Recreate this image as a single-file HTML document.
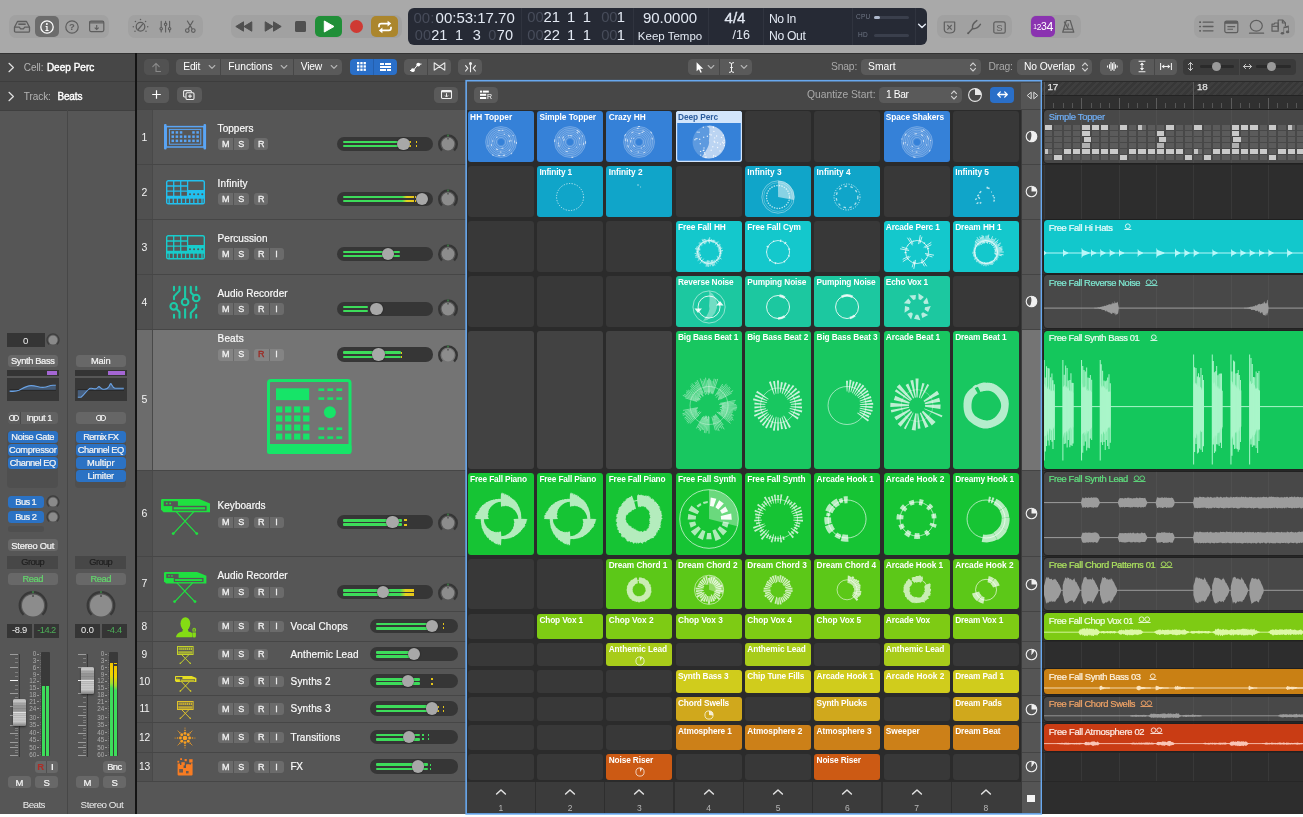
<!DOCTYPE html>
<html lang="en"><head><meta charset="utf-8"><title>Logic Pro - Live Loops</title>
<style>
html,body{margin:0;padding:0;background:#fff}
body{width:1303px;height:817px;overflow:hidden;position:relative;font-family:"Liberation Sans",sans-serif}
#app{position:absolute;left:0;top:0;width:1303px;height:817px;overflow:hidden;background:#fff;will-change:transform}
#app div,#app svg{position:absolute;box-sizing:border-box}
#app svg{overflow:visible}
.t{white-space:nowrap}
.c{overflow:hidden;border-radius:3px}
.c .t{font-size:8.3px;line-height:11px;color:#fff;left:2.3px;top:1.3px;font-weight:bold}
.b{background:#6b6b6b;color:#f2f2f2;font-size:9px;line-height:12px;text-align:center;height:12px}
</style></head>
<body><div id="app">
<!-- toolbar -->
<div style="left:0px;top:0px;width:1303px;height:53.2px;background:#a9a9a9"></div>
<div style="left:0px;top:52.6px;width:1303px;height:1.4px;background:#333"></div>
<div style="left:9px;top:14.7px;width:100px;height:23px;background:#a1a1a1;border-radius:7px"></div>
<div style="left:35px;top:15.9px;width:23.6px;height:20.9px;background:#6c6c6c;border-radius:5px"></div>
<svg style="left:13px;top:19px;" width="18" height="15" viewBox="0 0 18 15"><g fill="none" stroke="#5e5e5e" stroke-width="1.3" stroke-linejoin="round"><path d="M1.5 8.2 L4.5 2.5 H13.5 L16.5 8.2 V12 Q16.5 13.2 15.3 13.2 H2.7 Q1.5 13.2 1.5 12 Z"/><path d="M1.5 8.2 H6.3 L7.6 9.8 H10.4 L11.7 8.2 H16.5"/><path d="M5.3 5.2 H12.7" stroke-width="1.6"/></g></svg>
<svg style="left:39px;top:18.5px;" width="16" height="16" viewBox="0 0 16 16"><circle cx="8" cy="8" r="6.2" fill="none" stroke="#fff" stroke-width="1.3"/><circle cx="7.9" cy="4.9" r="1" fill="#fff"/><path d="M6.6 7 H8.6 V11 H9.6 V11.9 H6.4 V11 H7.4 V7.9 H6.6Z" fill="#fff"/></svg>
<svg style="left:63.5px;top:18.5px;" width="16" height="16" viewBox="0 0 16 16"><circle cx="8" cy="8" r="6.2" fill="none" stroke="#5e5e5e" stroke-width="1.2"/><text x="8" y="11.3" font-size="9.5" font-family='"Liberation Sans", sans-serif' text-anchor="middle" fill="#5e5e5e" font-weight="bold">?</text></svg>
<svg style="left:88px;top:19px;" width="18" height="15" viewBox="0 0 18 15"><rect x="1.6" y="2" width="14.2" height="10.6" rx="1.5" fill="none" stroke="#5e5e5e" stroke-width="1.2"/><rect x="1.6" y="2" width="14.2" height="2.6" fill="#5e5e5e" opacity=".75"/><path d="M8.7 6 V10.4 M6.7 8.6 L8.7 10.5 L10.7 8.6" fill="none" stroke="#5e5e5e" stroke-width="1.1"/></svg>
<div style="left:128px;top:14.7px;width:75px;height:23px;background:#a1a1a1;border-radius:7px"></div>
<svg style="left:129.5px;top:16px;" width="21" height="21" viewBox="0 0 21 21"><g fill="none" stroke="#5e5e5e" stroke-width="1.25" stroke-linecap="round"><circle cx="10.5" cy="10.7" r="4.3"/><path d="M8.2 13.5 L12.7 8.2"/></g><circle cx="10.50" cy="3.50" r=".75" fill="#5e5e5e"/><circle cx="15.59" cy="5.61" r=".75" fill="#5e5e5e"/><circle cx="17.70" cy="10.70" r=".75" fill="#5e5e5e"/><circle cx="16.02" cy="15.33" r=".75" fill="#5e5e5e"/><circle cx="4.98" cy="15.33" r=".75" fill="#5e5e5e"/><circle cx="3.30" cy="10.70" r=".75" fill="#5e5e5e"/><circle cx="5.41" cy="5.61" r=".75" fill="#5e5e5e"/></svg>
<svg style="left:156px;top:17px;" width="18" height="19" viewBox="0 0 18 19"><g fill="none" stroke="#5e5e5e" stroke-width="1.15" stroke-linecap="round"><path d="M5.2 4.4 V10.4 M5.2 13 V15 M9.6 4.4 V6 M9.6 8.6 V15 M13.6 4.4 V10.4 M13.6 13 V15"/><circle cx="5.2" cy="11.7" r="1.25"/><circle cx="9.6" cy="7.3" r="1.25"/><circle cx="13.6" cy="11.7" r="1.25"/></g></svg>
<svg style="left:182px;top:17px;" width="16" height="19" viewBox="0 0 16 19"><g fill="none" stroke="#5e5e5e" stroke-width="1.15" stroke-linecap="round"><path d="M5.4 4 L10 11.6 M11 4 L6.4 11.6"/><circle cx="5.3" cy="13.5" r="1.8"/><circle cx="11.3" cy="13.5" r="1.8"/></g></svg>
<div style="left:231px;top:14.7px;width:171px;height:23px;background:#a1a1a1;border-radius:7px"></div>
<svg style="left:234px;top:19px;" width="20" height="15" viewBox="0 0 20 15"><path d="M9.5 2.8 V12.2 L1.8 7.5 Z M17.8 2.8 V12.2 L10 7.5 Z" fill="#505050" stroke="#505050" stroke-width="1" stroke-linejoin="round"/></svg>
<svg style="left:263px;top:19px;" width="20" height="15" viewBox="0 0 20 15"><path d="M2.2 2.8 V12.2 L10 7.5 Z M10.5 2.8 V12.2 L18.2 7.5 Z" fill="#505050" stroke="#505050" stroke-width="1" stroke-linejoin="round"/></svg>
<div style="left:295px;top:21px;width:11px;height:11px;background:#505050;border-radius:1.5px"></div>
<div style="left:315.4px;top:16px;width:26.7px;height:20.6px;background:#208f38;border-radius:5px"></div>
<svg style="left:320px;top:19px;" width="17" height="15" viewBox="0 0 17 15"><path d="M4.3 2 V13 L14 7.5 Z" fill="#fff" stroke="#fff" stroke-width="1" stroke-linejoin="round"/></svg>
<div style="left:349.5px;top:20px;width:13px;height:13px;background:#cf3a33;border-radius:50%"></div>
<div style="left:371.2px;top:16px;width:26.8px;height:20.6px;background:#ab862d;border-radius:5px"></div>
<svg style="left:375.5px;top:18.5px;" width="18" height="16" viewBox="0 0 18 16"><g fill="none" stroke="#fff" stroke-width="1.7" stroke-linejoin="round"><path d="M3 8.2 V6.8 Q3 4.6 5.2 4.6 H12.4"/><path d="M15 7.8 V9.2 Q15 11.4 12.8 11.4 H5.6"/></g><path d="M11.6 1.8 L15.2 4.6 L11.6 7.4Z M6.4 8.6 L2.8 11.4 L6.4 14.2Z" fill="#fff"/></svg>
<div style="left:937px;top:14.7px;width:75px;height:23px;background:#a1a1a1;border-radius:7px"></div>
<svg style="left:942px;top:19.5px;" width="15" height="15" viewBox="0 0 15 15"><path d="M2.3 2 H12.7 V9.5 Q12.7 13 7.5 13 Q2.3 13 2.3 9.5 Z" fill="none" stroke="#5e5e5e" stroke-width="1.2" stroke-linejoin="round"/><path d="M5.3 5 L9.7 9.6 M9.7 5 L5.3 9.6" stroke="#5e5e5e" stroke-width="1.1"/></svg>
<svg style="left:965px;top:18px;" width="18" height="18" viewBox="0 0 18 18"><g fill="none" stroke="#5e5e5e" stroke-width="1.5" stroke-linecap="round"><path d="M3.2 15.2 L7.6 10.6"/><path d="M11.8 2.6 Q6.4 6.2 7.6 10.6 Q12 11.4 15.4 6.4"/></g><circle cx="3.2" cy="15.3" r="1" fill="#5e5e5e"/></svg>
<svg style="left:992px;top:19.5px;" width="15" height="15" viewBox="0 0 15 15"><rect x="1.8" y="1.8" width="11.4" height="11.4" rx="1.8" fill="none" stroke="#5e5e5e" stroke-width="1.2"/><text x="7.5" y="10.9" font-size="9.5" font-family='"Liberation Sans", sans-serif' text-anchor="middle" fill="#5e5e5e">S</text></svg>
<div style="left:1029.5px;top:14.7px;width:51.5px;height:23px;background:#a1a1a1;border-radius:7px"></div>
<div style="left:1030.6px;top:16px;width:24.6px;height:20.8px;background:#8a33b0;border-radius:5px"></div>
<div class="t" style="left:1033.3px;top:19.4px;color:#fff;line-height:14px;height:14px;white-space:nowrap;letter-spacing:-.35px"><span style="font-size:6.6px;vertical-align:middle">1</span><span style="font-size:8.4px;vertical-align:middle">2</span><span style="font-size:10.4px;vertical-align:middle">3</span><span style="font-size:12.4px;vertical-align:middle">4</span></div>
<svg style="left:1060px;top:18px;" width="17" height="17" viewBox="0 0 17 17"><g fill="none" stroke="#5e5e5e" stroke-width="1.2" stroke-linejoin="round"><path d="M6.3 2.5 H10.2 L13.8 14.2 H2.7 Z"/><path d="M3.6 11.2 H12.9"/><path d="M8.3 11 L4.2 3.6" /><path d="M8.2 5.6 V8.4" stroke-width="1.1"/></g></svg>
<div style="left:1194px;top:14.7px;width:101px;height:23px;background:#a1a1a1;border-radius:7px"></div>
<svg style="left:1198px;top:19px;" width="17" height="15" viewBox="0 0 17 15"><g stroke="#5e5e5e" stroke-width="1.3" stroke-linecap="round"><path d="M5.2 3.2 H15 M5.2 7.5 H15 M5.2 11.8 H15"/><path d="M1.9 3.2 h.4 M1.9 7.5 h.4 M1.9 11.8 h.4" stroke-width="1.7"/></g></svg>
<svg style="left:1223px;top:18.5px;" width="17" height="16" viewBox="0 0 17 16"><rect x="1.8" y="2.2" width="13" height="11.4" rx="1.6" fill="none" stroke="#5e5e5e" stroke-width="1.2"/><rect x="1.8" y="2.2" width="13" height="2.6" fill="#5e5e5e"/><path d="M4.4 7.6 H12.2 M4.4 10.3 H10" stroke="#5e5e5e" stroke-width="1.1"/></svg>
<svg style="left:1247px;top:18px;" width="19" height="18" viewBox="0 0 19 18"><g fill="none" stroke="#5e5e5e" stroke-width="1.2" stroke-linecap="round"><ellipse cx="9.3" cy="7.8" rx="6" ry="5.4"/><path d="M2.5 15.2 H16.6"/></g></svg>
<svg style="left:1270px;top:17px;" width="24" height="20" viewBox="0 0 24 20"><g fill="none" stroke="#5e5e5e" stroke-width="1.2" stroke-linejoin="round"><path d="M2 14.2 V7.2 H4 L5 6 H8.2 V14.2 Z"/><path d="M2 9.3 H8"/><path d="M8.2 12.6 V3 H12.6 L15.4 5.8 V9"/><path d="M12.4 3.2 V6 H15.2"/></g><g fill="#5e5e5e"><ellipse cx="12.4" cy="16.2" rx="1.7" ry="1.3"/><ellipse cx="17.6" cy="14.9" rx="1.7" ry="1.3"/><path d="M13.5 16.2 V9.8 L18.8 8.6 V14.9 H18 V10.4 L14.1 11.3 V16.2Z"/></g></svg>
<!-- lcd -->
<div style="left:408px;top:8px;width:519px;height:36.5px;background:#262a35;border-radius:6px"></div>
<div class="t" style="left:354.4px;width:80px;text-align:right;top:9.3px;font-size:15px;line-height:17px;color:#474c5a;">00:</div>
<div class="t" style="left:434.79999999999995px;width:80px;text-align:right;top:9.3px;font-size:15px;line-height:17px;color:#e3e9f3;">00:53:17.70</div>
<div class="t" style="left:351px;width:80px;text-align:right;top:27.2px;font-size:14.5px;line-height:16.5px;color:#474c5a;">00</div>
<div class="t" style="left:367.3px;width:80px;text-align:right;top:27.2px;font-size:14.5px;line-height:16.5px;color:#e3e9f3;">21</div>
<div class="t" style="left:383.2px;width:80px;text-align:right;top:27.2px;font-size:14.5px;line-height:16.5px;color:#e3e9f3;">1</div>
<div class="t" style="left:400.8px;width:80px;text-align:right;top:27.2px;font-size:14.5px;line-height:16.5px;color:#e3e9f3;">3</div>
<div class="t" style="left:416.3px;width:80px;text-align:right;top:27.2px;font-size:14.5px;line-height:16.5px;color:#474c5a;">0</div>
<div class="t" style="left:433px;width:80px;text-align:right;top:27.2px;font-size:14.5px;line-height:16.5px;color:#e3e9f3;">70</div>
<div class="t" style="left:463.79999999999995px;width:80px;text-align:right;top:9.3px;font-size:14.8px;line-height:16.8px;color:#474c5a;">00</div>
<div class="t" style="left:480px;width:80px;text-align:right;top:9.3px;font-size:14.8px;line-height:16.8px;color:#e3e9f3;">21</div>
<div class="t" style="left:495.29999999999995px;width:80px;text-align:right;top:9.3px;font-size:14.8px;line-height:16.8px;color:#e3e9f3;">1</div>
<div class="t" style="left:511px;width:80px;text-align:right;top:9.3px;font-size:14.8px;line-height:16.8px;color:#e3e9f3;">1</div>
<div class="t" style="left:537.6px;width:80px;text-align:right;top:9.3px;font-size:14.8px;line-height:16.8px;color:#474c5a;">00</div>
<div class="t" style="left:545px;width:80px;text-align:right;top:9.3px;font-size:14.8px;line-height:16.8px;color:#e3e9f3;">1</div>
<div class="t" style="left:463.79999999999995px;width:80px;text-align:right;top:27.2px;font-size:14.8px;line-height:16.8px;color:#474c5a;">00</div>
<div class="t" style="left:480px;width:80px;text-align:right;top:27.2px;font-size:14.8px;line-height:16.8px;color:#e3e9f3;">22</div>
<div class="t" style="left:495.29999999999995px;width:80px;text-align:right;top:27.2px;font-size:14.8px;line-height:16.8px;color:#e3e9f3;">1</div>
<div class="t" style="left:511px;width:80px;text-align:right;top:27.2px;font-size:14.8px;line-height:16.8px;color:#e3e9f3;">1</div>
<div class="t" style="left:537.6px;width:80px;text-align:right;top:27.2px;font-size:14.8px;line-height:16.8px;color:#474c5a;">00</div>
<div class="t" style="left:545px;width:80px;text-align:right;top:27.2px;font-size:14.8px;line-height:16.8px;color:#e3e9f3;">1</div>
<div style="left:520.5px;top:8px;width:1px;height:36.5px;background:#30343f"></div>
<div style="left:633px;top:8px;width:1px;height:36.5px;background:#30343f"></div>
<div style="left:707.5px;top:8px;width:1px;height:36.5px;background:#30343f"></div>
<div style="left:762.5px;top:8px;width:1px;height:36.5px;background:#30343f"></div>
<div style="left:851.5px;top:8px;width:1px;height:36.5px;background:#30343f"></div>
<div style="left:915px;top:8px;width:1px;height:36.5px;background:#30343f"></div>
<div class="t" style="left:633px;width:74px;text-align:center;top:9.3px;font-size:15px;line-height:17px;color:#e3e9f3">90.0000</div>
<div class="t" style="left:633px;width:74px;text-align:center;top:29px;font-size:11.5px;line-height:14px;color:#e3e9f3">Keep Tempo</div>
<div class="t" style="left:708px;width:54px;text-align:center;top:9.3px;font-size:15px;line-height:17px;color:#e3e9f3;-webkit-text-stroke:.3px #e3e9f3">4/4</div>
<div class="t" style="left:670px;width:80px;text-align:right;top:28px;font-size:12.5px;line-height:14.5px;color:#e3e9f3;">/16</div>
<div class="t" style="left:769px;top:11.5px;font-size:12.2px;line-height:14.2px;color:#e3e9f3;letter-spacing:-0.45px;">No In</div>
<div class="t" style="left:769px;top:29px;font-size:12.2px;line-height:14.2px;color:#e3e9f3;letter-spacing:-0.36px;">No Out</div>
<div class="t" style="left:856px;top:13px;font-size:6.5px;line-height:8.5px;color:#6f7685;letter-spacing:.2px">CPU</div>
<div class="t" style="left:858px;top:31px;font-size:6.5px;line-height:8.5px;color:#6f7685;letter-spacing:.2px">HD</div>
<div style="left:874px;top:15.5px;width:35px;height:3px;background:#3a3f4c;border-radius:1.5px"></div>
<div style="left:874px;top:15.5px;width:6px;height:3px;background:#aeb9cc;border-radius:1.5px"></div>
<div style="left:874px;top:33.5px;width:35px;height:3px;background:#3a3f4c;border-radius:1.5px"></div>
<svg style="left:916px;top:21px;" width="12" height="10" viewBox="0 0 12 10"><path d="M2.6 3.2 L6 6.6 L9.4 3.2" fill="none" stroke="#e3e9f3" stroke-width="1.4" stroke-linecap="round" stroke-linejoin="round"/></svg>
<!-- bars -->
<div style="left:0px;top:53.5px;width:1303px;height:56.5px;background:#474747"></div>
<div style="left:0px;top:80.5px;width:466px;height:1px;background:#3d3d3d"></div>
<svg style="left:6px;top:61.0px;" width="10" height="13" viewBox="0 0 10 13"><path d="M3 2.3 L7.4 6.5 L3 10.7" fill="none" stroke="#e0e0e0" stroke-width="1.2" stroke-linecap="round" stroke-linejoin="round"/></svg>
<div class="t" style="left:23.8px;top:62.3px;font-size:10px;line-height:12px;color:#b4b4b4;letter-spacing:-0.06px;">Cell:</div>
<div class="t" style="left:46.9px;top:62.3px;font-size:10px;line-height:12px;color:#fff;-webkit-text-stroke:.4px #fff;letter-spacing:0.01px;">Deep Perc</div>
<svg style="left:6px;top:89.8px;" width="10" height="13" viewBox="0 0 10 13"><path d="M3 2.3 L7.4 6.5 L3 10.7" fill="none" stroke="#e0e0e0" stroke-width="1.2" stroke-linecap="round" stroke-linejoin="round"/></svg>
<div class="t" style="left:23.8px;top:91.1px;font-size:10px;line-height:12px;color:#b4b4b4;letter-spacing:-0.07px;">Track:</div>
<div class="t" style="left:57.4px;top:91.1px;font-size:10px;line-height:12px;color:#fff;-webkit-text-stroke:.4px #fff;letter-spacing:-0.13px;">Beats</div>
<div style="left:135px;top:53px;width:1.6px;height:761px;background:#141414"></div>
<div style="left:144.2px;top:59px;width:24.8px;height:16px;background:#525252;border-radius:4.5px"></div>
<svg style="left:150px;top:60.5px;" width="13" height="12" viewBox="0 0 13 12"><path d="M6 10.5 V2.5 M2.8 5.6 L6 2.4 L9.2 5.6 M6 10.5 H10.5" fill="none" stroke="#8a8a8a" stroke-width="1.1" stroke-linecap="round" stroke-linejoin="round"/></svg>
<div style="left:176px;top:59px;width:166px;height:16px;background:#5a5a5a;border-radius:4.5px"></div>
<div style="left:220.2px;top:59px;width:1px;height:16px;background:#474747"></div>
<div style="left:293.4px;top:59px;width:1px;height:16px;background:#474747"></div>
<div class="t" style="left:183.3px;top:61px;font-size:10.3px;line-height:12.3px;color:#fff;letter-spacing:-0.26px;">Edit</div>
<svg style="left:207.5px;top:64px;" width="8" height="6" viewBox="0 0 8 6"><path d="M1.2 1.5 L4 4.3 L6.8 1.5" fill="none" stroke="#b5b5b5" stroke-width="1.1" stroke-linecap="round" stroke-linejoin="round"/></svg>
<div class="t" style="left:228.3px;top:61px;font-size:10.3px;line-height:12.3px;color:#fff;letter-spacing:-0.04px;">Functions</div>
<svg style="left:279.5px;top:64px;" width="8" height="6" viewBox="0 0 8 6"><path d="M1.2 1.5 L4 4.3 L6.8 1.5" fill="none" stroke="#b5b5b5" stroke-width="1.1" stroke-linecap="round" stroke-linejoin="round"/></svg>
<div class="t" style="left:300.8px;top:61px;font-size:10.3px;line-height:12.3px;color:#fff;letter-spacing:-0.21px;">View</div>
<svg style="left:329.5px;top:64px;" width="8" height="6" viewBox="0 0 8 6"><path d="M1.2 1.5 L4 4.3 L6.8 1.5" fill="none" stroke="#b5b5b5" stroke-width="1.1" stroke-linecap="round" stroke-linejoin="round"/></svg>
<div style="left:349.5px;top:59px;width:47.5px;height:16px;background:#2a6fc8;border-radius:4px"></div>
<div style="left:373px;top:59px;width:1px;height:16px;background:#245fae"></div>
<svg style="left:355.5px;top:61.3px;" width="11" height="11" viewBox="0 0 11 11"><rect x="1.0" y="1.0" width="2.3" height="2.3" fill="#fff"/><rect x="1.0" y="4.3" width="2.3" height="2.3" fill="#fff"/><rect x="1.0" y="7.6" width="2.3" height="2.3" fill="#fff"/><rect x="4.3" y="1.0" width="2.3" height="2.3" fill="#fff"/><rect x="4.3" y="4.3" width="2.3" height="2.3" fill="#fff"/><rect x="4.3" y="7.6" width="2.3" height="2.3" fill="#fff"/><rect x="7.6" y="1.0" width="2.3" height="2.3" fill="#fff"/><rect x="7.6" y="4.3" width="2.3" height="2.3" fill="#fff"/><rect x="7.6" y="7.6" width="2.3" height="2.3" fill="#fff"/></svg>
<svg style="left:378.5px;top:61.8px;" width="13" height="10" viewBox="0 0 13 10"><g fill="#fff"><rect x="1" y="1" width="4" height="2"/><rect x="6" y="1" width="6" height="2"/><rect x="1" y="4" width="11" height="2"/><rect x="1" y="7" width="6" height="2"/><rect x="8" y="7" width="4" height="2"/></g></svg>
<div style="left:403.5px;top:59px;width:47.5px;height:16px;background:#5a5a5a;border-radius:4.5px"></div>
<div style="left:427px;top:59px;width:1px;height:16px;background:#474747"></div>
<svg style="left:408px;top:60.5px;" width="15" height="12" viewBox="0 0 15 12"><path d="M2 9.6 L5.5 9.2 L10 3.4 L13.5 3" stroke="#fff" stroke-width="1" fill="none"/><circle cx="4.8" cy="9.2" r="1.9" fill="#fff"/><circle cx="10.3" cy="3.6" r="1.9" fill="#fff"/></svg>
<svg style="left:431.5px;top:61px;" width="15" height="11" viewBox="0 0 15 11"><path d="M2.2 1.6 V9.4 M12.8 1.6 V9.4 M2.2 1.8 L12.8 9.2 M12.8 1.8 L2.2 9.2" stroke="#e8e8e8" stroke-width="1.1" fill="none"/></svg>
<div style="left:458px;top:59px;width:23.5px;height:16px;background:#5a5a5a;border-radius:4.5px"></div>
<svg style="left:462.5px;top:60.5px;" width="15" height="12" viewBox="0 0 15 12"><g stroke="#f0f0f0" stroke-width="1.1" fill="none" stroke-linecap="round"><path d="M7.5 3.8 V10.8"/><path d="M2.6 4.6 L4.8 7.3 L2.6 10 M12.4 4.6 L10.2 7.3 L12.4 10"/></g><circle cx="7.5" cy="2.6" r="1.5" fill="#f0f0f0"/></svg>
<div style="left:688px;top:59px;width:64px;height:16px;background:#5a5a5a;border-radius:4.5px"></div>
<div style="left:719.3px;top:59px;width:1px;height:16px;background:#474747"></div>
<svg style="left:693.5px;top:60.5px;" width="10" height="13" viewBox="0 0 10 13"><path d="M2.6 1.2 V10.2 L4.9 8.2 L6.5 11.8 L7.8 11.2 L6.2 7.7 H9.2 Z" fill="#fff"/></svg>
<svg style="left:706.5px;top:64px;" width="8" height="6" viewBox="0 0 8 6"><path d="M1.2 1.5 L4 4.3 L6.8 1.5" fill="none" stroke="#b5b5b5" stroke-width="1.1" stroke-linecap="round" stroke-linejoin="round"/></svg>
<svg style="left:727px;top:60.5px;" width="9" height="13" viewBox="0 0 9 13"><path d="M2 1.6 Q4.5 1.6 4.5 3 Q4.5 1.6 7 1.6 M4.5 2.8 V10.2 M2 11.4 Q4.5 11.4 4.5 10 Q4.5 11.4 7 11.4 M3.2 6.5 H5.8" fill="none" stroke="#f0f0f0" stroke-width="1"/></svg>
<svg style="left:739.5px;top:64px;" width="8" height="6" viewBox="0 0 8 6"><path d="M1.2 1.5 L4 4.3 L6.8 1.5" fill="none" stroke="#b5b5b5" stroke-width="1.1" stroke-linecap="round" stroke-linejoin="round"/></svg>
<div class="t" style="left:831px;top:61px;font-size:10.3px;line-height:12.3px;color:#a9a9a9;letter-spacing:-0.16px;">Snap:</div>
<div style="left:860.5px;top:59px;width:120.5px;height:16px;background:#5a5a5a;border-radius:4.5px"></div>
<div class="t" style="left:868px;top:61px;font-size:10.3px;line-height:12.3px;color:#fff;letter-spacing:0.03px;">Smart</div>
<svg style="left:969px;top:60.5px;" width="8" height="12" viewBox="0 0 8 12"><path d="M1.5 4.6 L4 2 L6.5 4.6 M1.5 7.4 L4 10 L6.5 7.4" fill="none" stroke="#d0d0d0" stroke-width="1.1" stroke-linecap="round" stroke-linejoin="round"/></svg>
<div class="t" style="left:988.6px;top:61px;font-size:10.3px;line-height:12.3px;color:#a9a9a9;letter-spacing:-0.24px;">Drag:</div>
<div style="left:1016.8px;top:59px;width:75.5px;height:16px;background:#5a5a5a;border-radius:4.5px"></div>
<div class="t" style="left:1024px;top:61px;font-size:10.3px;line-height:12.3px;color:#fff;letter-spacing:-0.11px;">No Overlap</div>
<svg style="left:1081px;top:60.5px;" width="8" height="12" viewBox="0 0 8 12"><path d="M1.5 4.6 L4 2 L6.5 4.6 M1.5 7.4 L4 10 L6.5 7.4" fill="none" stroke="#d0d0d0" stroke-width="1.1" stroke-linecap="round" stroke-linejoin="round"/></svg>
<div style="left:1099.7px;top:59px;width:23px;height:16px;background:#5a5a5a;border-radius:4.5px"></div>
<svg style="left:1104.5px;top:61px;" width="14" height="11" viewBox="0 0 14 11"><path d="M2.5 4.6 V6.4 M4.5 3.2 V7.8 M6 1 V10 M7.5 2.2 V8.8 M9 1 V10 M10.5 3.2 V7.8 M12.2 4.6 V6.4" stroke="#f0f0f0" stroke-width="1.05" fill="none"/></svg>
<div style="left:1130px;top:59px;width:47px;height:16px;background:#5a5a5a;border-radius:4.5px"></div>
<div style="left:1153.5px;top:59px;width:1px;height:16px;background:#474747"></div>
<svg style="left:1135.5px;top:60px;" width="12" height="13" viewBox="0 0 12 13"><g stroke="#f0f0f0" stroke-width="1.05" fill="none"><path d="M2.6 1.3 H9.4 M2.6 11.7 H9.4 M6 3 V10"/></g><path d="M6 2.4 L8.1 5 H3.9Z M6 10.6 L8.1 8 H3.9Z" fill="#f0f0f0"/></svg>
<svg style="left:1158.5px;top:61px;" width="14" height="11" viewBox="0 0 14 11"><g stroke="#f0f0f0" stroke-width="1.05" fill="none"><path d="M1.6 2 V9 M12.4 2 V9 M3.4 5.5 H10.6"/></g><path d="M2.6 5.5 L5.2 3.5 V7.5Z M11.4 5.5 L8.8 3.5 V7.5Z" fill="#f0f0f0"/></svg>
<div style="left:1183px;top:59px;width:113px;height:16px;background:#3a3a3a;border-radius:4px"></div>
<div style="left:1239px;top:59px;width:1px;height:16px;background:#474747"></div>
<svg style="left:1186px;top:61px;" width="9" height="11" viewBox="0 0 9 11"><path d="M4.5 1.6 V9.4 M2.4 3.6 L4.5 1.5 L6.6 3.6 M2.4 7.4 L4.5 9.5 L6.6 7.4" fill="none" stroke="#c8c8c8" stroke-width="1" stroke-linecap="round" stroke-linejoin="round"/></svg>
<div style="left:1200px;top:65.3px;width:34px;height:2.4px;background:#2a2a2a;border-radius:1.2px"></div>
<div style="left:1212.2px;top:62px;width:9px;height:9px;background:#9a9a9a;border-radius:50%"></div>
<svg style="left:1242px;top:62px;" width="11" height="9" viewBox="0 0 11 9"><path d="M1.6 4.5 H9.4 M3.6 2.4 L1.5 4.5 L3.6 6.6 M7.4 2.4 L9.5 4.5 L7.4 6.6" fill="none" stroke="#c8c8c8" stroke-width="1" stroke-linecap="round" stroke-linejoin="round"/></svg>
<div style="left:1256px;top:65.3px;width:35px;height:2.4px;background:#2a2a2a;border-radius:1.2px"></div>
<div style="left:1266.8px;top:62px;width:9px;height:9px;background:#9a9a9a;border-radius:50%"></div>
<div style="left:144.2px;top:87.2px;width:24.8px;height:15.8px;background:#5a5a5a;border-radius:4.5px"></div>
<svg style="left:151px;top:89.2px;" width="11" height="11" viewBox="0 0 11 11"><path d="M5.5 1.2 V9.8 M1.2 5.5 H9.8" stroke="#fff" stroke-width="1.2" fill="none"/></svg>
<div style="left:176.5px;top:87.2px;width:25px;height:15.8px;background:#5a5a5a;border-radius:4.5px"></div>
<svg style="left:182px;top:88.7px;" width="14" height="12" viewBox="0 0 14 12"><g fill="none" stroke="#f0f0f0" stroke-width="1.05"><path d="M3.6 8 H2.7 Q1.6 8 1.6 6.9 V2.7 Q1.6 1.6 2.7 1.6 H8.3 Q9.4 1.6 9.4 2.7 V3.4"/><rect x="4" y="3.8" width="8" height="6.6" rx="1.1"/><path d="M8 5.3 V8.9 M6.2 7.1 H9.8"/></g></svg>
<div style="left:434.3px;top:87.2px;width:24px;height:15.8px;background:#5a5a5a;border-radius:4.5px"></div>
<svg style="left:440px;top:89.2px;" width="13" height="11" viewBox="0 0 13 11"><rect x="1.5" y="1.5" width="10" height="8" rx="1" fill="none" stroke="#f0f0f0" stroke-width="1.05"/><rect x="1.5" y="1.5" width="10" height="1.8" fill="#f0f0f0"/><path d="M6.5 4.2 V7.8 M5 6.5 L6.5 8 L8 6.5" stroke="#f0f0f0" stroke-width="1" fill="none"/></svg>
<div style="left:473.5px;top:87.2px;width:24.5px;height:15.8px;background:#5a5a5a;border-radius:4.5px"></div>
<svg style="left:478.5px;top:89.7px;" width="15" height="10" viewBox="0 0 15 10"><g fill="#fff"><rect x="1" y=".6" width="2" height="2"/><rect x="3.8" y=".6" width="6" height="2"/><rect x="1" y="3.8" width="6.2" height="2"/><rect x="1" y="7" width="6.2" height="2"/></g><text x="8" y="9.4" font-size="7" font-family='"Liberation Sans",sans-serif' fill="#fff">R</text></svg>
<div class="t" style="left:807px;top:89.0px;font-size:10.3px;line-height:12.3px;color:#a9a9a9;letter-spacing:-0.01px;">Quantize Start:</div>
<div style="left:878.5px;top:87.2px;width:83.5px;height:15.8px;background:#5a5a5a;border-radius:4.5px"></div>
<div class="t" style="left:886px;top:89.0px;font-size:10.3px;line-height:12.3px;color:#fff;letter-spacing:-0.40px;">1 Bar</div>
<svg style="left:950px;top:88.7px;" width="8" height="12" viewBox="0 0 8 12"><path d="M1.5 4.6 L4 2 L6.5 4.6 M1.5 7.4 L4 10 L6.5 7.4" fill="none" stroke="#d0d0d0" stroke-width="1.1" stroke-linecap="round" stroke-linejoin="round"/></svg>
<svg style="left:966.5px;top:86.9px;" width="16" height="16" viewBox="0 0 16 16"><circle cx="8" cy="8" r="6.4" fill="none" stroke="#e6e6e6" stroke-width="1.1"/><path d="M8 8 V1.6 A6.4 6.4 0 0 1 14.4 8 Z" fill="#e6e6e6"/></svg>
<div style="left:990px;top:87.2px;width:24.3px;height:15.8px;background:#2a6fc8;border-radius:4px"></div>
<svg style="left:995.6px;top:90.2px;" width="13" height="9" viewBox="0 0 13 9"><path d="M1.8 4.5 H11.2 M4.3 1.9 L1.7 4.5 L4.3 7.1 M8.7 1.9 L11.3 4.5 L8.7 7.1" fill="none" stroke="#fff" stroke-width="1.3" stroke-linecap="round" stroke-linejoin="round"/></svg>
<div style="left:1021.3px;top:82.5px;width:19.5px;height:27.5px;background:#555"></div>
<svg style="left:1025.5px;top:90.7px;" width="13" height="9" viewBox="0 0 13 9"><path d="M5.2 1.2 V7.8 L1.2 4.5 Z M7.8 1.2 V7.8 L11.8 4.5 Z" fill="none" stroke="#dcdcdc" stroke-width="1" stroke-linejoin="round"/></svg>
<!-- inspector -->
<div style="left:0px;top:110px;width:135px;height:704px;background:#565656"></div>
<div style="left:0px;top:109.5px;width:135px;height:1px;background:#3f3f3f"></div>
<div style="left:67.3px;top:110px;width:0.9px;height:704px;background:#474747"></div>
<div class="t" style="left:7.5px;top:354.7px;width:50.5px;height:12.3px;background:#686868;border-radius:3.5px;color:#f4f4f4;font-size:9.3px;line-height:13.9px;text-align:center;letter-spacing:-0.36px;-webkit-text-stroke:.22px #f4f4f4;">Synth Bass</div>
<div style="left:7.0px;top:370px;width:51.5px;height:6.3px;background:#343434"></div>
<div style="left:47.1px;top:371px;width:10.2px;height:4.3px;background:#a566d4"></div>
<div style="left:7.0px;top:378.2px;width:51.5px;height:23px;background:#373737"></div>
<svg style="left:7.0px;top:378.2px;" width="51.5" height="23" viewBox="0 0 51.5 23"><path d="M2.6 12 H49" stroke="#1c1c1c" stroke-width="1"/><path d="M2.6 13.2 C6 13.6 9 13.6 12 12.3 C16 10.2 19 7.8 24 7.6 C29 7.4 32 9.8 37 9.3 C41 8.9 42 7.4 46 7.3 L48.8 7.3 V12 H2.6Z" fill="#5b8fd0" opacity=".4"/><path d="M2.6 13.2 C6 13.6 9 13.6 12 12.3 C16 10.2 19 7.8 24 7.6 C29 7.4 32 9.8 37 9.3 C41 8.9 42 7.4 46 7.3 L48.8 7.3" fill="none" stroke="#6aa2e4" stroke-width="1.1"/></svg>
<div class="t" style="left:7.5px;top:412.2px;width:50.5px;height:12.2px;background:#626262;border-radius:3.5px;color:#f4f4f4;font-size:9.3px;line-height:13.799999999999999px;text-align:center;letter-spacing:0;-webkit-text-stroke:.22px #f4f4f4;"></div>
<div style="left:7.5px;top:412.2px;width:13px;height:12.2px;background:#5d5d5d;border-radius:3.5px 0 0 3.5px"></div>
<div style="left:20.1px;top:412.2px;width:0.8px;height:12.2px;background:#4a4a4a"></div>
<svg style="left:8.1px;top:414.3px;" width="12" height="8" viewBox="0 0 12 8"><circle cx="4.1" cy="4" r="2.7" fill="none" stroke="#f0f0f0" stroke-width="1"/><circle cx="7.9" cy="4" r="2.7" fill="none" stroke="#f0f0f0" stroke-width="1"/></svg>
<div class="t" style="left:20.5px;top:413.4px;font-size:9.3px;line-height:11.3px;color:#f4f4f4;width:37.5px;text-align:center;-webkit-text-stroke:.22px #f4f4f4;letter-spacing:-0.39px;">Input 1</div>
<div style="left:7.2px;top:431px;width:51.1px;height:56.5px;background:#4f4f4f;border-radius:4px"></div>
<div class="t" style="left:7.5px;top:431.1px;width:50.5px;height:11.9px;background:#2b72c4;border-radius:3.5px;color:#f4f4f4;font-size:9.3px;line-height:13.5px;text-align:center;letter-spacing:-0.37px;-webkit-text-stroke:.22px #f4f4f4;">Noise Gate</div>
<div class="t" style="left:7.5px;top:444.05px;width:50.5px;height:11.9px;background:#2b72c4;border-radius:3.5px;color:#f4f4f4;font-size:9.3px;line-height:13.5px;text-align:center;letter-spacing:-0.33px;-webkit-text-stroke:.22px #f4f4f4;">Compressor</div>
<div class="t" style="left:7.5px;top:457.0px;width:50.5px;height:11.9px;background:#2b72c4;border-radius:3.5px;color:#f4f4f4;font-size:9.3px;line-height:13.5px;text-align:center;letter-spacing:-0.48px;-webkit-text-stroke:.22px #f4f4f4;">Channel EQ</div>
<div class="t" style="left:7.5px;top:495.7px;width:36.5px;height:12.2px;background:#2b72c4;border-radius:3.5px;color:#f4f4f4;font-size:9.3px;line-height:13.799999999999999px;text-align:center;letter-spacing:-0.60px;-webkit-text-stroke:.22px #f4f4f4;">Bus 1</div>
<svg style="left:45.6px;top:494.8px;" width="14" height="14" viewBox="0 0 14 14"><path d="M3.2 11.6 A6 6 0 1 1 10.8 11.6" fill="none" stroke="#3d3d3d" stroke-width="1.3"/><circle cx="7" cy="7" r="4.5" fill="#8a8a8a"/></svg>
<div class="t" style="left:7.5px;top:511.09999999999997px;width:36.5px;height:12.2px;background:#2b72c4;border-radius:3.5px;color:#f4f4f4;font-size:9.3px;line-height:13.799999999999999px;text-align:center;letter-spacing:-0.52px;-webkit-text-stroke:.22px #f4f4f4;">Bus 2</div>
<svg style="left:45.6px;top:510.1px;" width="14" height="14" viewBox="0 0 14 14"><path d="M3.2 11.6 A6 6 0 1 1 10.8 11.6" fill="none" stroke="#3d3d3d" stroke-width="1.3"/><circle cx="7" cy="7" r="4.5" fill="#8a8a8a"/></svg>
<div style="left:7.5px;top:525.8px;width:36.5px;height:6px;background:#4f4f4f;border-radius:3px"></div>
<div class="t" style="left:7.5px;top:539px;width:50.5px;height:12.4px;background:#686868;border-radius:3.5px;color:#f4f4f4;font-size:9.3px;line-height:14.0px;text-align:center;letter-spacing:-0.22px;-webkit-text-stroke:.22px #f4f4f4;">Stereo Out</div>
<div style="left:7px;top:333.3px;width:37.5px;height:13.5px;background:#353535"></div>
<div class="t" style="left:7px;top:334.6px;font-size:9.6px;line-height:11.6px;color:#f0f0f0;width:37.5px;text-align:center;">0</div>
<svg style="left:45.6px;top:333.2px;" width="14" height="14" viewBox="0 0 14 14"><path d="M3.2 11.6 A6 6 0 1 1 10.8 11.6" fill="none" stroke="#3d3d3d" stroke-width="1.3"/><circle cx="7" cy="7" r="4.5" fill="#8a8a8a"/></svg>
<div class="t" style="left:7.2px;top:555.5px;width:51.1px;height:13.2px;background:#474747;color:#1f1f1f;-webkit-text-stroke:.2px #1f1f1f;font-size:9.3px;line-height:13.2px;text-align:center;letter-spacing:-0.59px;">Group</div>
<div class="t" style="left:7.5px;top:573px;width:50.5px;height:12.2px;background:#686868;border-radius:3.5px;color:#63d56c;font-size:9.3px;line-height:13.799999999999999px;text-align:center;letter-spacing:-0.48px;-webkit-text-stroke:.22px #63d56c;">Read</div>
<svg style="left:16.700000000000003px;top:589px;" width="32" height="32" viewBox="0 0 32 32"><path d="M6.60 25.80 A13.3 13.3 0 1 1 25.40 25.80" fill="none" stroke="#383838" stroke-width="2.2"/><circle cx="16" cy="16.4" r="11" fill="#8c8c8c"/><path d="M16 1.9999999999999978 v2.2" stroke="#3fae4d" stroke-width="1"/><path d="M16 5.999999999999998 v2.0" stroke="#3c3c3c" stroke-width="1.2"/></svg>
<div style="left:7px;top:624.1px;width:25px;height:13.6px;background:#353535"></div>
<div class="t" style="left:7px;top:625.3px;font-size:9.3px;line-height:11.3px;color:#f0f0f0;width:25px;text-align:center;letter-spacing:-0.26px;">-8.9</div>
<div style="left:34px;top:624.1px;width:25px;height:13.6px;background:#353535"></div>
<div class="t" style="left:34px;top:625.3px;font-size:9.3px;line-height:11.3px;color:#4dae58;width:25px;text-align:center;letter-spacing:-0.54px;">-14.2</div>
<div style="left:19px;top:653.8px;width:1.3px;height:103px;background:#3a3a3a"></div>
<div style="left:9.8px;top:654.1px;width:8.6px;height:1px;background:#9c9c9c"></div>
<div style="left:15px;top:658.0px;width:3.4px;height:1px;background:#808080"></div>
<div style="left:15px;top:662.3px;width:3.4px;height:1px;background:#808080"></div>
<div style="left:9.8px;top:667.0px;width:8.6px;height:1px;background:#9c9c9c"></div>
<div style="left:15px;top:671.5px;width:3.4px;height:1px;background:#808080"></div>
<div style="left:15px;top:675.5px;width:3.4px;height:1px;background:#808080"></div>
<div style="left:9.8px;top:680.0px;width:8.6px;height:1px;background:#f4f4f4"></div>
<div style="left:15px;top:684.5px;width:3.4px;height:1px;background:#808080"></div>
<div style="left:15px;top:689.0px;width:3.4px;height:1px;background:#808080"></div>
<div style="left:9.8px;top:692.7px;width:8.6px;height:1px;background:#9c9c9c"></div>
<div style="left:15px;top:697.1px;width:3.4px;height:1px;background:#808080"></div>
<div style="left:15px;top:701.5px;width:3.4px;height:1px;background:#808080"></div>
<div style="left:9.8px;top:706.0px;width:8.6px;height:1px;background:#9c9c9c"></div>
<div style="left:15px;top:709.0px;width:3.4px;height:1px;background:#808080"></div>
<div style="left:15px;top:711.7px;width:3.4px;height:1px;background:#808080"></div>
<div style="left:9.8px;top:714.5px;width:8.6px;height:1px;background:#9c9c9c"></div>
<div style="left:15px;top:717.1px;width:3.4px;height:1px;background:#808080"></div>
<div style="left:15px;top:719.7px;width:3.4px;height:1px;background:#808080"></div>
<div style="left:15px;top:722.3px;width:3.4px;height:1px;background:#808080"></div>
<div style="left:9.8px;top:725.0px;width:8.6px;height:1px;background:#9c9c9c"></div>
<div style="left:15px;top:727.5px;width:3.4px;height:1px;background:#808080"></div>
<div style="left:15px;top:730.0px;width:3.4px;height:1px;background:#808080"></div>
<div style="left:9.8px;top:732.5px;width:8.6px;height:1px;background:#9c9c9c"></div>
<div style="left:15px;top:735.0px;width:3.4px;height:1px;background:#808080"></div>
<div style="left:15px;top:737.5px;width:3.4px;height:1px;background:#808080"></div>
<div style="left:9.8px;top:742.0px;width:8.6px;height:1px;background:#9c9c9c"></div>
<div style="left:15px;top:744.5px;width:3.4px;height:1px;background:#808080"></div>
<div style="left:9.8px;top:747.0px;width:8.6px;height:1px;background:#9c9c9c"></div>
<div style="left:15px;top:749.5px;width:3.4px;height:1px;background:#808080"></div>
<div style="left:15px;top:752.0px;width:3.4px;height:1px;background:#808080"></div>
<div style="left:9.8px;top:755.3px;width:8.6px;height:1px;background:#9c9c9c"></div>
<div style="left:13px;top:699px;width:13.3px;height:27px;border-radius:1.5px;background:linear-gradient(#b2b2b2 0,#c6c6c6 7%,#c2c2c2 11%,#9e9e9e 15%,#a6a6a6 20%,#8c8c8c 25%,#9c9c9c 30%,#888 35%,#999 40%,#8c8c8c 46%,#f2f2f2 47.5%,#f2f2f2 49.5%,#aaa 51.5%,#c8c8c8 57%,#b4b4b4 61%,#cbcbcb 65%,#b8b8b8 69%,#cdcdcd 73%,#bbb 78%,#c9c9c9 83%,#aaa 90%,#7e7e7e 100%);box-shadow:0 1px 2px rgba(0,0,0,.5)"></div>
<div style="left:41.3px;top:652.2px;width:8.3px;height:104.3px;background:#393939;border-radius:1px"></div>
<div style="left:42.199999999999996px;top:685.8px;width:2.6px;height:70.2px;background:#3ddc5a"></div>
<div style="left:46.0px;top:685.8px;width:2.6px;height:70.2px;background:#3ddc5a"></div>
<div class="t" style="left:17.9px;width:18.2px;text-align:right;top:650px;font-size:6.3px;line-height:8px;color:#adadad;letter-spacing:-.15px">0</div>
<div style="left:37.4px;top:653.6px;width:1.7px;height:0.8px;background:#9a9a9a"></div>
<div class="t" style="left:17.9px;width:18.2px;text-align:right;top:656.7px;font-size:6.3px;line-height:8px;color:#adadad;letter-spacing:-.15px">3</div>
<div style="left:37.4px;top:660.3000000000001px;width:1.7px;height:0.8px;background:#9a9a9a"></div>
<div class="t" style="left:17.9px;width:18.2px;text-align:right;top:663.6px;font-size:6.3px;line-height:8px;color:#adadad;letter-spacing:-.15px">6</div>
<div style="left:37.4px;top:667.2px;width:1.7px;height:0.8px;background:#9a9a9a"></div>
<div class="t" style="left:17.9px;width:18.2px;text-align:right;top:670.5px;font-size:6.3px;line-height:8px;color:#adadad;letter-spacing:-.15px">9</div>
<div style="left:37.4px;top:674.1px;width:1.7px;height:0.8px;background:#9a9a9a"></div>
<div class="t" style="left:17.9px;width:18.2px;text-align:right;top:677.2px;font-size:6.3px;line-height:8px;color:#adadad;letter-spacing:-.15px">12</div>
<div style="left:37.4px;top:680.8000000000001px;width:1.7px;height:0.8px;background:#9a9a9a"></div>
<div class="t" style="left:17.9px;width:18.2px;text-align:right;top:684px;font-size:6.3px;line-height:8px;color:#adadad;letter-spacing:-.15px">15</div>
<div style="left:37.4px;top:687.6px;width:1.7px;height:0.8px;background:#9a9a9a"></div>
<div class="t" style="left:17.9px;width:18.2px;text-align:right;top:691px;font-size:6.3px;line-height:8px;color:#adadad;letter-spacing:-.15px">18</div>
<div style="left:37.4px;top:694.6px;width:1.7px;height:0.8px;background:#9a9a9a"></div>
<div class="t" style="left:17.9px;width:18.2px;text-align:right;top:697.8px;font-size:6.3px;line-height:8px;color:#adadad;letter-spacing:-.15px">21</div>
<div style="left:37.4px;top:701.4px;width:1.7px;height:0.8px;background:#9a9a9a"></div>
<div class="t" style="left:17.9px;width:18.2px;text-align:right;top:704.5px;font-size:6.3px;line-height:8px;color:#adadad;letter-spacing:-.15px">24</div>
<div style="left:37.4px;top:708.1px;width:1.7px;height:0.8px;background:#9a9a9a"></div>
<div class="t" style="left:17.9px;width:18.2px;text-align:right;top:713.6px;font-size:6.3px;line-height:8px;color:#adadad;letter-spacing:-.15px">30</div>
<div style="left:37.4px;top:717.2px;width:1.7px;height:0.8px;background:#9a9a9a"></div>
<div class="t" style="left:17.9px;width:18.2px;text-align:right;top:721.2px;font-size:6.3px;line-height:8px;color:#adadad;letter-spacing:-.15px">35</div>
<div style="left:37.4px;top:724.8000000000001px;width:1.7px;height:0.8px;background:#9a9a9a"></div>
<div class="t" style="left:17.9px;width:18.2px;text-align:right;top:728.6px;font-size:6.3px;line-height:8px;color:#adadad;letter-spacing:-.15px">40</div>
<div style="left:37.4px;top:732.2px;width:1.7px;height:0.8px;background:#9a9a9a"></div>
<div class="t" style="left:17.9px;width:18.2px;text-align:right;top:736.2px;font-size:6.3px;line-height:8px;color:#adadad;letter-spacing:-.15px">45</div>
<div style="left:37.4px;top:739.8000000000001px;width:1.7px;height:0.8px;background:#9a9a9a"></div>
<div class="t" style="left:17.9px;width:18.2px;text-align:right;top:743.6px;font-size:6.3px;line-height:8px;color:#adadad;letter-spacing:-.15px">50</div>
<div style="left:37.4px;top:747.2px;width:1.7px;height:0.8px;background:#9a9a9a"></div>
<div class="t" style="left:17.9px;width:18.2px;text-align:right;top:751.2px;font-size:6.3px;line-height:8px;color:#adadad;letter-spacing:-.15px">60</div>
<div style="left:37.4px;top:754.8000000000001px;width:1.7px;height:0.8px;background:#9a9a9a"></div>
<div style="left:40.3px;top:653px;width:1px;height:103px;background:repeating-linear-gradient(#777 0,#777 .8px,transparent .8px,transparent 2.3px);opacity:.7"></div>
<div class="t" style="left:35px;top:761px;width:22.8px;height:11.5px;background:#686868;border-radius:3.5px;color:#f4f4f4;font-size:9.3px;line-height:13.1px;text-align:center;letter-spacing:0;-webkit-text-stroke:.22px #f4f4f4;"></div>
<div style="left:46.3px;top:761px;width:0.8px;height:11.5px;background:#505050"></div>
<div class="t" style="left:35px;top:761px;font-size:9.5px;line-height:11.5px;color:#b12b25;width:11.4px;text-align:center;font-weight:bold">R</div>
<div class="t" style="left:46.8px;top:761px;font-size:9.5px;line-height:11.5px;color:#f0f0f0;width:11px;text-align:center;font-weight:bold">I</div>
<div class="t" style="left:7.5px;top:776px;width:23.2px;height:11.6px;background:#686868;border-radius:3.5px;color:#f4f4f4;font-size:9.5px;line-height:13.2px;text-align:center;letter-spacing:-0.59px;-webkit-text-stroke:.22px #f4f4f4;">M</div>
<div class="t" style="left:35px;top:776px;width:22.9px;height:11.6px;background:#686868;border-radius:3.5px;color:#f4f4f4;font-size:9.5px;line-height:13.2px;text-align:center;letter-spacing:-0.48px;-webkit-text-stroke:.22px #f4f4f4;">S</div>
<div class="t" style="left:-6.200000000000003px;top:798.5px;font-size:9.8px;line-height:11.8px;color:#ececec;width:80px;text-align:center;letter-spacing:-0.55px;">Beats</div>
<div class="t" style="left:75.5px;top:354.7px;width:50.5px;height:12.3px;background:#686868;border-radius:3.5px;color:#f4f4f4;font-size:9.3px;line-height:13.9px;text-align:center;letter-spacing:-0.14px;-webkit-text-stroke:.22px #f4f4f4;">Main</div>
<div style="left:75.0px;top:370px;width:51.5px;height:6.3px;background:#343434"></div>
<div style="left:108.1px;top:371px;width:17.2px;height:4.3px;background:#a566d4"></div>
<div style="left:75.0px;top:378.2px;width:51.5px;height:23px;background:#373737"></div>
<svg style="left:75.0px;top:378.2px;" width="51.5" height="23" viewBox="0 0 51.5 23"><path d="M2.6 12 H49" stroke="#1c1c1c" stroke-width="1"/><path d="M2.8 19.3 L6 19.3 C9 17 11 13 14.5 10.6 C17 9.4 18 11.4 21 10.8 C22.5 10.4 23 8.6 24 8.6 C25 8.6 26 11 28 11.2 C31 11.6 33 10.6 34 8.6 C35 6.4 35.2 5.6 35.8 5.6 C36.6 5.6 37 9.4 40 10.2 L48.8 10.2 V12 H2.8Z" fill="#5b8fd0" opacity=".45"/><path d="M2.8 19.3 L6 19.3 C9 17 11 13 14.5 10.6 C17 9.4 18 11.4 21 10.8 C22.5 10.4 23 8.6 24 8.6 C25 8.6 26 11 28 11.2 C31 11.6 33 10.6 34 8.6 C35 6.4 35.2 5.6 35.8 5.6 C36.6 5.6 37 9.4 40 10.2 L48.8 10.2" fill="none" stroke="#6aa2e4" stroke-width="1.1"/></svg>
<div class="t" style="left:75.5px;top:412.2px;width:50.5px;height:12.2px;background:#666;border-radius:3.5px;color:#f4f4f4;font-size:9.3px;line-height:13.799999999999999px;text-align:center;letter-spacing:0;-webkit-text-stroke:.22px #f4f4f4;"></div>
<svg style="left:94.75px;top:414.3px;" width="12" height="8" viewBox="0 0 12 8"><circle cx="4.1" cy="4" r="2.7" fill="none" stroke="#f0f0f0" stroke-width="1"/><circle cx="7.9" cy="4" r="2.7" fill="none" stroke="#f0f0f0" stroke-width="1"/></svg>
<div style="left:75.2px;top:431px;width:51.1px;height:56.5px;background:#4f4f4f;border-radius:4px"></div>
<div class="t" style="left:75.5px;top:431.1px;width:50.5px;height:11.9px;background:#2b72c4;border-radius:3.5px;color:#f4f4f4;font-size:9.3px;line-height:13.5px;text-align:center;letter-spacing:-0.70px;-webkit-text-stroke:.22px #f4f4f4;">Remix FX</div>
<div class="t" style="left:75.5px;top:444.05px;width:50.5px;height:11.9px;background:#2b72c4;border-radius:3.5px;color:#f4f4f4;font-size:9.3px;line-height:13.5px;text-align:center;letter-spacing:-0.48px;-webkit-text-stroke:.22px #f4f4f4;">Channel EQ</div>
<div class="t" style="left:75.5px;top:457.0px;width:50.5px;height:11.9px;background:#2b72c4;border-radius:3.5px;color:#f4f4f4;font-size:9.3px;line-height:13.5px;text-align:center;letter-spacing:-0.06px;-webkit-text-stroke:.22px #f4f4f4;">Multipr</div>
<div class="t" style="left:75.5px;top:469.95000000000005px;width:50.5px;height:11.9px;background:#2b72c4;border-radius:3.5px;color:#f4f4f4;font-size:9.3px;line-height:13.5px;text-align:center;letter-spacing:-0.19px;-webkit-text-stroke:.22px #f4f4f4;">Limiter</div>
<div class="t" style="left:75.2px;top:555.5px;width:51.1px;height:13.2px;background:#474747;color:#1f1f1f;-webkit-text-stroke:.2px #1f1f1f;font-size:9.3px;line-height:13.2px;text-align:center;letter-spacing:-0.59px;">Group</div>
<div class="t" style="left:75.5px;top:573px;width:50.5px;height:12.2px;background:#686868;border-radius:3.5px;color:#63d56c;font-size:9.3px;line-height:13.799999999999999px;text-align:center;letter-spacing:-0.48px;-webkit-text-stroke:.22px #63d56c;">Read</div>
<svg style="left:84.5px;top:589px;" width="32" height="32" viewBox="0 0 32 32"><path d="M6.60 25.80 A13.3 13.3 0 1 1 25.40 25.80" fill="none" stroke="#383838" stroke-width="2.2"/><circle cx="16" cy="16.4" r="11" fill="#8c8c8c"/><path d="M16 1.9999999999999978 v2.2" stroke="#3fae4d" stroke-width="1"/><path d="M16 5.999999999999998 v2.0" stroke="#3c3c3c" stroke-width="1.2"/></svg>
<div style="left:75px;top:624.1px;width:25px;height:13.6px;background:#353535"></div>
<div class="t" style="left:75px;top:625.3px;font-size:9.3px;line-height:11.3px;color:#f0f0f0;width:25px;text-align:center;letter-spacing:0.02px;">0.0</div>
<div style="left:102px;top:624.1px;width:25px;height:13.6px;background:#353535"></div>
<div class="t" style="left:102px;top:625.3px;font-size:9.3px;line-height:11.3px;color:#4dae58;width:25px;text-align:center;letter-spacing:-0.26px;">-4.4</div>
<div style="left:87px;top:653.8px;width:1.3px;height:103px;background:#3a3a3a"></div>
<div style="left:77.8px;top:654.1px;width:8.600000000000003px;height:1px;background:#9c9c9c"></div>
<div style="left:83px;top:658.0px;width:3.4px;height:1px;background:#808080"></div>
<div style="left:83px;top:662.3px;width:3.4px;height:1px;background:#808080"></div>
<div style="left:77.8px;top:667.0px;width:8.600000000000003px;height:1px;background:#9c9c9c"></div>
<div style="left:83px;top:671.5px;width:3.4px;height:1px;background:#808080"></div>
<div style="left:83px;top:675.5px;width:3.4px;height:1px;background:#808080"></div>
<div style="left:77.8px;top:680.0px;width:8.600000000000003px;height:1px;background:#f4f4f4"></div>
<div style="left:83px;top:684.5px;width:3.4px;height:1px;background:#808080"></div>
<div style="left:83px;top:689.0px;width:3.4px;height:1px;background:#808080"></div>
<div style="left:77.8px;top:692.7px;width:8.600000000000003px;height:1px;background:#9c9c9c"></div>
<div style="left:83px;top:697.1px;width:3.4px;height:1px;background:#808080"></div>
<div style="left:83px;top:701.5px;width:3.4px;height:1px;background:#808080"></div>
<div style="left:77.8px;top:706.0px;width:8.600000000000003px;height:1px;background:#9c9c9c"></div>
<div style="left:83px;top:709.0px;width:3.4px;height:1px;background:#808080"></div>
<div style="left:83px;top:711.7px;width:3.4px;height:1px;background:#808080"></div>
<div style="left:77.8px;top:714.5px;width:8.600000000000003px;height:1px;background:#9c9c9c"></div>
<div style="left:83px;top:717.1px;width:3.4px;height:1px;background:#808080"></div>
<div style="left:83px;top:719.7px;width:3.4px;height:1px;background:#808080"></div>
<div style="left:83px;top:722.3px;width:3.4px;height:1px;background:#808080"></div>
<div style="left:77.8px;top:725.0px;width:8.600000000000003px;height:1px;background:#9c9c9c"></div>
<div style="left:83px;top:727.5px;width:3.4px;height:1px;background:#808080"></div>
<div style="left:83px;top:730.0px;width:3.4px;height:1px;background:#808080"></div>
<div style="left:77.8px;top:732.5px;width:8.600000000000003px;height:1px;background:#9c9c9c"></div>
<div style="left:83px;top:735.0px;width:3.4px;height:1px;background:#808080"></div>
<div style="left:83px;top:737.5px;width:3.4px;height:1px;background:#808080"></div>
<div style="left:77.8px;top:742.0px;width:8.600000000000003px;height:1px;background:#9c9c9c"></div>
<div style="left:83px;top:744.5px;width:3.4px;height:1px;background:#808080"></div>
<div style="left:77.8px;top:747.0px;width:8.600000000000003px;height:1px;background:#9c9c9c"></div>
<div style="left:83px;top:749.5px;width:3.4px;height:1px;background:#808080"></div>
<div style="left:83px;top:752.0px;width:3.4px;height:1px;background:#808080"></div>
<div style="left:77.8px;top:755.3px;width:8.600000000000003px;height:1px;background:#9c9c9c"></div>
<div style="left:81px;top:666.8px;width:13.3px;height:27px;border-radius:1.5px;background:linear-gradient(#b2b2b2 0,#c6c6c6 7%,#c2c2c2 11%,#9e9e9e 15%,#a6a6a6 20%,#8c8c8c 25%,#9c9c9c 30%,#888 35%,#999 40%,#8c8c8c 46%,#f2f2f2 47.5%,#f2f2f2 49.5%,#aaa 51.5%,#c8c8c8 57%,#b4b4b4 61%,#cbcbcb 65%,#b8b8b8 69%,#cdcdcd 73%,#bbb 78%,#c9c9c9 83%,#aaa 90%,#7e7e7e 100%);box-shadow:0 1px 2px rgba(0,0,0,.5)"></div>
<div style="left:109.3px;top:652.2px;width:8.3px;height:104.3px;background:#393939;border-radius:1px"></div>
<div style="left:110.2px;top:663.2px;width:2.6px;height:92.79999999999995px;background:linear-gradient(#f2c500 0,#f0d400 12%,#9fdc30 22%,#3ddc5a 27%)"></div>
<div style="left:114.0px;top:665.5px;width:2.6px;height:90.5px;background:linear-gradient(#f2c500 0,#f0d400 12%,#9fdc30 22%,#3ddc5a 27%)"></div>
<div style="left:114.0px;top:662.6px;width:2.6px;height:1.2px;background:#f2c500"></div>
<div class="t" style="left:85.9px;width:18.2px;text-align:right;top:650px;font-size:6.3px;line-height:8px;color:#adadad;letter-spacing:-.15px">0</div>
<div style="left:105.39999999999999px;top:653.6px;width:1.7px;height:0.8px;background:#9a9a9a"></div>
<div class="t" style="left:85.9px;width:18.2px;text-align:right;top:656.7px;font-size:6.3px;line-height:8px;color:#adadad;letter-spacing:-.15px">3</div>
<div style="left:105.39999999999999px;top:660.3000000000001px;width:1.7px;height:0.8px;background:#9a9a9a"></div>
<div class="t" style="left:85.9px;width:18.2px;text-align:right;top:663.6px;font-size:6.3px;line-height:8px;color:#adadad;letter-spacing:-.15px">6</div>
<div style="left:105.39999999999999px;top:667.2px;width:1.7px;height:0.8px;background:#9a9a9a"></div>
<div class="t" style="left:85.9px;width:18.2px;text-align:right;top:670.5px;font-size:6.3px;line-height:8px;color:#adadad;letter-spacing:-.15px">9</div>
<div style="left:105.39999999999999px;top:674.1px;width:1.7px;height:0.8px;background:#9a9a9a"></div>
<div class="t" style="left:85.9px;width:18.2px;text-align:right;top:677.2px;font-size:6.3px;line-height:8px;color:#adadad;letter-spacing:-.15px">12</div>
<div style="left:105.39999999999999px;top:680.8000000000001px;width:1.7px;height:0.8px;background:#9a9a9a"></div>
<div class="t" style="left:85.9px;width:18.2px;text-align:right;top:684px;font-size:6.3px;line-height:8px;color:#adadad;letter-spacing:-.15px">15</div>
<div style="left:105.39999999999999px;top:687.6px;width:1.7px;height:0.8px;background:#9a9a9a"></div>
<div class="t" style="left:85.9px;width:18.2px;text-align:right;top:691px;font-size:6.3px;line-height:8px;color:#adadad;letter-spacing:-.15px">18</div>
<div style="left:105.39999999999999px;top:694.6px;width:1.7px;height:0.8px;background:#9a9a9a"></div>
<div class="t" style="left:85.9px;width:18.2px;text-align:right;top:697.8px;font-size:6.3px;line-height:8px;color:#adadad;letter-spacing:-.15px">21</div>
<div style="left:105.39999999999999px;top:701.4px;width:1.7px;height:0.8px;background:#9a9a9a"></div>
<div class="t" style="left:85.9px;width:18.2px;text-align:right;top:704.5px;font-size:6.3px;line-height:8px;color:#adadad;letter-spacing:-.15px">24</div>
<div style="left:105.39999999999999px;top:708.1px;width:1.7px;height:0.8px;background:#9a9a9a"></div>
<div class="t" style="left:85.9px;width:18.2px;text-align:right;top:713.6px;font-size:6.3px;line-height:8px;color:#adadad;letter-spacing:-.15px">30</div>
<div style="left:105.39999999999999px;top:717.2px;width:1.7px;height:0.8px;background:#9a9a9a"></div>
<div class="t" style="left:85.9px;width:18.2px;text-align:right;top:721.2px;font-size:6.3px;line-height:8px;color:#adadad;letter-spacing:-.15px">35</div>
<div style="left:105.39999999999999px;top:724.8000000000001px;width:1.7px;height:0.8px;background:#9a9a9a"></div>
<div class="t" style="left:85.9px;width:18.2px;text-align:right;top:728.6px;font-size:6.3px;line-height:8px;color:#adadad;letter-spacing:-.15px">40</div>
<div style="left:105.39999999999999px;top:732.2px;width:1.7px;height:0.8px;background:#9a9a9a"></div>
<div class="t" style="left:85.9px;width:18.2px;text-align:right;top:736.2px;font-size:6.3px;line-height:8px;color:#adadad;letter-spacing:-.15px">45</div>
<div style="left:105.39999999999999px;top:739.8000000000001px;width:1.7px;height:0.8px;background:#9a9a9a"></div>
<div class="t" style="left:85.9px;width:18.2px;text-align:right;top:743.6px;font-size:6.3px;line-height:8px;color:#adadad;letter-spacing:-.15px">50</div>
<div style="left:105.39999999999999px;top:747.2px;width:1.7px;height:0.8px;background:#9a9a9a"></div>
<div class="t" style="left:85.9px;width:18.2px;text-align:right;top:751.2px;font-size:6.3px;line-height:8px;color:#adadad;letter-spacing:-.15px">60</div>
<div style="left:105.39999999999999px;top:754.8000000000001px;width:1.7px;height:0.8px;background:#9a9a9a"></div>
<div style="left:108.3px;top:653px;width:1px;height:103px;background:repeating-linear-gradient(#777 0,#777 .8px,transparent .8px,transparent 2.3px);opacity:.7"></div>
<div class="t" style="left:103px;top:761px;width:22.9px;height:11.5px;background:#686868;border-radius:3.5px;color:#f4f4f4;font-size:9.3px;line-height:13.1px;text-align:center;letter-spacing:-0.47px;-webkit-text-stroke:.22px #f4f4f4;">Bnc</div>
<div class="t" style="left:75.7px;top:776px;width:23.2px;height:11.6px;background:#686868;border-radius:3.5px;color:#f4f4f4;font-size:9.5px;line-height:13.2px;text-align:center;letter-spacing:-0.59px;-webkit-text-stroke:.22px #f4f4f4;">M</div>
<div class="t" style="left:103px;top:776px;width:22.9px;height:11.6px;background:#686868;border-radius:3.5px;color:#f4f4f4;font-size:9.5px;line-height:13.2px;text-align:center;letter-spacing:-0.48px;-webkit-text-stroke:.22px #f4f4f4;">S</div>
<div class="t" style="left:61.900000000000006px;top:798.5px;font-size:9.8px;line-height:11.8px;color:#ececec;width:80px;text-align:center;letter-spacing:-0.48px;">Stereo Out</div>
<!-- tracks -->
<div style="left:136.6px;top:110px;width:329px;height:704px;background:#565656"></div>
<div style="left:136.6px;top:110px;width:15.6px;height:671.5px;background:#505050"></div>
<div style="left:136.6px;top:329.5px;width:329px;height:140.5px;background:#747474"></div>
<div style="left:136.6px;top:329.5px;width:15.6px;height:140.5px;background:#6c6c6c"></div>
<div style="left:152.2px;top:110px;width:0.9px;height:671.5px;background:#494949"></div>
<div style="left:136.6px;top:109.0px;width:329px;height:1px;background:#464646"></div>
<div style="left:136.6px;top:164.0px;width:329px;height:1px;background:#464646"></div>
<div style="left:136.6px;top:219.0px;width:329px;height:1px;background:#464646"></div>
<div style="left:136.6px;top:274.0px;width:329px;height:1px;background:#464646"></div>
<div style="left:136.6px;top:329.0px;width:329px;height:1px;background:#464646"></div>
<div style="left:136.6px;top:469.5px;width:329px;height:1px;background:#464646"></div>
<div style="left:136.6px;top:555.5px;width:329px;height:1px;background:#464646"></div>
<div style="left:136.6px;top:611.0px;width:329px;height:1px;background:#464646"></div>
<div style="left:136.6px;top:640.5px;width:329px;height:1px;background:#464646"></div>
<div style="left:136.6px;top:667.5px;width:329px;height:1px;background:#464646"></div>
<div style="left:136.6px;top:694.5px;width:329px;height:1px;background:#464646"></div>
<div style="left:136.6px;top:722.0px;width:329px;height:1px;background:#464646"></div>
<div style="left:136.6px;top:751.5px;width:329px;height:1px;background:#464646"></div>
<div style="left:136.6px;top:781.0px;width:329px;height:1px;background:#464646"></div>
<svg style="left:164.1px;top:124.3px;" width="42.1" height="25.4" viewBox="0 0 42.1 25.4"><rect x="0" y="0" width="2.6" height="25.4" rx="1" fill="#5aa5f5"/><rect x="39.5" y="0" width="2.6" height="25.4" rx="1" fill="#5aa5f5"/><rect x="2.2" y="2.6" width="37.8" height="20.4" fill="none" stroke="#5aa5f5" stroke-width="1.5"/><rect x="5.4" y="5.4" width="31.4" height="14.8" fill="none" stroke="#5aa5f5" stroke-width="1"/><rect x="7.50" y="7.20" width="2.5" height="2.5" fill="#5aa5f5"/><rect x="11.65" y="7.20" width="2.5" height="2.5" fill="#5aa5f5"/><rect x="15.80" y="7.20" width="2.5" height="2.5" fill="#5aa5f5"/><rect x="28.25" y="7.20" width="2.5" height="2.5" fill="#5aa5f5"/><rect x="32.40" y="7.20" width="2.5" height="2.5" fill="#5aa5f5"/><rect x="7.50" y="11.40" width="2.5" height="2.5" fill="#5aa5f5"/><rect x="11.65" y="11.40" width="2.5" height="2.5" fill="#5aa5f5"/><rect x="15.80" y="11.40" width="2.5" height="2.5" fill="#5aa5f5"/><rect x="19.95" y="11.40" width="2.5" height="2.5" fill="#5aa5f5"/><rect x="24.10" y="11.40" width="2.5" height="2.5" fill="#5aa5f5"/><rect x="28.25" y="11.40" width="2.5" height="2.5" fill="#5aa5f5"/><rect x="32.40" y="11.40" width="2.5" height="2.5" fill="#5aa5f5"/><rect x="7.50" y="15.60" width="2.5" height="2.5" fill="#5aa5f5"/><rect x="11.65" y="15.60" width="2.5" height="2.5" fill="#5aa5f5"/><rect x="15.80" y="15.60" width="2.5" height="2.5" fill="#5aa5f5"/><rect x="19.95" y="15.60" width="2.5" height="2.5" fill="#5aa5f5"/><rect x="24.10" y="15.60" width="2.5" height="2.5" fill="#5aa5f5"/><rect x="28.25" y="15.60" width="2.5" height="2.5" fill="#5aa5f5"/><rect x="32.40" y="15.60" width="2.5" height="2.5" fill="#5aa5f5"/></svg><svg style="left:166px;top:180.2px;" width="39" height="24.5" viewBox="0 0 39 24.5"><rect x=".7" y=".7" width="37.6" height="23.1" rx="1.6" fill="none" stroke="#22c0ee" stroke-width="1.4"/><path d="M7.7 .7 V16.4 M14.7 .7 V16.4 M21.6 .7 V16.4 M.7 6 H21.6 M.7 11.2 H21.6 M.7 16.4 H38.3" stroke="#22c0ee" stroke-width="1.3" fill="none"/><rect x="21.6" y="10" width="16.7" height="7" fill="#22c0ee"/><circle cx="24.0" cy="14.2" r="1.05" fill="#565656"/><circle cx="28.1" cy="14.2" r="1.05" fill="#565656"/><circle cx="32.2" cy="14.2" r="1.05" fill="#565656"/><circle cx="36.3" cy="14.2" r="1.05" fill="#565656"/><rect x=".7" y="16.4" width="37.6" height="2.3" fill="#22c0ee"/><path d="M3.2 18 V23.5" stroke="#22c0ee" stroke-width="1.3"/><path d="M7.3 18 V23.5" stroke="#22c0ee" stroke-width="1.3"/><path d="M11.4 18 V23.5" stroke="#22c0ee" stroke-width="1.3"/><path d="M15.5 18 V23.5" stroke="#22c0ee" stroke-width="1.3"/><path d="M19.6 18 V23.5" stroke="#22c0ee" stroke-width="1.3"/><path d="M23.7 18 V23.5" stroke="#22c0ee" stroke-width="1.3"/><path d="M27.8 18 V23.5" stroke="#22c0ee" stroke-width="1.3"/><path d="M31.9 18 V23.5" stroke="#22c0ee" stroke-width="1.3"/><path d="M36.0 18 V23.5" stroke="#22c0ee" stroke-width="1.3"/></svg><svg style="left:166px;top:235.2px;" width="39" height="24.5" viewBox="0 0 39 24.5"><rect x=".7" y=".7" width="37.6" height="23.1" rx="1.6" fill="none" stroke="#18cccc" stroke-width="1.4"/><path d="M7.7 .7 V16.4 M14.7 .7 V16.4 M21.6 .7 V16.4 M.7 6 H21.6 M.7 11.2 H21.6 M.7 16.4 H38.3" stroke="#18cccc" stroke-width="1.3" fill="none"/><rect x="21.6" y="10" width="16.7" height="7" fill="#18cccc"/><circle cx="24.0" cy="14.2" r="1.05" fill="#565656"/><circle cx="28.1" cy="14.2" r="1.05" fill="#565656"/><circle cx="32.2" cy="14.2" r="1.05" fill="#565656"/><circle cx="36.3" cy="14.2" r="1.05" fill="#565656"/><rect x=".7" y="16.4" width="37.6" height="2.3" fill="#18cccc"/><path d="M3.2 18 V23.5" stroke="#18cccc" stroke-width="1.3"/><path d="M7.3 18 V23.5" stroke="#18cccc" stroke-width="1.3"/><path d="M11.4 18 V23.5" stroke="#18cccc" stroke-width="1.3"/><path d="M15.5 18 V23.5" stroke="#18cccc" stroke-width="1.3"/><path d="M19.6 18 V23.5" stroke="#18cccc" stroke-width="1.3"/><path d="M23.7 18 V23.5" stroke="#18cccc" stroke-width="1.3"/><path d="M27.8 18 V23.5" stroke="#18cccc" stroke-width="1.3"/><path d="M31.9 18 V23.5" stroke="#18cccc" stroke-width="1.3"/><path d="M36.0 18 V23.5" stroke="#18cccc" stroke-width="1.3"/></svg><svg style="left:163px;top:280px;" width="45" height="45" viewBox="0 0 45 45"><g fill="none" stroke="#1ccaa8" stroke-width="2.1" stroke-linecap="round" stroke-linejoin="round"><path d="M11 6.8 V10.2 M33.2 6.8 V10.2 M11 34.8 V37.8 M33.2 34.8 V37.8"/><path d="M16.5 6.8 V10.6 L11 16.4 V19.2"/><path d="M22.1 6.8 V18.6 M22.1 29.2 V37.8"/><path d="M27.8 6.8 V12.6 L30.8 15.6"/><path d="M13.1 28.6 L16.5 32 V37.8"/><path d="M27.8 37.8 V33 L33.2 27.6 V24.8"/><circle cx="22.1" cy="22" r="3.3"/><circle cx="33.2" cy="18" r="3.3"/><circle cx="10.7" cy="26.3" r="3.3"/></g></svg><svg style="left:267px;top:379px;" width="84.5" height="75" viewBox="0 0 84.5 75"><rect x="1.5" y="1.5" width="81.5" height="72" rx="2.5" fill="none" stroke="#16e468" stroke-width="3"/><rect x="0" y="65" width="84.5" height="10" rx="2.5" fill="#16e468"/><rect x="9" y="9.3" width="33.2" height="11.8" fill="#16e468"/><rect x="9.00" y="27.40" width="6.3" height="6.1" fill="#16e468"/><rect x="18.05" y="27.40" width="6.3" height="6.1" fill="#16e468"/><rect x="27.10" y="27.40" width="6.3" height="6.1" fill="#16e468"/><rect x="36.15" y="27.40" width="6.3" height="6.1" fill="#16e468"/><rect x="9.00" y="36.45" width="6.3" height="6.1" fill="#16e468"/><rect x="18.05" y="36.45" width="6.3" height="6.1" fill="#16e468"/><rect x="27.10" y="36.45" width="6.3" height="6.1" fill="#16e468"/><rect x="36.15" y="36.45" width="6.3" height="6.1" fill="#16e468"/><rect x="9.00" y="45.50" width="6.3" height="6.1" fill="#16e468"/><rect x="18.05" y="45.50" width="6.3" height="6.1" fill="#16e468"/><rect x="27.10" y="45.50" width="6.3" height="6.1" fill="#16e468"/><rect x="36.15" y="45.50" width="6.3" height="6.1" fill="#16e468"/><rect x="9.00" y="54.55" width="6.3" height="6.1" fill="#16e468"/><rect x="18.05" y="54.55" width="6.3" height="6.1" fill="#16e468"/><rect x="27.10" y="54.55" width="6.3" height="6.1" fill="#16e468"/><rect x="36.15" y="54.55" width="6.3" height="6.1" fill="#16e468"/><rect x="51.4" y="9.4" width="5.8" height="2.6" fill="#16e468"/><rect x="60.4" y="9.4" width="5.8" height="2.6" fill="#16e468"/><rect x="69.4" y="9.4" width="5.8" height="2.6" fill="#16e468"/><rect x="51.4" y="18.3" width="5.8" height="2.6" fill="#16e468"/><rect x="60.4" y="18.3" width="5.8" height="2.6" fill="#16e468"/><rect x="69.4" y="18.3" width="5.8" height="2.6" fill="#16e468"/><rect x="51.4" y="48.4" width="5.8" height="2.6" fill="#16e468"/><rect x="60.4" y="48.4" width="5.8" height="2.6" fill="#16e468"/><rect x="69.4" y="48.4" width="5.8" height="2.6" fill="#16e468"/><rect x="51.4" y="57.3" width="5.8" height="2.6" fill="#16e468"/><rect x="60.4" y="57.3" width="5.8" height="2.6" fill="#16e468"/><rect x="69.4" y="57.3" width="5.8" height="2.6" fill="#16e468"/><circle cx="62.9" cy="33.2" r="6" fill="#16e468"/></svg><svg style="left:161px;top:499px;" width="49" height="36" viewBox="0 0 49 36"><path d="M0 1.4 Q0 0 1.5 0 H38.2 L49 4.4 V13.2 H2.5 L0 10.6 Z" fill="#1fe040"/><rect x="2.7" y="2.2" width="14.2" height="4.9" fill="#565656"/><rect x="4.9" y="3.7" width="1.72" height="1.63" fill="#1fe040"/><rect x="8.3" y="3.7" width="1.72" height="1.63" fill="#1fe040"/><rect x="11.3" y="6.8" width="34.3" height="4.9" fill="#565656"/><rect x="12.7" y="8.2" width="31.4" height="2.2" fill="#1fe040"/><path d="M14.7 12.2 L35.8 34.8 M33.3 12.2 L12.2 34.8" stroke="#1fe040" stroke-width="1.2" fill="none"/><circle cx="12.2" cy="34.6" r="1.4" fill="#1fe040"/><circle cx="35.8" cy="34.6" r="1.4" fill="#1fe040"/></svg><svg style="left:163.8px;top:571.8px;" width="42.4" height="31" viewBox="0 0 42.4 31"><path d="M0 1.2 Q0 0 1.3 0 H33.1 L42.4 3.8 V11.4 H2.1 L0 9.2 Z" fill="#1fe040"/><rect x="2.3" y="1.9" width="12.3" height="4.2" fill="#565656"/><rect x="4.2" y="3.2" width="1.48" height="1.42" fill="#1fe040"/><rect x="7.2" y="3.2" width="1.48" height="1.42" fill="#1fe040"/><rect x="9.8" y="5.9" width="29.7" height="4.2" fill="#565656"/><rect x="11.0" y="7.1" width="27.1" height="1.9" fill="#1fe040"/><path d="M12.7 10.6 L31.0 29.8 M28.8 10.6 L10.6 29.8" stroke="#1fe040" stroke-width="1.2" fill="none"/><circle cx="10.6" cy="29.6" r="1.4" fill="#1fe040"/><circle cx="31.0" cy="29.6" r="1.4" fill="#1fe040"/></svg><svg style="left:175.7px;top:616.6px;" width="21" height="21" viewBox="0 0 21 21"><ellipse cx="9.4" cy="6.6" rx="4.9" ry="6.4" fill="#84dc14"/><path d="M0 20.2 Q.4 15.6 6.4 14.4 L7 11.5 H11.8 L12.4 14.4 Q15.2 15 16.4 16 V20.2 Z" fill="#84dc14"/><rect x="16.5" y="10.8" width="3.4" height="9.8" rx="1.5" fill="#84dc14"/><rect x="17.4" y="11.6" width="1.6" height="2.6" rx=".8" fill="#565656" opacity=".6"/><path d="M15.6 15 H20.8" stroke="#565656" stroke-width=".9"/></svg><svg style="left:177px;top:645.8px;" width="16.6" height="18.2" viewBox="0 0 16.6 18.2"><rect x=".5" y=".5" width="15.6" height="8" fill="none" stroke="#c4d22a" stroke-width="1"/><rect x="1.6" y="1.5" width="13.4" height="2.6" fill="#c4d22a" opacity=".85"/><rect x="2.6" y="1.7" width=".8" height="2.2" fill="#565656" opacity=".7"/><rect x="4.7" y="1.7" width=".8" height="2.2" fill="#565656" opacity=".7"/><rect x="6.8" y="1.7" width=".8" height="2.2" fill="#565656" opacity=".7"/><rect x="8.9" y="1.7" width=".8" height="2.2" fill="#565656" opacity=".7"/><rect x="11.0" y="1.7" width=".8" height="2.2" fill="#565656" opacity=".7"/><rect x="13.1" y="1.7" width=".8" height="2.2" fill="#565656" opacity=".7"/><rect x="1.3" y="5.2" width="14" height="2.6" fill="#c4d22a" opacity=".75"/><path d="M4.6 8.6 L13.2 17.4 M12 8.6 L3.4 17.4" stroke="#c4d22a" stroke-width="1" fill="none"/><circle cx="3.3" cy="17.3" r=".8" fill="#c4d22a"/><circle cx="13.3" cy="17.3" r=".8" fill="#c4d22a"/></svg><svg style="left:174.9px;top:675.6px;" width="21.4" height="16.4" viewBox="0 0 21.4 16.4"><path d="M0 0.6 Q0 0 0.6 0 H16.7 L21.4 2.0 V6.0 H1.1 L0 4.8 Z" fill="#e6de22"/><rect x="1.2" y="1.0" width="6.2" height="2.2" fill="#565656"/><rect x="2.1" y="1.7" width="0.75" height="0.74" fill="#e6de22"/><rect x="3.6" y="1.7" width="0.75" height="0.74" fill="#e6de22"/><rect x="4.9" y="3.1" width="15.0" height="2.2" fill="#565656"/><rect x="5.6" y="3.7" width="13.7" height="1.0" fill="#e6de22"/><path d="M6.4 5.6 L15.6 15.2 M14.6 5.6 L5.3 15.2" stroke="#e6de22" stroke-width="0.9" fill="none"/><circle cx="5.3" cy="15.0" r="0.8" fill="#e6de22"/><circle cx="15.6" cy="15.0" r="0.8" fill="#e6de22"/></svg><svg style="left:177px;top:700.6px;" width="16.6" height="18.2" viewBox="0 0 16.6 18.2"><rect x=".5" y=".5" width="15.6" height="8" fill="none" stroke="#e0c22a" stroke-width="1"/><rect x="1.6" y="1.5" width="13.4" height="2.6" fill="#e0c22a" opacity=".85"/><rect x="2.6" y="1.7" width=".8" height="2.2" fill="#565656" opacity=".7"/><rect x="4.7" y="1.7" width=".8" height="2.2" fill="#565656" opacity=".7"/><rect x="6.8" y="1.7" width=".8" height="2.2" fill="#565656" opacity=".7"/><rect x="8.9" y="1.7" width=".8" height="2.2" fill="#565656" opacity=".7"/><rect x="11.0" y="1.7" width=".8" height="2.2" fill="#565656" opacity=".7"/><rect x="13.1" y="1.7" width=".8" height="2.2" fill="#565656" opacity=".7"/><rect x="1.3" y="5.2" width="14" height="2.6" fill="#e0c22a" opacity=".75"/><path d="M4.6 8.6 L13.2 17.4 M12 8.6 L3.4 17.4" stroke="#e0c22a" stroke-width="1" fill="none"/><circle cx="3.3" cy="17.3" r=".8" fill="#e0c22a"/><circle cx="13.3" cy="17.3" r=".8" fill="#e0c22a"/></svg><svg style="left:174.3px;top:726.7px;" width="22" height="22" viewBox="0 0 22 22"><circle cx="11" cy="11" r="2.3" fill="#f8a022"/><circle cx="15.60" cy="11.00" r="1.45" fill="#f8a022" opacity="1"/><circle cx="18.40" cy="11.00" r="0.8" fill="#f8a022" opacity="0.95"/><circle cx="20.20" cy="11.00" r="0.55" fill="#f8a022" opacity="0.85"/><circle cx="21.50" cy="11.00" r="0.4" fill="#f8a022" opacity="0.7"/><circle cx="14.25" cy="14.25" r="1.45" fill="#f8a022" opacity="1"/><circle cx="16.23" cy="16.23" r="0.8" fill="#f8a022" opacity="0.95"/><circle cx="17.51" cy="17.51" r="0.55" fill="#f8a022" opacity="0.85"/><circle cx="18.42" cy="18.42" r="0.4" fill="#f8a022" opacity="0.7"/><circle cx="11.00" cy="15.60" r="1.45" fill="#f8a022" opacity="1"/><circle cx="11.00" cy="18.40" r="0.8" fill="#f8a022" opacity="0.95"/><circle cx="11.00" cy="20.20" r="0.55" fill="#f8a022" opacity="0.85"/><circle cx="11.00" cy="21.50" r="0.4" fill="#f8a022" opacity="0.7"/><circle cx="7.75" cy="14.25" r="1.45" fill="#f8a022" opacity="1"/><circle cx="5.77" cy="16.23" r="0.8" fill="#f8a022" opacity="0.95"/><circle cx="4.49" cy="17.51" r="0.55" fill="#f8a022" opacity="0.85"/><circle cx="3.58" cy="18.42" r="0.4" fill="#f8a022" opacity="0.7"/><circle cx="6.40" cy="11.00" r="1.45" fill="#f8a022" opacity="1"/><circle cx="3.60" cy="11.00" r="0.8" fill="#f8a022" opacity="0.95"/><circle cx="1.80" cy="11.00" r="0.55" fill="#f8a022" opacity="0.85"/><circle cx="0.50" cy="11.00" r="0.4" fill="#f8a022" opacity="0.7"/><circle cx="7.75" cy="7.75" r="1.45" fill="#f8a022" opacity="1"/><circle cx="5.77" cy="5.77" r="0.8" fill="#f8a022" opacity="0.95"/><circle cx="4.49" cy="4.49" r="0.55" fill="#f8a022" opacity="0.85"/><circle cx="3.58" cy="3.58" r="0.4" fill="#f8a022" opacity="0.7"/><circle cx="11.00" cy="6.40" r="1.45" fill="#f8a022" opacity="1"/><circle cx="11.00" cy="3.60" r="0.8" fill="#f8a022" opacity="0.95"/><circle cx="11.00" cy="1.80" r="0.55" fill="#f8a022" opacity="0.85"/><circle cx="11.00" cy="0.50" r="0.4" fill="#f8a022" opacity="0.7"/><circle cx="14.25" cy="7.75" r="1.45" fill="#f8a022" opacity="1"/><circle cx="16.23" cy="5.77" r="0.8" fill="#f8a022" opacity="0.95"/><circle cx="17.51" cy="4.49" r="0.55" fill="#f8a022" opacity="0.85"/><circle cx="18.42" cy="3.58" r="0.4" fill="#f8a022" opacity="0.7"/></svg><svg style="left:177px;top:758.2px;" width="16.2" height="18" viewBox="0 0 16.2 18"><path d="M.6 5.6 H3 V7 H6.6 V10 H10 V6.4 H14 V5.2 H15.6 V16.6 Q15.6 17.6 14.6 17.6 H1.6 Q.6 17.6 .6 16.6 Z" fill="#f87c22"/><rect x="4.4" y="4.2" width="3.4" height="3.2" fill="#f87c22"/><rect x="9" y="6.4" width="3.6" height="3.6" fill="#f87c22"/><rect x="12.2" y="1.2" width="3.4" height="3.4" fill="#f87c22"/><rect x="7.6" y="1" width="2.2" height="2.2" fill="#f87c22"/><rect x="3.2" y=".2" width="1.8" height="1.8" fill="#f87c22"/><rect x=".4" y="2.8" width="1.8" height="1.8" fill="#f87c22"/><rect x="2.2" y="11" width="3.8" height="3.6" fill="#565656" opacity=".85"/><rect x="9" y="13" width="2.6" height="2.4" fill="#565656" opacity=".85"/></svg>
<div class="t" style="left:136.6px;top:130.5px;font-size:10.5px;line-height:12.5px;color:#f4f4f4;width:15.6px;text-align:center;">1</div>
<div class="t" style="left:217.6px;top:122.6px;font-size:10px;line-height:12px;color:#fafafa;-webkit-text-stroke:.2px #fafafa;letter-spacing:0.05px;">Toppers</div>
<div style="left:218px;top:138.3px;width:31px;height:11.8px;background:#6b6b6b;border-radius:3px"></div><div style="left:233.4px;top:138.3px;width:0.8px;height:11.8px;background:#555"></div><div class="t" style="left:218px;top:138.70000000000002px;font-size:9px;line-height:11px;color:#f2f2f2;width:15.5px;text-align:center;-webkit-text-stroke:.3px currentColor;">M</div><div class="t" style="left:233.6px;top:138.70000000000002px;font-size:9px;line-height:11px;color:#f2f2f2;width:15.4px;text-align:center;-webkit-text-stroke:.3px currentColor;">S</div><div style="left:253.7px;top:138.3px;width:14.8px;height:11.8px;background:#6b6b6b;border-radius:3px"></div><div class="t" style="left:253.7px;top:138.70000000000002px;font-size:9px;line-height:11px;color:#f2f2f2;width:15px;text-align:center;-webkit-text-stroke:.3px currentColor;">R</div>
<div style="left:337px;top:136.70000000000002px;width:96.4px;height:14.3px;background:#363636;border-radius:7.2px"></div><div style="left:343px;top:140.70000000000002px;width:60px;height:2.5px;background:#3ddc5a;border-radius:1px"></div><div style="left:409.4px;top:140.9px;width:1.3px;height:2.1px;background:#e6c619"></div><div style="left:415.9px;top:140.9px;width:1.3px;height:2.1px;background:#e6c619"></div><div style="left:343px;top:144.9px;width:60px;height:2.5px;background:#3ddc5a;border-radius:1px"></div><div style="left:409.4px;top:145.1px;width:1.3px;height:2.1px;background:#e6c619"></div><div style="left:415.9px;top:145.1px;width:1.3px;height:2.1px;background:#e6c619"></div><div style="left:397.3px;top:137.65px;width:12.4px;height:12.4px;background:#a8a8a8;border-radius:50%;box-shadow:0 0 1.5px rgba(0,0,0,.6)"></div>
<svg style="left:438.4px;top:134.3px;" width="20" height="20" viewBox="0 0 20 20"><path d="M3.9 16.5 A8.8 8.8 0 1 1 16.1 16.5" fill="none" stroke="#353535" stroke-width="2.4"/><circle cx="10" cy="10" r="6.4" fill="#8c8c8c"/><path d="M10 .6 v1.8" stroke="#3fae4d" stroke-width="1"/><path d="M10 3.9 v1.6" stroke="#3a3a3a" stroke-width="1.1"/></svg>
<div class="t" style="left:136.6px;top:185.5px;font-size:10.5px;line-height:12.5px;color:#f4f4f4;width:15.6px;text-align:center;">2</div>
<div class="t" style="left:217.6px;top:177.6px;font-size:10px;line-height:12px;color:#fafafa;-webkit-text-stroke:.2px #fafafa;letter-spacing:0.16px;">Infinity</div>
<div style="left:218px;top:193.3px;width:31px;height:11.8px;background:#6b6b6b;border-radius:3px"></div><div style="left:233.4px;top:193.3px;width:0.8px;height:11.8px;background:#555"></div><div class="t" style="left:218px;top:193.70000000000002px;font-size:9px;line-height:11px;color:#f2f2f2;width:15.5px;text-align:center;-webkit-text-stroke:.3px currentColor;">M</div><div class="t" style="left:233.6px;top:193.70000000000002px;font-size:9px;line-height:11px;color:#f2f2f2;width:15.4px;text-align:center;-webkit-text-stroke:.3px currentColor;">S</div><div style="left:253.7px;top:193.3px;width:14.8px;height:11.8px;background:#6b6b6b;border-radius:3px"></div><div class="t" style="left:253.7px;top:193.70000000000002px;font-size:9px;line-height:11px;color:#f2f2f2;width:15px;text-align:center;-webkit-text-stroke:.3px currentColor;">R</div>
<div style="left:337px;top:191.70000000000002px;width:96.4px;height:14.3px;background:#363636;border-radius:7.2px"></div><div style="left:343px;top:195.70000000000002px;width:62px;height:2.5px;background:#3ddc5a;border-radius:1px"></div><div style="left:402px;top:195.70000000000002px;width:11.5px;height:2.5px;background:linear-gradient(90deg,#3ddc5a,#e6d21e 40%,#e6c619)"></div><div style="left:415.0px;top:195.9px;width:1.3px;height:2.1px;background:#e6c619"></div><div style="left:343px;top:199.9px;width:62px;height:2.5px;background:#3ddc5a;border-radius:1px"></div><div style="left:402px;top:199.9px;width:11.5px;height:2.5px;background:linear-gradient(90deg,#3ddc5a,#e6d21e 40%,#e6c619)"></div><div style="left:415.0px;top:200.1px;width:1.3px;height:2.1px;background:#e6c619"></div><div style="left:415.8px;top:192.65px;width:12.4px;height:12.4px;background:#a8a8a8;border-radius:50%;box-shadow:0 0 1.5px rgba(0,0,0,.6)"></div>
<svg style="left:438.4px;top:189.3px;" width="20" height="20" viewBox="0 0 20 20"><path d="M3.9 16.5 A8.8 8.8 0 1 1 16.1 16.5" fill="none" stroke="#353535" stroke-width="2.4"/><circle cx="10" cy="10" r="6.4" fill="#8c8c8c"/><path d="M10 .6 v1.8" stroke="#3fae4d" stroke-width="1"/><path d="M10 3.9 v1.6" stroke="#3a3a3a" stroke-width="1.1"/></svg>
<div class="t" style="left:136.6px;top:240.5px;font-size:10.5px;line-height:12.5px;color:#f4f4f4;width:15.6px;text-align:center;">3</div>
<div class="t" style="left:217.6px;top:232.6px;font-size:10px;line-height:12px;color:#fafafa;-webkit-text-stroke:.2px #fafafa;letter-spacing:0.05px;">Percussion</div>
<div style="left:218px;top:248.3px;width:31px;height:11.8px;background:#6b6b6b;border-radius:3px"></div><div style="left:233.4px;top:248.3px;width:0.8px;height:11.8px;background:#555"></div><div class="t" style="left:218px;top:248.70000000000002px;font-size:9px;line-height:11px;color:#f2f2f2;width:15.5px;text-align:center;-webkit-text-stroke:.3px currentColor;">M</div><div class="t" style="left:233.6px;top:248.70000000000002px;font-size:9px;line-height:11px;color:#f2f2f2;width:15.4px;text-align:center;-webkit-text-stroke:.3px currentColor;">S</div><div style="left:253.7px;top:248.3px;width:30.4px;height:11.8px;background:#6b6b6b;border-radius:3px"></div><div class="t" style="left:253.7px;top:248.70000000000002px;font-size:9px;line-height:11px;color:#f2f2f2;width:15px;text-align:center;-webkit-text-stroke:.3px currentColor;">R</div><div style="left:268.8px;top:248.3px;width:0.8px;height:11.8px;background:#555"></div><div class="t" style="left:269.2px;top:248.70000000000002px;font-size:9px;line-height:11px;color:#f2f2f2;width:14.8px;text-align:center;-webkit-text-stroke:.3px currentColor;">I</div>
<div style="left:337px;top:246.70000000000002px;width:96.4px;height:14.3px;background:#363636;border-radius:7.2px"></div><div style="left:343px;top:250.70000000000002px;width:57.39999999999998px;height:2.5px;background:#3ddc5a;border-radius:1px"></div><div style="left:343px;top:254.9px;width:57.39999999999998px;height:2.5px;background:#3ddc5a;border-radius:1px"></div><div style="left:382.1px;top:247.65px;width:12.4px;height:12.4px;background:#a8a8a8;border-radius:50%;box-shadow:0 0 1.5px rgba(0,0,0,.6)"></div>
<svg style="left:438.4px;top:244.3px;" width="20" height="20" viewBox="0 0 20 20"><path d="M3.9 16.5 A8.8 8.8 0 1 1 16.1 16.5" fill="none" stroke="#353535" stroke-width="2.4"/><circle cx="10" cy="10" r="6.4" fill="#8c8c8c"/><path d="M10 .6 v1.8" stroke="#3fae4d" stroke-width="1"/><path d="M10 3.9 v1.6" stroke="#3a3a3a" stroke-width="1.1"/></svg>
<div class="t" style="left:136.6px;top:295.5px;font-size:10.5px;line-height:12.5px;color:#f4f4f4;width:15.6px;text-align:center;">4</div>
<div class="t" style="left:217.6px;top:287.6px;font-size:10px;line-height:12px;color:#fafafa;-webkit-text-stroke:.2px #fafafa;letter-spacing:0.04px;">Audio Recorder</div>
<div style="left:218px;top:303.3px;width:31px;height:11.8px;background:#6b6b6b;border-radius:3px"></div><div style="left:233.4px;top:303.3px;width:0.8px;height:11.8px;background:#555"></div><div class="t" style="left:218px;top:303.7px;font-size:9px;line-height:11px;color:#f2f2f2;width:15.5px;text-align:center;-webkit-text-stroke:.3px currentColor;">M</div><div class="t" style="left:233.6px;top:303.7px;font-size:9px;line-height:11px;color:#f2f2f2;width:15.4px;text-align:center;-webkit-text-stroke:.3px currentColor;">S</div><div style="left:253.7px;top:303.3px;width:30.4px;height:11.8px;background:#6b6b6b;border-radius:3px"></div><div class="t" style="left:253.7px;top:303.7px;font-size:9px;line-height:11px;color:#f2f2f2;width:15px;text-align:center;-webkit-text-stroke:.3px currentColor;">R</div><div style="left:268.8px;top:303.3px;width:0.8px;height:11.8px;background:#555"></div><div class="t" style="left:269.2px;top:303.7px;font-size:9px;line-height:11px;color:#f2f2f2;width:14.8px;text-align:center;-webkit-text-stroke:.3px currentColor;">I</div>
<div style="left:337px;top:301.7px;width:96.4px;height:14.3px;background:#363636;border-radius:7.2px"></div><div style="left:343px;top:305.7px;width:25px;height:2.5px;background:#3ddc5a;border-radius:1px"></div><div style="left:343px;top:309.9px;width:25px;height:2.5px;background:#3ddc5a;border-radius:1px"></div><div style="left:370.3px;top:302.65px;width:12.4px;height:12.4px;background:#a8a8a8;border-radius:50%;box-shadow:0 0 1.5px rgba(0,0,0,.6)"></div>
<svg style="left:438.4px;top:299.3px;" width="20" height="20" viewBox="0 0 20 20"><path d="M3.9 16.5 A8.8 8.8 0 1 1 16.1 16.5" fill="none" stroke="#353535" stroke-width="2.4"/><circle cx="10" cy="10" r="6.4" fill="#8c8c8c"/><path d="M10 .6 v1.8" stroke="#3fae4d" stroke-width="1"/><path d="M10 3.9 v1.6" stroke="#3a3a3a" stroke-width="1.1"/></svg>
<div class="t" style="left:136.6px;top:393.25px;font-size:10.5px;line-height:12.5px;color:#f4f4f4;width:15.6px;text-align:center;">5</div>
<div class="t" style="left:217.6px;top:333.1px;font-size:10px;line-height:12px;color:#fafafa;-webkit-text-stroke:.2px #fafafa;letter-spacing:0.13px;">Beats</div>
<div style="left:218px;top:349.0px;width:31px;height:11.8px;background:#848484;border-radius:3px"></div><div style="left:233.4px;top:349.0px;width:0.8px;height:11.8px;background:#6c6c6c"></div><div class="t" style="left:218px;top:349.4px;font-size:9px;line-height:11px;color:#f2f2f2;width:15.5px;text-align:center;-webkit-text-stroke:.3px currentColor;">M</div><div class="t" style="left:233.6px;top:349.4px;font-size:9px;line-height:11px;color:#f2f2f2;width:15.4px;text-align:center;-webkit-text-stroke:.3px currentColor;">S</div><div style="left:253.7px;top:349.0px;width:30.4px;height:11.8px;background:#848484;border-radius:3px"></div><div class="t" style="left:253.7px;top:349.4px;font-size:9px;line-height:11px;color:#9e2720;width:15px;text-align:center;-webkit-text-stroke:.3px currentColor;">R</div><div style="left:268.8px;top:349.0px;width:0.8px;height:11.8px;background:#6c6c6c"></div><div class="t" style="left:269.2px;top:349.4px;font-size:9px;line-height:11px;color:#f2f2f2;width:14.8px;text-align:center;-webkit-text-stroke:.3px currentColor;">I</div>
<div style="left:337px;top:347.4px;width:96.4px;height:14.3px;background:#363636;border-radius:7.2px"></div><div style="left:343px;top:351.4px;width:57.5px;height:2.5px;background:#3ddc5a;border-radius:1px"></div><div style="left:401.2px;top:351.59999999999997px;width:1.3px;height:2.1px;background:#e6c619"></div><div style="left:343px;top:355.59999999999997px;width:57.5px;height:2.5px;background:#3ddc5a;border-radius:1px"></div><div style="left:401.2px;top:355.79999999999995px;width:1.3px;height:2.1px;background:#e6c619"></div><div style="left:372.3px;top:348.34999999999997px;width:12.4px;height:12.4px;background:#a8a8a8;border-radius:50%;box-shadow:0 0 1.5px rgba(0,0,0,.6)"></div>
<svg style="left:438.4px;top:345.0px;" width="20" height="20" viewBox="0 0 20 20"><path d="M3.9 16.5 A8.8 8.8 0 1 1 16.1 16.5" fill="none" stroke="#353535" stroke-width="2.4"/><circle cx="10" cy="10" r="6.4" fill="#8c8c8c"/><path d="M10 .6 v1.8" stroke="#3fae4d" stroke-width="1"/><path d="M10 3.9 v1.6" stroke="#3a3a3a" stroke-width="1.1"/></svg>
<div class="t" style="left:136.6px;top:506.5px;font-size:10.5px;line-height:12.5px;color:#f4f4f4;width:15.6px;text-align:center;">6</div>
<div class="t" style="left:217.6px;top:499.90000000000003px;font-size:10px;line-height:12px;color:#fafafa;-webkit-text-stroke:.2px #fafafa;letter-spacing:0.02px;">Keyboards</div>
<div style="left:218px;top:516.7px;width:31px;height:11.8px;background:#6b6b6b;border-radius:3px"></div><div style="left:233.4px;top:516.7px;width:0.8px;height:11.8px;background:#555"></div><div class="t" style="left:218px;top:517.1px;font-size:9px;line-height:11px;color:#f2f2f2;width:15.5px;text-align:center;-webkit-text-stroke:.3px currentColor;">M</div><div class="t" style="left:233.6px;top:517.1px;font-size:9px;line-height:11px;color:#f2f2f2;width:15.4px;text-align:center;-webkit-text-stroke:.3px currentColor;">S</div><div style="left:253.7px;top:516.7px;width:30.4px;height:11.8px;background:#6b6b6b;border-radius:3px"></div><div class="t" style="left:253.7px;top:517.1px;font-size:9px;line-height:11px;color:#f2f2f2;width:15px;text-align:center;-webkit-text-stroke:.3px currentColor;">R</div><div style="left:268.8px;top:516.7px;width:0.8px;height:11.8px;background:#555"></div><div class="t" style="left:269.2px;top:517.1px;font-size:9px;line-height:11px;color:#f2f2f2;width:14.8px;text-align:center;-webkit-text-stroke:.3px currentColor;">I</div>
<div style="left:337px;top:515.1px;width:96.4px;height:14.3px;background:#363636;border-radius:7.2px"></div><div style="left:343px;top:519.1px;width:59px;height:2.5px;background:#3ddc5a;border-radius:1px"></div><div style="left:404.0px;top:519.3000000000001px;width:1.3px;height:2.1px;background:#e6c619"></div><div style="left:405.4px;top:519.3000000000001px;width:1.3px;height:2.1px;background:#e6c619"></div><div style="left:343px;top:523.3000000000001px;width:59px;height:2.5px;background:#3ddc5a;border-radius:1px"></div><div style="left:404.0px;top:523.5000000000001px;width:1.3px;height:2.1px;background:#e6c619"></div><div style="left:405.4px;top:523.5000000000001px;width:1.3px;height:2.1px;background:#e6c619"></div><div style="left:386.2px;top:516.0500000000001px;width:12.4px;height:12.4px;background:#a8a8a8;border-radius:50%;box-shadow:0 0 1.5px rgba(0,0,0,.6)"></div>
<svg style="left:438.4px;top:512.7px;" width="20" height="20" viewBox="0 0 20 20"><path d="M3.9 16.5 A8.8 8.8 0 1 1 16.1 16.5" fill="none" stroke="#353535" stroke-width="2.4"/><circle cx="10" cy="10" r="6.4" fill="#8c8c8c"/><path d="M10 .6 v1.8" stroke="#3fae4d" stroke-width="1"/><path d="M10 3.9 v1.6" stroke="#3a3a3a" stroke-width="1.1"/></svg>
<div class="t" style="left:136.6px;top:577.25px;font-size:10.5px;line-height:12.5px;color:#f4f4f4;width:15.6px;text-align:center;">7</div>
<div class="t" style="left:217.6px;top:570.2px;font-size:10px;line-height:12px;color:#fafafa;-webkit-text-stroke:.2px #fafafa;letter-spacing:0.04px;">Audio Recorder</div>
<div style="left:218px;top:586.7px;width:31px;height:11.8px;background:#6b6b6b;border-radius:3px"></div><div style="left:233.4px;top:586.7px;width:0.8px;height:11.8px;background:#555"></div><div class="t" style="left:218px;top:587.1px;font-size:9px;line-height:11px;color:#f2f2f2;width:15.5px;text-align:center;-webkit-text-stroke:.3px currentColor;">M</div><div class="t" style="left:233.6px;top:587.1px;font-size:9px;line-height:11px;color:#f2f2f2;width:15.4px;text-align:center;-webkit-text-stroke:.3px currentColor;">S</div><div style="left:253.7px;top:586.7px;width:30.4px;height:11.8px;background:#6b6b6b;border-radius:3px"></div><div class="t" style="left:253.7px;top:587.1px;font-size:9px;line-height:11px;color:#f2f2f2;width:15px;text-align:center;-webkit-text-stroke:.3px currentColor;">R</div><div style="left:268.8px;top:586.7px;width:0.8px;height:11.8px;background:#555"></div><div class="t" style="left:269.2px;top:587.1px;font-size:9px;line-height:11px;color:#f2f2f2;width:14.8px;text-align:center;-webkit-text-stroke:.3px currentColor;">I</div>
<div style="left:337px;top:585.1px;width:96.4px;height:14.3px;background:#363636;border-radius:7.2px"></div><div style="left:343px;top:589.1px;width:60px;height:2.5px;background:#3ddc5a;border-radius:1px"></div><div style="left:400px;top:589.1px;width:13.5px;height:2.5px;background:linear-gradient(90deg,#3ddc5a,#e6d21e 40%,#e6c619)"></div><div style="left:343px;top:593.3000000000001px;width:60px;height:2.5px;background:#3ddc5a;border-radius:1px"></div><div style="left:400px;top:593.3000000000001px;width:13.5px;height:2.5px;background:linear-gradient(90deg,#3ddc5a,#e6d21e 40%,#e6c619)"></div><div style="left:376.6px;top:586.0500000000001px;width:12.4px;height:12.4px;background:#a8a8a8;border-radius:50%;box-shadow:0 0 1.5px rgba(0,0,0,.6)"></div>
<svg style="left:438.4px;top:582.7px;" width="20" height="20" viewBox="0 0 20 20"><path d="M3.9 16.5 A8.8 8.8 0 1 1 16.1 16.5" fill="none" stroke="#353535" stroke-width="2.4"/><circle cx="10" cy="10" r="6.4" fill="#8c8c8c"/><path d="M10 .6 v1.8" stroke="#3fae4d" stroke-width="1"/><path d="M10 3.9 v1.6" stroke="#3a3a3a" stroke-width="1.1"/></svg>
<div class="t" style="left:136.6px;top:620.65px;font-size:10.2px;line-height:12.2px;color:#f4f4f4;width:15.6px;text-align:center;">8</div>
<div style="left:218px;top:620.65px;width:31px;height:11.4px;background:#6b6b6b;border-radius:3px"></div><div style="left:233.4px;top:620.65px;width:0.8px;height:11.4px;background:#555"></div><div class="t" style="left:218px;top:621.05px;font-size:9px;line-height:11px;color:#f2f2f2;width:15.5px;text-align:center;-webkit-text-stroke:.3px currentColor;">M</div><div class="t" style="left:233.6px;top:621.05px;font-size:9px;line-height:11px;color:#f2f2f2;width:15.4px;text-align:center;-webkit-text-stroke:.3px currentColor;">S</div><div style="left:253.7px;top:620.65px;width:30.4px;height:11.4px;background:#6b6b6b;border-radius:3px"></div><div class="t" style="left:253.7px;top:621.05px;font-size:9px;line-height:11px;color:#f2f2f2;width:15px;text-align:center;-webkit-text-stroke:.3px currentColor;">R</div><div style="left:268.8px;top:620.65px;width:0.8px;height:11.4px;background:#555"></div><div class="t" style="left:269.2px;top:621.05px;font-size:9px;line-height:11px;color:#f2f2f2;width:14.8px;text-align:center;-webkit-text-stroke:.3px currentColor;">I</div>
<div class="t" style="left:290.6px;top:620.55px;font-size:10px;line-height:12px;color:#fafafa;-webkit-text-stroke:.2px #fafafa;letter-spacing:0.11px;">Vocal Chops</div>
<div style="left:370.4px;top:618.85px;width:87.8px;height:14.3px;background:#363636;border-radius:7.2px"></div><div style="left:376.4px;top:622.85px;width:55.60000000000002px;height:2.5px;background:#3ddc5a;border-radius:1px"></div><div style="left:442.7px;top:623.0500000000001px;width:1.3px;height:2.1px;background:#e6c619"></div><div style="left:376.4px;top:627.0500000000001px;width:55.60000000000002px;height:2.5px;background:#3ddc5a;border-radius:1px"></div><div style="left:442.7px;top:627.2500000000001px;width:1.3px;height:2.1px;background:#e6c619"></div><div style="left:426.0px;top:619.8000000000001px;width:12.4px;height:12.4px;background:#a8a8a8;border-radius:50%;box-shadow:0 0 1.5px rgba(0,0,0,.6)"></div>
<div class="t" style="left:136.6px;top:648.9px;font-size:10.2px;line-height:12.2px;color:#f4f4f4;width:15.6px;text-align:center;">9</div>
<div style="left:218px;top:648.9px;width:31px;height:11.4px;background:#6b6b6b;border-radius:3px"></div><div style="left:233.4px;top:648.9px;width:0.8px;height:11.4px;background:#555"></div><div class="t" style="left:218px;top:649.3px;font-size:9px;line-height:11px;color:#f2f2f2;width:15.5px;text-align:center;-webkit-text-stroke:.3px currentColor;">M</div><div class="t" style="left:233.6px;top:649.3px;font-size:9px;line-height:11px;color:#f2f2f2;width:15.4px;text-align:center;-webkit-text-stroke:.3px currentColor;">S</div><div style="left:253.7px;top:648.9px;width:14.8px;height:11.4px;background:#6b6b6b;border-radius:3px"></div><div class="t" style="left:253.7px;top:649.3px;font-size:9px;line-height:11px;color:#f2f2f2;width:15px;text-align:center;-webkit-text-stroke:.3px currentColor;">R</div>
<div class="t" style="left:290.6px;top:648.8px;font-size:10px;line-height:12px;color:#fafafa;-webkit-text-stroke:.2px #fafafa;letter-spacing:0.10px;">Anthemic Lead</div>
<div style="left:370.4px;top:647.1px;width:87.8px;height:14.3px;background:#363636;border-radius:7.2px"></div><div style="left:376.4px;top:651.1px;width:37.60000000000002px;height:2.5px;background:#3ddc5a;border-radius:1px"></div><div style="left:376.4px;top:655.3000000000001px;width:37.60000000000002px;height:2.5px;background:#3ddc5a;border-radius:1px"></div><div style="left:407.8px;top:648.0500000000001px;width:12.4px;height:12.4px;background:#a8a8a8;border-radius:50%;box-shadow:0 0 1.5px rgba(0,0,0,.6)"></div>
<div class="t" style="left:136.6px;top:675.9px;font-size:10.2px;line-height:12.2px;color:#f4f4f4;width:15.6px;text-align:center;letter-spacing:-.4px">10</div>
<div style="left:218px;top:675.9px;width:31px;height:11.4px;background:#6b6b6b;border-radius:3px"></div><div style="left:233.4px;top:675.9px;width:0.8px;height:11.4px;background:#555"></div><div class="t" style="left:218px;top:676.3px;font-size:9px;line-height:11px;color:#f2f2f2;width:15.5px;text-align:center;-webkit-text-stroke:.3px currentColor;">M</div><div class="t" style="left:233.6px;top:676.3px;font-size:9px;line-height:11px;color:#f2f2f2;width:15.4px;text-align:center;-webkit-text-stroke:.3px currentColor;">S</div><div style="left:253.7px;top:675.9px;width:30.4px;height:11.4px;background:#6b6b6b;border-radius:3px"></div><div class="t" style="left:253.7px;top:676.3px;font-size:9px;line-height:11px;color:#f2f2f2;width:15px;text-align:center;-webkit-text-stroke:.3px currentColor;">R</div><div style="left:268.8px;top:675.9px;width:0.8px;height:11.4px;background:#555"></div><div class="t" style="left:269.2px;top:676.3px;font-size:9px;line-height:11px;color:#f2f2f2;width:14.8px;text-align:center;-webkit-text-stroke:.3px currentColor;">I</div>
<div class="t" style="left:290.6px;top:675.8px;font-size:10px;line-height:12px;color:#fafafa;-webkit-text-stroke:.2px #fafafa;letter-spacing:0.14px;">Synths 2</div>
<div style="left:370.4px;top:674.1px;width:87.8px;height:14.3px;background:#363636;border-radius:7.2px"></div><div style="left:376.4px;top:678.1px;width:44.10000000000002px;height:2.5px;background:#3ddc5a;border-radius:1px"></div><div style="left:431.4px;top:678.3000000000001px;width:1.3px;height:2.1px;background:#e6c619"></div><div style="left:376.4px;top:682.3000000000001px;width:44.10000000000002px;height:2.5px;background:#3ddc5a;border-radius:1px"></div><div style="left:431.4px;top:682.5000000000001px;width:1.3px;height:2.1px;background:#e6c619"></div><div style="left:401.8px;top:675.0500000000001px;width:12.4px;height:12.4px;background:#a8a8a8;border-radius:50%;box-shadow:0 0 1.5px rgba(0,0,0,.6)"></div>
<div class="t" style="left:136.6px;top:703.15px;font-size:10.2px;line-height:12.2px;color:#f4f4f4;width:15.6px;text-align:center;letter-spacing:-.4px">11</div>
<div style="left:218px;top:703.15px;width:31px;height:11.4px;background:#6b6b6b;border-radius:3px"></div><div style="left:233.4px;top:703.15px;width:0.8px;height:11.4px;background:#555"></div><div class="t" style="left:218px;top:703.55px;font-size:9px;line-height:11px;color:#f2f2f2;width:15.5px;text-align:center;-webkit-text-stroke:.3px currentColor;">M</div><div class="t" style="left:233.6px;top:703.55px;font-size:9px;line-height:11px;color:#f2f2f2;width:15.4px;text-align:center;-webkit-text-stroke:.3px currentColor;">S</div><div style="left:253.7px;top:703.15px;width:30.4px;height:11.4px;background:#6b6b6b;border-radius:3px"></div><div class="t" style="left:253.7px;top:703.55px;font-size:9px;line-height:11px;color:#f2f2f2;width:15px;text-align:center;-webkit-text-stroke:.3px currentColor;">R</div><div style="left:268.8px;top:703.15px;width:0.8px;height:11.4px;background:#555"></div><div class="t" style="left:269.2px;top:703.55px;font-size:9px;line-height:11px;color:#f2f2f2;width:14.8px;text-align:center;-webkit-text-stroke:.3px currentColor;">I</div>
<div class="t" style="left:290.6px;top:703.05px;font-size:10px;line-height:12px;color:#fafafa;-webkit-text-stroke:.2px #fafafa;letter-spacing:0.14px;">Synths 3</div>
<div style="left:370.4px;top:701.35px;width:87.8px;height:14.3px;background:#363636;border-radius:7.2px"></div><div style="left:376.4px;top:705.35px;width:55.60000000000002px;height:2.5px;background:#3ddc5a;border-radius:1px"></div><div style="left:437.4px;top:705.5500000000001px;width:1.3px;height:2.1px;background:#e6c619"></div><div style="left:442.7px;top:705.5500000000001px;width:1.3px;height:2.1px;background:#e6c619"></div><div style="left:376.4px;top:709.5500000000001px;width:55.60000000000002px;height:2.5px;background:#3ddc5a;border-radius:1px"></div><div style="left:437.4px;top:709.7500000000001px;width:1.3px;height:2.1px;background:#e6c619"></div><div style="left:442.7px;top:709.7500000000001px;width:1.3px;height:2.1px;background:#e6c619"></div><div style="left:426.0px;top:702.3000000000001px;width:12.4px;height:12.4px;background:#a8a8a8;border-radius:50%;box-shadow:0 0 1.5px rgba(0,0,0,.6)"></div>
<div class="t" style="left:136.6px;top:731.65px;font-size:10.2px;line-height:12.2px;color:#f4f4f4;width:15.6px;text-align:center;letter-spacing:-.4px">12</div>
<div style="left:218px;top:731.65px;width:31px;height:11.4px;background:#6b6b6b;border-radius:3px"></div><div style="left:233.4px;top:731.65px;width:0.8px;height:11.4px;background:#555"></div><div class="t" style="left:218px;top:732.05px;font-size:9px;line-height:11px;color:#f2f2f2;width:15.5px;text-align:center;-webkit-text-stroke:.3px currentColor;">M</div><div class="t" style="left:233.6px;top:732.05px;font-size:9px;line-height:11px;color:#f2f2f2;width:15.4px;text-align:center;-webkit-text-stroke:.3px currentColor;">S</div><div style="left:253.7px;top:731.65px;width:30.4px;height:11.4px;background:#6b6b6b;border-radius:3px"></div><div class="t" style="left:253.7px;top:732.05px;font-size:9px;line-height:11px;color:#f2f2f2;width:15px;text-align:center;-webkit-text-stroke:.3px currentColor;">R</div><div style="left:268.8px;top:731.65px;width:0.8px;height:11.4px;background:#555"></div><div class="t" style="left:269.2px;top:732.05px;font-size:9px;line-height:11px;color:#f2f2f2;width:14.8px;text-align:center;-webkit-text-stroke:.3px currentColor;">I</div>
<div class="t" style="left:290.6px;top:731.55px;font-size:10px;line-height:12px;color:#fafafa;-webkit-text-stroke:.2px #fafafa;letter-spacing:0.10px;">Transitions</div>
<div style="left:370.4px;top:729.85px;width:87.8px;height:14.3px;background:#363636;border-radius:7.2px"></div><div style="left:376.4px;top:733.85px;width:44.10000000000002px;height:2.5px;background:#3ddc5a;border-radius:1px"></div><div style="left:422.4px;top:734.0500000000001px;width:1.3px;height:2.1px;background:#3ddc5a"></div><div style="left:427.7px;top:734.0500000000001px;width:1.3px;height:2.1px;background:#3ddc5a"></div><div style="left:376.4px;top:738.0500000000001px;width:44.10000000000002px;height:2.5px;background:#3ddc5a;border-radius:1px"></div><div style="left:422.4px;top:738.2500000000001px;width:1.3px;height:2.1px;background:#3ddc5a"></div><div style="left:427.7px;top:738.2500000000001px;width:1.3px;height:2.1px;background:#3ddc5a"></div><div style="left:403.1px;top:730.8000000000001px;width:12.4px;height:12.4px;background:#a8a8a8;border-radius:50%;box-shadow:0 0 1.5px rgba(0,0,0,.6)"></div>
<div class="t" style="left:136.6px;top:761.15px;font-size:10.2px;line-height:12.2px;color:#f4f4f4;width:15.6px;text-align:center;letter-spacing:-.4px">13</div>
<div style="left:218px;top:761.15px;width:31px;height:11.4px;background:#6b6b6b;border-radius:3px"></div><div style="left:233.4px;top:761.15px;width:0.8px;height:11.4px;background:#555"></div><div class="t" style="left:218px;top:761.55px;font-size:9px;line-height:11px;color:#f2f2f2;width:15.5px;text-align:center;-webkit-text-stroke:.3px currentColor;">M</div><div class="t" style="left:233.6px;top:761.55px;font-size:9px;line-height:11px;color:#f2f2f2;width:15.4px;text-align:center;-webkit-text-stroke:.3px currentColor;">S</div><div style="left:253.7px;top:761.15px;width:30.4px;height:11.4px;background:#6b6b6b;border-radius:3px"></div><div class="t" style="left:253.7px;top:761.55px;font-size:9px;line-height:11px;color:#f2f2f2;width:15px;text-align:center;-webkit-text-stroke:.3px currentColor;">R</div><div style="left:268.8px;top:761.15px;width:0.8px;height:11.4px;background:#555"></div><div class="t" style="left:269.2px;top:761.55px;font-size:9px;line-height:11px;color:#f2f2f2;width:14.8px;text-align:center;-webkit-text-stroke:.3px currentColor;">I</div>
<div class="t" style="left:290.6px;top:761.05px;font-size:10px;line-height:12px;color:#fafafa;-webkit-text-stroke:.2px #fafafa;letter-spacing:-0.39px;">FX</div>
<div style="left:370.4px;top:759.35px;width:87.8px;height:14.3px;background:#363636;border-radius:7.2px"></div><div style="left:376.4px;top:763.35px;width:51.400000000000034px;height:2.5px;background:#3ddc5a;border-radius:1px"></div><div style="left:429.79999999999995px;top:763.5500000000001px;width:1.3px;height:2.1px;background:#3ddc5a"></div><div style="left:376.4px;top:767.5500000000001px;width:51.400000000000034px;height:2.5px;background:#3ddc5a;border-radius:1px"></div><div style="left:429.79999999999995px;top:767.7500000000001px;width:1.3px;height:2.1px;background:#3ddc5a"></div><div style="left:411.8px;top:760.3000000000001px;width:12.4px;height:12.4px;background:#a8a8a8;border-radius:50%;box-shadow:0 0 1.5px rgba(0,0,0,.6)"></div>
<!-- grid -->
<div style="left:466px;top:110px;width:575px;height:704px;background:#2b2b2b"></div>
<div class="c" style="left:467.80px;top:111.1px;width:66.1px;height:51.10px;background:#3581d8;"><div class="t" style="letter-spacing:0.04px">HH Topper</div><svg style="left:0;top:0" width="66.1" height="51.1"><circle cx="33.05" cy="31" r="15.5" fill="#fff" fill-opacity=".13"/><circle cx="33.05" cy="31" r="4.6" fill="none" stroke="#fff" stroke-width=".55" opacity=".42"/><circle cx="33.05" cy="31" r="6.5" fill="none" stroke="#fff" stroke-width=".55" opacity=".42"/><circle cx="33.05" cy="31" r="8.4" fill="none" stroke="#fff" stroke-width=".55" opacity=".42"/><circle cx="33.05" cy="31" r="10.1" fill="none" stroke="#fff" stroke-width=".55" opacity=".42"/><circle cx="33.05" cy="31" r="11.8" fill="none" stroke="#fff" stroke-width=".55" opacity=".42"/><circle cx="33.05" cy="31" r="13.6" fill="none" stroke="#fff" stroke-width=".55" opacity=".42"/><circle cx="33.05" cy="31" r="15.5" fill="none" stroke="#fff" stroke-width=".55" opacity=".42"/><circle cx="33.05" cy="31" r="3.1" fill="#3581d8"/><path d="M33.6 19.2A11.8 11.8 0 0 1 35.3 19.4M42.9 28.8A10.1 10.1 0 0 1 43.1 30.6M42.9 29.0A10.1 10.1 0 0 1 43.1 30.5M24.7 30.8A8.4 8.4 0 0 1 24.8 29.3M28.3 26.6A6.5 6.5 0 0 1 29.3 25.7M46.6 29.5A13.6 13.6 0 0 1 46.7 31.8M30.0 38.8A8.4 8.4 0 0 1 28.1 37.7M25.6 44.6A15.5 15.5 0 0 1 24.0 43.6M23.8 35.1A10.1 10.1 0 0 1 23.2 33.2M41.2 29.3A8.4 8.4 0 0 1 41.4 31.0M32.2 44.6A13.6 13.6 0 0 1 29.9 44.3M44.8 24.1A13.6 13.6 0 0 1 45.4 25.1M30.1 19.6A11.8 11.8 0 0 1 32.4 19.2M48.5 31.1A15.5 15.5 0 0 1 48.4 32.9M33.4 41.1A10.1 10.1 0 0 1 31.9 41.0M35.4 37.1A6.5 6.5 0 0 1 33.5 37.5M35.8 23.1A8.4 8.4 0 0 1 36.9 23.6M20.1 35.4A13.6 13.6 0 0 1 19.8 34.3M40.2 23.9A10.1 10.1 0 0 1 41.8 26.0M42.2 38.5A11.8 11.8 0 0 1 40.9 39.8M44.0 41.9A15.5 15.5 0 0 1 42.9 43.0M37.0 44.1A13.6 13.6 0 0 1 34.8 44.5" fill="none" stroke="#fff" stroke-width="1.1" opacity=".6"/></svg></div>
<div class="c" style="left:537.09px;top:111.1px;width:66.1px;height:51.10px;background:#3581d8;"><div class="t" style="letter-spacing:-0.03px">Simple Topper</div><svg style="left:0;top:0" width="66.1" height="51.1"><circle cx="33.05" cy="31" r="15.5" fill="#fff" fill-opacity=".13"/><circle cx="33.05" cy="31" r="4.6" fill="none" stroke="#fff" stroke-width=".55" opacity=".42"/><circle cx="33.05" cy="31" r="6.5" fill="none" stroke="#fff" stroke-width=".55" opacity=".42"/><circle cx="33.05" cy="31" r="8.4" fill="none" stroke="#fff" stroke-width=".55" opacity=".42"/><circle cx="33.05" cy="31" r="10.1" fill="none" stroke="#fff" stroke-width=".55" opacity=".42"/><circle cx="33.05" cy="31" r="11.8" fill="none" stroke="#fff" stroke-width=".55" opacity=".42"/><circle cx="33.05" cy="31" r="13.6" fill="none" stroke="#fff" stroke-width=".55" opacity=".42"/><circle cx="33.05" cy="31" r="15.5" fill="none" stroke="#fff" stroke-width=".55" opacity=".42"/><circle cx="33.05" cy="31" r="3.1" fill="#3581d8"/><path d="M25.5 27.5A8.4 8.4 0 0 1 26.7 25.5M32.8 37.5A6.5 6.5 0 0 1 31.1 37.2M21.4 33.0A11.8 11.8 0 0 1 21.3 31.5M40.0 35.7A8.4 8.4 0 0 1 39.4 36.5M22.3 35.8A11.8 11.8 0 0 1 21.6 33.7M30.9 24.9A6.5 6.5 0 0 1 32.2 24.5M26.0 26.5A8.4 8.4 0 0 1 26.7 25.6M42.9 32.9A10.1 10.1 0 0 1 42.7 33.9M46.7 31.8A13.6 13.6 0 0 1 46.3 34.2M36.3 46.2A15.5 15.5 0 0 1 34.6 46.4M26.6 29.9A6.5 6.5 0 0 1 27.4 27.8M21.9 27.2A11.8 11.8 0 0 1 22.5 25.7M36.1 46.2A15.5 15.5 0 0 1 34.4 46.4M42.1 26.5A10.1 10.1 0 0 1 42.7 28.0M45.1 24.6A13.6 13.6 0 0 1 45.6 25.6M48.5 30.3A15.5 15.5 0 0 1 48.5 32.7M32.8 24.5A6.5 6.5 0 0 1 35.2 24.9M17.6 30.9A15.5 15.5 0 0 1 17.8 28.4M39.6 19.0A13.6 13.6 0 0 1 41.4 20.2M30.9 40.8A10.1 10.1 0 0 1 28.5 40.0M39.7 21.3A11.8 11.8 0 0 1 41.1 22.4M41.3 20.1A13.6 13.6 0 0 1 42.6 21.3" fill="none" stroke="#fff" stroke-width="1.1" opacity=".6"/></svg></div>
<div class="c" style="left:606.38px;top:111.1px;width:66.1px;height:51.10px;background:#3581d8;"><div class="t" style="letter-spacing:0.04px">Crazy HH</div><svg style="left:0;top:0" width="66.1" height="51.1"><circle cx="33.05" cy="31" r="15.5" fill="#fff" fill-opacity=".13"/><circle cx="33.05" cy="31" r="4.6" fill="none" stroke="#fff" stroke-width=".55" opacity=".42"/><circle cx="33.05" cy="31" r="6.5" fill="none" stroke="#fff" stroke-width=".55" opacity=".42"/><circle cx="33.05" cy="31" r="8.4" fill="none" stroke="#fff" stroke-width=".55" opacity=".42"/><circle cx="33.05" cy="31" r="10.1" fill="none" stroke="#fff" stroke-width=".55" opacity=".42"/><circle cx="33.05" cy="31" r="11.8" fill="none" stroke="#fff" stroke-width=".55" opacity=".42"/><circle cx="33.05" cy="31" r="13.6" fill="none" stroke="#fff" stroke-width=".55" opacity=".42"/><circle cx="33.05" cy="31" r="15.5" fill="none" stroke="#fff" stroke-width=".55" opacity=".42"/><circle cx="33.05" cy="31" r="3.1" fill="#3581d8"/><path d="M38.5 34.5A6.5 6.5 0 0 1 37.5 35.7M32.3 22.7A8.4 8.4 0 0 1 34.4 22.7M33.0 41.1A10.1 10.1 0 0 1 31.6 41.0M27.4 27.8A6.5 6.5 0 0 1 28.1 26.8M25.5 22.0A11.8 11.8 0 0 1 27.4 20.7M46.0 26.7A13.6 13.6 0 0 1 46.5 28.5M21.3 30.8A11.8 11.8 0 0 1 21.6 28.4M28.8 35.9A6.5 6.5 0 0 1 27.2 33.9M22.6 36.4A11.8 11.8 0 0 1 21.7 34.2M25.3 27.9A8.4 8.4 0 0 1 25.9 26.7M35.9 36.8A6.5 6.5 0 0 1 34.8 37.3M19.4 30.1A13.6 13.6 0 0 1 19.9 27.5M18.6 25.3A15.5 15.5 0 0 1 19.8 23.0M36.5 19.7A11.8 11.8 0 0 1 38.5 20.6M35.5 21.2A10.1 10.1 0 0 1 37.0 21.7M39.3 41.0A11.8 11.8 0 0 1 37.3 42.0M31.9 15.5A15.5 15.5 0 0 1 34.0 15.5M24.7 31.5A8.4 8.4 0 0 1 24.9 29.0M19.5 29.7A13.6 13.6 0 0 1 19.9 27.4M44.5 20.6A15.5 15.5 0 0 1 46.0 22.5M26.1 40.5A11.8 11.8 0 0 1 24.5 39.1M30.8 17.5A13.6 13.6 0 0 1 32.6 17.4" fill="none" stroke="#fff" stroke-width="1.1" opacity=".6"/></svg></div>
<div class="c" style="left:675.67px;top:111.1px;width:66.1px;height:51.10px;background:#3581d8;box-shadow:inset 0 0 0 1.2px #d2e5fb;"><div style="left:0;top:0;width:100%;height:12.4px;background:#d2e5fb"></div><div class="t" style="letter-spacing:-0.05px;color:#2d5e9e">Deep Perc</div><svg style="left:0;top:0" width="66.1" height="51.1"><circle cx="33.05" cy="31" r="16.5" fill="#fff" fill-opacity=".2"/><path d="M33.05 14.5 A16.5 16.5 0 1 1 25.8 45.9 Q34.55 34 32.849999999999994 30 Q33.849999999999994 23 33.05 14.5Z" fill="#fff" fill-opacity=".58"/><circle cx="23.0" cy="21.2" r=".7" fill="#fff" opacity=".8"/><circle cx="37.4" cy="16.0" r=".7" fill="#fff" opacity=".8"/><circle cx="32.1" cy="15.5" r=".7" fill="#fff" opacity=".8"/><circle cx="44.4" cy="33.1" r=".7" fill="#fff" opacity=".8"/><circle cx="45.5" cy="26.4" r=".7" fill="#fff" opacity=".8"/><circle cx="38.7" cy="26.9" r=".7" fill="#fff" opacity=".8"/><circle cx="24.3" cy="32.7" r=".7" fill="#fff" opacity=".8"/><circle cx="21.0" cy="27.6" r=".7" fill="#fff" opacity=".8"/><circle cx="41.6" cy="31.7" r=".7" fill="#fff" opacity=".8"/><circle cx="30.2" cy="46.2" r=".7" fill="#fff" opacity=".8"/><circle cx="33.8" cy="23.3" r=".7" fill="#fff" opacity=".8"/><circle cx="35.2" cy="23.9" r=".7" fill="#fff" opacity=".8"/><circle cx="27.7" cy="26.2" r=".7" fill="#fff" opacity=".8"/><circle cx="48.2" cy="31.2" r=".7" fill="#fff" opacity=".8"/><circle cx="35.2" cy="39.3" r=".7" fill="#fff" opacity=".8"/><circle cx="48.1" cy="29.3" r=".7" fill="#fff" opacity=".8"/><circle cx="29.2" cy="46.3" r=".7" fill="#fff" opacity=".8"/><circle cx="20.0" cy="27.7" r=".7" fill="#fff" opacity=".8"/><circle cx="37.4" cy="46.0" r=".7" fill="#fff" opacity=".8"/><circle cx="27.3" cy="16.3" r=".7" fill="#fff" opacity=".8"/><circle cx="40.6" cy="25.0" r=".7" fill="#fff" opacity=".8"/><circle cx="28.0" cy="37.0" r=".7" fill="#fff" opacity=".8"/><circle cx="36.8" cy="35.8" r=".7" fill="#fff" opacity=".8"/><circle cx="29.0" cy="43.2" r=".7" fill="#fff" opacity=".8"/><circle cx="46.6" cy="31.3" r=".7" fill="#fff" opacity=".8"/><circle cx="27.9" cy="39.3" r=".7" fill="#fff" opacity=".8"/><circle cx="37.9" cy="20.4" r=".7" fill="#fff" opacity=".8"/><circle cx="28.4" cy="41.7" r=".7" fill="#fff" opacity=".8"/><circle cx="31.4" cy="25.3" r=".7" fill="#fff" opacity=".8"/><circle cx="38.2" cy="30.2" r=".7" fill="#fff" opacity=".8"/><circle cx="33.0" cy="16.1" r=".7" fill="#fff" opacity=".8"/><circle cx="47.4" cy="32.6" r=".7" fill="#fff" opacity=".8"/><circle cx="24.6" cy="40.4" r=".7" fill="#fff" opacity=".8"/><circle cx="38.8" cy="31.3" r=".7" fill="#fff" opacity=".8"/><circle cx="39.7" cy="45.3" r=".7" fill="#fff" opacity=".8"/><circle cx="37.7" cy="44.4" r=".7" fill="#fff" opacity=".8"/><circle cx="47.2" cy="24.3" r=".7" fill="#fff" opacity=".8"/><circle cx="27.3" cy="39.5" r=".7" fill="#fff" opacity=".8"/><circle cx="18.9" cy="28.8" r=".7" fill="#fff" opacity=".8"/><circle cx="44.0" cy="39.9" r=".7" fill="#fff" opacity=".8"/><circle cx="37.4" cy="16.6" r=".7" fill="#fff" opacity=".8"/><circle cx="48.3" cy="34.6" r=".7" fill="#fff" opacity=".8"/><circle cx="41.6" cy="36.5" r=".7" fill="#fff" opacity=".8"/><circle cx="21.2" cy="21.1" r=".7" fill="#fff" opacity=".8"/><circle cx="24.7" cy="44.1" r=".7" fill="#fff" opacity=".8"/><circle cx="23.7" cy="28.3" r=".7" fill="#fff" opacity=".8"/></svg></div>
<div style="left:744.96px;top:111.1px;width:66.1px;height:51.1px;background:#383838;border-radius:3px"></div>
<div style="left:814.25px;top:111.1px;width:66.1px;height:51.1px;background:#383838;border-radius:3px"></div>
<div class="c" style="left:883.54px;top:111.1px;width:66.1px;height:51.10px;background:#3581d8;"><div class="t" style="letter-spacing:-0.06px">Space Shakers</div><svg style="left:0;top:0" width="66.1" height="51.1"><circle cx="33.05" cy="31" r="15.5" fill="#fff" fill-opacity=".13"/><circle cx="33.05" cy="31" r="4.6" fill="none" stroke="#fff" stroke-width=".55" opacity=".42"/><circle cx="33.05" cy="31" r="6.5" fill="none" stroke="#fff" stroke-width=".55" opacity=".42"/><circle cx="33.05" cy="31" r="8.4" fill="none" stroke="#fff" stroke-width=".55" opacity=".42"/><circle cx="33.05" cy="31" r="10.1" fill="none" stroke="#fff" stroke-width=".55" opacity=".42"/><circle cx="33.05" cy="31" r="11.8" fill="none" stroke="#fff" stroke-width=".55" opacity=".42"/><circle cx="33.05" cy="31" r="13.6" fill="none" stroke="#fff" stroke-width=".55" opacity=".42"/><circle cx="33.05" cy="31" r="15.5" fill="none" stroke="#fff" stroke-width=".55" opacity=".42"/><circle cx="33.05" cy="31" r="3.1" fill="#3581d8"/><path d="M39.0 18.7A13.6 13.6 0 0 1 40.5 19.6M42.9 33.3A10.1 10.1 0 0 1 42.5 34.5M19.6 33.5A13.6 13.6 0 0 1 19.4 31.3M28.8 40.1A10.1 10.1 0 0 1 27.9 39.7M36.8 19.8A11.8 11.8 0 0 1 38.8 20.7M43.0 24.7A11.8 11.8 0 0 1 43.9 26.4M35.3 37.1A6.5 6.5 0 0 1 33.5 37.5M31.5 46.4A15.5 15.5 0 0 1 29.3 46.0M46.2 39.1A15.5 15.5 0 0 1 45.3 40.5M28.8 36.0A6.5 6.5 0 0 1 27.7 34.7M23.6 34.4A10.1 10.1 0 0 1 23.2 33.3M30.5 23.0A8.4 8.4 0 0 1 32.8 22.6M39.3 29.0A6.5 6.5 0 0 1 39.6 31.0M37.0 23.6A8.4 8.4 0 0 1 39.0 25.1M43.8 26.2A11.8 11.8 0 0 1 44.6 28.5M20.9 24.7A13.6 13.6 0 0 1 22.3 22.6M46.5 29.0A13.6 13.6 0 0 1 46.7 30.0M33.4 41.1A10.1 10.1 0 0 1 31.7 41.0M24.5 25.6A10.1 10.1 0 0 1 25.2 24.7M17.7 28.6A15.5 15.5 0 0 1 18.0 27.4M31.3 46.4A15.5 15.5 0 0 1 29.2 46.0M21.3 32.2A11.8 11.8 0 0 1 21.3 31.0" fill="none" stroke="#fff" stroke-width="1.1" opacity=".6"/></svg></div>
<div style="left:952.83px;top:111.1px;width:66.1px;height:51.1px;background:#383838;border-radius:3px"></div>
<div style="left:467.8px;top:166.1px;width:66.1px;height:51.1px;background:#383838;border-radius:3px"></div>
<div class="c" style="left:537.09px;top:166.1px;width:66.1px;height:51.10px;background:#10a5c9;"><div class="t" style="letter-spacing:-0.15px">Infinity 1</div><svg style="left:0;top:0" width="66.1" height="51.1"><circle cx="33.05" cy="31" r="13.5" fill="none" stroke="#fff" stroke-width="1" stroke-dasharray="1.2 1.5" opacity=".7"/></svg></div>
<div class="c" style="left:606.38px;top:166.1px;width:66.1px;height:51.10px;background:#10a5c9;"><div class="t" style="letter-spacing:-0.03px">Infinity 2</div><svg style="left:0;top:0" width="66.1" height="51.1"><path d="M31.049999999999997 19 h2 M34.05 21 h1" stroke="#fff" stroke-width=".8" opacity=".7"/></svg></div>
<div style="left:675.67px;top:166.1px;width:66.1px;height:51.1px;background:#383838;border-radius:3px"></div>
<div class="c" style="left:744.96px;top:166.1px;width:66.1px;height:51.10px;background:#10a5c9;"><div class="t" style="letter-spacing:0.03px">Infinity 3</div><svg style="left:0;top:0" width="66.1" height="51.1"><circle cx="33.05" cy="31" r="16.2" fill="none" stroke="#fff" stroke-width=".6" opacity=".7"/><circle cx="33.05" cy="31" r="14.4" fill="none" stroke="#fff" stroke-width=".5" opacity=".5"/><circle cx="33.05" cy="31" r="11.5" fill="none" stroke="#fff" stroke-width="1.3" stroke-dasharray="1.4 1.2" opacity=".7"/><path d="M33.05 31L33.0 14.8A16.2 16.2 0 0 1 49.0 34.0Z" fill="#fff" fill-opacity="0.5"/></svg></div>
<div class="c" style="left:814.25px;top:166.1px;width:66.1px;height:51.10px;background:#10a5c9;"><div class="t" style="letter-spacing:-0.01px">Infinity 4</div><svg style="left:0;top:0" width="66.1" height="51.1"><circle cx="33.05" cy="31" r="13" fill="none" stroke="#fff" stroke-width="1" stroke-dasharray="1.2 1.4" opacity=".7"/><circle cx="33.05" cy="31" r="10.8" fill="none" stroke="#fff" stroke-width="1.3" stroke-dasharray="2.5 3.5" opacity=".65"/></svg></div>
<div style="left:883.54px;top:166.1px;width:66.1px;height:51.1px;background:#383838;border-radius:3px"></div>
<div class="c" style="left:952.83px;top:166.1px;width:66.1px;height:51.10px;background:#10a5c9;"><div class="t" style="letter-spacing:-0.03px">Infinity 5</div><svg style="left:0;top:0" width="66.1" height="51.1"><path d="M24.2 29.8l1.8 -0.8M33.9 22.4l0.6 -1.6M40.7 32.3l1.0 -1.0M25.4 30.9l1.4 1.8M25.4 36.5l-1.8 1.3M38.1 25.9l0.8 0.2M40.1 29.0l0.2 1.5M28.2 25.2l-1.7 1.8M23.7 32.5l-1.4 1.2M36.6 22.5l-1.9 -0.5M41.4 33.8l-0.6 1.8M26.8 37.3l1.5 -1.0" stroke="#fff" stroke-width="1.4" opacity=".7" fill="none"/></svg></div>
<div style="left:467.8px;top:221.1px;width:66.1px;height:51.1px;background:#383838;border-radius:3px"></div>
<div style="left:537.09px;top:221.1px;width:66.1px;height:51.1px;background:#383838;border-radius:3px"></div>
<div style="left:606.38px;top:221.1px;width:66.1px;height:51.1px;background:#383838;border-radius:3px"></div>
<div class="c" style="left:675.67px;top:221.1px;width:66.1px;height:51.10px;background:#14c8cc;"><div class="t" style="letter-spacing:-0.05px">Free Fall HH</div><svg style="left:0;top:0" width="66.1" height="51.1"><circle cx="33.05" cy="31" r="11.5" fill="none" stroke="#fff" stroke-width=".9" opacity=".8"/><path d="M33.4 22.5L33.7 16.2M34.4 20.3L34.6 18.8M35.1 21.2L35.7 18.1M36.1 20.7L36.6 19.2M36.6 21.7L37.8 18.7M37.4 22.1L38.9 19.1M38.6 21.7L39.4 20.5M39.2 23.1L41.1 20.6M39.2 24.2L42.6 20.6M41.0 23.6L42.0 22.7M40.7 25.3L44.0 22.9M41.1 26.0L44.7 23.8M42.2 26.6L44.7 25.4M42.5 27.3L45.2 26.3M42.0 28.3L46.3 27.1M43.6 28.7L45.0 28.4M42.2 30.0L47.0 29.4M43.0 30.8L46.3 30.8M43.6 31.8L45.5 31.9M43.2 32.5L45.8 32.8M43.3 33.7L45.2 34.2M43.3 34.4L44.7 34.9M42.6 35.1L44.8 36.0M40.8 35.4L45.5 38.1M41.4 36.7L43.8 38.3M41.0 37.5L43.0 39.1M39.8 37.9L42.5 40.7M40.0 39.2L41.0 40.4M38.2 38.7L40.9 42.6M38.1 40.2L39.1 42.1M36.6 38.9L39.1 44.4M35.8 39.1L37.9 45.0M35.2 39.2L36.9 45.4M34.8 40.9L35.4 43.9M33.8 39.9L34.3 45.3M32.8 39.5L32.6 45.9M32.0 39.5L31.2 45.7M31.3 39.3L30.0 45.6M30.0 40.7L29.2 43.3M29.1 40.3L27.9 43.0M28.3 40.7L27.6 42.0M27.4 40.0L26.4 41.6M27.7 37.7L23.9 42.6M25.9 39.0L24.9 40.2M25.2 38.2L23.8 39.4M25.9 36.4L21.6 39.7M24.6 36.4L22.0 38.1M24.1 35.4L21.2 36.8M25.0 34.3L19.5 36.5M24.7 33.4L19.0 35.0M23.2 32.9L20.2 33.5M24.2 31.9L18.7 32.5M22.6 31.2L20.4 31.2M23.0 30.4L20.0 30.2M23.5 29.4L19.7 28.7M24.4 28.8L19.1 27.5M24.1 28.0L20.0 26.7M24.2 27.1L20.7 25.5M24.0 25.7L22.1 24.6M24.3 24.7L23.1 23.8M25.6 24.8L22.7 22.3M26.1 24.3L23.4 21.5M26.7 23.4L24.6 20.9M26.9 21.9L26.3 21.0M28.6 23.2L26.0 18.6M29.3 23.1L26.8 17.9M29.9 22.2L28.3 17.9M30.5 21.4L29.6 18.2M31.3 20.3L31.1 18.9M32.5 21.2L32.3 17.7" stroke="#fff" stroke-width="0.8" opacity=".75" fill="none"/></svg></div>
<div class="c" style="left:744.96px;top:221.1px;width:66.1px;height:51.10px;background:#14c8cc;"><div class="t" style="letter-spacing:-0.07px">Free Fall Cym</div><svg style="left:0;top:0" width="66.1" height="51.1"><circle cx="33.05" cy="31" r="11.5" fill="none" stroke="#fff" stroke-width=".9" opacity=".8"/><path d="M35.4 20.8L35.9 18.6M39.5 23.1L41.2 21.0M43.4 28.3L45.1 27.9M43.0 34.5L44.9 35.2M38.9 39.9L39.9 41.4M30.7 41.3L30.2 43.2M25.8 38.5L24.2 40.1M21.9 31.0L21.2 31.0M23.9 26.3L21.7 25.1M28.9 21.0L28.3 19.8" stroke="#fff" stroke-width="1.2" opacity=".75" fill="none"/></svg></div>
<div style="left:814.25px;top:221.1px;width:66.1px;height:51.1px;background:#383838;border-radius:3px"></div>
<div class="c" style="left:883.54px;top:221.1px;width:66.1px;height:51.10px;background:#14c8cc;"><div class="t" style="letter-spacing:-0.11px">Arcade Perc 1</div><svg style="left:0;top:0" width="66.1" height="51.1"><circle cx="33.05" cy="31" r="11.5" fill="none" stroke="#fff" stroke-width=".9" opacity=".8"/><path d="M35.6 20.2L35.8 19.4M39.9 22.8L40.9 21.5M43.1 27.9L45.1 27.3M42.6 36.9L43.1 37.2M37.4 40.9L38.0 42.2M31.0 41.1L30.5 43.6M24.2 37.5L23.3 38.2M22.6 31.5L20.5 31.6M23.9 24.5L23.5 24.2M29.4 20.5L29.1 19.7" stroke="#fff" stroke-width="1.2" opacity=".75" fill="none"/><path d="M34.6 23.1L36.3 14.1M39.7 26.5L47.3 21.3M41.0 32.5L50.0 34.2M37.6 37.7L42.7 45.3M31.5 38.9L29.8 47.9M26.4 35.5L18.8 40.7M25.1 29.5L16.1 27.8M28.5 24.3L23.4 16.7M35.9 22.3L38.0 15.7M41.2 26.8L47.4 23.7M41.8 33.8L48.4 36.0M37.2 39.2L40.4 45.3M30.2 39.7L28.1 46.3M24.9 35.2L18.7 38.3M24.3 28.2L17.7 26.0M28.9 22.8L25.7 16.7" stroke="#fff" stroke-width="1" opacity=".75" fill="none"/></svg></div>
<div class="c" style="left:952.83px;top:221.1px;width:66.1px;height:51.10px;background:#14c8cc;"><div class="t" style="letter-spacing:-0.06px">Dream HH 1</div><svg style="left:0;top:0" width="66.1" height="51.1"><circle cx="33.05" cy="31" r="11.5" fill="none" stroke="#fff" stroke-width=".9" opacity=".8"/><path d="M33.0 21.9L33.0 14.7M33.8 22.0L34.3 14.5M34.4 22.7L35.8 13.6M35.4 21.2L36.4 17.1M36.3 21.1L37.3 18.0M36.4 22.9L39.6 15.3M37.5 22.3L39.8 17.7M38.1 22.7L40.9 18.2M38.2 23.9L43.0 17.2M39.6 23.3L42.3 20.2M39.1 25.0L45.4 18.7M40.2 24.9L44.9 20.9M41.5 24.9L44.1 22.9M40.3 26.5L47.9 21.9M41.3 26.8L47.2 23.8M42.6 27.0L45.7 25.7M41.3 28.3L49.3 25.7M41.6 28.9L49.4 27.1M41.9 29.6L49.5 28.4M42.1 30.3L49.3 29.7M41.4 31.0L50.8 31.0M43.5 31.8L46.5 32.1M41.3 32.3L50.5 33.8M41.9 33.1L48.8 34.8M43.3 34.3L45.3 35.0M42.7 35.0L45.6 36.2M42.6 35.9L44.7 36.9M41.9 36.4L44.7 38.1M41.4 37.1L44.2 39.1M41.1 37.9L43.2 39.7M40.8 38.8L41.9 39.9M40.0 39.1L41.6 41.0M39.4 39.7L40.7 41.5M38.4 39.8L40.3 42.8M37.7 40.0L39.5 43.7M37.0 40.5L38.4 43.8M36.3 41.0L37.2 43.8M35.6 41.6L36.0 43.3M34.7 41.2L35.2 44.6M33.9 41.8L34.1 43.8M33.0 41.1L33.0 45.3M32.2 41.9L32.1 43.7M31.5 41.0L30.8 45.1M30.5 41.8L30.2 43.0M29.9 40.8L28.8 44.2M28.9 40.9L28.1 43.1M28.3 40.4L26.9 43.0M27.5 40.1L26.2 42.2M26.7 39.7L25.4 41.5M26.1 39.1L24.5 41.1M25.8 38.3L23.2 40.9M24.9 38.0L23.1 39.5M24.4 37.3L22.5 38.7M24.3 36.4L21.2 38.3M23.3 35.9L21.7 36.8M23.1 35.1L21.0 36.0M23.0 34.3L20.3 35.1M22.8 33.5L20.0 34.1M22.3 32.7L20.5 33.0M22.8 31.8L19.2 32.1M22.5 31.0L19.7 31.0M22.1 30.1L20.6 30.0M22.4 29.3L20.2 29.0M22.3 28.4L20.9 28.1M22.8 27.7L20.6 27.0M22.9 26.8L21.4 26.2M23.4 26.1L21.6 25.2M24.1 25.5L21.6 24.0M24.6 24.9L21.9 22.9M25.5 24.6L21.9 21.4M26.3 24.3L22.1 20.1M26.9 23.8L22.9 19.1M27.6 23.5L23.7 18.1M28.6 23.7L24.0 16.2M28.5 22.0L26.5 18.2M29.7 22.8L26.6 15.5M30.2 22.1L28.2 15.9M31.0 22.7L29.0 14.1M31.6 22.1L30.5 14.8M32.2 20.5L32.0 17.6" stroke="#fff" stroke-width=".9" opacity=".75" fill="none"/></svg></div>
<div style="left:467.8px;top:276.1px;width:66.1px;height:51.1px;background:#383838;border-radius:3px"></div>
<div style="left:537.09px;top:276.1px;width:66.1px;height:51.1px;background:#383838;border-radius:3px"></div>
<div style="left:606.38px;top:276.1px;width:66.1px;height:51.1px;background:#383838;border-radius:3px"></div>
<div class="c" style="left:675.67px;top:276.1px;width:66.1px;height:51.10px;background:#1cc8a0;"><div class="t" style="letter-spacing:-0.12px">Reverse Noise</div><svg style="left:0;top:0" width="66.1" height="51.1"><circle cx="33.05" cy="31" r="16.1" fill="none" stroke="#fff" stroke-width=".7" opacity=".75"/><path d="M33.05 14.9 A16.1 16.1 0 0 1 27.0 44.9 Q35.05 35 33.05 30 Q34.05 23 33.05 14.9Z" fill="#fff" fill-opacity=".38"/><circle cx="33.05" cy="31" r="11.0" fill="none" stroke="#fff" stroke-width="1" opacity=".85"/><path d="M40.0 29.5 L47.5 29.5 L44.0 25Z M26.0 32.5 L18.5 32.5 L22.0 37Z" fill="#fff" opacity=".9"/></svg></div>
<div class="c" style="left:744.96px;top:276.1px;width:66.1px;height:51.10px;background:#1cc8a0;"><div class="t" style="letter-spacing:-0.10px">Pumping Noise</div><svg style="left:0;top:0" width="66.1" height="51.1"><circle cx="33.05" cy="31" r="11.5" fill="none" stroke="#fff" stroke-width="1" opacity=".85"/><path d="M34.5 19.6A11.5 11.5 0 0 1 39.8 21.7" fill="none" stroke="#fff" stroke-width="2.6" opacity=".75"/><path d="M39.8 40.3A11.5 11.5 0 0 1 33.1 42.5" fill="none" stroke="#fff" stroke-width="2.6" opacity=".75"/></svg></div>
<div class="c" style="left:814.25px;top:276.1px;width:66.1px;height:51.10px;background:#1cc8a0;"><div class="t" style="letter-spacing:-0.10px">Pumping Noise</div><svg style="left:0;top:0" width="66.1" height="51.1"><circle cx="33.05" cy="31" r="11.5" fill="none" stroke="#fff" stroke-width="1" opacity=".85"/><path d="M27.5 20.9A11.5 11.5 0 0 1 38.6 20.9" fill="none" stroke="#fff" stroke-width="2.6" opacity=".75"/><path d="M40.9 39.4A11.5 11.5 0 0 1 35.9 42.1" fill="none" stroke="#fff" stroke-width="2.6" opacity=".75"/></svg></div>
<div class="c" style="left:883.54px;top:276.1px;width:66.1px;height:51.10px;background:#1cc8a0;"><div class="t" style="letter-spacing:-0.21px">Echo Vox 1</div><svg style="left:0;top:0" width="66.1" height="51.1"><path d="M34.6 23.2L34.4 17.3L39.9 21.0L36.8 24.0ZM39.2 26.1L42.9 21.4L44.7 27.7L40.4 28.1ZM41.0 31.2L46.8 30.0L44.1 36.0L40.6 33.5ZM39.0 36.2L44.2 39.0L38.3 41.9L37.2 37.8ZM34.2 38.8L36.4 44.3L30.0 42.7L31.9 38.8ZM28.9 37.8L27.1 43.4L23.2 38.0L27.1 36.2ZM25.5 33.5L20.5 36.7L21.0 30.1L25.1 31.2ZM25.7 28.1L19.8 27.3L24.4 22.5L26.9 26.1ZM29.3 24.0L25.3 19.6L31.9 19.0L31.5 23.2Z" fill="#fff" fill-opacity=".68"/></svg></div>
<div style="left:952.83px;top:276.1px;width:66.1px;height:51.1px;background:#383838;border-radius:3px"></div>
<div style="left:467.8px;top:331.1px;width:66.1px;height:137.5px;background:#424242;border-radius:3px"></div>
<div style="left:537.09px;top:331.1px;width:66.1px;height:137.5px;background:#424242;border-radius:3px"></div>
<div style="left:606.38px;top:331.1px;width:66.1px;height:137.5px;background:#424242;border-radius:3px"></div>
<div class="c" style="left:675.67px;top:331.1px;width:66.1px;height:137.50px;background:#18c760;"><div class="t" style="letter-spacing:-0.16px">Big Bass Beat 1</div><svg style="left:0;top:0" width="66.1" height="137.5"><circle cx="33.05" cy="74.5" r="19" fill="none" stroke="#fff" stroke-width="0.6" opacity="0.6"/><path d="M21.2 70.6L9.2 66.8M20.6 69.7L6.8 64.4M22.4 69.7L8.3 63.4M22.6 69.1L10.2 62.7M23.5 68.9L10.1 61.0M24.0 68.5L10.6 59.6M24.5 68.1L12.2 59.0M22.8 65.9L14.1 58.7M24.9 66.9L14.9 57.6M25.2 66.3L14.5 55.2M24.1 64.1L15.1 53.7M24.6 63.5L16.0 52.4M27.0 65.7L18.9 53.9M27.3 65.0L18.8 51.2M26.6 62.6L20.2 50.7M27.3 62.3L21.1 49.1M29.6 63.8L24.3 47.5M29.6 61.1L26.7 49.9M30.9 63.2L28.0 48.2M31.4 61.3L29.5 46.7M32.4 63.9L31.5 49.2M33.0 61.1L33.0 47.5M33.0 62.1L33.0 47.5M33.8 62.5L34.7 48.8M34.8 60.7L36.1 50.1M35.3 62.5L38.2 47.7M36.1 62.6L39.9 48.0M36.7 63.2L41.7 47.9M39.1 64.9L46.7 53.0M40.9 63.6L47.2 54.7M41.7 63.7L50.5 52.8M40.1 66.7L51.4 54.2M42.7 64.9L52.2 55.5M43.1 65.5L54.0 55.9M42.0 67.4L54.5 57.5M42.5 67.8L54.2 59.6M42.0 68.9L57.1 59.5M44.5 68.2L55.8 62.0M43.9 72.4L59.6 69.4M45.3 72.8L58.8 71.0M43.1 73.6L58.2 72.4M46.2 74.1L60.1 73.6M45.9 74.7L61.1 75.0M45.7 75.4L61.1 76.5M45.4 76.0L60.8 77.9M43.9 76.4L59.9 79.2M45.9 77.4L57.2 80.0M46.4 78.3L56.9 81.3M43.8 78.2L56.0 82.3M45.2 79.3L57.7 84.4M45.2 80.1L56.2 85.2M44.6 80.6L57.0 87.1M44.7 81.4L57.5 89.0M42.7 80.9L55.7 89.6M42.5 81.5L54.1 90.2M40.8 80.9L54.6 92.4M39.3 83.2L47.2 94.0M39.3 84.3L48.2 98.3M38.6 84.5L45.7 97.6M37.9 84.8L43.6 96.9M37.1 84.8L43.2 100.1M37.3 87.5L41.2 99.5M35.9 85.8L39.4 99.3M33.0 85.8L33.0 102.6M32.5 84.9L31.6 99.8M31.6 87.8L29.9 102.2M31.1 85.9L28.4 101.8M30.7 84.8L27.5 99.1M29.8 85.7L26.1 98.9M29.5 84.7L24.1 100.1M28.1 86.6L23.0 98.8M28.0 85.0L22.2 97.1M26.7 86.1L20.5 97.4M23.1 83.9L13.9 92.5M25.2 81.1L11.8 92.3M22.0 82.7L10.8 91.1M23.8 80.6L10.4 89.5M21.0 81.5L9.4 88.3M21.3 80.5L8.4 87.0M21.4 79.6L9.6 84.8M20.6 79.2L6.9 84.3M20.5 78.4L6.4 82.8M21.5 77.4L9.1 80.5M21.9 76.6L7.1 79.4" stroke="#fff" stroke-width="0.7" opacity="0.62" fill="none"/></svg></div>
<div class="c" style="left:744.96px;top:331.1px;width:66.1px;height:137.50px;background:#18c760;"><div class="t" style="letter-spacing:-0.12px">Big Bass Beat 2</div><svg style="left:0;top:0" width="66.1" height="137.5"><circle cx="33.05" cy="74.5" r="17.5" fill="none" stroke="#fff" stroke-width="0.7" opacity="0.7"/><path d="M33.4 62.8L34.0 49.4L32.0 49.4L32.7 62.8ZM35.5 61.8L37.9 51.5L35.9 51.1L34.8 61.7ZM37.4 62.9L41.8 52.0L39.9 51.3L36.7 62.6ZM39.3 63.7L45.4 53.9L43.6 52.9L38.7 63.3ZM40.4 65.6L49.4 55.1L47.8 53.9L39.8 65.2ZM41.8 66.9L52.2 58.2L50.9 56.7L41.4 66.4ZM42.6 68.7L55.1 61.3L54.0 59.6L42.2 68.1ZM44.9 69.7L55.1 65.9L54.3 64.1L44.6 69.0ZM44.9 71.9L57.1 69.4L56.6 67.5L44.7 71.2ZM45.9 73.8L56.6 73.6L56.4 71.6L45.9 73.1ZM45.5 75.9L56.9 77.5L57.1 75.5L45.6 75.2ZM44.6 77.8L56.8 81.5L57.3 79.6L44.7 77.1ZM44.7 80.0L54.2 84.9L55.0 83.0L45.0 79.4ZM43.4 81.7L52.6 88.4L53.7 86.8L43.8 81.1ZM38.3 84.9L44.1 97.1L45.9 96.1L38.9 84.6ZM36.6 85.9L40.2 98.3L42.1 97.7L37.2 85.6ZM34.8 86.9L36.0 98.3L38.0 98.0L35.5 86.8ZM32.7 86.3L32.0 99.5L34.0 99.5L33.4 86.3ZM30.8 85.7L27.9 99.5L29.8 99.8L31.5 85.8ZM28.5 86.6L24.5 96.4L26.4 97.0L29.2 86.8ZM27.3 84.3L20.0 96.5L21.8 97.4L27.9 84.7ZM25.7 83.4L16.8 93.8L18.3 95.0L26.2 83.9ZM23.8 82.6L14.5 90.2L15.8 91.7L24.2 83.1ZM22.3 81.1L12.5 86.7L13.6 88.4L22.7 81.7ZM22.8 78.6L8.9 84.0L9.7 85.8L23.0 79.3ZM21.0 77.2L9.2 79.5L9.7 81.4L21.2 77.9ZM20.3 75.2L9.4 75.5L9.5 77.5L20.4 75.9ZM20.4 73.1L9.5 71.5L9.4 73.5L20.3 73.8ZM22.2 71.4L8.5 67.2L8.0 69.2L22.0 72.1ZM22.4 69.5L10.6 63.5L9.8 65.4L22.1 70.1ZM23.7 68.0L12.2 59.7L11.1 61.4L23.3 68.6ZM29.6 63.5L25.8 50.2L23.9 50.9L29.0 63.7ZM31.4 62.7L30.0 49.9L28.0 50.2L30.7 62.8Z" fill="#fff" fill-opacity="0.78"/></svg></div>
<div class="c" style="left:814.25px;top:331.1px;width:66.1px;height:137.50px;background:#18c760;"><div class="t" style="letter-spacing:-0.12px">Big Bass Beat 3</div><svg style="left:0;top:0" width="66.1" height="137.5"><circle cx="33.05" cy="74.5" r="19" fill="none" stroke="#fff" stroke-width="0.7" opacity="0.8"/><path d="M33.4 60.4L34.0 49.8L32.0 49.8L32.7 60.4ZM35.2 61.7L37.6 48.9L35.6 48.7L34.5 61.6ZM37.1 61.2L40.7 50.8L38.8 50.3L36.5 61.0ZM38.7 62.4L44.1 51.5L42.3 50.7L38.1 62.1ZM40.1 63.6L47.4 52.9L45.7 51.9L39.5 63.2ZM41.4 64.8L50.3 54.9L48.8 53.6L40.9 64.3ZM43.1 65.6L52.4 57.9L51.0 56.4L42.6 65.1ZM44.1 67.1L54.5 60.6L53.4 59.0L43.7 66.5ZM45.7 68.3L55.4 64.1L54.5 62.3L45.4 67.7ZM45.8 70.4L57.4 67.0L56.7 65.1L45.6 69.7ZM46.4 72.1L58.1 70.4L57.6 68.4L46.2 71.4ZM45.8 74.0L59.3 73.8L59.1 71.8L45.7 73.3ZM46.2 75.8L58.6 77.3L58.7 75.3L46.3 75.1ZM45.6 77.5L58.3 80.8L58.7 78.9L45.7 76.8ZM45.6 79.4L56.7 84.0L57.3 82.1L45.8 78.7ZM45.2 81.2L54.7 86.9L55.6 85.1L45.5 80.6ZM43.2 82.2L53.9 90.5L55.0 88.9L43.6 81.6Z" fill="#fff" fill-opacity="0.78"/></svg></div>
<div class="c" style="left:883.54px;top:331.1px;width:66.1px;height:137.50px;background:#18c760;"><div class="t" style="letter-spacing:-0.08px">Arcade Beat 1</div><svg style="left:0;top:0" width="66.1" height="137.5"><circle cx="33.05" cy="74.5" r="16" fill="none" stroke="#fff" stroke-width="0.6" opacity="0.5"/><path d="M33.6 66.5L34.6 47.6L31.5 47.6L32.5 66.5ZM35.7 66.9L40.6 52.6L38.3 51.9L34.9 66.7ZM37.2 67.6L45.2 54.1L43.3 53.1L36.5 67.3ZM40.2 70.9L55.2 63.2L53.1 59.7L39.5 69.7ZM41.0 73.2L56.2 70.8L55.2 66.8L40.6 71.8ZM41.0 75.7L56.4 78.1L56.6 73.4L41.1 74.1ZM40.2 78.0L57.7 86.3L58.5 84.5L40.5 77.4ZM37.8 81.0L47.8 94.5L51.6 91.1L39.1 79.8ZM35.8 82.0L41.3 96.9L44.5 95.5L36.9 81.5ZM33.3 82.5L33.8 97.7L36.5 97.5L34.2 82.4ZM31.3 82.3L27.7 99.0L31.7 99.5L32.7 82.5ZM29.0 81.4L19.9 97.3L21.6 98.2L29.6 81.7ZM27.2 80.0L13.7 93.1L16.7 95.7L28.2 80.9ZM25.8 78.0L10.3 86.0L12.3 89.3L26.6 79.2ZM25.1 75.8L6.8 79.1L7.4 81.6L25.3 76.7ZM25.1 73.6L6.4 71.8L6.3 76.0L25.0 75.0ZM25.7 71.2L11.3 64.7L9.8 69.1L25.2 72.7ZM26.8 69.5L12.3 58.2L10.8 60.3L26.3 70.2ZM28.0 68.2L15.5 53.2L12.7 56.0L27.0 69.2ZM30.1 67.0L24.3 52.6L21.6 53.9L29.1 67.5ZM31.9 66.6L29.2 49.0L26.3 49.6L30.9 66.8Z" fill="#fff" fill-opacity="0.72"/></svg></div>
<div class="c" style="left:952.83px;top:331.1px;width:66.1px;height:137.50px;background:#18c760;"><div class="t" style="letter-spacing:-0.13px">Dream Beat 1</div><svg style="left:0;top:0" width="66.1" height="137.5"><path d="M33.0 51.7L33.6 51.7L34.2 51.7L34.7 51.6L35.3 51.7L35.8 51.7L36.4 51.7L36.9 51.8L37.5 51.9L38.0 52.0L38.6 52.1L39.1 52.3L39.6 52.4L40.2 52.6L40.7 52.8L41.2 53.0L41.7 53.2L42.2 53.5L42.7 53.7L43.2 54.0L43.7 54.3L44.1 54.6L44.6 54.9L45.0 55.2L45.5 55.5L45.9 55.9L46.3 56.2L46.8 56.6L47.2 56.9L47.6 57.3L48.0 57.6L48.4 58.0L48.8 58.4L49.2 58.7L49.6 59.1L50.0 59.5L50.3 59.9L50.7 60.3L51.1 60.7L51.4 61.1L51.8 61.6L52.1 62.0L52.5 62.4L52.8 62.9L53.1 63.4L53.4 63.8L53.6 64.3L53.9 64.8L54.2 65.3L54.4 65.8L54.6 66.3L54.8 66.8L55.0 67.4L55.1 67.9L55.3 68.5L55.4 69.0L55.5 69.5L55.6 70.1L55.6 70.6L55.7 71.2L55.7 71.7L55.8 72.3L55.8 72.9L55.8 73.4L55.7 74.0L55.7 74.5L55.7 75.0L55.6 75.6L55.6 76.1L55.5 76.7L55.4 77.2L55.4 77.8L55.3 78.3L55.2 78.8L55.1 79.4L55.0 79.9L54.9 80.4L54.7 81.0L54.6 81.5L54.5 82.0L54.3 82.6L54.1 83.1L54.0 83.6L53.8 84.1L53.6 84.6L53.3 85.2L53.1 85.7L52.9 86.2L52.6 86.6L52.3 87.1L52.0 87.6L51.7 88.0L51.4 88.5L51.0 88.9L50.7 89.4L50.3 89.8L49.9 90.2L49.5 90.5L49.1 90.9L48.7 91.3L48.2 91.6L47.8 92.0L47.3 92.3L46.9 92.6L46.4 92.9L45.9 93.2L45.5 93.5L45.0 93.7L44.5 94.0L44.0 94.2L43.5 94.5L43.0 94.7L42.6 95.0L42.1 95.2L41.6 95.4L41.1 95.6L40.5 95.8L40.0 96.0L39.5 96.2L39.0 96.4L38.5 96.5L38.0 96.7L37.4 96.9L36.9 97.0L36.4 97.1L35.8 97.2L35.3 97.3L34.7 97.4L34.2 97.5L33.6 97.5L33.0 97.5L32.5 97.5L31.9 97.5L31.4 97.5L30.8 97.4L30.3 97.4L29.7 97.3L29.2 97.2L28.6 97.0L28.1 96.9L27.6 96.7L27.0 96.6L26.5 96.4L26.0 96.2L25.5 96.0L25.0 95.7L24.5 95.5L24.0 95.3L23.5 95.0L23.0 94.8L22.6 94.5L22.1 94.2L21.6 93.9L21.2 93.7L20.7 93.4L20.2 93.1L19.8 92.8L19.3 92.5L18.9 92.1L18.4 91.8L18.0 91.5L17.6 91.1L17.2 90.8L16.7 90.4L16.3 90.0L15.9 89.7L15.5 89.3L15.2 88.9L14.8 88.4L14.5 88.0L14.1 87.6L13.8 87.1L13.5 86.7L13.2 86.2L12.9 85.7L12.6 85.2L12.4 84.7L12.2 84.2L12.0 83.7L11.8 83.2L11.6 82.6L11.4 82.1L11.3 81.6L11.2 81.0L11.1 80.5L11.0 79.9L10.9 79.4L10.8 78.9L10.7 78.3L10.7 77.8L10.6 77.2L10.6 76.7L10.5 76.1L10.5 75.6L10.5 75.0L10.5 74.5L10.5 74.0L10.5 73.4L10.5 72.9L10.5 72.3L10.6 71.8L10.6 71.2L10.7 70.7L10.7 70.1L10.8 69.6L10.9 69.0L11.0 68.5L11.1 68.0L11.2 67.4L11.4 66.9L11.5 66.3L11.7 65.8L11.9 65.3L12.2 64.8L12.4 64.3L12.6 63.8L12.9 63.3L13.2 62.8L13.5 62.4L13.8 61.9L14.2 61.5L14.5 61.0L14.9 60.6L15.2 60.2L15.6 59.8L16.0 59.4L16.4 59.0L16.8 58.6L17.2 58.3L17.6 57.9L18.1 57.6L18.5 57.2L18.9 56.9L19.4 56.6L19.8 56.3L20.0 55.5L20.4 55.2L20.9 54.9L21.3 54.6L21.8 54.3L22.3 54.0L22.8 53.7L23.5 53.9L24.0 53.7L24.5 53.4L25.0 53.2L25.5 53.0L26.0 52.7L26.5 52.5L27.0 52.4L27.6 52.2L28.1 52.0L28.6 51.9L29.2 51.8L29.7 51.7L30.3 51.6L30.8 51.6L31.4 51.5L31.9 51.5L32.5 51.5ZM33.0 59.7L33.4 59.7L33.8 59.7L34.1 59.7L34.5 59.7L34.9 59.7L35.2 59.7L35.6 59.7L35.9 59.8L36.3 59.8L36.6 59.9L37.0 60.0L37.4 60.1L37.7 60.2L38.0 60.3L38.4 60.4L38.7 60.6L39.1 60.7L39.4 60.9L39.7 61.1L40.0 61.2L40.3 61.4L40.6 61.6L40.9 61.8L41.2 62.1L41.5 62.3L41.8 62.5L42.0 62.8L42.3 63.0L42.5 63.2L42.8 63.5L43.0 63.8L43.3 64.0L43.5 64.3L43.7 64.6L44.0 64.8L44.2 65.1L44.4 65.4L44.6 65.7L44.8 65.9L45.0 66.2L45.2 66.5L45.4 66.8L45.6 67.1L45.8 67.4L46.0 67.7L46.2 68.0L46.3 68.3L46.5 68.6L46.7 69.0L46.8 69.3L47.0 69.6L47.1 69.9L47.2 70.3L47.4 70.6L47.5 70.9L47.6 71.3L47.7 71.6L47.8 72.0L47.9 72.3L47.9 72.7L48.0 73.1L48.0 73.4L48.1 73.8L48.1 74.1L48.1 74.5L48.1 74.9L48.1 75.2L48.1 75.6L48.0 76.0L48.0 76.3L47.9 76.7L47.8 77.0L47.7 77.4L47.6 77.7L47.5 78.1L47.4 78.4L47.3 78.7L47.2 79.1L47.0 79.4L46.9 79.7L46.7 80.1L46.5 80.4L46.4 80.7L46.2 81.0L46.0 81.3L45.8 81.6L45.6 81.9L45.4 82.2L45.2 82.5L45.0 82.8L44.8 83.1L44.6 83.3L44.4 83.6L44.2 83.9L44.0 84.2L43.7 84.4L43.5 84.7L43.3 85.0L43.0 85.2L42.8 85.5L42.5 85.7L42.3 86.0L42.0 86.2L41.7 86.4L41.5 86.7L41.2 86.9L40.9 87.1L40.6 87.3L40.3 87.5L40.0 87.7L39.7 87.9L39.4 88.1L39.0 88.2L38.7 88.4L38.4 88.6L38.0 88.7L37.7 88.8L37.4 88.9L37.0 89.0L36.7 89.1L36.3 89.2L35.9 89.2L35.6 89.3L35.2 89.3L34.9 89.4L34.5 89.4L34.1 89.4L33.8 89.4L33.4 89.4L33.0 89.4L32.7 89.3L32.3 89.3L32.0 89.2L31.6 89.2L31.3 89.1L30.9 89.0L30.6 88.9L30.2 88.9L29.9 88.8L29.6 88.7L29.2 88.6L28.9 88.5L28.6 88.3L28.2 88.2L27.9 88.1L27.6 88.0L27.2 87.8L26.9 87.7L26.6 87.6L26.3 87.4L25.9 87.3L25.6 87.1L25.3 87.0L25.0 86.8L24.7 86.6L24.4 86.4L24.1 86.2L23.8 86.0L23.5 85.8L23.2 85.6L22.9 85.4L22.6 85.2L22.4 84.9L22.1 84.7L21.8 84.4L21.6 84.2L21.3 83.9L21.1 83.6L20.9 83.3L20.7 83.0L20.5 82.7L20.3 82.4L20.1 82.1L19.9 81.8L19.7 81.5L19.6 81.2L19.5 80.8L19.3 80.5L19.2 80.1L19.1 79.8L19.0 79.4L18.9 79.1L18.8 78.7L18.8 78.4L18.7 78.0L18.6 77.7L18.6 77.3L18.6 77.0L18.5 76.6L18.5 76.3L18.5 75.9L18.5 75.6L18.5 75.2L18.5 74.9L18.5 74.5L18.5 74.1L18.5 73.8L18.5 73.4L18.6 73.1L18.6 72.7L18.6 72.4L18.7 72.0L18.7 71.7L18.8 71.3L18.8 71.0L18.9 70.6L19.0 70.3L19.1 70.0L19.1 69.6L19.2 69.3L19.3 68.9L19.4 68.6L19.6 68.2L19.7 67.9L19.8 67.6L20.0 67.2L20.1 66.9L20.3 66.6L20.5 66.3L20.7 66.0L20.9 65.7L21.1 65.4L21.3 65.1L21.5 64.8L21.8 64.5L22.0 64.3L22.3 64.0L22.6 63.8L22.8 63.5L23.1 63.3L23.4 63.1L23.7 62.8L24.0 62.6L24.3 62.5L24.6 62.3L21.8 57.4L22.2 57.1L22.7 56.8L23.1 56.6L23.5 56.3L24.0 56.1L24.4 55.9L24.9 55.7L27.5 61.0L27.9 60.9L28.2 60.7L28.5 60.6L28.9 60.5L29.2 60.5L29.6 60.4L29.9 60.3L30.3 60.2L30.6 60.1L30.9 60.1L31.3 60.0L31.6 60.0L32.0 59.9L32.3 59.9L32.7 59.8Z" fill="#fff" fill-opacity="0.68" fill-rule="evenodd"/></svg></div>
<div class="c" style="left:467.80px;top:473px;width:66.1px;height:82.00px;background:#16c434;"><div class="t" style="letter-spacing:-0.15px">Free Fall Piano</div><svg style="left:0;top:0" width="66.1" height="82.0"><path d="M33.0 20.4L33.5 20.5L33.9 19.4L34.3 19.6L34.6 20.6L35.1 20.3L35.5 20.5L35.9 20.3L36.3 20.3L36.5 21.4L36.9 21.7L37.5 20.6L37.7 21.4L38.2 21.1L38.3 22.3L38.8 21.8L39.3 21.7L39.5 22.5L40.1 21.7L40.4 22.0L40.4 23.3L40.8 23.5L41.3 23.1L41.8 22.8L41.9 23.7L42.1 24.1L42.6 24.0L42.7 24.7L43.1 24.7L43.5 24.7L43.8 24.9L44.0 25.4L44.3 25.6L44.5 25.9L44.9 25.9L45.1 26.3L45.3 26.8L46.0 26.3L46.1 26.8L46.4 27.0L46.4 27.7L47.1 27.3L47.3 27.7L47.1 28.5L47.4 28.6L47.9 28.6L48.1 28.9L48.4 29.1L48.4 29.7L48.8 29.7L48.9 30.1L48.9 30.6L49.3 30.8L49.6 30.9L49.8 31.2L49.8 31.7L50.0 32.0L49.9 32.5L50.1 32.7L50.6 32.8L50.6 33.3L50.6 33.7L50.9 33.9L51.2 34.1L51.3 34.4L51.2 34.9L51.4 35.1L51.6 35.4L51.8 35.7L51.8 36.1L51.8 36.4L52.0 36.7L51.9 37.1L52.0 37.5L52.4 37.6L52.6 37.9L52.5 38.3L52.5 38.7L52.5 39.0L52.7 39.3L53.0 39.5L52.9 39.9L52.9 40.2L53.1 40.5L52.8 40.9L53.0 41.2L53.2 41.5L53.1 41.8L53.1 42.2L53.0 42.5L53.2 42.8L53.3 43.1L53.0 43.5L53.3 43.8L53.3 44.1L53.4 44.4L53.3 44.7L53.3 45.0L53.2 45.4L53.2 45.7L59.2 46.0L58.4 46.4L59.7 46.8L59.1 47.2L58.4 47.6L58.8 48.0L58.6 48.4L58.3 48.8L58.1 49.2L58.3 49.6L58.3 50.0L58.1 50.4L57.7 50.7L57.0 50.9L57.1 51.4L56.8 51.7L57.2 52.2L57.4 52.7L57.1 53.0L56.9 53.3L56.7 53.7L55.9 53.8L56.4 54.4L55.9 54.7L55.1 54.7L54.8 55.0L54.6 55.3L55.1 56.0L54.4 56.0L54.0 56.3L54.3 56.8L53.8 57.0L53.3 57.1L53.1 57.5L53.2 57.9L52.7 58.0L52.5 58.3L52.6 58.9L52.1 59.0L51.8 59.2L51.6 59.5L51.0 59.5L51.0 59.9L50.8 60.2L50.3 60.3L50.0 60.5L50.2 61.2L49.7 61.1L49.2 61.2L49.2 61.6L49.0 62.0L48.3 61.7L48.0 61.9L47.7 62.1L47.7 62.7L47.2 62.5L47.1 63.0L46.8 63.2L46.4 63.3L46.0 63.2L46.0 63.8L45.6 63.9L45.2 63.9L44.8 63.8L44.6 64.2L44.2 64.2L43.9 64.4L43.6 64.4L43.3 64.7L42.9 64.5L42.6 64.7L42.5 65.2L42.1 65.2L41.7 65.1L41.5 65.4L41.0 65.2L40.8 65.6L40.5 65.6L40.1 65.5L39.7 65.5L39.4 65.5L39.2 65.9L38.7 65.6L38.5 66.0L38.2 66.1L37.8 66.0L37.5 65.8L37.2 66.2L36.9 66.2L36.6 66.2L36.2 66.1L35.9 66.1L35.6 66.1L35.3 66.0L35.0 66.2L34.6 66.1L34.3 66.1L34.0 66.0L33.7 66.2L33.4 66.1L33.0 72.2L32.6 71.8L32.2 72.6L31.8 72.6L31.5 71.0L31.1 71.2L30.7 71.3L30.2 72.2L29.8 71.7L29.5 70.9L29.2 70.6L28.7 71.1L28.2 71.2L27.8 71.2L27.6 70.2L27.1 70.7L26.8 70.3L26.5 69.9L26.0 70.3L25.9 69.2L25.4 69.6L25.3 68.6L24.9 68.5L24.3 69.2L24.3 68.2L23.7 68.6L23.5 68.2L23.0 68.2L23.0 67.5L22.7 67.2L22.4 66.9L21.8 67.3L21.6 66.7L21.2 66.8L20.9 66.5L21.1 65.6L20.6 65.7L20.5 65.0L20.3 64.7L20.0 64.5L19.3 64.9L19.1 64.5L18.9 64.3L18.9 63.7L18.5 63.6L18.2 63.4L18.2 62.8L17.9 62.7L17.9 62.2L17.7 61.8L17.4 61.6L16.9 61.7L16.8 61.2L16.4 61.1L16.5 60.6L16.5 60.2L16.0 60.1L15.8 59.8L16.1 59.2L15.6 59.1L15.7 58.6L15.6 58.3L15.0 58.3L15.3 57.7L15.1 57.4L14.5 57.3L14.7 56.8L14.7 56.4L14.6 56.1L14.4 55.9L14.1 55.7L14.3 55.2L13.8 55.1L14.0 54.6L13.6 54.4L13.5 54.1L13.7 53.6L13.7 53.3L13.5 53.0L13.6 52.7L13.3 52.4L13.5 52.0L13.5 51.7L13.0 51.5L13.2 51.1L13.1 50.8L13.1 50.5L13.1 50.1L13.2 49.8L12.8 49.5L12.8 49.2L12.7 48.9L13.1 48.5L13.0 48.2L12.9 47.9L12.7 47.6L12.9 47.3L12.8 47.0L12.8 46.6L13.0 46.3L6.8 46.0L7.2 45.6L7.4 45.2L7.8 44.8L7.6 44.4L6.6 43.9L7.6 43.6L7.4 43.2L7.5 42.8L7.2 42.3L8.2 42.1L8.5 41.7L8.6 41.3L8.7 41.0L8.2 40.4L8.3 40.1L9.3 39.9L9.4 39.5L9.3 39.1L9.5 38.7L9.6 38.4L10.3 38.2L10.7 38.0L10.7 37.5L11.1 37.3L10.7 36.8L11.5 36.7L11.7 36.4L11.3 35.8L11.9 35.6L11.6 35.1L12.2 34.9L12.1 34.5L13.0 34.5L12.9 34.1L12.9 33.6L13.8 33.8L13.3 33.0L14.2 33.2L14.0 32.6L14.1 32.2L14.5 32.1L15.1 32.1L15.6 32.0L15.5 31.5L15.6 31.1L16.3 31.2L16.2 30.6L16.9 30.9L16.7 30.2L17.6 30.5L17.7 30.1L17.6 29.6L18.0 29.5L18.3 29.2L18.6 29.1L19.0 29.0L19.3 28.8L19.8 29.0L20.0 28.6L20.4 28.6L20.5 28.2L20.9 28.1L21.3 28.1L21.7 28.1L21.7 27.5L22.1 27.4L22.5 27.5L22.8 27.4L23.0 27.1L23.5 27.2L23.8 27.1L24.1 27.0L24.5 27.0L24.8 27.0L25.0 26.6L25.4 26.6L25.7 26.5L26.1 26.7L26.4 26.4L26.7 26.5L27.0 26.4L27.3 26.3L27.6 26.0L28.0 26.1L28.3 26.1L28.6 26.0L28.9 26.1L29.3 26.2L29.5 25.9L29.9 25.9L30.2 25.8L30.5 25.9L30.8 25.8L31.1 25.8L31.5 25.9L31.8 25.8L32.1 25.8L32.4 25.9L32.7 25.9ZM33.0 33.8L33.2 33.7L33.4 33.7L33.7 33.1L33.8 34.0L34.0 33.8L34.3 32.8L34.5 33.1L34.6 33.5L34.8 33.4L35.0 33.6L35.3 33.0L35.4 33.4L35.7 33.2L36.0 32.8L36.1 33.1L36.3 33.4L36.5 33.3L36.8 33.0L37.0 33.1L37.4 32.5L37.6 32.7L37.6 33.3L38.0 32.9L38.3 32.7L38.4 33.1L38.6 33.3L38.8 33.3L39.1 33.0L39.4 33.1L39.6 33.2L39.7 33.5L40.0 33.4L40.3 33.3L40.5 33.5L40.9 33.2L41.1 33.3L41.1 33.8L41.2 34.1L41.6 33.9L41.9 33.9L42.2 33.8L42.3 34.1L42.3 34.5L42.6 34.5L42.9 34.5L43.0 34.8L43.5 34.5L43.6 34.8L43.6 35.2L43.9 35.1L44.2 35.2L44.5 35.2L44.6 35.5L44.6 35.8L45.2 35.6L45.1 36.1L45.2 36.2L45.4 36.4L45.7 36.5L45.8 36.7L46.1 36.8L46.3 37.0L46.5 37.1L46.9 37.2L46.7 37.6L47.0 37.8L47.3 37.9L47.3 38.2L47.5 38.4L47.7 38.5L47.9 38.7L47.9 39.0L48.0 39.2L48.2 39.5L48.4 39.7L48.7 39.8L48.7 40.1L48.9 40.3L48.8 40.6L48.8 40.9L49.0 41.1L49.1 41.3L49.2 41.6L49.5 41.8L49.4 42.1L49.5 42.3L49.8 42.5L49.9 42.8L50.0 43.1L49.8 43.4L50.0 43.6L50.1 43.8L50.0 44.1L50.1 44.4L50.2 44.6L50.3 44.9L50.2 45.2L50.3 45.5L50.3 45.7L45.1 46.0L45.5 46.2L45.7 46.4L45.6 46.6L46.2 46.8L45.8 47.0L45.8 47.2L46.2 47.4L46.3 47.7L45.4 47.8L45.9 48.0L46.3 48.3L45.9 48.4L45.7 48.6L46.6 49.0L46.6 49.2L46.4 49.4L45.8 49.5L46.4 49.9L45.9 49.9L45.9 50.2L46.0 50.4L46.3 50.8L45.6 50.7L45.8 51.0L46.0 51.4L46.2 51.7L45.8 51.8L46.0 52.1L45.8 52.2L46.0 52.6L45.7 52.7L46.1 53.1L45.8 53.3L45.2 53.2L45.3 53.5L45.6 54.0L45.1 53.9L45.4 54.4L44.9 54.3L45.0 54.7L45.1 55.0L45.1 55.3L45.1 55.7L44.5 55.5L44.9 56.1L44.3 55.9L44.1 56.1L44.2 56.5L44.3 56.9L43.8 56.8L43.6 56.9L43.6 57.2L43.6 57.5L43.5 57.8L43.3 58.0L43.2 58.3L42.9 58.3L42.8 58.6L42.7 58.9L42.6 59.1L42.2 59.0L42.1 59.4L41.9 59.4L41.7 59.7L41.4 59.6L41.2 59.8L41.2 60.3L41.0 60.4L40.7 60.5L40.4 60.4L40.2 60.6L40.1 61.0L39.9 61.1L39.6 61.1L39.3 61.2L39.1 61.3L39.0 61.6L38.6 61.5L38.4 61.7L38.2 61.9L37.9 61.9L37.8 62.2L37.5 62.2L37.3 62.5L37.0 62.5L36.7 62.4L36.5 62.7L36.2 62.6L36.0 62.7L35.7 62.7L35.5 62.9L35.2 63.0L34.9 63.0L34.6 62.9L34.4 63.0L34.1 63.0L33.9 63.0L33.6 63.3L33.3 63.2L33.0 58.8L32.8 59.0L32.6 59.0L32.5 58.0L32.3 58.2L32.1 58.2L31.8 58.9L31.7 58.6L31.5 58.4L31.2 59.0L31.0 58.8L30.7 59.2L30.5 59.4L30.3 59.2L30.2 58.5L29.9 58.9L29.8 58.6L29.5 59.1L29.2 59.3L29.1 58.7L28.9 58.7L28.4 59.5L28.4 58.8L28.0 59.4L27.8 59.3L27.8 58.6L27.3 59.3L27.1 59.1L27.2 58.4L26.7 58.9L26.4 59.1L26.2 59.0L26.0 58.9L26.0 58.4L25.5 58.8L25.6 58.2L25.1 58.5L25.2 58.0L24.9 58.0L24.4 58.3L24.2 58.2L24.0 58.0L23.7 58.1L23.7 57.7L23.2 57.9L23.0 57.8L23.2 57.2L22.7 57.4L22.6 57.1L22.3 57.1L22.0 57.0L21.7 57.0L21.9 56.5L21.7 56.3L21.5 56.2L20.9 56.4L20.8 56.2L20.8 55.8L20.7 55.5L20.4 55.5L20.2 55.3L20.0 55.1L19.7 55.1L19.6 54.8L19.4 54.7L19.2 54.5L18.9 54.4L18.8 54.1L19.0 53.7L18.6 53.7L18.5 53.4L18.4 53.2L18.3 52.9L18.0 52.8L17.8 52.6L17.7 52.4L17.5 52.1L17.6 51.8L17.5 51.6L17.2 51.4L17.1 51.2L17.0 50.9L16.9 50.7L16.8 50.4L16.6 50.2L16.5 50.0L16.5 49.7L16.3 49.5L16.4 49.2L16.2 48.9L16.1 48.7L16.2 48.4L16.1 48.1L16.2 47.9L16.0 47.6L16.1 47.3L15.8 47.1L15.9 46.8L16.0 46.5L15.8 46.3L21.3 46.0L20.2 45.8L21.0 45.6L21.2 45.4L20.9 45.2L20.2 45.0L19.9 44.8L20.3 44.6L20.8 44.4L20.0 44.1L20.6 44.0L19.7 43.7L20.6 43.6L19.6 43.2L19.9 43.1L20.5 43.0L20.4 42.7L20.5 42.6L20.4 42.3L20.3 42.1L20.2 41.8L19.7 41.4L20.0 41.3L19.7 41.0L20.3 40.9L20.2 40.7L19.9 40.3L19.8 40.0L20.6 40.1L20.5 39.8L20.3 39.5L20.4 39.3L20.7 39.2L20.4 38.8L20.4 38.5L20.5 38.3L20.5 38.0L20.4 37.7L20.9 37.7L20.8 37.4L21.0 37.3L20.8 36.8L21.1 36.7L21.1 36.4L21.2 36.2L21.4 36.0L21.8 36.1L21.7 35.7L21.8 35.4L22.0 35.3L22.0 34.9L22.0 34.6L22.4 34.7L22.5 34.5L22.8 34.3L22.8 34.0L23.1 33.9L23.3 33.8L23.2 33.4L23.5 33.3L23.7 33.1L23.8 32.8L24.0 32.7L24.2 32.6L24.3 32.2L24.7 32.4L24.9 32.2L24.9 31.8L25.2 31.7L25.4 31.5L25.6 31.5L25.9 31.4L26.0 30.9L26.2 30.8L26.5 31.0L26.7 30.7L27.0 30.7L27.1 30.2L27.4 30.3L27.7 30.3L27.8 30.0L28.2 30.1L28.4 30.0L28.6 29.6L28.8 29.5L29.1 29.6L29.4 29.6L29.6 29.4L29.9 29.2L30.1 29.2L30.4 29.0L30.6 29.0L30.9 29.1L31.2 29.0L31.4 28.9L31.7 28.9L32.0 28.8L32.2 28.9L32.5 28.8L32.8 28.7Z" fill="#fff" fill-opacity="0.68" fill-rule="evenodd"/></svg></div>
<div class="c" style="left:537.09px;top:473px;width:66.1px;height:82.00px;background:#16c434;"><div class="t" style="letter-spacing:-0.15px">Free Fall Piano</div><svg style="left:0;top:0" width="66.1" height="82.0"><path d="M33.0 20.4L33.5 20.5L33.9 19.4L34.3 19.6L34.6 20.6L35.1 20.3L35.5 20.5L35.9 20.3L36.3 20.3L36.5 21.4L36.9 21.7L37.5 20.6L37.7 21.4L38.2 21.1L38.3 22.3L38.8 21.8L39.3 21.7L39.5 22.5L40.1 21.7L40.4 22.0L40.4 23.3L40.8 23.5L41.3 23.1L41.8 22.8L41.9 23.7L42.1 24.1L42.6 24.0L42.7 24.7L43.1 24.7L43.5 24.7L43.8 24.9L44.0 25.4L44.3 25.6L44.5 25.9L44.9 25.9L45.1 26.3L45.3 26.8L46.0 26.3L46.1 26.8L46.4 27.0L46.4 27.7L47.1 27.3L47.3 27.7L47.1 28.5L47.4 28.6L47.9 28.6L48.1 28.9L48.4 29.1L48.4 29.7L48.8 29.7L48.9 30.1L48.9 30.6L49.3 30.8L49.6 30.9L49.8 31.2L49.8 31.7L50.0 32.0L49.9 32.5L50.1 32.7L50.6 32.8L50.6 33.3L50.6 33.7L50.9 33.9L51.2 34.1L51.3 34.4L51.2 34.9L51.4 35.1L51.6 35.4L51.8 35.7L51.8 36.1L51.8 36.4L52.0 36.7L51.9 37.1L52.0 37.5L52.4 37.6L52.6 37.9L52.5 38.3L52.5 38.7L52.5 39.0L52.7 39.3L53.0 39.5L52.9 39.9L52.9 40.2L53.1 40.5L52.8 40.9L53.0 41.2L53.2 41.5L53.1 41.8L53.1 42.2L53.0 42.5L53.2 42.8L53.3 43.1L53.0 43.5L53.3 43.8L53.3 44.1L53.4 44.4L53.3 44.7L53.3 45.0L53.2 45.4L53.2 45.7L59.2 46.0L58.4 46.4L59.7 46.8L59.1 47.2L58.4 47.6L58.8 48.0L58.6 48.4L58.3 48.8L58.1 49.2L58.3 49.6L58.3 50.0L58.1 50.4L57.7 50.7L57.0 50.9L57.1 51.4L56.8 51.7L57.2 52.2L57.4 52.7L57.1 53.0L56.9 53.3L56.7 53.7L55.9 53.8L56.4 54.4L55.9 54.7L55.1 54.7L54.8 55.0L54.6 55.3L55.1 56.0L54.4 56.0L54.0 56.3L54.3 56.8L53.8 57.0L53.3 57.1L53.1 57.5L53.2 57.9L52.7 58.0L52.5 58.3L52.6 58.9L52.1 59.0L51.8 59.2L51.6 59.5L51.0 59.5L51.0 59.9L50.8 60.2L50.3 60.3L50.0 60.5L50.2 61.2L49.7 61.1L49.2 61.2L49.2 61.6L49.0 62.0L48.3 61.7L48.0 61.9L47.7 62.1L47.7 62.7L47.2 62.5L47.1 63.0L46.8 63.2L46.4 63.3L46.0 63.2L46.0 63.8L45.6 63.9L45.2 63.9L44.8 63.8L44.6 64.2L44.2 64.2L43.9 64.4L43.6 64.4L43.3 64.7L42.9 64.5L42.6 64.7L42.5 65.2L42.1 65.2L41.7 65.1L41.5 65.4L41.0 65.2L40.8 65.6L40.5 65.6L40.1 65.5L39.7 65.5L39.4 65.5L39.2 65.9L38.7 65.6L38.5 66.0L38.2 66.1L37.8 66.0L37.5 65.8L37.2 66.2L36.9 66.2L36.6 66.2L36.2 66.1L35.9 66.1L35.6 66.1L35.3 66.0L35.0 66.2L34.6 66.1L34.3 66.1L34.0 66.0L33.7 66.2L33.4 66.1L33.0 72.2L32.6 71.8L32.2 72.6L31.8 72.6L31.5 71.0L31.1 71.2L30.7 71.3L30.2 72.2L29.8 71.7L29.5 70.9L29.2 70.6L28.7 71.1L28.2 71.2L27.8 71.2L27.6 70.2L27.1 70.7L26.8 70.3L26.5 69.9L26.0 70.3L25.9 69.2L25.4 69.6L25.3 68.6L24.9 68.5L24.3 69.2L24.3 68.2L23.7 68.6L23.5 68.2L23.0 68.2L23.0 67.5L22.7 67.2L22.4 66.9L21.8 67.3L21.6 66.7L21.2 66.8L20.9 66.5L21.1 65.6L20.6 65.7L20.5 65.0L20.3 64.7L20.0 64.5L19.3 64.9L19.1 64.5L18.9 64.3L18.9 63.7L18.5 63.6L18.2 63.4L18.2 62.8L17.9 62.7L17.9 62.2L17.7 61.8L17.4 61.6L16.9 61.7L16.8 61.2L16.4 61.1L16.5 60.6L16.5 60.2L16.0 60.1L15.8 59.8L16.1 59.2L15.6 59.1L15.7 58.6L15.6 58.3L15.0 58.3L15.3 57.7L15.1 57.4L14.5 57.3L14.7 56.8L14.7 56.4L14.6 56.1L14.4 55.9L14.1 55.7L14.3 55.2L13.8 55.1L14.0 54.6L13.6 54.4L13.5 54.1L13.7 53.6L13.7 53.3L13.5 53.0L13.6 52.7L13.3 52.4L13.5 52.0L13.5 51.7L13.0 51.5L13.2 51.1L13.1 50.8L13.1 50.5L13.1 50.1L13.2 49.8L12.8 49.5L12.8 49.2L12.7 48.9L13.1 48.5L13.0 48.2L12.9 47.9L12.7 47.6L12.9 47.3L12.8 47.0L12.8 46.6L13.0 46.3L6.8 46.0L7.2 45.6L7.4 45.2L7.8 44.8L7.6 44.4L6.6 43.9L7.6 43.6L7.4 43.2L7.5 42.8L7.2 42.3L8.2 42.1L8.5 41.7L8.6 41.3L8.7 41.0L8.2 40.4L8.3 40.1L9.3 39.9L9.4 39.5L9.3 39.1L9.5 38.7L9.6 38.4L10.3 38.2L10.7 38.0L10.7 37.5L11.1 37.3L10.7 36.8L11.5 36.7L11.7 36.4L11.3 35.8L11.9 35.6L11.6 35.1L12.2 34.9L12.1 34.5L13.0 34.5L12.9 34.1L12.9 33.6L13.8 33.8L13.3 33.0L14.2 33.2L14.0 32.6L14.1 32.2L14.5 32.1L15.1 32.1L15.6 32.0L15.5 31.5L15.6 31.1L16.3 31.2L16.2 30.6L16.9 30.9L16.7 30.2L17.6 30.5L17.7 30.1L17.6 29.6L18.0 29.5L18.3 29.2L18.6 29.1L19.0 29.0L19.3 28.8L19.8 29.0L20.0 28.6L20.4 28.6L20.5 28.2L20.9 28.1L21.3 28.1L21.7 28.1L21.7 27.5L22.1 27.4L22.5 27.5L22.8 27.4L23.0 27.1L23.5 27.2L23.8 27.1L24.1 27.0L24.5 27.0L24.8 27.0L25.0 26.6L25.4 26.6L25.7 26.5L26.1 26.7L26.4 26.4L26.7 26.5L27.0 26.4L27.3 26.3L27.6 26.0L28.0 26.1L28.3 26.1L28.6 26.0L28.9 26.1L29.3 26.2L29.5 25.9L29.9 25.9L30.2 25.8L30.5 25.9L30.8 25.8L31.1 25.8L31.5 25.9L31.8 25.8L32.1 25.8L32.4 25.9L32.7 25.9ZM33.0 33.8L33.2 33.7L33.4 33.7L33.7 33.1L33.8 34.0L34.0 33.8L34.3 32.8L34.5 33.1L34.6 33.5L34.8 33.4L35.0 33.6L35.3 33.0L35.4 33.4L35.7 33.2L36.0 32.8L36.1 33.1L36.3 33.4L36.5 33.3L36.8 33.0L37.0 33.1L37.4 32.5L37.6 32.7L37.6 33.3L38.0 32.9L38.3 32.7L38.4 33.1L38.6 33.3L38.8 33.3L39.1 33.0L39.4 33.1L39.6 33.2L39.7 33.5L40.0 33.4L40.3 33.3L40.5 33.5L40.9 33.2L41.1 33.3L41.1 33.8L41.2 34.1L41.6 33.9L41.9 33.9L42.2 33.8L42.3 34.1L42.3 34.5L42.6 34.5L42.9 34.5L43.0 34.8L43.5 34.5L43.6 34.8L43.6 35.2L43.9 35.1L44.2 35.2L44.5 35.2L44.6 35.5L44.6 35.8L45.2 35.6L45.1 36.1L45.2 36.2L45.4 36.4L45.7 36.5L45.8 36.7L46.1 36.8L46.3 37.0L46.5 37.1L46.9 37.2L46.7 37.6L47.0 37.8L47.3 37.9L47.3 38.2L47.5 38.4L47.7 38.5L47.9 38.7L47.9 39.0L48.0 39.2L48.2 39.5L48.4 39.7L48.7 39.8L48.7 40.1L48.9 40.3L48.8 40.6L48.8 40.9L49.0 41.1L49.1 41.3L49.2 41.6L49.5 41.8L49.4 42.1L49.5 42.3L49.8 42.5L49.9 42.8L50.0 43.1L49.8 43.4L50.0 43.6L50.1 43.8L50.0 44.1L50.1 44.4L50.2 44.6L50.3 44.9L50.2 45.2L50.3 45.5L50.3 45.7L45.1 46.0L45.5 46.2L45.7 46.4L45.6 46.6L46.2 46.8L45.8 47.0L45.8 47.2L46.2 47.4L46.3 47.7L45.4 47.8L45.9 48.0L46.3 48.3L45.9 48.4L45.7 48.6L46.6 49.0L46.6 49.2L46.4 49.4L45.8 49.5L46.4 49.9L45.9 49.9L45.9 50.2L46.0 50.4L46.3 50.8L45.6 50.7L45.8 51.0L46.0 51.4L46.2 51.7L45.8 51.8L46.0 52.1L45.8 52.2L46.0 52.6L45.7 52.7L46.1 53.1L45.8 53.3L45.2 53.2L45.3 53.5L45.6 54.0L45.1 53.9L45.4 54.4L44.9 54.3L45.0 54.7L45.1 55.0L45.1 55.3L45.1 55.7L44.5 55.5L44.9 56.1L44.3 55.9L44.1 56.1L44.2 56.5L44.3 56.9L43.8 56.8L43.6 56.9L43.6 57.2L43.6 57.5L43.5 57.8L43.3 58.0L43.2 58.3L42.9 58.3L42.8 58.6L42.7 58.9L42.6 59.1L42.2 59.0L42.1 59.4L41.9 59.4L41.7 59.7L41.4 59.6L41.2 59.8L41.2 60.3L41.0 60.4L40.7 60.5L40.4 60.4L40.2 60.6L40.1 61.0L39.9 61.1L39.6 61.1L39.3 61.2L39.1 61.3L39.0 61.6L38.6 61.5L38.4 61.7L38.2 61.9L37.9 61.9L37.8 62.2L37.5 62.2L37.3 62.5L37.0 62.5L36.7 62.4L36.5 62.7L36.2 62.6L36.0 62.7L35.7 62.7L35.5 62.9L35.2 63.0L34.9 63.0L34.6 62.9L34.4 63.0L34.1 63.0L33.9 63.0L33.6 63.3L33.3 63.2L33.0 58.8L32.8 59.0L32.6 59.0L32.5 58.0L32.3 58.2L32.1 58.2L31.8 58.9L31.7 58.6L31.5 58.4L31.2 59.0L31.0 58.8L30.7 59.2L30.5 59.4L30.3 59.2L30.2 58.5L29.9 58.9L29.8 58.6L29.5 59.1L29.2 59.3L29.1 58.7L28.9 58.7L28.4 59.5L28.4 58.8L28.0 59.4L27.8 59.3L27.8 58.6L27.3 59.3L27.1 59.1L27.2 58.4L26.7 58.9L26.4 59.1L26.2 59.0L26.0 58.9L26.0 58.4L25.5 58.8L25.6 58.2L25.1 58.5L25.2 58.0L24.9 58.0L24.4 58.3L24.2 58.2L24.0 58.0L23.7 58.1L23.7 57.7L23.2 57.9L23.0 57.8L23.2 57.2L22.7 57.4L22.6 57.1L22.3 57.1L22.0 57.0L21.7 57.0L21.9 56.5L21.7 56.3L21.5 56.2L20.9 56.4L20.8 56.2L20.8 55.8L20.7 55.5L20.4 55.5L20.2 55.3L20.0 55.1L19.7 55.1L19.6 54.8L19.4 54.7L19.2 54.5L18.9 54.4L18.8 54.1L19.0 53.7L18.6 53.7L18.5 53.4L18.4 53.2L18.3 52.9L18.0 52.8L17.8 52.6L17.7 52.4L17.5 52.1L17.6 51.8L17.5 51.6L17.2 51.4L17.1 51.2L17.0 50.9L16.9 50.7L16.8 50.4L16.6 50.2L16.5 50.0L16.5 49.7L16.3 49.5L16.4 49.2L16.2 48.9L16.1 48.7L16.2 48.4L16.1 48.1L16.2 47.9L16.0 47.6L16.1 47.3L15.8 47.1L15.9 46.8L16.0 46.5L15.8 46.3L21.3 46.0L20.2 45.8L21.0 45.6L21.2 45.4L20.9 45.2L20.2 45.0L19.9 44.8L20.3 44.6L20.8 44.4L20.0 44.1L20.6 44.0L19.7 43.7L20.6 43.6L19.6 43.2L19.9 43.1L20.5 43.0L20.4 42.7L20.5 42.6L20.4 42.3L20.3 42.1L20.2 41.8L19.7 41.4L20.0 41.3L19.7 41.0L20.3 40.9L20.2 40.7L19.9 40.3L19.8 40.0L20.6 40.1L20.5 39.8L20.3 39.5L20.4 39.3L20.7 39.2L20.4 38.8L20.4 38.5L20.5 38.3L20.5 38.0L20.4 37.7L20.9 37.7L20.8 37.4L21.0 37.3L20.8 36.8L21.1 36.7L21.1 36.4L21.2 36.2L21.4 36.0L21.8 36.1L21.7 35.7L21.8 35.4L22.0 35.3L22.0 34.9L22.0 34.6L22.4 34.7L22.5 34.5L22.8 34.3L22.8 34.0L23.1 33.9L23.3 33.8L23.2 33.4L23.5 33.3L23.7 33.1L23.8 32.8L24.0 32.7L24.2 32.6L24.3 32.2L24.7 32.4L24.9 32.2L24.9 31.8L25.2 31.7L25.4 31.5L25.6 31.5L25.9 31.4L26.0 30.9L26.2 30.8L26.5 31.0L26.7 30.7L27.0 30.7L27.1 30.2L27.4 30.3L27.7 30.3L27.8 30.0L28.2 30.1L28.4 30.0L28.6 29.6L28.8 29.5L29.1 29.6L29.4 29.6L29.6 29.4L29.9 29.2L30.1 29.2L30.4 29.0L30.6 29.0L30.9 29.1L31.2 29.0L31.4 28.9L31.7 28.9L32.0 28.8L32.2 28.9L32.5 28.8L32.8 28.7Z" fill="#fff" fill-opacity="0.68" fill-rule="evenodd"/></svg></div>
<div class="c" style="left:606.38px;top:473px;width:66.1px;height:82.00px;background:#16c434;"><div class="t" style="letter-spacing:-0.15px">Free Fall Piano</div><svg style="left:0;top:0" width="66.1" height="82.0"><path d="M33.0 22.0L33.6 22.0L34.0 22.3L34.6 21.4L35.0 22.4L35.6 21.6L36.1 22.0L36.5 22.6L37.1 21.9L37.5 22.8L38.1 22.2L38.5 22.9L39.0 23.0L39.6 22.5L40.3 22.0L40.4 23.3L40.9 23.3L41.7 22.8L42.4 22.5L42.6 23.3L42.9 23.8L43.8 23.1L43.6 24.8L44.7 23.8L44.6 24.9L44.9 25.4L45.3 25.7L45.9 25.7L46.8 25.3L46.6 26.5L47.4 26.2L47.9 26.5L48.0 27.2L48.5 27.3L48.3 28.3L48.7 28.7L49.2 28.8L50.1 28.6L50.1 29.3L50.3 29.8L51.0 29.9L51.1 30.4L51.2 31.0L52.1 30.9L52.3 31.4L51.9 32.3L52.6 32.4L52.8 32.9L53.6 33.0L53.6 33.6L53.1 34.4L54.4 34.3L53.2 35.4L53.9 35.7L54.6 35.8L53.8 36.8L54.5 37.0L53.9 37.7L55.1 37.8L55.4 38.2L55.2 38.8L55.8 39.1L54.9 39.9L55.7 40.2L55.6 40.7L55.6 41.2L55.5 41.7L56.2 42.1L56.4 42.5L55.6 43.1L56.0 43.6L54.9 44.2L56.1 44.5L56.0 45.0L56.6 45.5L56.3 46.0L55.3 46.5L55.4 46.9L55.9 47.4L54.7 47.8L55.4 48.4L54.8 48.8L54.7 49.2L54.5 49.6L55.6 50.3L54.4 50.5L54.5 51.0L54.7 51.5L55.4 52.2L53.9 52.3L54.4 52.9L54.4 53.4L54.8 54.1L54.5 54.5L54.4 55.0L53.3 55.0L53.3 55.5L53.0 55.9L53.7 56.8L53.6 57.3L52.1 57.0L51.9 57.4L51.8 57.9L51.5 58.3L51.7 58.9L51.6 59.5L50.8 59.5L50.2 59.6L50.5 60.4L50.2 60.8L50.1 61.4L50.3 62.2L49.7 62.3L49.1 62.4L48.9 62.9L48.7 63.4L47.6 62.9L48.2 64.4L47.8 64.5L47.5 65.0L47.0 65.2L46.2 65.0L45.9 65.3L45.2 65.1L45.3 66.2L44.4 65.6L44.0 65.9L43.7 66.4L43.3 66.6L43.0 67.1L42.3 66.9L41.9 67.0L41.6 67.5L41.1 67.6L40.8 68.3L40.2 67.9L40.2 69.5L39.5 69.3L38.9 68.6L38.4 68.9L38.0 69.3L37.5 69.4L37.0 69.1L36.7 70.5L36.2 70.9L35.6 70.0L35.1 70.1L34.5 69.5L34.0 69.6L33.6 70.0L33.0 69.9L32.5 70.9L32.1 69.8L31.6 69.5L30.9 71.1L30.5 70.4L30.1 69.6L29.5 70.3L29.1 69.3L28.5 70.1L27.8 70.8L27.3 70.5L26.9 70.1L26.6 69.2L26.0 69.2L25.7 68.7L24.8 69.6L24.5 69.0L23.9 69.2L23.7 68.3L23.3 67.9L22.4 68.6L21.8 68.7L21.4 68.2L21.0 67.9L20.6 67.6L20.2 67.2L20.3 66.1L19.6 66.3L19.3 65.7L19.3 65.0L18.9 64.6L18.3 64.7L17.9 64.3L17.0 64.5L16.4 64.5L16.6 63.5L15.7 63.8L15.3 63.4L15.0 63.0L15.4 61.9L15.3 61.3L15.0 60.9L14.8 60.5L14.5 60.1L13.7 60.1L13.0 59.9L12.8 59.4L13.1 58.6L12.6 58.4L12.2 58.0L13.1 57.0L12.0 57.0L11.4 56.7L11.4 56.2L11.3 55.7L11.6 55.0L12.0 54.3L10.8 54.3L11.4 53.5L10.5 53.3L10.1 52.9L11.0 52.2L10.9 51.7L9.9 51.4L10.2 50.9L11.1 50.2L11.1 49.7L11.1 49.2L9.7 49.0L9.8 48.4L11.0 47.9L9.8 47.5L9.5 47.0L10.1 46.5L10.7 46.0L10.3 45.5L11.1 45.1L11.4 44.6L9.7 44.0L10.3 43.6L10.6 43.2L10.0 42.6L11.0 42.3L10.3 41.7L10.5 41.2L11.6 41.0L11.7 40.5L11.7 40.0L12.0 39.6L11.5 39.0L12.2 38.7L12.1 38.2L12.7 38.0L11.6 37.0L12.7 36.9L12.7 36.4L12.7 35.9L12.4 35.2L13.4 35.2L12.8 34.3L13.7 34.3L13.9 33.8L14.1 33.4L15.1 33.5L14.8 32.7L15.4 32.6L15.9 32.4L15.1 31.1L16.2 31.5L16.1 30.7L16.1 30.0L16.6 29.9L17.2 29.8L17.3 29.2L17.6 28.8L17.6 28.1L18.8 28.7L18.6 27.8L19.3 27.9L19.6 27.5L19.5 26.5L20.1 26.6L20.5 26.2L20.7 25.6L21.0 25.0L21.8 25.5L22.1 25.0L22.6 24.9L23.0 24.6L23.3 24.1L23.9 24.2L24.3 23.9L24.8 23.7L25.0 22.8L25.6 23.0L25.9 22.5L27.9 27.7L28.3 27.6L28.7 27.5L29.1 27.4L29.5 27.3L29.9 27.3L30.3 27.2L30.7 27.1L31.1 27.1L31.1 22.3L31.6 22.5L32.0 21.4L32.5 21.2ZM33.0 33.3L33.3 33.3L33.5 34.4L33.8 33.9L34.1 33.4L34.3 34.2L34.6 33.7L34.8 34.3L35.2 33.4L35.5 33.2L35.7 33.5L36.1 33.1L36.2 33.8L36.6 33.3L36.8 33.5L37.1 33.6L37.3 33.8L37.8 33.3L38.1 33.3L38.1 33.9L38.5 33.8L38.4 34.6L39.0 33.9L39.3 34.1L39.7 33.8L39.9 34.2L39.7 35.0L40.0 35.0L40.5 34.8L40.2 35.7L40.7 35.4L40.7 35.9L40.8 36.2L41.0 36.4L41.8 35.9L41.4 36.7L41.7 36.8L42.0 36.9L42.6 36.7L41.9 37.7L42.4 37.5L42.7 37.7L43.2 37.6L43.2 37.9L43.4 38.2L42.8 38.9L43.1 39.0L43.1 39.3L43.8 39.2L43.9 39.4L43.0 40.2L43.1 40.5L43.2 40.7L43.3 40.9L43.6 41.0L43.8 41.2L43.4 41.6L43.1 42.0L43.7 42.1L43.6 42.3L43.9 42.5L44.4 42.6L44.1 42.9L43.9 43.2L44.0 43.4L44.1 43.7L43.2 44.1L44.4 44.1L44.2 44.3L44.4 44.6L44.3 44.8L43.7 45.1L43.7 45.3L43.3 45.6L44.0 45.8L43.2 46.0L43.2 46.2L43.4 46.4L43.4 46.6L43.6 46.9L43.2 47.1L43.1 47.3L43.4 47.5L43.3 47.7L43.6 48.0L43.2 48.2L44.3 48.6L44.0 48.8L43.3 48.9L43.5 49.1L43.6 49.4L43.6 49.7L43.2 49.8L44.2 50.4L44.3 50.7L43.6 50.7L43.6 51.0L43.1 51.0L43.0 51.2L43.3 51.6L43.1 51.8L43.8 52.5L42.9 52.2L42.7 52.4L43.7 53.4L43.1 53.3L42.6 53.2L42.9 53.8L42.2 53.6L42.6 54.3L43.0 54.9L42.7 55.1L42.4 55.2L41.8 54.9L41.8 55.3L41.4 55.3L41.8 56.1L41.4 56.1L41.4 56.6L40.8 56.3L40.5 56.3L40.8 57.2L40.7 57.5L40.4 57.6L40.1 57.7L39.9 57.8L39.6 57.9L39.0 57.4L38.9 57.8L38.6 57.7L38.1 57.4L37.9 57.5L37.8 57.9L37.5 57.9L37.4 58.6L37.3 59.0L36.8 58.3L36.7 59.0L36.4 59.1L36.1 59.1L35.7 58.3L35.4 58.1L35.1 58.0L34.8 58.0L34.6 58.0L34.4 58.5L34.1 58.8L33.8 58.7L33.6 58.1L33.3 58.3L33.0 58.4L32.8 57.4L32.5 58.1L32.3 58.4L32.0 58.1L31.8 57.9L31.6 57.5L31.4 56.9L31.1 57.7L31.0 57.0L30.6 57.5L30.3 57.6L30.3 56.7L30.1 56.6L29.7 57.2L29.5 56.8L29.6 56.0L29.4 55.8L29.2 55.7L28.6 56.6L28.5 56.3L28.6 55.4L28.0 56.1L27.7 56.2L27.7 55.7L27.8 55.2L27.4 55.3L27.5 54.7L27.4 54.4L26.5 55.4L26.6 54.9L26.5 54.7L25.9 55.0L26.1 54.4L25.5 54.7L25.4 54.5L25.8 53.8L25.5 53.7L25.3 53.6L25.1 53.4L24.6 53.6L24.7 53.2L24.4 53.2L24.5 52.8L23.4 53.3L23.8 52.7L23.5 52.6L23.2 52.6L22.6 52.6L23.0 52.1L22.2 52.3L22.5 51.8L22.3 51.6L22.1 51.4L22.6 50.9L21.9 51.0L22.0 50.6L22.1 50.3L20.9 50.5L21.6 50.0L21.0 49.9L20.6 49.8L20.7 49.5L20.8 49.1L20.5 49.0L20.3 48.7L19.9 48.5L20.7 48.1L20.0 47.9L20.4 47.6L20.3 47.3L19.6 47.1L19.9 46.8L19.8 46.6L19.5 46.3L19.3 46.0L19.9 45.7L19.7 45.4L19.9 45.2L19.9 44.9L19.7 44.6L20.1 44.4L20.0 44.1L20.2 43.8L19.6 43.4L20.1 43.2L19.9 42.9L19.9 42.6L21.0 42.6L20.7 42.3L20.3 41.9L20.6 41.7L21.7 41.8L21.9 41.6L21.6 41.2L22.3 41.2L22.2 40.9L22.6 40.8L22.0 40.2L22.1 40.0L22.1 39.7L23.0 39.9L23.4 39.9L23.0 39.3L23.9 39.6L23.6 39.1L24.0 39.1L24.5 39.2L24.2 38.7L24.9 39.0L24.7 38.5L25.3 38.7L25.4 38.6L25.3 38.1L25.1 37.6L26.0 38.2L26.1 38.0L25.9 37.4L25.9 36.9L26.4 37.2L26.7 37.3L26.5 36.5L27.4 37.5L27.0 36.4L27.6 37.0L27.9 37.1L28.1 37.0L28.2 36.7L28.0 35.9L28.6 36.6L28.6 36.0L28.8 35.8L29.1 36.0L29.2 35.7L29.6 36.2L29.8 36.1L30.0 35.8L28.2 28.7L28.6 28.6L28.9 28.5L29.3 28.4L29.7 28.3L30.0 28.3L30.4 28.2L30.8 28.1L31.2 28.1L32.1 34.3L32.3 34.3L32.5 33.7L32.8 33.8Z" fill="#fff" fill-opacity="0.68" fill-rule="evenodd"/></svg></div>
<div class="c" style="left:675.67px;top:473px;width:66.1px;height:82.00px;background:#16c434;"><div class="t" style="letter-spacing:-0.09px">Free Fall Synth</div><svg style="left:0;top:0" width="66.1" height="82.0"><circle cx="33.05" cy="46" r="29.3" fill="none" stroke="#fff" stroke-width="0.8" opacity="0.8"/><path d="M33.05 46L33.0 16.7A29.3 29.3 0 0 1 61.4 53.3Z" fill="#fff" fill-opacity="0.36"/><path d="M47.1 48.6L52.9 49.6L51.3 54.8L45.9 52.2ZM43.8 53.3L51.0 58.2L47.1 62.6L41.5 55.9ZM39.3 56.2L45.1 65.5L39.5 68.0L36.4 57.5ZM34.9 59.9L35.8 66.3L30.3 66.3L31.2 59.9ZM29.4 58.3L26.9 67.0L21.6 64.6L26.3 56.9ZM24.8 55.7L18.8 62.8L14.8 58.4L22.6 53.2ZM20.3 52.1L14.7 54.8L13.1 49.6L19.1 48.5ZM19.7 46.4L11.7 46.6L12.3 41.0L20.1 42.9ZM21.5 41.3L12.4 37.5L15.4 32.4L23.2 38.4ZM22.0 34.4L20.5 32.8L24.4 30.0L25.5 31.9ZM27.7 30.9L26.9 28.9L31.7 27.9L31.8 30.0Z" fill="#fff" fill-opacity=".66"/><path d="M34.0 32.9L34.7 24.5L40.3 25.7L37.5 33.7ZM39.4 34.3L43.2 27.2L47.8 30.6L42.3 36.4ZM44.1 37.5L49.4 33.4L52.1 38.2L45.9 40.7ZM44.8 43.1L55.2 40.6L55.8 46.7L45.1 46.4Z" fill="#fff" fill-opacity=".95"/></svg></div>
<div class="c" style="left:744.96px;top:473px;width:66.1px;height:82.00px;background:#16c434;"><div class="t" style="letter-spacing:-0.09px">Free Fall Synth</div><svg style="left:0;top:0" width="66.1" height="82.0"><circle cx="33.05" cy="46" r="19.5" fill="none" stroke="#fff" stroke-width="0.7" opacity="0.75"/><path d="M33.4 30.1L34.0 21.9L32.1 21.9L32.7 30.1ZM35.5 31.0L37.4 21.4L35.5 21.2L34.8 30.9ZM39.4 32.2L43.9 23.5L42.1 22.7L38.8 31.9ZM42.2 31.6L45.6 27.2L44.0 26.2L41.6 31.2ZM44.4 32.6L47.7 29.5L46.2 28.3L43.8 32.2ZM45.2 35.2L51.0 30.5L49.7 29.2L44.7 34.7ZM46.8 36.7L52.5 33.4L51.5 31.8L46.4 36.1ZM46.2 39.6L56.2 35.0L55.4 33.4L45.9 38.9ZM47.4 41.3L57.0 38.5L56.4 36.7L47.2 40.6ZM48.2 43.2L57.4 41.9L57.0 40.0L48.1 42.5ZM48.6 45.3L57.5 45.3L57.4 43.4L48.6 44.6ZM48.2 47.4L57.9 48.7L58.0 46.8L48.2 46.7ZM49.7 49.8L55.0 51.5L55.4 49.7L49.8 49.1ZM48.8 52.0L54.3 54.5L54.9 52.8L49.1 51.3ZM48.5 54.4L52.0 56.9L52.9 55.2L48.9 53.8ZM45.6 55.3L52.5 60.9L53.6 59.3L46.0 54.7ZM45.9 58.5L48.1 61.4L49.4 60.0L46.4 58.0ZM42.8 58.5L47.5 65.3L49.0 64.1L43.3 58.1ZM37.5 63.3L38.0 67.0L39.8 66.5L38.2 63.1ZM34.9 62.1L35.3 69.6L37.2 69.3L35.6 62.0ZM32.7 63.2L32.1 68.5L34.0 68.5L33.4 63.2ZM30.4 62.8L29.0 68.4L30.9 68.6L31.1 62.9ZM28.5 61.1L25.6 69.1L27.4 69.6L29.1 61.3ZM25.8 61.9L23.4 65.8L25.1 66.6L26.4 62.2ZM23.7 60.6L20.7 64.5L22.3 65.5L24.3 61.0ZM23.8 56.9L15.8 65.7L17.3 66.9L24.3 57.3ZM21.3 56.5L14.7 61.9L16.0 63.3L21.8 57.0ZM18.8 55.7L14.2 58.1L15.3 59.7L19.2 56.2ZM20.4 52.2L9.1 57.3L10.0 59.0L20.7 52.8ZM19.6 50.4L8.0 53.9L8.6 55.7L19.8 51.1ZM16.2 49.2L10.9 49.6L11.3 51.5L16.3 49.8ZM17.0 46.7L9.2 46.7L9.3 48.6L17.0 47.4ZM16.0 44.5L10.6 43.5L10.5 45.4L16.0 45.2ZM17.0 42.3L10.4 40.3L10.0 42.2L16.9 43.0ZM18.7 40.5L10.0 36.8L9.4 38.6L18.5 41.2ZM18.1 37.9L13.3 34.7L12.5 36.4L17.8 38.5ZM20.9 37.0L13.1 30.7L12.0 32.3L20.5 37.6ZM20.6 33.9L17.5 30.2L16.2 31.6L20.1 34.4ZM22.6 32.6L19.4 27.8L18.0 29.0L22.1 33.1ZM25.7 33.3L20.5 23.6L18.9 24.6L25.1 33.7ZM26.9 31.1L24.5 23.8L22.7 24.6L26.3 31.3ZM29.0 30.4L27.5 22.8L25.7 23.3L28.4 30.6ZM31.3 30.7L30.6 21.4L28.8 21.7L30.6 30.7Z" fill="#fff" fill-opacity="0.75"/></svg></div>
<div class="c" style="left:814.25px;top:473px;width:66.1px;height:82.00px;background:#16c434;"><div class="t" style="letter-spacing:-0.07px">Arcade Hook 1</div><svg style="left:0;top:0" width="66.1" height="82.0"><circle cx="33.05" cy="46" r="19" fill="none" stroke="#fff" stroke-width="0.8" opacity="0.8"/><path d="M15.2 60.8L13.5 58.4L12.1 55.9L11.0 53.2L18.2 50.8L18.9 52.6L19.9 54.4L21.0 55.9ZM11.0 51.7L10.5 49.1L10.3 46.5L10.4 43.9L17.1 44.5L17.1 46.3L17.2 48.2L17.6 50.0ZM12.1 42.7L12.4 41.1L12.9 39.4L16.7 40.7L16.3 42.0L16.1 43.3ZM11.3 37.4L12.4 34.9L13.8 32.6L15.5 30.5L21.3 35.7L20.2 37.1L19.3 38.6L18.5 40.3ZM16.8 29.7L18.6 28.1L20.5 26.7L22.6 25.5L25.9 31.9L24.4 32.7L23.1 33.7L21.9 34.8ZM24.5 26.2L26.4 25.5L28.3 24.9L29.3 29.4L27.8 29.8L26.3 30.4ZM29.5 23.5L31.6 23.2L33.8 23.2L33.5 30.2L32.1 30.2L30.6 30.4ZM34.5 68.8L31.9 68.8L29.2 68.5L26.7 67.9L28.6 61.2L30.4 61.6L32.2 61.8L34.0 61.8ZM25.7 66.3L22.9 65.1L20.4 63.5L23.2 59.6L25.2 60.8L27.4 61.8Z" fill="#fff" fill-opacity="0.7"/></svg></div>
<div class="c" style="left:883.54px;top:473px;width:66.1px;height:82.00px;background:#16c434;"><div class="t" style="letter-spacing:0.04px">Arcade Hook 2</div><svg style="left:0;top:0" width="66.1" height="82.0"><circle cx="33.05" cy="46" r="17" fill="none" stroke="#fff" stroke-width="0.8" opacity="0.8"/><path d="M35.6 26.0L37.7 26.4L39.8 27.0L37.8 32.7L36.3 32.2L34.8 32.0ZM46.0 30.5L47.8 32.1L49.3 33.9L44.3 37.6L43.3 36.3L42.1 35.2ZM51.7 40.2L52.3 42.7L52.5 45.3L47.8 45.5L47.6 43.5L47.1 41.6ZM52.8 51.4L52.2 53.3L51.5 55.1L45.4 52.1L45.9 50.9L46.4 49.7ZM46.2 60.7L44.5 62.1L42.7 63.2L40.1 58.7L41.5 57.8L42.7 56.8ZM36.2 65.8L33.1 66.0L30.0 65.8L30.9 60.1L33.1 60.2L35.3 60.1ZM25.0 64.4L22.4 63.0L20.1 61.3L23.8 56.8L25.5 58.1L27.4 59.0ZM16.7 56.9L15.4 54.6L14.4 52.2L19.2 50.6L19.9 52.4L20.9 54.1ZM12.5 46.4L12.6 43.6L13.1 40.9L19.7 42.6L19.4 44.4L19.3 46.2ZM15.7 35.3L17.2 33.2L19.0 31.2L23.4 35.9L22.2 37.2L21.2 38.7ZM24.6 28.4L27.1 27.4L29.7 26.8L30.5 31.5L28.6 32.0L26.7 32.7Z" fill="#fff" fill-opacity="0.7"/></svg></div>
<div class="c" style="left:952.83px;top:473px;width:66.1px;height:82.00px;background:#16c434;"><div class="t" style="letter-spacing:-0.11px">Dreamy Hook 1</div><svg style="left:0;top:0" width="66.1" height="82.0"><circle cx="33.05" cy="46" r="19" fill="none" stroke="#fff" stroke-width="0.8" opacity="0.8"/><path d="M35.9 23.6L36.9 23.7L38.0 23.9L36.7 29.8L35.9 29.6L35.1 29.5ZM39.4 24.3L40.4 24.6L41.4 25.0L39.2 30.6L38.4 30.3L37.7 30.1ZM43.4 25.7L45.5 26.9L47.5 28.3L49.3 30.0L50.9 31.8L52.3 33.8L46.7 37.3L45.7 35.9L44.6 34.6L43.3 33.5L41.9 32.4L40.4 31.6ZM52.8 33.8L54.1 36.3L55.2 39.0L55.9 41.7L56.2 44.5L48.8 45.0L48.6 43.1L48.1 41.2L47.4 39.4L46.5 37.7ZM56.6 44.8L56.6 47.4L56.3 50.0L55.7 52.6L54.9 55.0L53.7 57.4L46.7 53.5L47.5 52.0L48.0 50.3L48.4 48.7L48.6 46.9L48.6 45.2ZM53.9 57.8L52.5 60.1L50.8 62.1L48.9 64.0L46.9 65.6L44.6 67.0L40.5 59.5L41.9 58.6L43.2 57.5L44.5 56.3L45.5 55.0L46.5 53.6ZM44.1 66.6L41.7 67.8L39.2 68.6L36.6 69.1L33.9 69.4L31.3 69.3L28.7 69.0L30.1 61.5L31.9 61.8L33.6 61.8L35.4 61.6L37.2 61.3L38.9 60.7L40.5 59.9Z" fill="#fff" fill-opacity="0.7"/></svg></div>
<div style="left:467.8px;top:558.5px;width:66.1px;height:50.8px;background:#383838;border-radius:3px"></div>
<div style="left:537.09px;top:558.5px;width:66.1px;height:50.8px;background:#383838;border-radius:3px"></div>
<div class="c" style="left:606.38px;top:558.5px;width:66.1px;height:50.80px;background:#5cc818;"><div class="t" style="letter-spacing:-0.07px">Dream Chord 1</div><svg style="left:0;top:0" width="66.1" height="50.8"><path d="M33.0 18.4L33.4 18.4L33.8 18.4L34.2 18.1L34.6 18.7L35.0 18.7L35.4 18.4L35.8 18.7L36.1 18.9L36.5 19.0L36.8 19.2L37.1 19.4L37.7 19.1L38.1 19.1L38.4 19.4L38.7 19.6L38.9 20.1L39.3 20.2L39.5 20.6L40.1 20.4L40.2 20.9L40.5 21.2L41.3 20.9L41.1 21.6L41.9 21.4L41.9 21.9L42.3 22.1L42.4 22.5L42.4 23.1L43.0 23.1L42.9 23.7L43.2 23.9L43.2 24.4L43.3 24.7L43.8 24.9L43.7 25.4L44.2 25.6L44.8 25.7L45.0 26.1L44.6 26.6L44.5 27.1L44.8 27.4L44.6 27.8L44.9 28.2L45.3 28.5L45.4 28.8L44.9 29.3L45.4 29.6L45.3 30.0L45.3 30.4L45.1 30.8L45.3 31.2L45.0 31.6L45.6 32.0L45.5 32.4L45.4 32.8L45.1 33.1L45.6 33.6L44.9 33.9L44.7 34.2L44.7 34.6L45.1 35.1L44.3 35.2L44.7 35.8L44.7 36.3L44.4 36.6L43.9 36.8L43.7 37.1L43.8 37.6L43.5 37.9L43.3 38.3L42.6 38.2L42.7 38.8L42.5 39.2L41.9 39.1L41.6 39.4L41.8 40.1L41.3 40.2L40.9 40.3L40.6 40.6L40.2 40.6L39.9 40.8L39.5 40.9L39.3 41.4L38.9 41.4L38.9 42.2L38.5 42.4L38.0 42.3L37.5 41.9L37.3 42.6L36.8 42.3L36.5 42.6L36.0 42.5L35.8 42.9L35.3 42.6L35.0 42.8L34.6 42.8L34.2 43.1L33.9 43.6L33.4 43.3L33.0 43.5L32.7 43.4L32.3 43.2L31.9 42.7L31.6 42.7L31.2 42.7L30.7 43.0L30.4 42.7L29.9 43.2L29.7 42.4L29.3 42.2L28.8 42.6L28.4 42.4L28.3 41.8L27.8 41.9L27.4 41.8L26.9 41.9L26.6 41.7L26.2 41.6L26.1 41.1L25.5 41.2L25.5 40.6L25.3 40.2L25.1 39.8L24.3 40.1L24.2 39.7L23.9 39.4L23.4 39.3L23.4 38.8L23.4 38.3L22.9 38.2L22.4 38.0L22.9 37.3L22.0 37.3L22.3 36.7L22.3 36.3L21.8 36.1L21.4 35.8L21.5 35.4L21.6 34.9L21.0 34.7L21.5 34.1L20.9 33.9L21.1 33.5L20.8 33.1L20.8 32.7L21.0 32.3L21.0 31.9L20.4 31.6L20.7 31.2L20.9 30.8L20.6 30.4L20.4 30.0L21.1 29.7L20.8 29.3L21.1 28.9L20.6 28.4L21.4 28.2L20.7 27.6L21.1 27.3L21.2 27.0L21.3 26.6L21.7 26.3L21.7 25.9L22.1 25.7L22.1 25.2L22.1 24.8L22.3 24.4L22.7 24.2L22.7 23.8L22.8 23.3L23.0 23.0L23.9 23.2L23.7 22.6L24.3 22.5L24.1 21.8L24.5 21.7L24.9 21.5L25.1 21.2L25.4 21.0L25.9 21.0L25.8 20.2L26.6 20.7L27.0 20.5L27.2 20.1L27.6 20.1L27.8 19.7L28.1 19.3L28.5 19.4L28.7 18.7L29.3 19.2L29.5 18.5L29.8 18.3L30.3 18.7L30.7 18.3L31.5 21.3L31.8 21.3L32.1 21.2L32.4 21.2L32.7 21.2ZM33.0 24.5L33.2 24.5L33.4 24.6L33.7 24.2L33.9 24.1L34.1 24.3L34.3 24.3L34.4 24.6L34.6 24.6L34.8 24.9L35.1 24.5L35.2 24.9L35.4 24.9L35.8 24.5L35.8 25.1L36.2 24.7L36.2 25.0L36.5 25.0L36.6 25.2L36.5 25.7L37.0 25.4L36.9 25.8L37.1 25.9L37.1 26.2L37.2 26.3L37.6 26.3L37.5 26.6L37.8 26.6L38.3 26.5L38.5 26.6L38.2 27.0L38.2 27.3L38.4 27.4L38.3 27.7L38.5 27.8L38.9 27.8L39.0 28.0L38.7 28.4L39.1 28.4L39.1 28.6L39.1 28.8L39.0 29.1L39.2 29.2L39.1 29.5L39.6 29.6L39.6 29.8L39.6 30.0L39.4 30.2L39.9 30.4L39.4 30.6L39.3 30.8L39.4 31.0L39.8 31.2L39.2 31.4L39.7 31.6L39.8 31.9L39.7 32.1L39.3 32.2L39.3 32.4L39.6 32.7L39.4 32.9L39.4 33.1L38.8 33.1L39.1 33.4L39.1 33.6L38.6 33.6L38.5 33.8L38.9 34.2L38.6 34.3L38.3 34.4L38.3 34.6L38.0 34.7L37.9 34.8L37.7 34.9L37.7 35.2L37.4 35.2L37.7 35.8L37.6 35.9L37.2 35.8L36.8 35.7L36.9 36.1L36.5 35.9L36.5 36.2L36.2 36.1L36.2 36.5L35.8 36.3L35.7 36.5L35.5 36.6L35.4 36.8L35.4 37.2L35.1 37.0L34.9 37.2L34.7 37.3L34.5 37.1L34.2 36.8L34.0 36.9L33.8 36.9L33.7 37.3L33.4 37.1L33.3 37.6L33.0 37.0L32.9 37.0L32.6 37.4L32.4 37.3L32.3 36.9L32.1 37.1L31.8 37.1L31.6 37.4L31.4 37.3L31.2 37.3L31.0 37.0L30.7 37.2L30.7 36.8L30.5 36.6L30.4 36.4L30.0 36.8L29.9 36.6L29.7 36.5L29.4 36.6L29.3 36.2L29.3 35.9L29.0 36.0L28.7 36.1L28.9 35.5L28.4 35.8L28.5 35.3L28.6 35.0L28.2 35.1L27.9 35.1L27.9 34.8L28.0 34.5L27.5 34.6L27.8 34.1L27.4 34.2L27.5 33.9L27.2 33.8L27.2 33.6L27.3 33.3L27.2 33.1L26.7 33.1L26.9 32.8L27.0 32.6L26.7 32.4L26.5 32.3L27.0 32.0L26.7 31.8L26.9 31.6L26.4 31.4L26.9 31.2L26.3 31.0L26.5 30.8L26.6 30.6L26.6 30.4L26.8 30.2L26.7 30.0L26.9 29.8L26.8 29.6L26.7 29.4L26.7 29.2L27.0 29.0L26.8 28.8L26.7 28.5L26.8 28.3L27.5 28.4L27.2 28.0L27.5 28.0L27.1 27.6L27.4 27.5L27.6 27.4L27.6 27.1L27.8 27.0L28.1 27.0L27.8 26.5L28.5 26.7L28.6 26.6L28.6 26.3L28.8 26.3L28.8 26.0L28.9 25.7L29.1 25.7L29.0 25.3L29.5 25.6L29.4 25.0L29.6 24.9L29.9 25.1L30.0 24.8L30.4 25.2L30.3 24.5L30.7 24.8L30.9 24.8L30.9 24.3L31.3 24.7L31.4 24.5L31.6 24.4L31.8 24.2L31.7 22.0L31.9 22.0L32.2 21.9L32.5 21.9L32.8 21.9Z" fill="#fff" fill-opacity="0.68" fill-rule="evenodd"/></svg></div>
<div class="c" style="left:675.67px;top:558.5px;width:66.1px;height:50.80px;background:#5cc818;"><div class="t" style="letter-spacing:0.01px">Dream Chord 2</div><svg style="left:0;top:0" width="66.1" height="50.8"><circle cx="33.05" cy="30.8" r="14.6" fill="none" stroke="#fff" stroke-width="0.7" opacity="0.8"/><path d="M33.05 30.8L33.0 16.2A14.6 14.6 0 0 1 46.9 35.3Z" fill="#fff" fill-opacity="0.34"/><path d="M33.5 23.8L34.0 19.0L32.0 19.0L32.6 23.8ZM34.8 24.5L36.7 18.3L34.8 17.9L34.0 24.3ZM36.1 25.0L39.5 18.7L37.7 17.9L35.3 24.7ZM37.2 25.8L41.1 21.4L39.5 20.2L36.5 25.3ZM38.2 26.8L42.8 23.3L41.5 21.8L37.6 26.1ZM38.9 27.9L44.4 25.4L43.4 23.6L38.5 27.2ZM39.4 29.2L46.6 27.5L46.0 25.6L39.1 28.4ZM39.6 30.6L45.5 30.5L45.2 28.5L39.5 29.7ZM39.5 31.9L46.7 33.2L46.9 31.3L39.6 31.0ZM38.3 33.0L44.0 35.4L44.6 33.5L38.6 32.1ZM38.0 34.2L43.5 38.0L44.5 36.2L38.4 33.4ZM37.3 35.3L42.8 40.9L44.1 39.4L37.9 34.6ZM36.7 36.6L39.0 40.7L40.6 39.6L37.4 36.0ZM34.7 35.7L37.2 42.6L39.1 41.8L35.5 35.3ZM34.0 37.4L34.6 43.1L36.6 42.6L34.9 37.2ZM32.6 37.1L32.0 44.7L34.0 44.7L33.5 37.1ZM31.2 37.1L29.6 42.4L31.5 42.8L32.1 37.3ZM30.3 35.9L26.9 42.1L28.7 43.0L31.1 36.3ZM29.7 34.7L24.2 41.2L25.9 42.4L30.4 35.2ZM28.1 34.7L23.5 38.1L24.8 39.6L28.7 35.3ZM28.2 33.1L20.4 36.9L21.4 38.7L28.7 33.9ZM26.3 32.5L20.1 34.0L20.7 35.9L26.6 33.4ZM27.8 30.9L19.9 31.2L20.1 33.2L27.9 31.8ZM26.6 29.7L19.7 28.4L19.5 30.4L26.5 30.6ZM27.9 28.7L22.0 26.1L21.3 28.0L27.6 29.5ZM28.3 27.6L23.1 23.9L22.1 25.6L27.9 28.3ZM28.2 25.8L24.5 21.8L23.2 23.3L27.6 26.5ZM29.7 25.4L26.5 20.1L24.9 21.3L29.0 25.9ZM31.1 25.4L28.4 18.0L26.6 18.8L30.3 25.8ZM32.4 25.7L31.1 17.0L29.2 17.4L31.6 25.9Z" fill="#fff" fill-opacity="0.74"/></svg></div>
<div class="c" style="left:744.96px;top:558.5px;width:66.1px;height:50.80px;background:#5cc818;"><div class="t" style="letter-spacing:0.01px">Dream Chord 3</div><svg style="left:0;top:0" width="66.1" height="50.8"><path d="M33.5 22.8L34.0 17.2L32.1 17.2L32.6 22.8ZM34.9 23.3L36.7 16.5L34.8 16.1L34.0 23.1ZM36.2 24.0L39.2 17.7L37.4 17.0L35.3 23.6ZM37.6 24.3L41.3 19.3L39.7 18.3L36.9 23.8ZM38.2 25.9L43.3 21.0L41.9 19.7L37.5 25.3ZM38.9 27.0L45.4 22.7L44.2 21.2L38.3 26.2ZM40.1 27.8L45.4 25.7L44.5 24.0L39.7 27.0ZM40.1 29.3L46.3 28.0L45.8 26.2L39.8 28.4ZM41.1 30.5L47.5 30.4L47.4 28.5L41.1 29.6ZM40.1 31.9L47.5 33.1L47.7 31.2L40.1 31.0ZM39.6 33.1L45.9 35.4L46.4 33.6L39.9 32.3ZM40.0 34.8L44.7 37.7L45.6 36.0L40.4 34.0ZM38.3 35.3L43.2 39.7L44.4 38.2L38.8 34.6ZM38.0 36.9L41.3 41.3L42.7 40.0L38.7 36.3ZM36.9 37.9L39.3 42.7L40.9 41.7L37.7 37.4ZM35.4 38.1L37.1 43.8L38.8 43.1L36.2 37.8ZM34.0 38.5L34.8 45.5L36.7 45.2L34.9 38.3ZM32.6 38.7L32.1 45.4L34.0 45.4L33.5 38.7ZM31.3 37.8L29.5 44.6L31.4 44.9L32.2 38.0ZM28.8 36.9L24.6 42.7L26.2 43.7L29.5 37.3ZM27.7 36.0L23.1 40.3L24.5 41.5L28.4 36.6ZM26.6 35.1L21.6 38.3L22.7 39.8L27.2 35.8ZM26.0 33.8L19.3 36.6L20.2 38.3L26.4 34.6ZM25.6 32.4L19.9 33.6L20.4 35.4L25.9 33.3ZM25.5 31.0L18.4 31.2L18.6 33.1L25.6 31.9ZM25.6 29.7L18.8 28.5L18.6 30.4L25.5 30.6ZM25.5 28.2L20.4 26.2L19.9 28.0L25.2 29.0ZM26.7 27.1L21.5 24.0L20.7 25.7L26.3 27.9ZM27.1 25.8L22.5 21.7L21.4 23.2L26.6 26.5ZM28.1 24.7L24.8 20.3L23.3 21.6L27.4 25.3ZM29.2 23.7L26.1 17.7L24.4 18.7L28.4 24.2ZM30.8 23.9L28.6 16.6L26.8 17.3L30.0 24.2ZM32.1 23.3L31.3 16.1L29.4 16.4L31.2 23.5Z" fill="#fff" fill-opacity="0.72"/></svg></div>
<div class="c" style="left:814.25px;top:558.5px;width:66.1px;height:50.80px;background:#5cc818;"><div class="t" style="letter-spacing:0.01px">Dream Chord 4</div><svg style="left:0;top:0" width="66.1" height="50.8"><circle cx="33.05" cy="30.8" r="10" fill="none" stroke="#fff" stroke-width="0.7" opacity="0.8"/><path d="M34.4 24.0L35.9 16.9L33.8 16.6L33.5 23.9ZM35.4 24.5L37.9 18.1L35.8 17.5L34.5 24.3ZM36.4 24.8L40.3 18.1L38.4 17.2L35.6 24.4ZM37.2 25.6L41.5 20.4L39.8 19.2L36.4 25.1ZM38.1 26.2L43.6 21.3L42.0 19.9L37.5 25.5ZM38.9 26.9L45.4 22.7L44.2 21.1L38.4 26.2ZM39.4 27.9L45.7 25.2L44.7 23.4L39.0 27.1ZM39.4 29.1L46.8 27.2L46.1 25.2L39.1 28.2ZM40.2 30.0L46.6 29.5L46.2 27.4L40.1 29.1ZM40.1 31.2L46.2 31.7L46.1 29.6L40.0 30.3ZM39.8 32.3L47.1 33.9L47.4 31.9L39.9 31.4ZM39.7 33.4L46.6 36.2L47.2 34.2L39.9 32.5ZM38.7 34.1L45.1 38.0L46.0 36.1L39.1 33.3ZM38.3 35.1L43.2 39.4L44.4 37.7L38.8 34.4ZM38.0 36.4L42.8 42.0L44.3 40.5L38.6 35.7Z" fill="#fff" fill-opacity="0.74"/></svg></div>
<div class="c" style="left:883.54px;top:558.5px;width:66.1px;height:50.80px;background:#5cc818;"><div class="t" style="letter-spacing:-0.07px">Arcade Hook 1</div><svg style="left:0;top:0" width="66.1" height="50.8"><path d="M33.0 16.9L33.8 17.0L34.5 16.9L35.3 16.4L36.1 16.4L36.8 16.7L37.2 18.0L38.3 17.0L38.6 18.3L39.1 18.9L38.5 21.4L39.0 21.7L39.5 22.0L39.9 22.3L40.3 22.7L40.8 23.1L41.2 23.5L41.5 23.9L41.9 24.4L42.2 24.9L42.5 25.4L46.0 24.2L46.3 24.9L46.8 25.5L46.4 26.5L46.7 27.2L46.1 28.0L46.3 28.7L46.1 29.4L46.9 30.1L47.1 30.8L47.0 31.5L46.5 32.2L46.5 32.9L46.0 33.6L47.0 34.6L46.3 35.1L46.4 35.9L46.3 36.7L44.9 36.8L44.3 37.3L44.2 38.1L44.9 39.4L44.3 39.9L43.2 39.9L43.2 41.0L42.1 40.8L42.2 42.1L40.6 41.2L40.9 42.8L40.5 43.7L39.2 42.9L38.6 43.3L37.7 42.9L37.2 43.5L36.5 43.6L35.8 43.9L35.1 43.5L34.4 44.1L33.7 43.7L33.0 44.2L32.4 44.0L31.7 43.7L30.9 44.6L30.3 43.6L29.6 43.7L28.8 44.0L28.1 43.6L27.4 43.6L26.9 42.8L26.1 42.8L26.1 41.5L25.0 41.9L24.8 41.0L24.3 40.6L23.4 40.5L22.9 40.0L22.8 39.1L22.4 38.5L22.1 37.9L21.0 37.8L21.0 36.9L21.1 36.1L20.5 35.6L20.9 34.7L20.4 34.2L20.0 33.6L19.2 33.0L19.3 32.2L19.6 31.5L19.3 30.8L20.0 30.1L19.5 29.4L19.2 28.6L20.4 28.1L19.6 27.2L19.7 26.5L20.7 26.1L20.5 25.2L20.6 24.4L21.9 24.4L21.9 23.5L22.1 22.9L22.4 22.1L23.4 22.1L23.4 21.1L23.9 20.7L24.3 20.1L25.0 19.7L27.1 21.7L27.6 21.4L28.1 21.1L27.6 18.6L28.3 18.4L28.9 18.1L29.6 17.9L30.3 17.9L31.0 18.1L31.7 17.6L32.3 16.9ZM33.0 22.9L33.5 22.9L33.8 23.9L34.3 23.1L34.7 23.0L35.2 22.7L35.4 23.5L36.0 23.1L36.3 23.4L36.5 24.1L38.1 22.1L38.6 22.3L39.0 22.6L39.4 23.0L39.8 23.3L40.2 23.7L40.6 24.0L40.9 24.4L41.2 24.9L41.5 25.3L41.8 25.8L40.2 27.2L40.4 27.5L40.7 27.9L40.3 28.4L40.3 28.9L40.5 29.2L40.8 29.6L40.8 30.0L41.1 30.4L40.2 30.8L40.6 31.2L40.3 31.6L40.2 31.9L40.9 32.5L41.1 33.0L40.7 33.3L39.6 33.3L39.7 33.7L40.0 34.4L39.3 34.4L39.7 35.1L38.8 35.0L39.5 36.1L38.5 35.7L38.0 35.7L38.3 36.6L37.9 36.8L37.9 37.5L37.4 37.6L37.1 37.8L36.7 38.0L36.5 38.5L35.9 38.3L35.6 38.7L35.0 38.2L34.7 38.5L34.3 38.8L33.8 37.8L33.5 38.8L33.0 38.4L32.7 37.9L32.3 38.0L32.0 37.7L31.5 38.2L31.2 37.7L30.5 38.8L30.4 37.6L29.8 38.1L29.4 37.9L29.4 37.1L29.1 36.9L28.4 37.2L28.1 37.0L27.7 36.8L28.1 35.8L27.5 35.8L26.8 35.9L26.9 35.3L26.0 35.4L26.1 34.8L26.2 34.3L26.7 33.6L26.4 33.4L25.8 33.2L26.0 32.7L25.1 32.5L25.8 32.0L26.2 31.5L24.8 31.2L26.0 30.8L26.1 30.4L25.2 30.0L25.9 29.7L26.3 29.4L25.1 28.7L25.7 28.4L26.0 28.1L26.4 27.9L25.9 27.1L26.7 27.2L26.9 26.8L27.3 26.6L27.4 26.2L27.8 26.0L27.7 25.5L27.9 25.1L28.2 24.8L28.4 24.4L27.5 22.3L28.0 22.1L28.5 21.8L29.7 23.2L30.2 23.5L30.9 24.2L31.0 23.1L31.5 23.3L31.9 23.3L32.3 23.7L32.7 23.7Z" fill="#fff" fill-opacity="0.68" fill-rule="evenodd"/></svg></div>
<div class="c" style="left:952.83px;top:558.5px;width:66.1px;height:50.80px;background:#5cc818;"><div class="t" style="letter-spacing:0.04px">Arcade Hook 2</div><svg style="left:0;top:0" width="66.1" height="50.8"><circle cx="33.05" cy="30.8" r="10.5" fill="none" stroke="#fff" stroke-width="0.8" opacity="0.8"/><path d="M35.7 17.1L37.1 17.5L38.6 18.0L39.9 18.7L41.2 19.6L37.6 24.6L36.9 24.1L36.1 23.7L35.3 23.4L34.5 23.2ZM41.8 19.5L43.1 20.6L44.2 21.9L45.2 23.3L46.0 24.8L46.7 26.4L40.0 28.5L39.7 27.7L39.3 27.0L38.8 26.3L38.2 25.6L37.5 25.0ZM30.4 44.7L28.9 44.3L27.5 43.7L26.1 43.0L24.8 42.2L28.6 36.9L29.3 37.3L30.1 37.7L30.8 38.0L31.6 38.2ZM24.2 42.3L23.0 41.2L21.9 40.0L20.9 38.8L20.1 37.4L19.5 35.9L19.0 34.4L26.2 32.6L26.4 33.3L26.7 34.0L27.1 34.7L27.6 35.3L28.1 35.9L28.7 36.4Z" fill="#fff" fill-opacity="0.7"/></svg></div>
<div style="left:467.8px;top:613.5px;width:66.1px;height:25.6px;background:#383838;border-radius:3px"></div>
<div class="c" style="left:537.09px;top:613.5px;width:66.1px;height:25.60px;background:#7ecb14;"><div class="t" style="letter-spacing:-0.14px">Chop Vox 1</div></div>
<div class="c" style="left:606.38px;top:613.5px;width:66.1px;height:25.60px;background:#7ecb14;"><div class="t" style="letter-spacing:-0.01px">Chop Vox 2</div></div>
<div class="c" style="left:675.67px;top:613.5px;width:66.1px;height:25.60px;background:#7ecb14;"><div class="t" style="letter-spacing:-0.01px">Chop Vox 3</div></div>
<div class="c" style="left:744.96px;top:613.5px;width:66.1px;height:25.60px;background:#7ecb14;"><div class="t" style="letter-spacing:-0.04px">Chop Vox 4</div></div>
<div class="c" style="left:814.25px;top:613.5px;width:66.1px;height:25.60px;background:#7ecb14;"><div class="t" style="letter-spacing:-0.04px">Chop Vox 5</div></div>
<div class="c" style="left:883.54px;top:613.5px;width:66.1px;height:25.60px;background:#7ecb14;"><div class="t" style="letter-spacing:-0.07px">Arcade Vox</div></div>
<div class="c" style="left:952.83px;top:613.5px;width:66.1px;height:25.60px;background:#7ecb14;"><div class="t" style="letter-spacing:-0.15px">Dream Vox 1</div></div>
<div style="left:467.8px;top:643px;width:66.1px;height:23.1px;background:#383838;border-radius:3px"></div>
<div style="left:537.09px;top:643px;width:66.1px;height:23.1px;background:#383838;border-radius:3px"></div>
<div class="c" style="left:606.38px;top:643px;width:66.1px;height:23.10px;background:#a8cc1a;"><div class="t" style="letter-spacing:-0.08px">Anthemic Lead</div><svg style="left:28.6px;top:12.6px" width="10" height="10"><circle cx="5" cy="5" r="4.1" fill="none" stroke="#fff" stroke-width=".9" opacity=".8"/><path d="M5 5L5.0 0.9A4.1 4.1 0 0 1 7.4 1.7Z" fill="#fff" fill-opacity="0.8"/></svg></div>
<div style="left:675.67px;top:643px;width:66.1px;height:23.1px;background:#383838;border-radius:3px"></div>
<div class="c" style="left:744.96px;top:643px;width:66.1px;height:23.10px;background:#a8cc1a;"><div class="t" style="letter-spacing:-0.08px">Anthemic Lead</div></div>
<div style="left:814.25px;top:643px;width:66.1px;height:23.1px;background:#383838;border-radius:3px"></div>
<div class="c" style="left:883.54px;top:643px;width:66.1px;height:23.10px;background:#a8cc1a;"><div class="t" style="letter-spacing:-0.08px">Anthemic Lead</div></div>
<div style="left:952.83px;top:643px;width:66.1px;height:23.1px;background:#383838;border-radius:3px"></div>
<div style="left:467.8px;top:670px;width:66.1px;height:23.1px;background:#383838;border-radius:3px"></div>
<div style="left:537.09px;top:670px;width:66.1px;height:23.1px;background:#383838;border-radius:3px"></div>
<div style="left:606.38px;top:670px;width:66.1px;height:23.1px;background:#383838;border-radius:3px"></div>
<div class="c" style="left:675.67px;top:670px;width:66.1px;height:23.10px;background:#d0cc1c;"><div class="t" style="letter-spacing:-0.13px">Synth Bass 3</div></div>
<div class="c" style="left:744.96px;top:670px;width:66.1px;height:23.10px;background:#d0cc1c;"><div class="t" style="letter-spacing:-0.12px">Chip Tune Fills</div></div>
<div class="c" style="left:814.25px;top:670px;width:66.1px;height:23.10px;background:#d0cc1c;"><div class="t" style="letter-spacing:-0.07px">Arcade Hook 1</div></div>
<div class="c" style="left:883.54px;top:670px;width:66.1px;height:23.10px;background:#d0cc1c;"><div class="t" style="letter-spacing:0.04px">Arcade Hook 2</div></div>
<div class="c" style="left:952.83px;top:670px;width:66.1px;height:23.10px;background:#d0cc1c;"><div class="t" style="letter-spacing:-0.14px">Dream Pad 1</div></div>
<div style="left:467.8px;top:697px;width:66.1px;height:23.6px;background:#383838;border-radius:3px"></div>
<div style="left:537.09px;top:697px;width:66.1px;height:23.6px;background:#383838;border-radius:3px"></div>
<div style="left:606.38px;top:697px;width:66.1px;height:23.6px;background:#383838;border-radius:3px"></div>
<div class="c" style="left:675.67px;top:697px;width:66.1px;height:23.60px;background:#d0a81c;"><div class="t" style="letter-spacing:-0.12px">Chord Swells</div><svg style="left:28.6px;top:12.6px" width="10" height="10"><circle cx="5" cy="5" r="4.1" fill="none" stroke="#fff" stroke-width=".9" opacity=".8"/><path d="M5 5L5.0 0.9A4.1 4.1 0 0 1 9.1 5.5Z" fill="#fff" fill-opacity="0.8"/></svg></div>
<div style="left:744.96px;top:697px;width:66.1px;height:23.6px;background:#383838;border-radius:3px"></div>
<div class="c" style="left:814.25px;top:697px;width:66.1px;height:23.60px;background:#d0a81c;"><div class="t" style="letter-spacing:-0.13px">Synth Plucks</div></div>
<div style="left:883.54px;top:697px;width:66.1px;height:23.6px;background:#383838;border-radius:3px"></div>
<div class="c" style="left:952.83px;top:697px;width:66.1px;height:23.60px;background:#d0a81c;"><div class="t" style="letter-spacing:-0.13px">Dream Pads</div></div>
<div style="left:467.8px;top:724.5px;width:66.1px;height:25.6px;background:#383838;border-radius:3px"></div>
<div style="left:537.09px;top:724.5px;width:66.1px;height:25.6px;background:#383838;border-radius:3px"></div>
<div style="left:606.38px;top:724.5px;width:66.1px;height:25.6px;background:#383838;border-radius:3px"></div>
<div class="c" style="left:675.67px;top:724.5px;width:66.1px;height:25.60px;background:#cc8018;"><div class="t" style="letter-spacing:-0.14px">Atmosphere 1</div></div>
<div class="c" style="left:744.96px;top:724.5px;width:66.1px;height:25.60px;background:#cc8018;"><div class="t" style="letter-spacing:-0.03px">Atmosphere 2</div></div>
<div class="c" style="left:814.25px;top:724.5px;width:66.1px;height:25.60px;background:#cc8018;"><div class="t" style="letter-spacing:-0.03px">Atmosphere 3</div></div>
<div class="c" style="left:883.54px;top:724.5px;width:66.1px;height:25.60px;background:#cc8018;"><div class="t" style="letter-spacing:-0.02px">Sweeper</div></div>
<div class="c" style="left:952.83px;top:724.5px;width:66.1px;height:25.60px;background:#cc8018;"><div class="t" style="letter-spacing:-0.07px">Dream Beat</div></div>
<div style="left:467.8px;top:754px;width:66.1px;height:25.6px;background:#383838;border-radius:3px"></div>
<div style="left:537.09px;top:754px;width:66.1px;height:25.6px;background:#383838;border-radius:3px"></div>
<div class="c" style="left:606.38px;top:754px;width:66.1px;height:25.60px;background:#cc5a14;"><div class="t" style="letter-spacing:-0.12px">Noise Riser</div><svg style="left:28.6px;top:12.6px" width="10" height="10"><circle cx="5" cy="5" r="4.1" fill="none" stroke="#fff" stroke-width=".9" opacity=".8"/><path d="M5 5L5.0 0.9A4.1 4.1 0 0 1 7.4 1.7Z" fill="#fff" fill-opacity="0.8"/></svg></div>
<div style="left:675.67px;top:754px;width:66.1px;height:25.6px;background:#383838;border-radius:3px"></div>
<div style="left:744.96px;top:754px;width:66.1px;height:25.6px;background:#383838;border-radius:3px"></div>
<div class="c" style="left:814.25px;top:754px;width:66.1px;height:25.60px;background:#cc5a14;"><div class="t" style="letter-spacing:-0.12px">Noise Riser</div></div>
<div style="left:883.54px;top:754px;width:66.1px;height:25.6px;background:#383838;border-radius:3px"></div>
<div style="left:952.83px;top:754px;width:66.1px;height:25.6px;background:#383838;border-radius:3px"></div>
<div style="left:466px;top:782px;width:575px;height:32px;background:#3b3b3b"></div>
<svg style="left:494.85px;top:787.5px;" width="12" height="8" viewBox="0 0 12 8"><path d="M1.6 6 L6 2 L10.4 6" fill="none" stroke="#e2e2e2" stroke-width="1.5" stroke-linecap="round" stroke-linejoin="round"/></svg>
<div class="t" style="left:467.8px;top:803.2px;font-size:8.5px;line-height:10.5px;color:#b8b8b8;width:66.1px;text-align:center;">1</div>
<div style="left:534.89px;top:782px;width:1.2px;height:32px;background:#2e2e2e"></div>
<svg style="left:564.14px;top:787.5px;" width="12" height="8" viewBox="0 0 12 8"><path d="M1.6 6 L6 2 L10.4 6" fill="none" stroke="#e2e2e2" stroke-width="1.5" stroke-linecap="round" stroke-linejoin="round"/></svg>
<div class="t" style="left:537.09px;top:803.2px;font-size:8.5px;line-height:10.5px;color:#b8b8b8;width:66.1px;text-align:center;">2</div>
<div style="left:604.18px;top:782px;width:1.2px;height:32px;background:#2e2e2e"></div>
<svg style="left:633.43px;top:787.5px;" width="12" height="8" viewBox="0 0 12 8"><path d="M1.6 6 L6 2 L10.4 6" fill="none" stroke="#e2e2e2" stroke-width="1.5" stroke-linecap="round" stroke-linejoin="round"/></svg>
<div class="t" style="left:606.38px;top:803.2px;font-size:8.5px;line-height:10.5px;color:#b8b8b8;width:66.1px;text-align:center;">3</div>
<div style="left:673.47px;top:782px;width:1.2px;height:32px;background:#2e2e2e"></div>
<svg style="left:702.72px;top:787.5px;" width="12" height="8" viewBox="0 0 12 8"><path d="M1.6 6 L6 2 L10.4 6" fill="none" stroke="#e2e2e2" stroke-width="1.5" stroke-linecap="round" stroke-linejoin="round"/></svg>
<div class="t" style="left:675.6700000000001px;top:803.2px;font-size:8.5px;line-height:10.5px;color:#b8b8b8;width:66.1px;text-align:center;">4</div>
<div style="left:742.76px;top:782px;width:1.2px;height:32px;background:#2e2e2e"></div>
<svg style="left:772.01px;top:787.5px;" width="12" height="8" viewBox="0 0 12 8"><path d="M1.6 6 L6 2 L10.4 6" fill="none" stroke="#e2e2e2" stroke-width="1.5" stroke-linecap="round" stroke-linejoin="round"/></svg>
<div class="t" style="left:744.96px;top:803.2px;font-size:8.5px;line-height:10.5px;color:#b8b8b8;width:66.1px;text-align:center;">5</div>
<div style="left:812.05px;top:782px;width:1.2px;height:32px;background:#2e2e2e"></div>
<svg style="left:841.3px;top:787.5px;" width="12" height="8" viewBox="0 0 12 8"><path d="M1.6 6 L6 2 L10.4 6" fill="none" stroke="#e2e2e2" stroke-width="1.5" stroke-linecap="round" stroke-linejoin="round"/></svg>
<div class="t" style="left:814.25px;top:803.2px;font-size:8.5px;line-height:10.5px;color:#b8b8b8;width:66.1px;text-align:center;">6</div>
<div style="left:881.3399999999999px;top:782px;width:1.2px;height:32px;background:#2e2e2e"></div>
<svg style="left:910.5899999999999px;top:787.5px;" width="12" height="8" viewBox="0 0 12 8"><path d="M1.6 6 L6 2 L10.4 6" fill="none" stroke="#e2e2e2" stroke-width="1.5" stroke-linecap="round" stroke-linejoin="round"/></svg>
<div class="t" style="left:883.54px;top:803.2px;font-size:8.5px;line-height:10.5px;color:#b8b8b8;width:66.1px;text-align:center;">7</div>
<div style="left:950.63px;top:782px;width:1.2px;height:32px;background:#2e2e2e"></div>
<svg style="left:979.88px;top:787.5px;" width="12" height="8" viewBox="0 0 12 8"><path d="M1.6 6 L6 2 L10.4 6" fill="none" stroke="#e2e2e2" stroke-width="1.5" stroke-linecap="round" stroke-linejoin="round"/></svg>
<div class="t" style="left:952.83px;top:803.2px;font-size:8.5px;line-height:10.5px;color:#b8b8b8;width:66.1px;text-align:center;">8</div>
<div style="left:1021.3px;top:110px;width:19.5px;height:704px;background:#555"></div>
<div style="left:1021.3px;top:329.5px;width:19.5px;height:140.5px;background:#747474"></div>
<div style="left:1021.3px;top:109.0px;width:19.5px;height:1px;background:#444"></div>
<div style="left:1021.3px;top:164.0px;width:19.5px;height:1px;background:#444"></div>
<div style="left:1021.3px;top:219.0px;width:19.5px;height:1px;background:#444"></div>
<div style="left:1021.3px;top:274.0px;width:19.5px;height:1px;background:#444"></div>
<div style="left:1021.3px;top:329.0px;width:19.5px;height:1px;background:#444"></div>
<div style="left:1021.3px;top:469.5px;width:19.5px;height:1px;background:#444"></div>
<div style="left:1021.3px;top:555.5px;width:19.5px;height:1px;background:#444"></div>
<div style="left:1021.3px;top:611.0px;width:19.5px;height:1px;background:#444"></div>
<div style="left:1021.3px;top:640.5px;width:19.5px;height:1px;background:#444"></div>
<div style="left:1021.3px;top:667.5px;width:19.5px;height:1px;background:#444"></div>
<div style="left:1021.3px;top:694.5px;width:19.5px;height:1px;background:#444"></div>
<div style="left:1021.3px;top:722.0px;width:19.5px;height:1px;background:#444"></div>
<div style="left:1021.3px;top:751.5px;width:19.5px;height:1px;background:#444"></div>
<div style="left:1021.3px;top:781.0px;width:19.5px;height:1px;background:#444"></div>
<div style="left:1020.6999999999999px;top:110px;width:0.8px;height:704px;background:#3a3a3a"></div>
<svg style="left:1024.5px;top:130.0px;" width="13" height="13" viewBox="0 0 13 13"><circle cx="6.5" cy="6.5" r="5.3" fill="none" stroke="#f0f0f0" stroke-width="1.1"/><path d="M5.6 1.3 A5.3 5.3 0 1 1 4.6 11.4 A11 11 0 0 0 5.6 1.3Z" fill="#f0f0f0"/></svg>
<svg style="left:1024.5px;top:185.0px;" width="13" height="13" viewBox="0 0 13 13"><circle cx="6.5" cy="6.5" r="5.3" fill="none" stroke="#f0f0f0" stroke-width="1.1"/><path d="M6.5 6.5 V1.2 A5.3 5.3 0 0 1 11.8 6.5Z" fill="#f0f0f0"/></svg>
<svg style="left:1024.5px;top:295.0px;" width="13" height="13" viewBox="0 0 13 13"><circle cx="6.5" cy="6.5" r="5.3" fill="none" stroke="#f0f0f0" stroke-width="1.1"/><path d="M5.6 1.3 A5.3 5.3 0 1 1 4.6 11.4 A11 11 0 0 0 5.6 1.3Z" fill="#f0f0f0"/></svg>
<svg style="left:1024.5px;top:507.0px;" width="13" height="13" viewBox="0 0 13 13"><circle cx="6.5" cy="6.5" r="5.3" fill="none" stroke="#f0f0f0" stroke-width="1.1"/><path d="M6.5 6.5 V1.2 A5.3 5.3 0 0 1 11.8 6.5Z" fill="#f0f0f0"/></svg>
<svg style="left:1024.5px;top:577.5px;" width="13" height="13" viewBox="0 0 13 13"><circle cx="6.5" cy="6.5" r="5.3" fill="none" stroke="#f0f0f0" stroke-width="1.1"/><path d="M6.5 6.5 V1.2 A5.3 5.3 0 0 1 11.8 6.5Z" fill="#f0f0f0"/></svg>
<svg style="left:1024.5px;top:648.1px;" width="13" height="13" viewBox="0 0 13 13"><circle cx="6.5" cy="6.5" r="5.3" fill="none" stroke="#f0f0f0" stroke-width="1.1"/><path d="M6.5 6.5 V1.2 A5.3 5.3 0 0 1 9.6 2.2Z" fill="#f0f0f0"/><path d="M6.5 6.5 L9.4 2.4" stroke="#f0f0f0" stroke-width="1"/></svg>
<svg style="left:1024.5px;top:702.5px;" width="13" height="13" viewBox="0 0 13 13"><circle cx="6.5" cy="6.5" r="5.3" fill="none" stroke="#f0f0f0" stroke-width="1.1"/><path d="M6.5 6.5 V1.2 A5.3 5.3 0 0 1 11.8 6.5Z" fill="#f0f0f0"/></svg>
<svg style="left:1024.5px;top:760.3px;" width="13" height="13" viewBox="0 0 13 13"><circle cx="6.5" cy="6.5" r="5.3" fill="none" stroke="#f0f0f0" stroke-width="1.1"/><path d="M6.5 6.5 V1.2 A5.3 5.3 0 0 1 9.6 2.2Z" fill="#f0f0f0"/><path d="M6.5 6.5 L9.4 2.4" stroke="#f0f0f0" stroke-width="1"/></svg>
<div style="left:1027.3px;top:794.6px;width:7.4px;height:7.4px;background:#f4f4f4"></div>
<svg style="left:0;top:0;pointer-events:none" width="1303" height="817"><rect x="466.15" y="80.7" width="575.25" height="733.2" fill="none" stroke="#68a8ef" stroke-width="1.6"/></svg>
<!-- timeline -->
<div style="left:1042.2px;top:110px;width:260.79999999999995px;height:704px;background:#2d2d2d"></div>
<div style="left:1042.2px;top:82px;width:260.79999999999995px;height:13.2px;background:repeating-linear-gradient(135deg,#3e3e3e 0,#3e3e3e 2.4px,#373737 2.4px,#373737 4.8px)"></div>
<div style="left:1042.2px;top:80.5px;width:260.79999999999995px;height:1.6px;background:#2a2a2a"></div>
<div style="left:1042.2px;top:95.2px;width:260.79999999999995px;height:14.6px;background:#303030"></div>
<div style="left:1042.2px;top:94.8px;width:260.79999999999995px;height:0.9px;background:#232323"></div>
<div style="left:1043.9px;top:82px;width:1px;height:28px;background:#5a5a5a"></div>
<div class="t" style="left:1047.5px;top:80.5px;font-size:9.8px;line-height:11.8px;color:#e2e2e2;letter-spacing:-.1px;-webkit-text-stroke:.25px #e2e2e2">17</div>
<div style="left:1053.2375000000002px;top:103.4px;width:1px;height:5px;background:#565656"></div>
<div style="left:1062.575px;top:103.4px;width:1px;height:5px;background:#565656"></div>
<div style="left:1071.9125000000001px;top:103.4px;width:1px;height:5px;background:#565656"></div>
<div style="left:1081.25px;top:98.2px;width:1px;height:11.6px;background:#5c5c5c"></div>
<div style="left:1090.5875px;top:103.4px;width:1px;height:5px;background:#565656"></div>
<div style="left:1099.925px;top:103.4px;width:1px;height:5px;background:#565656"></div>
<div style="left:1109.2625px;top:103.4px;width:1px;height:5px;background:#565656"></div>
<div style="left:1118.6000000000001px;top:98.2px;width:1px;height:11.6px;background:#5c5c5c"></div>
<div style="left:1127.9375000000002px;top:103.4px;width:1px;height:5px;background:#565656"></div>
<div style="left:1137.275px;top:103.4px;width:1px;height:5px;background:#565656"></div>
<div style="left:1146.6125000000002px;top:103.4px;width:1px;height:5px;background:#565656"></div>
<div style="left:1155.95px;top:98.2px;width:1px;height:11.6px;background:#5c5c5c"></div>
<div style="left:1165.2875000000001px;top:103.4px;width:1px;height:5px;background:#565656"></div>
<div style="left:1174.625px;top:103.4px;width:1px;height:5px;background:#565656"></div>
<div style="left:1183.9625px;top:103.4px;width:1px;height:5px;background:#565656"></div>
<div style="left:1193.3000000000002px;top:82px;width:1px;height:28px;background:#5a5a5a"></div>
<div class="t" style="left:1196.9px;top:80.5px;font-size:9.8px;line-height:11.8px;color:#e2e2e2;letter-spacing:-.1px;-webkit-text-stroke:.25px #e2e2e2">18</div>
<div style="left:1202.6375000000003px;top:103.4px;width:1px;height:5px;background:#565656"></div>
<div style="left:1211.9750000000001px;top:103.4px;width:1px;height:5px;background:#565656"></div>
<div style="left:1221.3125000000002px;top:103.4px;width:1px;height:5px;background:#565656"></div>
<div style="left:1230.65px;top:98.2px;width:1px;height:11.6px;background:#5c5c5c"></div>
<div style="left:1239.9875000000002px;top:103.4px;width:1px;height:5px;background:#565656"></div>
<div style="left:1249.325px;top:103.4px;width:1px;height:5px;background:#565656"></div>
<div style="left:1258.6625000000001px;top:103.4px;width:1px;height:5px;background:#565656"></div>
<div style="left:1268.0px;top:98.2px;width:1px;height:11.6px;background:#5c5c5c"></div>
<div style="left:1277.3375px;top:103.4px;width:1px;height:5px;background:#565656"></div>
<div style="left:1286.675px;top:103.4px;width:1px;height:5px;background:#565656"></div>
<div style="left:1296.0125px;top:103.4px;width:1px;height:5px;background:#565656"></div>
<div style="left:1043.9px;top:110px;width:1px;height:671.5px;background:#383838"></div>
<div style="left:1081.25px;top:110px;width:1px;height:671.5px;background:#383838"></div>
<div style="left:1118.6000000000001px;top:110px;width:1px;height:671.5px;background:#383838"></div>
<div style="left:1155.95px;top:110px;width:1px;height:671.5px;background:#383838"></div>
<div style="left:1193.3000000000002px;top:110px;width:1px;height:671.5px;background:#383838"></div>
<div style="left:1230.65px;top:110px;width:1px;height:671.5px;background:#383838"></div>
<div style="left:1268.0px;top:110px;width:1px;height:671.5px;background:#383838"></div>
<div style="left:1042.2px;top:109.0px;width:260.79999999999995px;height:1px;background:#262626"></div>
<div style="left:1042.2px;top:164.0px;width:260.79999999999995px;height:1px;background:#262626"></div>
<div style="left:1042.2px;top:219.0px;width:260.79999999999995px;height:1px;background:#262626"></div>
<div style="left:1042.2px;top:274.0px;width:260.79999999999995px;height:1px;background:#262626"></div>
<div style="left:1042.2px;top:329.0px;width:260.79999999999995px;height:1px;background:#262626"></div>
<div style="left:1042.2px;top:469.5px;width:260.79999999999995px;height:1px;background:#262626"></div>
<div style="left:1042.2px;top:555.5px;width:260.79999999999995px;height:1px;background:#262626"></div>
<div style="left:1042.2px;top:611.0px;width:260.79999999999995px;height:1px;background:#262626"></div>
<div style="left:1042.2px;top:640.5px;width:260.79999999999995px;height:1px;background:#262626"></div>
<div style="left:1042.2px;top:667.5px;width:260.79999999999995px;height:1px;background:#262626"></div>
<div style="left:1042.2px;top:694.5px;width:260.79999999999995px;height:1px;background:#262626"></div>
<div style="left:1042.2px;top:722.0px;width:260.79999999999995px;height:1px;background:#262626"></div>
<div style="left:1042.2px;top:751.5px;width:260.79999999999995px;height:1px;background:#262626"></div>
<div style="left:1042.2px;top:781.0px;width:260.79999999999995px;height:1px;background:#262626"></div>
<div style="left:1044.4px;top:109.8px;width:262.5999999999999px;height:53.4px;background:#484848;border-radius:3.5px;overflow:hidden;box-shadow:0 0 0 .8px #1e1e1e"><div class="t" style="left:4.3px;top:1.6px;font-size:9.4px;line-height:12px;color:#6faef5;-webkit-text-stroke:.22px #6faef5;letter-spacing:-0.28px">Simple Topper</div><div style="left:36.9px;top:0;width:1px;height:53.4px;background:rgba(255,255,255,.045)"></div><div style="left:74.2px;top:0;width:1px;height:53.4px;background:rgba(255,255,255,.045)"></div><div style="left:111.6px;top:0;width:1px;height:53.4px;background:rgba(255,255,255,.045)"></div><div style="left:148.9px;top:0;width:1px;height:53.4px;background:rgba(255,255,255,.045)"></div><div style="left:186.2px;top:0;width:1px;height:53.4px;background:rgba(255,255,255,.045)"></div><div style="left:223.6px;top:0;width:1px;height:53.4px;background:rgba(255,255,255,.045)"></div><div style="left:260.9px;top:0;width:1px;height:53.4px;background:rgba(255,255,255,.045)"></div><div style="left:0.60px;top:15.70px;width:7.3px;height:4.4px;background:#c9c9c9"></div><div style="left:9.94px;top:15.70px;width:7.3px;height:4.4px;background:#5b5b5b"></div><div style="left:19.28px;top:15.70px;width:7.3px;height:4.4px;background:#5b5b5b"></div><div style="left:28.61px;top:15.70px;width:7.3px;height:4.4px;background:#5b5b5b"></div><div style="left:37.95px;top:15.70px;width:7.3px;height:4.4px;background:#c9c9c9"></div><div style="left:47.29px;top:15.70px;width:7.3px;height:4.4px;background:#c9c9c9"></div><div style="left:56.63px;top:15.70px;width:7.3px;height:4.4px;background:#c9c9c9"></div><div style="left:65.96px;top:15.70px;width:7.3px;height:4.4px;background:#5b5b5b"></div><div style="left:75.30px;top:15.70px;width:7.3px;height:4.4px;background:#c9c9c9"></div><div style="left:84.64px;top:15.70px;width:7.3px;height:4.4px;background:#5b5b5b"></div><div style="left:93.97px;top:15.70px;width:7.3px;height:4.4px;background:linear-gradient(90deg,#c4c4c4 55%,#6a6a6a 55%)"></div><div style="left:103.31px;top:15.70px;width:7.3px;height:4.4px;background:#5b5b5b"></div><div style="left:112.65px;top:15.70px;width:7.3px;height:4.4px;background:#5b5b5b"></div><div style="left:121.99px;top:15.70px;width:7.3px;height:4.4px;background:#c9c9c9"></div><div style="left:131.32px;top:15.70px;width:7.3px;height:4.4px;background:#5b5b5b"></div><div style="left:140.66px;top:15.70px;width:7.3px;height:4.4px;background:#5b5b5b"></div><div style="left:150.00px;top:15.70px;width:7.3px;height:4.4px;background:#c9c9c9"></div><div style="left:159.34px;top:15.70px;width:7.3px;height:4.4px;background:#5b5b5b"></div><div style="left:168.68px;top:15.70px;width:7.3px;height:4.4px;background:#5b5b5b"></div><div style="left:178.01px;top:15.70px;width:7.3px;height:4.4px;background:#5b5b5b"></div><div style="left:187.35px;top:15.70px;width:7.3px;height:4.4px;background:#c9c9c9"></div><div style="left:196.69px;top:15.70px;width:7.3px;height:4.4px;background:#c9c9c9"></div><div style="left:206.03px;top:15.70px;width:7.3px;height:4.4px;background:#c9c9c9"></div><div style="left:215.36px;top:15.70px;width:7.3px;height:4.4px;background:#5b5b5b"></div><div style="left:224.70px;top:15.70px;width:7.3px;height:4.4px;background:#c9c9c9"></div><div style="left:234.04px;top:15.70px;width:7.3px;height:4.4px;background:#5b5b5b"></div><div style="left:243.38px;top:15.70px;width:7.3px;height:4.4px;background:linear-gradient(90deg,#c4c4c4 55%,#6a6a6a 55%)"></div><div style="left:252.71px;top:15.70px;width:7.3px;height:4.4px;background:#5b5b5b"></div><div style="left:0.60px;top:21.65px;width:7.3px;height:4.4px;background:#5b5b5b"></div><div style="left:9.94px;top:21.65px;width:7.3px;height:4.4px;background:#5b5b5b"></div><div style="left:19.28px;top:21.65px;width:7.3px;height:4.4px;background:#5b5b5b"></div><div style="left:28.61px;top:21.65px;width:7.3px;height:4.4px;background:#5b5b5b"></div><div style="left:37.95px;top:21.65px;width:7.3px;height:4.4px;background:#c9c9c9"></div><div style="left:47.29px;top:21.65px;width:7.3px;height:4.4px;background:#5b5b5b"></div><div style="left:56.63px;top:21.65px;width:7.3px;height:4.4px;background:#5b5b5b"></div><div style="left:65.96px;top:21.65px;width:7.3px;height:4.4px;background:#5b5b5b"></div><div style="left:75.30px;top:21.65px;width:7.3px;height:4.4px;background:#5b5b5b"></div><div style="left:84.64px;top:21.65px;width:7.3px;height:4.4px;background:#5b5b5b"></div><div style="left:93.97px;top:21.65px;width:7.3px;height:4.4px;background:#5b5b5b"></div><div style="left:103.31px;top:21.65px;width:7.3px;height:4.4px;background:#5b5b5b"></div><div style="left:112.65px;top:21.65px;width:7.3px;height:4.4px;background:#c9c9c9"></div><div style="left:121.99px;top:21.65px;width:7.3px;height:4.4px;background:#5b5b5b"></div><div style="left:131.32px;top:21.65px;width:7.3px;height:4.4px;background:#5b5b5b"></div><div style="left:140.66px;top:21.65px;width:7.3px;height:4.4px;background:#5b5b5b"></div><div style="left:150.00px;top:21.65px;width:7.3px;height:4.4px;background:#5b5b5b"></div><div style="left:159.34px;top:21.65px;width:7.3px;height:4.4px;background:#5b5b5b"></div><div style="left:168.68px;top:21.65px;width:7.3px;height:4.4px;background:#5b5b5b"></div><div style="left:178.01px;top:21.65px;width:7.3px;height:4.4px;background:#5b5b5b"></div><div style="left:187.35px;top:21.65px;width:7.3px;height:4.4px;background:#c9c9c9"></div><div style="left:196.69px;top:21.65px;width:7.3px;height:4.4px;background:#5b5b5b"></div><div style="left:206.03px;top:21.65px;width:7.3px;height:4.4px;background:#5b5b5b"></div><div style="left:215.36px;top:21.65px;width:7.3px;height:4.4px;background:#5b5b5b"></div><div style="left:224.70px;top:21.65px;width:7.3px;height:4.4px;background:#5b5b5b"></div><div style="left:234.04px;top:21.65px;width:7.3px;height:4.4px;background:#5b5b5b"></div><div style="left:243.38px;top:21.65px;width:7.3px;height:4.4px;background:#5b5b5b"></div><div style="left:252.71px;top:21.65px;width:7.3px;height:4.4px;background:#5b5b5b"></div><div style="left:0.60px;top:27.60px;width:7.3px;height:4.4px;background:#5b5b5b"></div><div style="left:9.94px;top:27.60px;width:7.3px;height:4.4px;background:#5b5b5b"></div><div style="left:19.28px;top:27.60px;width:7.3px;height:4.4px;background:#5b5b5b"></div><div style="left:28.61px;top:27.60px;width:7.3px;height:4.4px;background:#5b5b5b"></div><div style="left:39.55px;top:27.60px;width:7.3px;height:4.4px;background:#c9c9c9"></div><div style="left:47.29px;top:27.60px;width:7.3px;height:4.4px;background:#5b5b5b"></div><div style="left:56.63px;top:27.60px;width:7.3px;height:4.4px;background:#5b5b5b"></div><div style="left:65.96px;top:27.60px;width:7.3px;height:4.4px;background:#5b5b5b"></div><div style="left:75.30px;top:27.60px;width:7.3px;height:4.4px;background:#5b5b5b"></div><div style="left:84.64px;top:27.60px;width:7.3px;height:4.4px;background:#5b5b5b"></div><div style="left:93.97px;top:27.60px;width:7.3px;height:4.4px;background:#5b5b5b"></div><div style="left:103.31px;top:27.60px;width:7.3px;height:4.4px;background:#5b5b5b"></div><div style="left:114.25px;top:27.60px;width:7.3px;height:4.4px;background:#c9c9c9"></div><div style="left:121.99px;top:27.60px;width:7.3px;height:4.4px;background:#5b5b5b"></div><div style="left:131.32px;top:27.60px;width:7.3px;height:4.4px;background:#5b5b5b"></div><div style="left:140.66px;top:27.60px;width:7.3px;height:4.4px;background:#5b5b5b"></div><div style="left:150.00px;top:27.60px;width:7.3px;height:4.4px;background:#5b5b5b"></div><div style="left:159.34px;top:27.60px;width:7.3px;height:4.4px;background:#5b5b5b"></div><div style="left:168.68px;top:27.60px;width:7.3px;height:4.4px;background:#5b5b5b"></div><div style="left:178.01px;top:27.60px;width:7.3px;height:4.4px;background:#5b5b5b"></div><div style="left:188.95px;top:27.60px;width:7.3px;height:4.4px;background:#c9c9c9"></div><div style="left:196.69px;top:27.60px;width:7.3px;height:4.4px;background:#5b5b5b"></div><div style="left:206.03px;top:27.60px;width:7.3px;height:4.4px;background:#5b5b5b"></div><div style="left:215.36px;top:27.60px;width:7.3px;height:4.4px;background:#5b5b5b"></div><div style="left:224.70px;top:27.60px;width:7.3px;height:4.4px;background:#5b5b5b"></div><div style="left:234.04px;top:27.60px;width:7.3px;height:4.4px;background:#5b5b5b"></div><div style="left:243.38px;top:27.60px;width:7.3px;height:4.4px;background:#5b5b5b"></div><div style="left:252.71px;top:27.60px;width:7.3px;height:4.4px;background:#5b5b5b"></div><div style="left:0.60px;top:33.55px;width:7.3px;height:4.4px;background:#5b5b5b"></div><div style="left:9.94px;top:33.55px;width:7.3px;height:4.4px;background:#5b5b5b"></div><div style="left:19.28px;top:33.55px;width:7.3px;height:4.4px;background:#5b5b5b"></div><div style="left:28.61px;top:33.55px;width:7.3px;height:4.4px;background:#5b5b5b"></div><div style="left:37.95px;top:33.55px;width:7.3px;height:4.4px;background:#b0b0b0"></div><div style="left:47.29px;top:33.55px;width:7.3px;height:4.4px;background:#5b5b5b"></div><div style="left:56.63px;top:33.55px;width:7.3px;height:4.4px;background:#5b5b5b"></div><div style="left:65.96px;top:33.55px;width:7.3px;height:4.4px;background:#5b5b5b"></div><div style="left:75.30px;top:33.55px;width:7.3px;height:4.4px;background:#5b5b5b"></div><div style="left:84.64px;top:33.55px;width:7.3px;height:4.4px;background:#5b5b5b"></div><div style="left:93.97px;top:33.55px;width:7.3px;height:4.4px;background:#5b5b5b"></div><div style="left:103.31px;top:33.55px;width:7.3px;height:4.4px;background:#5b5b5b"></div><div style="left:112.65px;top:33.55px;width:7.3px;height:4.4px;background:#b0b0b0"></div><div style="left:121.99px;top:33.55px;width:7.3px;height:4.4px;background:#5b5b5b"></div><div style="left:131.32px;top:33.55px;width:7.3px;height:4.4px;background:#5b5b5b"></div><div style="left:140.66px;top:33.55px;width:7.3px;height:4.4px;background:#5b5b5b"></div><div style="left:150.00px;top:33.55px;width:7.3px;height:4.4px;background:#5b5b5b"></div><div style="left:159.34px;top:33.55px;width:7.3px;height:4.4px;background:#5b5b5b"></div><div style="left:168.68px;top:33.55px;width:7.3px;height:4.4px;background:#5b5b5b"></div><div style="left:178.01px;top:33.55px;width:7.3px;height:4.4px;background:#5b5b5b"></div><div style="left:187.35px;top:33.55px;width:7.3px;height:4.4px;background:#b0b0b0"></div><div style="left:196.69px;top:33.55px;width:7.3px;height:4.4px;background:#5b5b5b"></div><div style="left:206.03px;top:33.55px;width:7.3px;height:4.4px;background:#5b5b5b"></div><div style="left:215.36px;top:33.55px;width:7.3px;height:4.4px;background:#5b5b5b"></div><div style="left:224.70px;top:33.55px;width:7.3px;height:4.4px;background:#5b5b5b"></div><div style="left:234.04px;top:33.55px;width:7.3px;height:4.4px;background:#5b5b5b"></div><div style="left:243.38px;top:33.55px;width:7.3px;height:4.4px;background:#5b5b5b"></div><div style="left:252.71px;top:33.55px;width:7.3px;height:4.4px;background:#5b5b5b"></div><div style="left:0.60px;top:39.50px;width:7.3px;height:4.4px;background:linear-gradient(90deg,#c4c4c4 45%,#6a6a6a 45%)"></div><div style="left:9.94px;top:39.50px;width:7.3px;height:4.4px;background:#5b5b5b"></div><div style="left:19.28px;top:39.50px;width:7.3px;height:4.4px;background:#c9c9c9"></div><div style="left:28.61px;top:39.50px;width:7.3px;height:4.4px;background:#c9c9c9"></div><div style="left:37.95px;top:39.50px;width:7.3px;height:4.4px;background:#c9c9c9"></div><div style="left:47.29px;top:39.50px;width:7.3px;height:4.4px;background:#c9c9c9"></div><div style="left:56.63px;top:39.50px;width:7.3px;height:4.4px;background:#c9c9c9"></div><div style="left:65.96px;top:39.50px;width:7.3px;height:4.4px;background:#c9c9c9"></div><div style="left:75.30px;top:39.50px;width:7.3px;height:4.4px;background:#5b5b5b"></div><div style="left:84.64px;top:39.50px;width:7.3px;height:4.4px;background:#c9c9c9"></div><div style="left:93.97px;top:39.50px;width:7.3px;height:4.4px;background:#c9c9c9"></div><div style="left:103.31px;top:39.50px;width:7.3px;height:4.4px;background:#c9c9c9"></div><div style="left:112.65px;top:39.50px;width:7.3px;height:4.4px;background:#c9c9c9"></div><div style="left:121.99px;top:39.50px;width:7.3px;height:4.4px;background:#c9c9c9"></div><div style="left:131.32px;top:39.50px;width:7.3px;height:4.4px;background:#c9c9c9"></div><div style="left:140.66px;top:39.50px;width:7.3px;height:4.4px;background:#5b5b5b"></div><div style="left:150.00px;top:39.50px;width:7.3px;height:4.4px;background:linear-gradient(90deg,#c4c4c4 45%,#6a6a6a 45%)"></div><div style="left:159.34px;top:39.50px;width:7.3px;height:4.4px;background:#5b5b5b"></div><div style="left:168.68px;top:39.50px;width:7.3px;height:4.4px;background:#c9c9c9"></div><div style="left:178.01px;top:39.50px;width:7.3px;height:4.4px;background:#c9c9c9"></div><div style="left:187.35px;top:39.50px;width:7.3px;height:4.4px;background:#c9c9c9"></div><div style="left:196.69px;top:39.50px;width:7.3px;height:4.4px;background:#c9c9c9"></div><div style="left:206.03px;top:39.50px;width:7.3px;height:4.4px;background:#c9c9c9"></div><div style="left:215.36px;top:39.50px;width:7.3px;height:4.4px;background:#c9c9c9"></div><div style="left:224.70px;top:39.50px;width:7.3px;height:4.4px;background:#5b5b5b"></div><div style="left:234.04px;top:39.50px;width:7.3px;height:4.4px;background:#c9c9c9"></div><div style="left:243.38px;top:39.50px;width:7.3px;height:4.4px;background:#c9c9c9"></div><div style="left:252.71px;top:39.50px;width:7.3px;height:4.4px;background:#c9c9c9"></div><div style="left:0.60px;top:45.45px;width:7.3px;height:4.4px;background:#5b5b5b"></div><div style="left:9.94px;top:45.45px;width:7.3px;height:4.4px;background:#c9c9c9"></div><div style="left:19.28px;top:45.45px;width:7.3px;height:4.4px;background:#5b5b5b"></div><div style="left:28.61px;top:45.45px;width:7.3px;height:4.4px;background:#5b5b5b"></div><div style="left:37.95px;top:45.45px;width:7.3px;height:4.4px;background:#5b5b5b"></div><div style="left:47.29px;top:45.45px;width:7.3px;height:4.4px;background:#5b5b5b"></div><div style="left:56.63px;top:45.45px;width:7.3px;height:4.4px;background:#5b5b5b"></div><div style="left:65.96px;top:45.45px;width:7.3px;height:4.4px;background:#5b5b5b"></div><div style="left:75.30px;top:45.45px;width:7.3px;height:4.4px;background:#c9c9c9"></div><div style="left:84.64px;top:45.45px;width:7.3px;height:4.4px;background:#5b5b5b"></div><div style="left:93.97px;top:45.45px;width:7.3px;height:4.4px;background:#5b5b5b"></div><div style="left:103.31px;top:45.45px;width:7.3px;height:4.4px;background:#5b5b5b"></div><div style="left:112.65px;top:45.45px;width:7.3px;height:4.4px;background:#5b5b5b"></div><div style="left:121.99px;top:45.45px;width:7.3px;height:4.4px;background:#5b5b5b"></div><div style="left:131.32px;top:45.45px;width:7.3px;height:4.4px;background:#5b5b5b"></div><div style="left:140.66px;top:45.45px;width:7.3px;height:4.4px;background:#c9c9c9"></div><div style="left:150.00px;top:45.45px;width:7.3px;height:4.4px;background:#5b5b5b"></div><div style="left:159.34px;top:45.45px;width:7.3px;height:4.4px;background:#c9c9c9"></div><div style="left:168.68px;top:45.45px;width:7.3px;height:4.4px;background:#5b5b5b"></div><div style="left:178.01px;top:45.45px;width:7.3px;height:4.4px;background:#5b5b5b"></div><div style="left:187.35px;top:45.45px;width:7.3px;height:4.4px;background:#5b5b5b"></div><div style="left:196.69px;top:45.45px;width:7.3px;height:4.4px;background:#5b5b5b"></div><div style="left:206.03px;top:45.45px;width:7.3px;height:4.4px;background:#5b5b5b"></div><div style="left:215.36px;top:45.45px;width:7.3px;height:4.4px;background:#5b5b5b"></div><div style="left:224.70px;top:45.45px;width:7.3px;height:4.4px;background:#c9c9c9"></div><div style="left:234.04px;top:45.45px;width:7.3px;height:4.4px;background:#5b5b5b"></div><div style="left:243.38px;top:45.45px;width:7.3px;height:4.4px;background:#5b5b5b"></div><div style="left:252.71px;top:45.45px;width:7.3px;height:4.4px;background:#5b5b5b"></div></div>
<div style="left:1044.4px;top:220px;width:262.5999999999999px;height:53.1px;background:#12c8cc;border-radius:3.5px;overflow:hidden;box-shadow:0 0 0 .8px #1e1e1e"><div class="t" style="left:4.3px;top:1.6px;font-size:9.4px;line-height:12px;color:#e9fcfc;-webkit-text-stroke:.22px #e9fcfc;letter-spacing:-0.38px">Free Fall Hi Hats</div><svg style="left:79.39999999999986px;top:3.4px;" width="8" height="8" viewBox="0 0 8 8"><g fill="none" stroke="#e9fcfc" stroke-width=".9"><ellipse cx="3.8" cy="3.2" rx="2.4" ry="2.3"/><path d="M.4 6.5 H7.4"/></g></svg><svg style="left:0;top:0" width="260" height="54"><path d="M0 33 H260" stroke="#b8f7f9" stroke-width="1"/><path d="M0 30.5 L2.5 33 L0 35.5Z" fill="#b8f7f9"/><path d="M19.0 29.0 L20.2 30.8 L24.2 32.5 L24.2 33.5 L20.2 35.2 L19.0 37.0Z" fill="#b8f7f9"/><path d="M37.6 27.8 L38.9 30.1 L45.6 32.5 L45.6 33.5 L38.9 35.9 L37.6 38.2Z" fill="#b8f7f9"/><path d="M47.0 29.1 L48.2 30.9 L52.2 32.5 L52.2 33.5 L48.2 35.1 L47.0 36.9Z" fill="#b8f7f9"/><path d="M56.3 28.8 L57.5 30.7 L61.5 32.5 L61.5 33.5 L57.5 35.3 L56.3 37.2Z" fill="#b8f7f9"/><path d="M65.7 29.0 L66.9 30.8 L70.9 32.5 L70.9 33.5 L66.9 35.2 L65.7 37.0Z" fill="#b8f7f9"/><path d="M75.0 29.1 L76.2 30.9 L80.2 32.5 L80.2 33.5 L76.2 35.1 L75.0 36.9Z" fill="#b8f7f9"/><path d="M93.7 28.8 L94.9 30.7 L98.9 32.5 L98.9 33.5 L94.9 35.3 L93.7 37.2Z" fill="#b8f7f9"/><path d="M112.4 27.8 L113.6 30.1 L120.4 32.5 L120.4 33.5 L113.6 35.9 L112.4 38.2Z" fill="#b8f7f9"/><path d="M131.0 28.3 L132.2 30.4 L136.2 32.5 L136.2 33.5 L132.2 35.6 L131.0 37.7Z" fill="#b8f7f9"/><path d="M140.4 28.4 L141.6 30.5 L145.6 32.5 L145.6 33.5 L141.6 35.5 L140.4 37.6Z" fill="#b8f7f9"/><path d="M149.7 28.4 L150.9 30.5 L154.9 32.5 L154.9 33.5 L150.9 35.5 L149.7 37.6Z" fill="#b8f7f9"/><path d="M168.4 29.0 L169.6 30.8 L173.6 32.5 L173.6 33.5 L169.6 35.2 L168.4 37.0Z" fill="#b8f7f9"/><path d="M187.1 28.7 L188.2 30.6 L192.2 32.5 L192.2 33.5 L188.2 35.4 L187.1 37.3Z" fill="#b8f7f9"/><path d="M196.4 28.9 L197.6 30.8 L201.6 32.5 L201.6 33.5 L197.6 35.2 L196.4 37.1Z" fill="#b8f7f9"/><path d="M205.7 29.0 L206.9 30.8 L210.9 32.5 L210.9 33.5 L206.9 35.2 L205.7 37.0Z" fill="#b8f7f9"/><path d="M215.1 29.1 L216.3 30.9 L220.3 32.5 L220.3 33.5 L216.3 35.1 L215.1 36.9Z" fill="#b8f7f9"/><path d="M224.4 29.0 L225.6 30.8 L229.6 32.5 L229.6 33.5 L225.6 35.2 L224.4 37.0Z" fill="#b8f7f9"/><path d="M243.1 28.3 L244.3 30.4 L248.3 32.5 L248.3 33.5 L244.3 35.6 L243.1 37.7Z" fill="#b8f7f9"/></svg></div>
<div style="left:1044.4px;top:275.2px;width:262.5999999999999px;height:52.8px;background:#484848;border-radius:3.5px;overflow:hidden;box-shadow:0 0 0 .8px #1e1e1e"><div class="t" style="left:4.3px;top:1.6px;font-size:9.4px;line-height:12px;color:#7fe9d2;-webkit-text-stroke:.22px #7fe9d2;letter-spacing:-0.42px">Free Fall Reverse Noise</div><svg style="left:100.59999999999991px;top:3.4px;" width="13" height="8" viewBox="0 0 13 8"><g fill="none" stroke="#7fe9d2" stroke-width=".9"><ellipse cx="3.6" cy="3.2" rx="2.4" ry="2.3"/><ellipse cx="9.2" cy="3.2" rx="2.4" ry="2.3"/><path d="M.4 6.5 H12.6"/></g></svg><div style="left:36.9px;top:0;width:1px;height:52.8px;background:rgba(255,255,255,.045)"></div><div style="left:74.2px;top:0;width:1px;height:52.8px;background:rgba(255,255,255,.045)"></div><div style="left:111.6px;top:0;width:1px;height:52.8px;background:rgba(255,255,255,.045)"></div><div style="left:148.9px;top:0;width:1px;height:52.8px;background:rgba(255,255,255,.045)"></div><div style="left:186.2px;top:0;width:1px;height:52.8px;background:rgba(255,255,255,.045)"></div><div style="left:223.6px;top:0;width:1px;height:52.8px;background:rgba(255,255,255,.045)"></div><div style="left:260.9px;top:0;width:1px;height:52.8px;background:rgba(255,255,255,.045)"></div><svg style="left:0;top:0" width="260" height="54"><path d="M0 33.10000000000002 H260" stroke="#9c9c9c" stroke-width="1"/><path transform="translate(50.3 0)" d="M0.0 32.7 L0.5 32.7 L1.0 32.7 L1.5 32.7 L2.0 32.7 L2.5 32.7 L3.0 32.6 L3.5 32.4 L4.0 32.3 L4.5 32.3 L5.0 32.2 L5.5 32.4 L6.0 31.7 L6.5 32.1 L7.0 31.8 L7.5 31.8 L8.0 31.0 L8.5 31.8 L9.0 31.4 L9.5 30.9 L10.0 31.0 L10.5 30.6 L11.0 30.7 L11.5 31.1 L12.0 30.8 L12.5 29.5 L13.0 30.2 L13.5 30.1 L14.0 30.0 L14.5 29.1 L15.0 29.4 L15.5 29.1 L16.0 29.4 L16.5 29.3 L17.0 29.5 L17.5 28.3 L18.0 29.1 L18.5 26.9 L19.0 28.8 L19.5 28.0 L20.0 28.8 L20.5 25.8 L21.0 27.7 L21.5 28.2 L22.0 27.2 L22.5 28.3 L23.0 26.5 L23.5 27.4 L24.0 30.1 L24.5 32.5 L24.5 33.7 L24.0 37.2 L23.5 39.6 L23.0 38.4 L22.5 39.2 L22.0 39.6 L21.5 40.5 L21.0 38.5 L20.5 37.4 L20.0 39.5 L19.5 38.0 L19.0 38.0 L18.5 37.6 L18.0 38.6 L17.5 38.9 L17.0 38.7 L16.5 38.5 L16.0 38.0 L15.5 37.3 L15.0 37.7 L14.5 37.6 L14.0 37.0 L13.5 36.8 L13.0 36.7 L12.5 35.2 L12.0 36.6 L11.5 36.5 L11.0 36.0 L10.5 35.5 L10.0 35.0 L9.5 34.9 L9.0 35.0 L8.5 35.3 L8.0 34.6 L7.5 34.8 L7.0 34.3 L6.5 34.0 L6.0 33.9 L5.5 33.9 L5.0 34.1 L4.5 33.7 L4.0 33.6 L3.5 33.6 L3.0 33.5 L2.5 33.5 L2.0 33.5 L1.5 33.5 L1.0 33.5 L0.5 33.5 L0.0 33.5Z" fill="#9c9c9c" opacity="1"/><path transform="translate(200.1 0)" d="M0.0 32.7 L0.5 32.7 L1.0 32.7 L1.5 32.7 L2.0 32.7 L2.5 32.7 L3.0 32.7 L3.5 32.5 L4.0 32.4 L4.5 32.4 L5.0 32.3 L5.5 32.0 L6.0 32.2 L6.5 31.6 L7.0 32.0 L7.5 31.5 L8.0 31.8 L8.5 31.4 L9.0 31.6 L9.5 30.9 L10.0 31.4 L10.5 31.0 L11.0 30.4 L11.5 30.3 L12.0 30.2 L12.5 30.9 L13.0 29.5 L13.5 30.4 L14.0 28.8 L14.5 29.4 L15.0 28.7 L15.5 28.8 L16.0 29.7 L16.5 29.0 L17.0 28.9 L17.5 29.0 L18.0 28.5 L18.5 28.2 L19.0 28.9 L19.5 27.7 L20.0 26.5 L20.5 26.7 L21.0 28.8 L21.5 28.1 L22.0 28.5 L22.5 28.0 L23.0 24.9 L23.5 24.8 L24.0 29.7 L24.5 32.4 L24.5 33.5 L24.0 37.2 L23.5 38.3 L23.0 40.5 L22.5 40.2 L22.0 38.1 L21.5 40.2 L21.0 40.9 L20.5 39.9 L20.0 40.3 L19.5 40.0 L19.0 39.7 L18.5 38.5 L18.0 36.8 L17.5 38.0 L17.0 37.1 L16.5 38.5 L16.0 38.1 L15.5 37.0 L15.0 35.9 L14.5 37.5 L14.0 36.1 L13.5 35.7 L13.0 35.4 L12.5 36.2 L12.0 35.7 L11.5 36.2 L11.0 35.3 L10.5 34.9 L10.0 35.1 L9.5 35.1 L9.0 34.7 L8.5 34.9 L8.0 34.8 L7.5 35.0 L7.0 34.8 L6.5 34.0 L6.0 34.1 L5.5 34.0 L5.0 33.8 L4.5 33.8 L4.0 33.8 L3.5 33.7 L3.0 33.6 L2.5 33.5 L2.0 33.5 L1.5 33.5 L1.0 33.5 L0.5 33.5 L0.0 33.5Z" fill="#9c9c9c" opacity="1"/></svg></div>
<div style="left:1044.4px;top:330.7px;width:262.5999999999999px;height:138.6px;background:#14c75c;border-radius:3.5px;overflow:hidden;box-shadow:0 0 0 .8px #1e1e1e"><div class="t" style="left:4.3px;top:1.6px;font-size:9.4px;line-height:12px;color:#e9fcf0;-webkit-text-stroke:.22px #e9fcf0;letter-spacing:-0.41px">Free Fall Synth Bass 01</div><svg style="left:105.59999999999991px;top:3.4px;" width="8" height="8" viewBox="0 0 8 8"><g fill="none" stroke="#e9fcf0" stroke-width=".9"><ellipse cx="3.8" cy="3.2" rx="2.4" ry="2.3"/><path d="M.4 6.5 H7.4"/></g></svg><svg style="left:0;top:0" width="260" height="139"><path d="M0 75.60000000000002 H260" stroke="#a9f5c9" stroke-width="1"/><path d="M0.2 54.1 L0.7 52.2 L1.2 54.6 L1.8 56.4 L2.3 54.8 L2.8 57.5 L3.3 57.9 L3.8 55.7 L4.4 54.9 L4.9 56.6 L5.4 59.0 L5.9 57.9 L6.4 59.6 L7.0 60.5 L7.5 59.4 L8.0 59.5 L8.5 59.9 L9.0 60.5 L9.6 59.0 L10.1 60.0 L10.6 62.0 L10.6 94.0 L10.1 96.6 L9.6 98.5 L9.0 95.7 L8.5 98.1 L8.0 98.5 L7.5 100.1 L7.0 98.7 L6.4 98.0 L5.9 97.6 L5.4 97.8 L4.9 101.6 L4.4 104.2 L3.8 99.3 L3.3 104.4 L2.8 101.9 L2.3 105.4 L1.8 104.2 L1.2 105.2 L0.7 105.0 L0.2 106.1Z" fill="#a9f5c9" opacity="1"/><path d="M0.20 29.1V129.6M1.34 46.5V120.5M2.54 35.3V115.0M4.02 37.0V109.4M5.13 37.4V114.6M6.62 46.2V109.0M7.93 42.5V110.7M8.98 49.3V118.0M10.36 53.2V109.1" stroke="#a9f5c9" stroke-width="1.05" fill="none" opacity=".95"/><path d="M18.9 56.0 L19.4 55.8 L19.9 54.8 L20.4 53.9 L21.0 54.7 L21.5 56.1 L22.0 57.1 L22.5 55.2 L23.0 55.3 L23.6 57.7 L24.1 57.1 L24.6 56.1 L25.1 59.3 L25.6 59.4 L26.2 60.7 L26.7 59.3 L27.2 59.6 L27.7 60.5 L28.2 60.7 L28.8 59.9 L29.3 62.5 L29.3 97.0 L28.8 94.3 L28.2 96.6 L27.7 98.9 L27.2 96.7 L26.7 96.6 L26.2 96.3 L25.6 97.8 L25.1 100.8 L24.6 98.4 L24.1 98.3 L23.6 103.0 L23.0 99.8 L22.5 100.9 L22.0 105.4 L21.5 101.3 L21.0 101.2 L20.4 101.8 L19.9 102.7 L19.4 105.6 L18.9 107.7Z" fill="#a9f5c9" opacity="1"/><path d="M18.88 29.1V129.6M20.28 43.8V113.0M21.65 34.4V112.4M23.13 37.0V116.6M24.34 49.5V109.1M25.82 48.9V116.2M26.95 42.2V114.3M28.10 51.7V115.0M29.13 52.0V112.6" stroke="#a9f5c9" stroke-width="1.05" fill="none" opacity=".95"/><path d="M37.6 53.3 L38.1 52.2 L38.6 56.9 L39.1 55.2 L39.6 56.8 L40.2 55.4 L40.7 56.7 L41.2 54.5 L41.7 56.1 L42.2 58.7 L42.8 59.6 L43.3 57.2 L43.8 60.2 L44.3 58.9 L44.8 59.8 L45.4 61.1 L45.9 59.1 L46.4 59.5 L46.9 59.7 L47.4 61.6 L48.0 60.2 L48.0 96.8 L47.4 96.5 L46.9 98.1 L46.4 97.7 L45.9 99.2 L45.4 98.0 L44.8 100.9 L44.3 100.1 L43.8 100.1 L43.3 102.4 L42.8 102.7 L42.2 98.4 L41.7 102.0 L41.2 103.0 L40.7 104.9 L40.2 100.8 L39.6 102.8 L39.1 101.4 L38.6 103.2 L38.1 103.3 L37.6 104.3Z" fill="#a9f5c9" opacity="1"/><path d="M37.55 29.1V129.6M38.76 34.9V121.7M40.04 38.9V114.8M41.34 40.6V110.4M42.66 36.4V119.4M44.02 46.4V116.8M45.31 47.0V117.2M46.35 44.0V107.4M47.65 48.8V109.0" stroke="#a9f5c9" stroke-width="1.05" fill="none" opacity=".95"/><path d="M56.2 53.9 L56.7 52.2 L57.3 56.9 L57.8 54.2 L58.3 56.8 L58.8 55.0 L59.3 54.4 L59.9 55.8 L60.4 57.2 L60.9 55.6 L61.4 58.1 L61.9 58.7 L62.5 58.4 L63.0 57.5 L63.5 57.5 L64.0 60.7 L64.5 60.7 L65.1 60.6 L65.6 60.7 L66.1 60.0 L66.6 61.6 L66.6 93.3 L66.1 97.9 L65.6 95.4 L65.1 97.4 L64.5 95.9 L64.0 97.6 L63.5 97.2 L63.0 100.0 L62.5 101.2 L61.9 98.0 L61.4 100.9 L60.9 103.1 L60.4 103.3 L59.9 100.3 L59.3 101.5 L58.8 102.7 L58.3 106.1 L57.8 102.3 L57.3 103.4 L56.7 103.6 L56.2 106.5Z" fill="#a9f5c9" opacity="1"/><path d="M56.23 29.1V129.6M57.24 33.3V111.3M58.60 39.7V114.0M59.99 49.4V111.1M61.22 50.3V118.9M62.34 49.5V108.9M63.65 46.6V115.0M64.98 43.2V118.0M66.32 52.2V111.7" stroke="#a9f5c9" stroke-width="1.05" fill="none" opacity=".95"/><path d="M149.6 53.9 L150.1 50.6 L150.6 53.3 L151.2 51.5 L151.7 52.4 L152.2 53.9 L152.7 51.9 L153.2 52.2 L153.8 56.4 L154.3 54.5 L154.8 56.1 L155.3 54.3 L155.8 54.5 L156.4 56.2 L156.9 56.3 L157.4 57.1 L157.9 59.2 L158.4 56.7 L159.0 58.8 L159.5 60.0 L160.0 58.5 L160.0 95.9 L159.5 99.2 L159.0 99.2 L158.4 100.7 L157.9 101.0 L157.4 100.6 L156.9 101.8 L156.4 99.0 L155.8 101.0 L155.3 103.5 L154.8 102.7 L154.3 105.4 L153.8 103.1 L153.2 105.4 L152.7 101.9 L152.2 107.0 L151.7 107.4 L151.2 106.4 L150.6 105.8 L150.1 105.1 L149.6 107.8Z" fill="#a9f5c9" opacity="1"/><path d="M149.60 23.6V133.6M150.64 36.2V120.9M152.03 36.9V113.0M153.43 45.6V122.5M154.52 42.2V121.6M155.59 46.2V117.4M156.95 37.1V118.7M158.42 44.0V121.0M159.46 48.9V115.2" stroke="#a9f5c9" stroke-width="1.05" fill="none" opacity=".95"/><path d="M168.3 50.0 L168.8 51.6 L169.3 51.8 L169.8 53.2 L170.4 51.0 L170.9 51.7 L171.4 53.7 L171.9 55.7 L172.4 54.7 L173.0 57.2 L173.5 55.5 L174.0 54.6 L174.5 56.4 L175.0 58.6 L175.6 57.6 L176.1 56.0 L176.6 58.2 L177.1 58.8 L177.6 57.4 L178.2 60.0 L178.7 59.4 L178.7 98.6 L178.2 95.7 L177.6 97.7 L177.1 99.9 L176.6 97.0 L176.1 98.2 L175.6 102.5 L175.0 100.8 L174.5 102.3 L174.0 102.1 L173.5 101.7 L173.0 105.7 L172.4 104.1 L171.9 104.2 L171.4 105.0 L170.9 108.2 L170.4 103.7 L169.8 108.6 L169.3 105.5 L168.8 109.8 L168.3 109.0Z" fill="#a9f5c9" opacity="1"/><path d="M168.28 23.6V133.6M169.34 30.1V113.6M170.44 41.2V122.1M171.60 40.2V120.4M172.65 35.1V113.2M173.91 44.3V113.5M175.17 42.7V115.1M176.38 42.6V111.7M177.48 42.5V116.9" stroke="#a9f5c9" stroke-width="1.05" fill="none" opacity=".95"/><path d="M186.9 49.4 L187.5 49.8 L188.0 50.9 L188.5 50.5 L189.0 53.9 L189.5 54.8 L190.1 51.9 L190.6 55.5 L191.1 55.8 L191.6 53.6 L192.1 54.2 L192.7 56.4 L193.2 58.4 L193.7 56.0 L194.2 55.3 L194.8 57.6 L195.3 58.1 L195.8 59.7 L196.3 60.4 L196.8 59.2 L197.3 59.5 L197.3 95.0 L196.8 97.3 L196.3 95.5 L195.8 96.2 L195.3 99.9 L194.8 100.8 L194.2 97.9 L193.7 102.9 L193.2 99.5 L192.7 102.8 L192.1 100.1 L191.6 102.4 L191.1 100.9 L190.6 105.4 L190.1 102.2 L189.5 108.4 L189.0 108.5 L188.5 105.0 L188.0 109.0 L187.5 105.5 L186.9 108.8Z" fill="#a9f5c9" opacity="1"/><path d="M186.95 23.6V133.6M188.04 40.6V124.8M189.54 29.5V113.8M190.57 30.4V118.1M191.95 42.4V117.4M193.21 42.1V118.3M194.22 39.1V120.7M195.31 44.0V118.7M196.51 48.9V111.0" stroke="#a9f5c9" stroke-width="1.05" fill="none" opacity=".95"/><path d="M205.6 53.9 L206.1 50.1 L206.7 50.2 L207.2 53.0 L207.7 52.9 L208.2 51.9 L208.7 51.8 L209.3 52.9 L209.8 55.1 L210.3 53.4 L210.8 54.3 L211.3 56.4 L211.9 58.2 L212.4 56.9 L212.9 57.8 L213.4 57.2 L213.9 56.3 L214.5 59.1 L215.0 58.7 L215.5 59.8 L216.0 59.3 L216.0 97.6 L215.5 99.6 L215.0 97.9 L214.5 99.1 L213.9 99.8 L213.4 98.0 L212.9 100.8 L212.4 97.9 L211.9 100.3 L211.3 103.0 L210.8 103.9 L210.3 104.0 L209.8 105.9 L209.3 106.0 L208.7 106.1 L208.2 103.5 L207.7 108.9 L207.2 106.9 L206.7 107.7 L206.1 108.8 L205.6 110.8Z" fill="#a9f5c9" opacity="1"/><path d="M205.62 23.6V133.6M207.01 26.9V113.5M208.31 32.9V115.9M209.51 45.9V114.5M210.70 46.2V114.5M212.16 40.5V117.0M213.64 42.0V122.1M214.96 40.1V110.0" stroke="#a9f5c9" stroke-width="1.05" fill="none" opacity=".95"/></svg></div>
<div style="left:1044.4px;top:471.7px;width:262.5999999999999px;height:83.5px;background:#484848;border-radius:3.5px;overflow:hidden;box-shadow:0 0 0 .8px #1e1e1e"><div class="t" style="left:4.3px;top:1.6px;font-size:9.4px;line-height:12px;color:#5fe07e;-webkit-text-stroke:.22px #5fe07e;letter-spacing:-0.39px">Free Fall Synth Lead</div><svg style="left:88.5px;top:3.4px;" width="13" height="8" viewBox="0 0 13 8"><g fill="none" stroke="#5fe07e" stroke-width=".9"><ellipse cx="3.6" cy="3.2" rx="2.4" ry="2.3"/><ellipse cx="9.2" cy="3.2" rx="2.4" ry="2.3"/><path d="M.4 6.5 H12.6"/></g></svg><div style="left:36.9px;top:0;width:1px;height:83.5px;background:rgba(255,255,255,.045)"></div><div style="left:74.2px;top:0;width:1px;height:83.5px;background:rgba(255,255,255,.045)"></div><div style="left:111.6px;top:0;width:1px;height:83.5px;background:rgba(255,255,255,.045)"></div><div style="left:148.9px;top:0;width:1px;height:83.5px;background:rgba(255,255,255,.045)"></div><div style="left:186.2px;top:0;width:1px;height:83.5px;background:rgba(255,255,255,.045)"></div><div style="left:223.6px;top:0;width:1px;height:83.5px;background:rgba(255,255,255,.045)"></div><div style="left:260.9px;top:0;width:1px;height:83.5px;background:rgba(255,255,255,.045)"></div><svg style="left:0;top:0" width="260" height="84"><path d="M0 30.6 H260" stroke="#9c9c9c" stroke-width="1"/><path transform="translate(37.0 0)" d="M0.0 30.2 L0.7 27.5 L1.4 25.4 L2.1 25.6 L2.8 26.2 L3.5 26.2 L4.2 25.4 L4.9 25.4 L5.6 25.8 L6.3 26.1 L7.0 25.7 L7.7 25.2 L8.4 25.9 L9.1 25.7 L9.8 25.8 L10.5 25.3 L11.2 25.5 L11.9 26.1 L12.6 25.3 L13.3 25.5 L14.0 25.6 L14.7 25.5 L15.4 25.4 L16.1 25.7 L16.8 26.3 L17.5 27.0 L18.2 28.8 L18.9 30.0 L18.9 31.1 L18.2 32.6 L17.5 33.7 L16.8 35.3 L16.1 35.2 L15.4 35.4 L14.7 35.5 L14.0 35.3 L13.3 35.3 L12.6 35.8 L11.9 35.8 L11.2 35.2 L10.5 35.5 L9.8 35.1 L9.1 35.3 L8.4 35.3 L7.7 35.2 L7.0 35.9 L6.3 35.4 L5.6 35.1 L4.9 35.2 L4.2 35.9 L3.5 35.0 L2.8 35.6 L2.1 35.4 L1.4 35.7 L0.7 33.4 L0.0 31.0Z" fill="#9c9c9c" opacity="1"/><path transform="translate(73.9 0)" d="M0.0 30.2 L0.7 28.0 L1.4 26.4 L2.1 26.2 L2.8 26.1 L3.5 26.2 L4.2 25.9 L4.9 26.3 L5.6 26.5 L6.3 26.4 L7.0 25.7 L7.7 25.9 L8.4 26.3 L9.1 26.2 L9.8 25.6 L10.5 25.8 L11.2 25.6 L11.9 26.4 L12.6 26.1 L13.3 25.9 L14.0 26.4 L14.7 26.4 L15.4 26.2 L16.1 26.1 L16.8 26.2 L17.5 26.2 L18.2 25.8 L18.9 25.6 L19.6 26.1 L20.3 26.2 L21.0 26.2 L21.7 25.6 L22.4 25.7 L23.1 26.1 L23.8 26.1 L24.5 26.1 L25.2 25.9 L25.9 26.2 L26.6 26.1 L27.3 25.8 L28.0 27.5 L28.7 28.9 L29.4 30.0 L29.4 31.2 L28.7 32.5 L28.0 34.0 L27.3 35.2 L26.6 34.8 L25.9 35.2 L25.2 35.4 L24.5 35.1 L23.8 35.2 L23.1 35.4 L22.4 35.5 L21.7 34.7 L21.0 35.3 L20.3 35.5 L19.6 35.6 L18.9 35.2 L18.2 35.0 L17.5 35.2 L16.8 35.3 L16.1 34.8 L15.4 35.0 L14.7 35.4 L14.0 34.9 L13.3 35.5 L12.6 35.6 L11.9 35.5 L11.2 35.0 L10.5 35.2 L9.8 35.1 L9.1 35.1 L8.4 35.1 L7.7 35.0 L7.0 35.3 L6.3 35.5 L5.6 34.7 L4.9 35.2 L4.2 35.3 L3.5 35.1 L2.8 35.5 L2.1 35.3 L1.4 35.1 L0.7 33.1 L0.0 31.0Z" fill="#9c9c9c" opacity="1"/><path transform="translate(111.6 0)" d="M0.0 30.2 L0.7 27.9 L1.4 25.4 L2.1 25.3 L2.8 25.4 L3.5 26.2 L4.2 25.6 L4.9 25.9 L5.6 25.3 L6.3 25.8 L7.0 25.3 L7.7 26.1 L8.4 25.8 L9.1 25.2 L9.8 25.7 L10.5 25.4 L11.2 25.4 L11.9 25.9 L12.6 25.6 L13.3 25.9 L14.0 25.8 L14.7 26.0 L15.4 25.8 L16.1 25.4 L16.8 26.0 L17.5 26.3 L18.2 28.0 L18.9 29.1 L18.9 32.1 L18.2 33.6 L17.5 34.5 L16.8 35.3 L16.1 35.6 L15.4 35.5 L14.7 35.4 L14.0 35.7 L13.3 35.3 L12.6 36.0 L11.9 35.2 L11.2 36.0 L10.5 35.7 L9.8 35.1 L9.1 35.6 L8.4 35.1 L7.7 35.9 L7.0 35.9 L6.3 35.9 L5.6 35.2 L4.9 35.7 L4.2 35.6 L3.5 35.3 L2.8 35.5 L2.1 36.0 L1.4 36.0 L0.7 33.6 L0.0 31.0Z" fill="#9c9c9c" opacity="1"/><path transform="translate(149.0 0)" d="M0.0 30.2 L0.7 27.2 L1.4 24.8 L2.1 25.6 L2.8 25.6 L3.5 25.2 L4.2 25.2 L4.9 25.7 L5.6 25.7 L6.3 24.6 L7.0 25.1 L7.7 24.8 L8.4 25.0 L9.1 25.6 L9.8 24.8 L10.5 25.1 L11.2 25.1 L11.9 25.7 L12.6 25.5 L13.3 25.2 L14.0 25.7 L14.7 24.6 L15.4 25.0 L16.1 25.6 L16.8 25.6 L17.5 24.8 L18.2 25.1 L18.9 25.4 L19.6 25.7 L20.3 25.4 L21.0 25.6 L21.7 25.2 L22.4 25.5 L23.1 25.5 L23.8 24.6 L24.5 24.7 L25.2 25.2 L25.9 25.5 L26.6 25.4 L27.3 24.8 L28.0 24.7 L28.7 25.2 L29.4 25.7 L30.1 25.6 L30.8 25.1 L31.5 25.3 L32.2 25.4 L32.9 25.1 L33.6 24.6 L34.3 25.3 L35.0 25.2 L35.7 25.6 L36.4 25.4 L37.1 25.4 L37.8 24.6 L38.5 24.9 L39.2 25.7 L39.9 25.0 L40.6 25.0 L41.3 25.2 L42.0 25.3 L42.7 25.0 L43.4 25.0 L44.1 24.6 L44.8 25.5 L45.5 25.0 L46.2 25.4 L46.9 24.7 L47.6 25.6 L48.3 24.6 L49.0 24.7 L49.7 25.2 L50.4 24.8 L51.1 24.9 L51.8 25.6 L52.5 24.6 L53.2 25.1 L53.9 25.4 L54.6 25.2 L55.3 25.6 L56.0 25.3 L56.7 24.8 L57.4 25.2 L58.1 24.8 L58.8 25.0 L59.5 25.6 L60.2 25.1 L60.9 25.7 L61.6 25.1 L62.3 25.5 L63.0 25.3 L63.7 25.7 L64.4 25.0 L65.1 25.6 L65.8 24.7 L66.5 25.6 L67.2 25.5 L67.9 24.8 L68.6 25.5 L69.3 25.1 L70.0 25.2 L70.7 24.6 L71.4 24.9 L72.1 25.2 L72.8 24.9 L73.5 24.8 L74.2 25.4 L74.9 25.4 L75.6 25.2 L76.3 24.6 L77.0 25.0 L77.7 24.7 L78.4 24.6 L79.1 24.7 L79.8 25.1 L80.5 24.8 L81.2 25.1 L81.9 25.2 L82.6 25.1 L83.3 25.5 L84.0 24.6 L84.7 25.2 L85.4 25.1 L86.1 25.4 L86.8 25.4 L87.5 25.3 L88.2 25.4 L88.9 24.8 L89.6 25.4 L90.3 25.4 L91.0 25.3 L91.7 24.7 L92.4 25.4 L93.1 24.8 L93.8 25.0 L94.5 24.8 L95.2 25.4 L95.9 25.7 L96.6 24.8 L97.3 25.0 L98.0 25.0 L98.7 24.6 L99.4 24.8 L100.1 25.4 L100.8 24.7 L101.5 24.6 L102.2 24.8 L102.9 25.5 L103.6 24.9 L104.3 24.8 L105.0 24.8 L105.7 25.1 L106.4 25.5 L107.1 24.9 L107.8 24.9 L108.5 25.5 L109.2 24.9 L109.9 25.5 L110.6 25.4 L111.3 24.6 L112.0 24.8 L112.0 36.4 L111.3 36.0 L110.6 36.2 L109.9 36.2 L109.2 35.8 L108.5 36.4 L107.8 36.6 L107.1 35.8 L106.4 35.6 L105.7 36.0 L105.0 35.8 L104.3 35.9 L103.6 36.2 L102.9 35.7 L102.2 35.9 L101.5 36.3 L100.8 36.1 L100.1 35.7 L99.4 36.4 L98.7 36.4 L98.0 35.8 L97.3 35.9 L96.6 36.1 L95.9 35.9 L95.2 35.7 L94.5 35.6 L93.8 35.6 L93.1 36.6 L92.4 35.6 L91.7 36.4 L91.0 36.1 L90.3 35.8 L89.6 36.4 L88.9 35.8 L88.2 36.5 L87.5 36.1 L86.8 36.3 L86.1 35.8 L85.4 35.9 L84.7 36.4 L84.0 36.2 L83.3 35.9 L82.6 35.6 L81.9 35.8 L81.2 36.5 L80.5 35.6 L79.8 36.2 L79.1 36.0 L78.4 36.1 L77.7 36.4 L77.0 35.9 L76.3 36.1 L75.6 36.2 L74.9 35.9 L74.2 36.5 L73.5 36.1 L72.8 36.5 L72.1 35.8 L71.4 36.5 L70.7 35.7 L70.0 36.6 L69.3 35.7 L68.6 36.5 L67.9 36.4 L67.2 36.4 L66.5 36.4 L65.8 36.5 L65.1 36.1 L64.4 35.7 L63.7 35.7 L63.0 36.0 L62.3 35.9 L61.6 36.0 L60.9 36.5 L60.2 36.5 L59.5 35.7 L58.8 36.4 L58.1 36.0 L57.4 35.9 L56.7 35.7 L56.0 35.8 L55.3 35.9 L54.6 35.9 L53.9 36.5 L53.2 35.8 L52.5 35.9 L51.8 36.0 L51.1 35.8 L50.4 35.7 L49.7 35.8 L49.0 36.1 L48.3 35.6 L47.6 35.8 L46.9 36.3 L46.2 36.2 L45.5 36.5 L44.8 36.4 L44.1 36.5 L43.4 35.9 L42.7 35.8 L42.0 36.0 L41.3 35.9 L40.6 36.3 L39.9 35.7 L39.2 35.8 L38.5 35.8 L37.8 35.8 L37.1 36.1 L36.4 35.9 L35.7 36.3 L35.0 36.1 L34.3 35.8 L33.6 35.9 L32.9 35.6 L32.2 36.5 L31.5 36.1 L30.8 36.4 L30.1 36.3 L29.4 36.0 L28.7 36.0 L28.0 36.1 L27.3 35.5 L26.6 36.0 L25.9 36.4 L25.2 36.0 L24.5 36.0 L23.8 36.1 L23.1 35.7 L22.4 35.6 L21.7 36.0 L21.0 35.9 L20.3 35.5 L19.6 35.7 L18.9 35.9 L18.2 36.5 L17.5 36.2 L16.8 36.0 L16.1 36.5 L15.4 36.4 L14.7 36.1 L14.0 36.1 L13.3 36.4 L12.6 35.7 L11.9 35.7 L11.2 35.6 L10.5 35.7 L9.8 35.8 L9.1 35.8 L8.4 35.8 L7.7 35.9 L7.0 35.7 L6.3 36.3 L5.6 35.7 L4.9 36.2 L4.2 36.2 L3.5 35.9 L2.8 35.8 L2.1 36.2 L1.4 36.0 L0.7 33.6 L0.0 31.0Z" fill="#9c9c9c" opacity="1"/><path d="M0 65.6 H260" stroke="#9c9c9c" stroke-width="1"/><path transform="translate(37.0 0)" d="M0.0 65.2 L0.7 62.9 L1.4 60.7 L2.1 60.5 L2.8 61.1 L3.5 60.7 L4.2 60.8 L4.9 60.2 L5.6 60.7 L6.3 61.0 L7.0 60.3 L7.7 60.8 L8.4 60.4 L9.1 60.8 L9.8 60.7 L10.5 60.9 L11.2 60.5 L11.9 60.9 L12.6 60.4 L13.3 60.5 L14.0 60.2 L14.7 60.4 L15.4 60.6 L16.1 61.2 L16.8 61.3 L17.5 62.1 L18.2 63.5 L18.9 65.0 L18.9 66.2 L18.2 67.5 L17.5 68.9 L16.8 70.5 L16.1 70.6 L15.4 70.9 L14.7 70.2 L14.0 70.2 L13.3 70.1 L12.6 70.6 L11.9 70.7 L11.2 70.1 L10.5 70.2 L9.8 70.3 L9.1 70.6 L8.4 70.1 L7.7 70.6 L7.0 70.7 L6.3 70.2 L5.6 70.2 L4.9 70.9 L4.2 70.4 L3.5 70.7 L2.8 70.9 L2.1 70.4 L1.4 70.5 L0.7 68.5 L0.0 66.0Z" fill="#9c9c9c" opacity="1"/><path transform="translate(73.9 0)" d="M0.0 65.2 L0.7 63.2 L1.4 61.1 L2.1 61.3 L2.8 61.1 L3.5 61.2 L4.2 60.9 L4.9 61.2 L5.6 61.3 L6.3 61.3 L7.0 60.9 L7.7 61.0 L8.4 60.9 L9.1 61.4 L9.8 60.9 L10.5 60.8 L11.2 61.4 L11.9 60.7 L12.6 60.8 L13.3 61.0 L14.0 61.4 L14.7 60.7 L15.4 60.6 L16.1 61.0 L16.8 61.4 L17.5 61.3 L18.2 61.5 L18.9 61.0 L19.6 60.7 L20.3 60.9 L21.0 61.5 L21.7 61.3 L22.4 61.4 L23.1 60.7 L23.8 60.6 L24.5 60.8 L25.2 60.9 L25.9 61.2 L26.6 60.7 L27.3 61.0 L28.0 62.7 L28.7 63.8 L29.4 65.0 L29.4 66.1 L28.7 67.4 L28.0 68.5 L27.3 69.9 L26.6 69.9 L25.9 69.9 L25.2 70.0 L24.5 70.1 L23.8 70.0 L23.1 69.7 L22.4 70.5 L21.7 70.4 L21.0 70.4 L20.3 70.3 L19.6 70.3 L18.9 69.7 L18.2 70.5 L17.5 70.2 L16.8 70.4 L16.1 69.8 L15.4 70.0 L14.7 70.2 L14.0 70.5 L13.3 70.3 L12.6 70.6 L11.9 69.7 L11.2 70.1 L10.5 69.8 L9.8 70.2 L9.1 70.0 L8.4 70.4 L7.7 70.4 L7.0 70.6 L6.3 70.5 L5.6 70.2 L4.9 70.4 L4.2 70.0 L3.5 70.3 L2.8 69.7 L2.1 70.0 L1.4 70.3 L0.7 68.3 L0.0 66.0Z" fill="#9c9c9c" opacity="1"/><path transform="translate(111.6 0)" d="M0.0 65.2 L0.7 62.5 L1.4 60.9 L2.1 60.5 L2.8 61.1 L3.5 60.5 L4.2 61.0 L4.9 61.0 L5.6 60.5 L6.3 60.2 L7.0 60.5 L7.7 60.6 L8.4 60.3 L9.1 60.3 L9.8 60.5 L10.5 60.9 L11.2 60.4 L11.9 60.8 L12.6 61.1 L13.3 60.4 L14.0 60.5 L14.7 61.2 L15.4 60.9 L16.1 61.0 L16.8 60.7 L17.5 61.6 L18.2 62.8 L18.9 64.4 L18.9 66.9 L18.2 68.1 L17.5 69.7 L16.8 71.0 L16.1 70.4 L15.4 70.8 L14.7 70.5 L14.0 70.1 L13.3 70.1 L12.6 70.9 L11.9 70.5 L11.2 71.0 L10.5 70.5 L9.8 70.8 L9.1 70.8 L8.4 70.9 L7.7 70.9 L7.0 70.3 L6.3 70.1 L5.6 70.1 L4.9 70.6 L4.2 70.6 L3.5 70.6 L2.8 70.5 L2.1 70.8 L1.4 70.8 L0.7 68.6 L0.0 66.0Z" fill="#9c9c9c" opacity="1"/><path transform="translate(149.0 0)" d="M0.0 65.2 L0.7 62.6 L1.4 59.6 L2.1 60.1 L2.8 60.5 L3.5 59.7 L4.2 59.7 L4.9 60.1 L5.6 60.4 L6.3 59.7 L7.0 59.8 L7.7 59.7 L8.4 59.9 L9.1 60.6 L9.8 60.1 L10.5 60.3 L11.2 60.5 L11.9 59.9 L12.6 60.3 L13.3 60.3 L14.0 60.1 L14.7 59.8 L15.4 60.4 L16.1 60.6 L16.8 60.1 L17.5 59.7 L18.2 59.8 L18.9 60.6 L19.6 60.6 L20.3 60.5 L21.0 60.6 L21.7 60.5 L22.4 59.9 L23.1 60.2 L23.8 60.0 L24.5 60.4 L25.2 60.2 L25.9 60.4 L26.6 60.4 L27.3 59.6 L28.0 59.9 L28.7 59.9 L29.4 59.9 L30.1 59.8 L30.8 59.9 L31.5 60.0 L32.2 60.6 L32.9 59.7 L33.6 59.6 L34.3 59.7 L35.0 60.0 L35.7 59.9 L36.4 59.8 L37.1 60.3 L37.8 59.7 L38.5 60.0 L39.2 60.2 L39.9 60.4 L40.6 60.0 L41.3 59.6 L42.0 60.1 L42.7 60.4 L43.4 60.0 L44.1 59.8 L44.8 60.5 L45.5 59.7 L46.2 60.6 L46.9 59.8 L47.6 60.2 L48.3 59.7 L49.0 60.1 L49.7 60.4 L50.4 60.7 L51.1 60.2 L51.8 60.0 L52.5 59.8 L53.2 60.1 L53.9 60.4 L54.6 59.8 L55.3 60.0 L56.0 60.4 L56.7 59.7 L57.4 60.0 L58.1 60.5 L58.8 59.9 L59.5 60.2 L60.2 59.8 L60.9 60.2 L61.6 60.7 L62.3 60.0 L63.0 60.5 L63.7 60.4 L64.4 60.1 L65.1 60.0 L65.8 60.1 L66.5 60.2 L67.2 60.6 L67.9 59.6 L68.6 60.5 L69.3 60.5 L70.0 60.3 L70.7 60.5 L71.4 60.6 L72.1 60.5 L72.8 60.5 L73.5 60.1 L74.2 60.1 L74.9 59.8 L75.6 60.6 L76.3 59.7 L77.0 60.7 L77.7 59.8 L78.4 59.7 L79.1 60.4 L79.8 60.2 L80.5 60.3 L81.2 60.6 L81.9 60.5 L82.6 60.2 L83.3 60.1 L84.0 60.1 L84.7 60.1 L85.4 60.0 L86.1 60.5 L86.8 60.0 L87.5 60.5 L88.2 59.9 L88.9 59.8 L89.6 60.4 L90.3 60.1 L91.0 60.7 L91.7 59.9 L92.4 60.3 L93.1 60.7 L93.8 59.8 L94.5 59.6 L95.2 60.2 L95.9 60.0 L96.6 60.5 L97.3 59.9 L98.0 60.1 L98.7 59.6 L99.4 60.3 L100.1 59.9 L100.8 60.4 L101.5 60.4 L102.2 60.0 L102.9 60.3 L103.6 60.6 L104.3 60.3 L105.0 60.0 L105.7 59.8 L106.4 59.6 L107.1 60.0 L107.8 60.0 L108.5 59.8 L109.2 59.6 L109.9 59.8 L110.6 60.2 L111.3 59.7 L112.0 60.2 L112.0 71.6 L111.3 70.7 L110.6 70.9 L109.9 70.6 L109.2 70.8 L108.5 71.0 L107.8 70.5 L107.1 70.8 L106.4 71.2 L105.7 70.8 L105.0 71.0 L104.3 71.4 L103.6 71.4 L102.9 71.2 L102.2 70.6 L101.5 70.7 L100.8 71.3 L100.1 70.9 L99.4 71.0 L98.7 71.0 L98.0 70.6 L97.3 70.7 L96.6 71.1 L95.9 71.6 L95.2 71.5 L94.5 71.3 L93.8 70.5 L93.1 71.5 L92.4 70.9 L91.7 70.7 L91.0 71.0 L90.3 71.1 L89.6 71.1 L88.9 71.0 L88.2 70.7 L87.5 71.6 L86.8 71.2 L86.1 71.2 L85.4 70.9 L84.7 71.3 L84.0 70.6 L83.3 71.1 L82.6 71.6 L81.9 71.1 L81.2 71.5 L80.5 71.2 L79.8 71.3 L79.1 71.2 L78.4 71.0 L77.7 70.7 L77.0 71.3 L76.3 71.5 L75.6 70.8 L74.9 70.6 L74.2 71.1 L73.5 71.6 L72.8 71.3 L72.1 71.4 L71.4 70.8 L70.7 70.6 L70.0 70.8 L69.3 71.2 L68.6 70.7 L67.9 71.2 L67.2 71.5 L66.5 71.2 L65.8 70.8 L65.1 70.6 L64.4 70.9 L63.7 71.4 L63.0 71.4 L62.3 71.3 L61.6 71.0 L60.9 70.8 L60.2 71.5 L59.5 70.7 L58.8 71.4 L58.1 71.3 L57.4 71.2 L56.7 71.1 L56.0 70.7 L55.3 71.2 L54.6 71.4 L53.9 70.6 L53.2 71.2 L52.5 71.1 L51.8 70.9 L51.1 70.8 L50.4 71.3 L49.7 71.5 L49.0 71.4 L48.3 71.3 L47.6 71.0 L46.9 71.3 L46.2 70.7 L45.5 71.3 L44.8 70.9 L44.1 71.3 L43.4 71.3 L42.7 71.0 L42.0 70.5 L41.3 71.5 L40.6 70.6 L39.9 71.2 L39.2 70.8 L38.5 71.4 L37.8 71.0 L37.1 71.5 L36.4 71.0 L35.7 71.0 L35.0 70.5 L34.3 70.8 L33.6 71.3 L32.9 70.6 L32.2 71.4 L31.5 71.1 L30.8 71.1 L30.1 71.3 L29.4 71.2 L28.7 70.8 L28.0 70.7 L27.3 70.6 L26.6 70.8 L25.9 70.8 L25.2 71.0 L24.5 70.9 L23.8 71.2 L23.1 70.8 L22.4 70.7 L21.7 71.2 L21.0 71.5 L20.3 70.9 L19.6 71.0 L18.9 70.7 L18.2 70.8 L17.5 71.6 L16.8 71.5 L16.1 70.7 L15.4 70.9 L14.7 70.8 L14.0 70.8 L13.3 70.9 L12.6 71.2 L11.9 71.0 L11.2 70.7 L10.5 71.4 L9.8 70.8 L9.1 71.1 L8.4 71.1 L7.7 71.2 L7.0 71.3 L6.3 70.6 L5.6 71.4 L4.9 71.0 L4.2 70.7 L3.5 70.7 L2.8 70.7 L2.1 70.9 L1.4 71.5 L0.7 68.9 L0.0 66.0Z" fill="#9c9c9c" opacity="1"/></svg></div>
<div style="left:1044.4px;top:557.9px;width:262.5999999999999px;height:52.1px;background:#484848;border-radius:3.5px;overflow:hidden;box-shadow:0 0 0 .8px #1e1e1e"><div class="t" style="left:4.3px;top:1.6px;font-size:9.4px;line-height:12px;color:#abe15f;-webkit-text-stroke:.22px #abe15f;letter-spacing:-0.33px">Free Fall Chord Patterns 01</div><svg style="left:116.09999999999991px;top:3.4px;" width="13" height="8" viewBox="0 0 13 8"><g fill="none" stroke="#abe15f" stroke-width=".9"><ellipse cx="3.6" cy="3.2" rx="2.4" ry="2.3"/><ellipse cx="9.2" cy="3.2" rx="2.4" ry="2.3"/><path d="M.4 6.5 H12.6"/></g></svg><div style="left:36.9px;top:0;width:1px;height:52.1px;background:rgba(255,255,255,.045)"></div><div style="left:74.2px;top:0;width:1px;height:52.1px;background:rgba(255,255,255,.045)"></div><div style="left:111.6px;top:0;width:1px;height:52.1px;background:rgba(255,255,255,.045)"></div><div style="left:148.9px;top:0;width:1px;height:52.1px;background:rgba(255,255,255,.045)"></div><div style="left:186.2px;top:0;width:1px;height:52.1px;background:rgba(255,255,255,.045)"></div><div style="left:223.6px;top:0;width:1px;height:52.1px;background:rgba(255,255,255,.045)"></div><div style="left:260.9px;top:0;width:1px;height:52.1px;background:rgba(255,255,255,.045)"></div><svg style="left:0;top:0" width="260" height="53"><path d="M0 32.3 H260" stroke="#9c9c9c" stroke-width="1"/><path transform="translate(0.0 0)" d="M0.0 27.8 L0.6 25.9 L1.1 23.7 L1.7 21.0 L2.2 19.9 L2.8 18.7 L3.3 20.5 L3.8 18.8 L4.4 19.3 L4.9 20.1 L5.5 21.0 L6.0 20.8 L6.6 21.3 L7.1 20.8 L7.7 20.8 L8.2 21.7 L8.8 22.2 L9.3 21.8 L9.9 21.0 L10.5 21.4 L11.0 20.4 L11.6 21.6 L12.1 22.1 L12.7 22.7 L13.2 24.1 L13.8 24.0 L14.3 25.4 L14.9 26.2 L15.4 27.0 L16.0 28.5 L16.5 29.8 L17.1 30.9 L17.1 33.7 L16.5 34.9 L16.0 36.2 L15.4 37.6 L14.9 38.2 L14.3 39.7 L13.8 40.0 L13.2 40.5 L12.7 41.3 L12.1 41.9 L11.6 42.9 L11.0 44.0 L10.5 43.5 L9.9 43.7 L9.3 43.2 L8.8 43.6 L8.2 44.0 L7.7 42.6 L7.1 44.2 L6.6 43.6 L6.0 43.5 L5.5 43.5 L4.9 44.4 L4.4 44.7 L3.8 44.0 L3.3 45.6 L2.8 44.4 L2.2 46.0 L1.7 43.2 L1.1 40.2 L0.6 39.1 L0.0 37.0Z" fill="#9c9c9c" opacity="1"/><path transform="translate(18.7 0)" d="M0.0 27.6 L0.6 25.4 L1.1 23.3 L1.7 22.5 L2.2 20.6 L2.8 19.5 L3.3 19.6 L3.9 20.6 L4.4 20.7 L5.0 18.9 L5.5 20.1 L6.1 19.8 L6.6 20.4 L7.2 21.8 L7.7 20.6 L8.3 21.3 L8.8 21.4 L9.4 22.4 L9.9 22.0 L10.5 21.4 L11.0 21.2 L11.6 20.0 L12.1 21.7 L12.7 23.5 L13.2 24.2 L13.8 24.0 L14.3 25.4 L14.9 26.6 L15.4 27.8 L16.0 28.6 L16.5 29.8 L17.1 30.9 L17.1 33.7 L16.5 34.9 L16.0 35.8 L15.4 36.9 L14.9 38.1 L14.3 39.6 L13.8 40.3 L13.2 40.9 L12.7 42.6 L12.1 43.3 L11.6 43.7 L11.0 44.5 L10.5 44.0 L9.9 42.6 L9.4 42.5 L8.8 42.4 L8.3 42.6 L7.7 42.9 L7.2 43.1 L6.6 43.3 L6.1 43.9 L5.5 43.8 L5.0 45.3 L4.4 44.2 L3.9 45.3 L3.3 45.5 L2.8 44.9 L2.2 44.6 L1.7 43.1 L1.1 40.8 L0.6 38.5 L0.0 36.8Z" fill="#9c9c9c" opacity="1"/><path transform="translate(37.4 0)" d="M0.0 28.2 L0.5 26.0 L1.1 24.4 L1.6 22.5 L2.2 20.6 L2.7 18.7 L3.3 19.7 L3.8 19.3 L4.4 18.7 L4.9 19.3 L5.5 20.7 L6.0 21.2 L6.6 21.5 L7.1 21.1 L7.7 21.9 L8.2 20.7 L8.8 21.5 L9.3 20.7 L9.9 21.8 L10.4 21.6 L11.0 19.2 L11.5 21.3 L12.1 21.8 L12.6 22.1 L13.2 23.0 L13.7 24.2 L14.3 25.3 L14.8 26.6 L15.4 27.1 L15.9 28.7 L16.5 29.6 L17.0 30.9 L17.0 33.8 L16.5 34.8 L15.9 35.9 L15.4 36.8 L14.8 37.9 L14.3 39.1 L13.7 40.0 L13.2 40.9 L12.6 42.4 L12.1 43.4 L11.5 43.6 L11.0 45.5 L10.4 43.5 L9.9 42.6 L9.3 43.7 L8.8 43.7 L8.2 43.2 L7.7 43.3 L7.1 43.3 L6.6 43.0 L6.0 43.4 L5.5 44.6 L4.9 45.2 L4.4 45.7 L3.8 46.2 L3.3 46.2 L2.7 45.5 L2.2 45.3 L1.6 43.5 L1.1 41.0 L0.5 38.9 L0.0 37.2Z" fill="#9c9c9c" opacity="1"/><path transform="translate(56.0 0)" d="M0.0 27.9 L0.5 25.7 L1.1 24.4 L1.6 22.2 L2.2 20.3 L2.7 18.7 L3.3 20.0 L3.8 20.0 L4.4 19.3 L4.9 19.3 L5.5 20.1 L6.0 20.0 L6.6 21.7 L7.1 20.5 L7.7 21.5 L8.2 21.3 L8.8 22.0 L9.3 21.4 L9.9 20.9 L10.4 22.1 L11.0 19.4 L11.5 21.3 L12.1 21.0 L12.6 22.5 L13.2 23.2 L13.7 24.0 L14.3 25.1 L14.8 26.5 L15.4 27.4 L15.9 28.7 L16.5 29.4 L17.0 30.9 L17.0 33.8 L16.5 35.1 L15.9 36.4 L15.4 37.2 L14.8 38.1 L14.3 39.1 L13.7 39.5 L13.2 41.2 L12.6 42.2 L12.1 42.8 L11.5 43.0 L11.0 45.4 L10.4 43.9 L9.9 43.5 L9.3 42.5 L8.8 42.6 L8.2 43.7 L7.7 43.6 L7.1 44.4 L6.6 44.8 L6.0 43.8 L5.5 44.2 L4.9 45.5 L4.4 45.1 L3.8 45.8 L3.3 45.7 L2.7 44.1 L2.2 46.1 L1.6 42.5 L1.1 40.8 L0.5 38.6 L0.0 36.5Z" fill="#9c9c9c" opacity="1"/><path transform="translate(149.4 0)" d="M0.0 28.1 L0.6 25.8 L1.1 24.4 L1.7 21.6 L2.2 19.3 L2.8 20.3 L3.3 18.4 L3.9 19.6 L4.4 19.7 L5.0 20.8 L5.5 19.4 L6.1 19.9 L6.6 20.6 L7.2 20.7 L7.7 20.8 L8.3 20.5 L8.8 21.9 L9.4 21.0 L9.9 21.8 L10.5 21.4 L11.0 19.6 L11.6 20.0 L12.1 21.4 L12.7 22.5 L13.2 24.2 L13.8 23.8 L14.3 25.9 L14.9 26.2 L15.4 27.6 L16.0 28.1 L16.5 29.5 L17.1 30.8 L17.1 33.6 L16.5 35.0 L16.0 36.2 L15.4 37.6 L14.9 38.4 L14.3 38.8 L13.8 39.7 L13.2 41.2 L12.7 42.0 L12.1 43.1 L11.6 43.6 L11.0 44.2 L10.5 42.4 L9.9 43.3 L9.4 42.2 L8.8 43.8 L8.3 42.5 L7.7 43.9 L7.2 44.6 L6.6 43.1 L6.1 44.6 L5.5 43.4 L5.0 45.2 L4.4 44.9 L3.9 44.9 L3.3 44.1 L2.8 44.7 L2.2 44.2 L1.7 42.7 L1.1 41.0 L0.6 38.9 L0.0 37.1Z" fill="#9c9c9c" opacity="1"/><path transform="translate(168.1 0)" d="M0.0 27.5 L0.6 25.4 L1.1 24.3 L1.7 21.4 L2.2 20.0 L2.8 19.8 L3.3 19.2 L3.9 20.0 L4.4 19.7 L5.0 20.2 L5.5 19.6 L6.1 20.6 L6.6 19.8 L7.2 21.0 L7.7 20.6 L8.3 21.2 L8.8 22.1 L9.4 22.3 L9.9 21.1 L10.5 21.2 L11.0 19.6 L11.6 20.9 L12.1 21.2 L12.7 22.6 L13.2 23.7 L13.8 24.9 L14.3 25.1 L14.9 26.6 L15.4 27.2 L16.0 28.4 L16.5 29.6 L17.1 30.9 L17.1 33.8 L16.5 35.0 L16.0 36.2 L15.4 37.6 L14.9 38.4 L14.3 38.8 L13.8 39.6 L13.2 41.6 L12.7 42.0 L12.1 42.4 L11.6 44.0 L11.0 44.3 L10.5 42.7 L9.9 43.8 L9.4 43.5 L8.8 43.9 L8.3 43.6 L7.7 42.9 L7.2 43.1 L6.6 44.4 L6.1 43.5 L5.5 44.0 L5.0 45.7 L4.4 44.7 L3.9 45.3 L3.3 45.4 L2.8 45.1 L2.2 44.0 L1.7 43.2 L1.1 40.5 L0.6 38.6 L0.0 36.5Z" fill="#9c9c9c" opacity="1"/><path transform="translate(186.8 0)" d="M0.0 28.2 L0.6 25.7 L1.1 24.1 L1.7 21.6 L2.2 19.2 L2.8 19.8 L3.3 18.8 L3.9 18.9 L4.4 19.8 L5.0 18.9 L5.5 21.0 L6.1 20.7 L6.6 20.6 L7.2 20.2 L7.7 20.4 L8.3 21.7 L8.8 20.8 L9.4 21.7 L9.9 21.7 L10.5 20.3 L11.0 19.1 L11.6 21.2 L12.1 21.6 L12.7 22.2 L13.2 23.6 L13.8 25.0 L14.3 25.8 L14.9 25.9 L15.4 27.5 L16.0 28.7 L16.5 29.7 L17.1 30.8 L17.1 33.7 L16.5 34.8 L16.0 36.5 L15.4 37.2 L14.9 38.4 L14.3 39.2 L13.8 40.6 L13.2 41.7 L12.7 42.0 L12.1 42.2 L11.6 43.8 L11.0 44.3 L10.5 43.2 L9.9 43.0 L9.4 44.1 L8.8 43.1 L8.3 43.8 L7.7 43.9 L7.2 43.3 L6.6 43.5 L6.1 44.1 L5.5 45.1 L5.0 45.5 L4.4 45.2 L3.9 44.1 L3.3 44.6 L2.8 44.1 L2.2 46.0 L1.7 43.4 L1.1 40.1 L0.6 38.8 L0.0 36.8Z" fill="#9c9c9c" opacity="1"/><path transform="translate(205.4 0)" d="M0.0 27.4 L0.6 24.8 L1.1 23.7 L1.7 21.4 L2.2 20.3 L2.8 20.0 L3.3 19.8 L3.9 20.8 L4.4 20.5 L5.0 20.5 L5.5 21.0 L6.1 20.3 L6.6 20.6 L7.2 21.3 L7.7 21.6 L8.3 21.4 L8.8 20.7 L9.4 20.4 L9.9 21.5 L10.5 22.5 L11.0 23.0 L11.6 24.8 L12.1 25.9 L12.7 27.0 L13.2 28.3 L13.8 29.8 L14.3 31.4 L14.3 33.2 L13.8 34.9 L13.2 36.3 L12.7 37.0 L12.1 38.6 L11.6 40.4 L11.0 41.1 L10.5 41.2 L9.9 42.7 L9.4 44.6 L8.8 44.2 L8.3 43.7 L7.7 43.4 L7.2 42.7 L6.6 43.1 L6.1 43.4 L5.5 43.7 L5.0 43.6 L4.4 44.2 L3.9 44.5 L3.3 45.3 L2.8 45.1 L2.2 46.2 L1.7 43.9 L1.1 42.0 L0.6 39.2 L0.0 36.7Z" fill="#9c9c9c" opacity="1"/></svg></div>
<div style="left:1044.4px;top:613.1px;width:262.5999999999999px;height:26.9px;background:#7ecb14;border-radius:3.5px;overflow:hidden;box-shadow:0 0 0 .8px #1e1e1e"><div class="t" style="left:4.3px;top:1.6px;font-size:9.4px;line-height:12px;color:#f3fde4;-webkit-text-stroke:.22px #f3fde4;letter-spacing:-0.42px">Free Fall Chop Vox 01</div><svg style="left:93.89999999999986px;top:3.4px;" width="13" height="8" viewBox="0 0 13 8"><g fill="none" stroke="#f3fde4" stroke-width=".9"><ellipse cx="3.6" cy="3.2" rx="2.4" ry="2.3"/><ellipse cx="9.2" cy="3.2" rx="2.4" ry="2.3"/><path d="M.4 6.5 H12.6"/></g></svg><svg style="left:0;top:0" width="260" height="27"><path d="M0 19.2 H262" stroke="#dcf9a6" stroke-width=".9"/><path d="M34.5 18.8 L35.0 18.2 L35.6 16.8 L36.1 16.3 L36.7 16.5 L37.2 16.7 L37.8 15.7 L38.3 15.9 L38.9 15.2 L39.4 15.8 L40.0 15.4 L40.5 15.3 L41.1 15.4 L41.6 16.7 L42.2 15.0 L42.7 15.7 L43.3 14.9 L43.8 15.8 L44.4 15.4 L44.9 16.8 L45.5 15.1 L46.0 16.1 L46.6 15.8 L47.1 16.1 L47.7 15.6 L48.2 16.4 L48.8 15.5 L49.3 15.8 L49.9 16.1 L50.4 16.5 L51.0 16.9 L51.5 15.5 L52.1 15.9 L52.6 15.7 L53.2 16.4 L53.7 16.4 L54.3 17.1 L54.8 17.7 L55.4 18.3 L55.9 18.6 L55.9 19.8 L55.4 20.1 L54.8 21.0 L54.3 21.1 L53.7 22.1 L53.2 22.5 L52.6 22.6 L52.1 21.6 L51.5 22.5 L51.0 21.5 L50.4 22.1 L49.9 23.1 L49.3 22.9 L48.8 22.6 L48.2 22.7 L47.7 23.2 L47.1 21.9 L46.6 21.7 L46.0 23.2 L45.5 22.0 L44.9 21.5 L44.4 22.3 L43.8 22.5 L43.3 23.2 L42.7 22.3 L42.2 23.1 L41.6 22.6 L41.1 22.5 L40.5 23.2 L40.0 22.6 L39.4 21.8 L38.9 23.1 L38.3 21.7 L37.8 21.5 L37.2 21.6 L36.7 22.5 L36.1 21.7 L35.6 21.4 L35.0 20.4 L34.5 19.6Z" fill="#dcf9a6" opacity="1"/><path d="M56.0 18.8 L56.5 18.8 L57.1 18.3 L57.6 18.3 L58.2 18.2 L58.7 18.0 L59.3 18.0 L59.8 18.0 L60.4 18.2 L60.9 18.4 L61.5 18.4 L62.0 18.4 L62.6 18.3 L63.1 18.0 L63.7 18.1 L64.2 18.4 L64.8 18.3 L65.3 18.2 L65.9 18.3 L66.4 17.9 L67.0 17.9 L67.5 18.1 L68.1 18.4 L68.6 18.2 L69.2 18.3 L69.7 18.0 L70.3 18.1 L70.8 18.1 L71.4 18.5 L71.9 18.6 L72.5 18.8 L72.5 19.6 L71.9 19.9 L71.4 20.1 L70.8 20.5 L70.3 20.5 L69.7 20.0 L69.2 20.2 L68.6 20.2 L68.1 20.2 L67.5 20.1 L67.0 20.3 L66.4 20.5 L65.9 20.4 L65.3 19.9 L64.8 20.0 L64.2 20.3 L63.7 20.5 L63.1 20.1 L62.6 20.0 L62.0 19.9 L61.5 20.2 L60.9 20.0 L60.4 20.4 L59.8 20.7 L59.3 20.2 L58.7 20.1 L58.2 20.1 L57.6 20.4 L57.1 19.9 L56.5 19.6 L56.0 19.6Z" fill="#dcf9a6" opacity="1"/><path d="M73.5 18.8 L74.0 18.7 L74.6 18.0 L75.1 17.2 L75.7 16.9 L76.2 17.3 L76.8 17.0 L77.3 16.6 L77.9 17.1 L78.4 17.6 L79.0 16.8 L79.5 17.0 L80.1 17.5 L80.6 17.5 L81.2 16.3 L81.7 16.4 L82.3 16.4 L82.8 16.9 L83.4 16.8 L83.9 16.4 L84.5 16.9 L85.0 17.1 L85.6 16.7 L86.1 16.2 L86.7 16.5 L87.2 16.6 L87.8 16.2 L88.3 16.3 L88.9 16.6 L89.4 17.1 L90.0 16.8 L90.5 16.8 L91.1 15.9 L91.6 17.2 L92.2 16.6 L92.7 16.8 L93.3 16.7 L93.8 16.8 L94.4 16.5 L94.9 16.6 L95.5 16.9 L96.0 16.7 L96.6 16.7 L97.1 17.0 L97.7 17.8 L98.2 18.1 L98.8 18.8 L99.3 18.8 L99.3 19.6 L98.8 19.6 L98.2 20.3 L97.7 21.0 L97.1 21.0 L96.6 21.2 L96.0 21.6 L95.5 21.2 L94.9 21.6 L94.4 21.8 L93.8 22.2 L93.3 21.8 L92.7 21.9 L92.2 21.6 L91.6 21.3 L91.1 21.9 L90.5 21.3 L90.0 21.7 L89.4 21.9 L88.9 22.2 L88.3 22.3 L87.8 22.2 L87.2 21.9 L86.7 22.3 L86.1 21.7 L85.6 22.4 L85.0 21.5 L84.5 21.7 L83.9 22.3 L83.4 22.4 L82.8 22.2 L82.3 21.8 L81.7 21.9 L81.2 21.9 L80.6 21.2 L80.1 21.1 L79.5 21.4 L79.0 20.9 L78.4 20.8 L77.9 21.3 L77.3 21.7 L76.8 21.5 L76.2 21.7 L75.7 21.3 L75.1 21.0 L74.6 20.3 L74.0 19.7 L73.5 19.6Z" fill="#dcf9a6" opacity="1"/><path d="M110.0 18.8 L110.5 18.8 L111.1 18.2 L111.6 18.1 L112.2 17.4 L112.7 17.5 L113.3 16.9 L113.8 17.4 L114.4 16.8 L114.9 16.6 L115.5 16.8 L116.0 16.4 L116.6 16.5 L117.1 17.5 L117.7 17.3 L118.2 16.6 L118.8 16.7 L119.3 17.1 L119.9 16.9 L120.4 16.9 L121.0 17.3 L121.5 16.7 L122.1 16.8 L122.6 17.1 L123.2 17.0 L123.7 16.4 L124.3 16.4 L124.8 17.0 L125.4 17.4 L125.9 16.4 L126.5 17.1 L127.0 17.5 L127.6 17.1 L128.1 16.4 L128.7 16.6 L129.2 17.0 L129.8 16.7 L130.3 17.0 L130.9 16.3 L131.4 16.5 L132.0 16.7 L132.6 16.3 L133.1 16.6 L133.7 17.0 L134.2 16.4 L134.8 16.9 L135.3 16.8 L135.9 16.4 L136.4 17.1 L137.0 17.4 L137.5 17.0 L138.1 17.4 L138.6 16.6 L139.2 17.3 L139.7 16.6 L140.3 16.5 L140.8 16.3 L141.4 17.3 L141.9 17.1 L142.5 17.9 L143.0 18.1 L143.6 18.0 L144.1 18.1 L144.7 18.6 L145.2 18.8 L145.2 19.6 L144.7 19.8 L144.1 20.2 L143.6 20.3 L143.0 20.3 L142.5 20.9 L141.9 20.9 L141.4 21.7 L140.8 21.6 L140.3 21.7 L139.7 21.9 L139.2 21.1 L138.6 21.7 L138.1 21.5 L137.5 21.2 L137.0 21.0 L136.4 21.6 L135.9 21.7 L135.3 22.1 L134.8 22.0 L134.2 21.6 L133.7 22.3 L133.1 22.1 L132.6 22.5 L132.0 21.7 L131.4 22.3 L130.9 21.7 L130.3 21.7 L129.8 21.7 L129.2 21.8 L128.7 22.1 L128.1 21.6 L127.6 21.2 L127.0 21.0 L126.5 21.0 L125.9 21.6 L125.4 21.0 L124.8 21.8 L124.3 21.4 L123.7 21.6 L123.2 22.1 L122.6 21.6 L122.1 21.8 L121.5 21.8 L121.0 21.8 L120.4 22.2 L119.9 21.0 L119.3 21.2 L118.8 21.4 L118.2 21.0 L117.7 21.3 L117.1 21.2 L116.6 21.5 L116.0 22.0 L115.5 21.9 L114.9 21.7 L114.4 21.1 L113.8 21.3 L113.3 21.8 L112.7 21.1 L112.2 21.0 L111.6 20.5 L111.1 19.8 L110.5 19.6 L110.0 19.6Z" fill="#dcf9a6" opacity="1"/><path d="M146.0 18.8 L146.6 18.8 L147.1 18.6 L147.7 17.7 L148.2 17.9 L148.8 18.2 L149.3 18.2 L149.9 17.8 L150.4 18.1 L151.0 18.3 L151.5 18.2 L152.1 18.3 L152.6 18.0 L153.2 18.0 L153.7 18.3 L154.3 17.9 L154.8 17.6 L155.4 17.7 L155.9 18.2 L156.5 18.1 L157.0 18.3 L157.6 18.0 L158.1 17.7 L158.7 18.3 L159.2 18.4 L159.8 18.0 L160.3 18.3 L160.9 18.0 L161.4 18.0 L162.0 18.0 L162.5 18.3 L163.1 18.3 L163.6 18.2 L164.2 18.1 L164.7 18.1 L165.3 18.3 L165.8 18.3 L166.4 18.7 L166.9 18.8 L167.5 18.8 L167.5 19.6 L166.9 19.6 L166.4 19.8 L165.8 19.8 L165.3 20.1 L164.7 20.4 L164.2 20.5 L163.6 20.5 L163.1 20.2 L162.5 20.3 L162.0 20.4 L161.4 20.2 L160.9 20.0 L160.3 20.3 L159.8 20.1 L159.2 20.1 L158.7 20.1 L158.1 20.6 L157.6 20.4 L157.0 20.0 L156.5 20.3 L155.9 20.4 L155.4 20.4 L154.8 20.5 L154.3 20.5 L153.7 20.5 L153.2 20.1 L152.6 20.2 L152.1 20.1 L151.5 20.0 L151.0 20.3 L150.4 20.4 L149.9 20.7 L149.3 20.4 L148.8 20.5 L148.2 20.7 L147.7 20.6 L147.1 20.1 L146.6 19.6 L146.0 19.6Z" fill="#dcf9a6" opacity="1"/><path d="M168.0 18.8 L168.6 18.8 L169.1 18.5 L169.7 18.0 L170.2 17.9 L170.8 17.8 L171.3 16.3 L171.9 15.8 L172.4 16.8 L173.0 16.3 L173.5 16.1 L174.1 15.3 L174.6 15.7 L175.2 16.4 L175.7 16.4 L176.3 16.2 L176.8 16.4 L177.4 16.9 L177.9 16.5 L178.5 16.2 L179.0 16.4 L179.6 15.8 L180.1 16.7 L180.7 16.7 L181.2 17.1 L181.8 15.9 L182.3 16.6 L182.9 16.8 L183.4 16.7 L184.0 16.9 L184.5 17.2 L185.1 17.2 L185.6 17.0 L186.2 16.8 L186.7 16.8 L187.3 15.9 L187.8 16.3 L188.4 16.7 L188.9 16.5 L189.5 16.1 L190.0 17.0 L190.6 16.7 L191.1 16.9 L191.7 16.9 L192.2 16.8 L192.8 16.5 L193.3 15.8 L193.9 16.9 L194.4 16.2 L195.0 16.4 L195.5 16.6 L196.1 16.1 L196.6 16.8 L197.2 16.1 L197.7 16.3 L198.3 16.1 L198.8 15.6 L199.4 15.6 L199.9 16.3 L200.5 16.1 L201.0 15.3 L201.6 16.3 L202.1 16.3 L202.7 16.1 L203.2 15.6 L203.8 17.1 L204.3 16.8 L204.9 15.7 L205.4 17.0 L206.0 16.4 L206.5 16.4 L207.1 15.6 L207.6 16.7 L208.2 15.9 L208.7 16.7 L209.3 16.4 L209.8 16.1 L210.4 15.6 L210.9 17.3 L211.5 17.4 L212.0 17.1 L212.6 17.3 L213.1 17.7 L213.7 18.3 L214.2 18.3 L214.8 18.6 L215.3 18.8 L215.9 18.7 L215.9 19.7 L215.3 19.6 L214.8 19.7 L214.2 20.1 L213.7 20.3 L213.1 20.5 L212.6 20.7 L212.0 20.7 L211.5 21.2 L210.9 21.3 L210.4 22.3 L209.8 21.5 L209.3 21.8 L208.7 22.8 L208.2 23.2 L207.6 22.1 L207.1 22.2 L206.5 21.8 L206.0 22.0 L205.4 21.6 L204.9 22.3 L204.3 21.5 L203.8 22.2 L203.2 22.4 L202.7 21.7 L202.1 22.6 L201.6 22.0 L201.0 22.8 L200.5 22.3 L199.9 22.1 L199.4 22.7 L198.8 22.3 L198.3 21.5 L197.7 22.8 L197.2 22.1 L196.6 21.5 L196.1 21.7 L195.5 21.6 L195.0 22.2 L194.4 22.1 L193.9 22.2 L193.3 21.7 L192.8 21.6 L192.2 21.5 L191.7 21.8 L191.1 21.4 L190.6 21.6 L190.0 22.0 L189.5 22.4 L188.9 22.8 L188.4 21.3 L187.8 22.0 L187.3 22.5 L186.7 22.2 L186.2 21.9 L185.6 21.6 L185.1 21.6 L184.5 20.9 L184.0 21.7 L183.4 21.7 L182.9 21.7 L182.3 21.8 L181.8 21.9 L181.2 21.5 L180.7 21.7 L180.1 22.4 L179.6 21.8 L179.0 22.4 L178.5 23.3 L177.9 22.4 L177.4 21.7 L176.8 22.7 L176.3 22.9 L175.7 21.6 L175.2 21.5 L174.6 23.0 L174.1 22.6 L173.5 21.5 L173.0 22.4 L172.4 21.2 L171.9 22.7 L171.3 21.6 L170.8 20.6 L170.2 21.0 L169.7 20.3 L169.1 19.9 L168.6 19.6 L168.0 19.6Z" fill="#dcf9a6" opacity="1"/><path d="M224.0 18.8 L224.6 18.8 L225.1 18.4 L225.7 18.1 L226.2 17.3 L226.8 16.9 L227.3 16.9 L227.9 16.7 L228.4 16.8 L229.0 16.1 L229.5 16.4 L230.1 17.2 L230.6 17.0 L231.2 16.1 L231.7 16.5 L232.3 17.0 L232.8 16.2 L233.4 16.8 L233.9 16.9 L234.5 17.0 L235.0 16.4 L235.6 16.3 L236.1 16.9 L236.7 16.0 L237.2 16.0 L237.8 16.9 L238.3 16.1 L238.9 16.9 L239.4 17.0 L240.0 16.5 L240.5 16.6 L241.1 16.6 L241.6 16.6 L242.2 15.8 L242.7 16.4 L243.3 16.7 L243.8 16.3 L244.4 16.6 L244.9 16.4 L245.5 16.5 L246.0 16.0 L246.6 16.0 L247.1 16.0 L247.7 17.1 L248.2 17.2 L248.8 16.5 L249.3 16.9 L249.9 16.7 L250.4 16.2 L251.0 17.2 L251.5 16.6 L252.1 17.3 L252.6 17.2 L253.2 17.2 L253.7 17.4 L254.3 17.5 L254.8 17.1 L255.4 17.0 L255.9 16.8 L256.5 16.4 L257.0 16.6 L257.6 17.1 L258.1 17.6 L258.7 17.8 L259.2 17.8 L259.8 18.4 L260.3 18.4 L260.9 18.4 L261.4 18.7 L262.0 18.7 L262.0 19.7 L261.4 19.7 L260.9 19.8 L260.3 20.0 L259.8 20.3 L259.2 20.8 L258.7 20.7 L258.1 20.8 L257.6 21.9 L257.0 21.7 L256.5 21.8 L255.9 21.0 L255.4 21.5 L254.8 21.9 L254.3 21.4 L253.7 21.2 L253.2 21.6 L252.6 21.8 L252.1 21.6 L251.5 21.9 L251.0 21.5 L250.4 21.6 L249.9 21.8 L249.3 21.7 L248.8 21.2 L248.2 21.1 L247.7 21.3 L247.1 21.9 L246.6 22.3 L246.0 21.7 L245.5 21.4 L244.9 21.5 L244.4 22.3 L243.8 21.5 L243.3 21.0 L242.7 22.2 L242.2 21.8 L241.6 22.2 L241.1 21.7 L240.5 21.8 L240.0 21.9 L239.4 21.1 L238.9 21.5 L238.3 21.9 L237.8 21.5 L237.2 21.7 L236.7 21.9 L236.1 21.4 L235.6 21.9 L235.0 22.0 L234.5 21.4 L233.9 21.8 L233.4 22.1 L232.8 21.9 L232.3 22.1 L231.7 22.0 L231.2 21.8 L230.6 22.1 L230.1 21.6 L229.5 22.5 L229.0 22.5 L228.4 22.3 L227.9 21.4 L227.3 21.3 L226.8 21.3 L226.2 21.1 L225.7 20.3 L225.1 19.8 L224.6 19.6 L224.0 19.6Z" fill="#dcf9a6" opacity="1"/></svg></div>
<div style="left:1044.4px;top:669.2px;width:262.5999999999999px;height:24.6px;background:#c98014;border-radius:3.5px;overflow:hidden;box-shadow:0 0 0 .8px #1e1e1e"><div class="t" style="left:4.3px;top:1.6px;font-size:9.4px;line-height:12px;color:#fdf2e0;-webkit-text-stroke:.22px #fdf2e0;letter-spacing:-0.35px">Free Fall Synth Bass 03</div><svg style="left:104.59999999999991px;top:3.4px;" width="8" height="8" viewBox="0 0 8 8"><g fill="none" stroke="#fdf2e0" stroke-width=".9"><ellipse cx="3.8" cy="3.2" rx="2.4" ry="2.3"/><path d="M.4 6.5 H7.4"/></g></svg><svg style="left:0;top:0" width="260" height="25"><path d="M0 19.0 H262" stroke="#fbe3bd" stroke-width=".9"/><path d="M55.5 18.1 L56.0 17.1 L56.6 16.9 L57.1 16.6 L57.7 17.1 L58.2 17.6 L58.8 17.9 L59.3 17.9 L59.9 18.2 L60.4 18.3 L61.0 18.3 L61.5 18.4 L62.1 18.4 L62.6 18.5 L63.2 18.6 L63.7 18.6 L64.3 18.6 L64.8 18.6 L65.4 18.6 L65.9 18.6 L65.9 19.4 L65.4 19.4 L64.8 19.4 L64.3 19.4 L63.7 19.4 L63.2 19.4 L62.6 19.5 L62.1 19.5 L61.5 19.7 L61.0 19.6 L60.4 19.7 L59.9 19.8 L59.3 20.2 L58.8 20.0 L58.2 20.5 L57.7 20.6 L57.1 20.7 L56.6 21.3 L56.0 20.8 L55.5 19.9Z" fill="#fbe3bd" opacity="1"/><path d="M92.5 18.2 L93.0 17.2 L93.6 17.2 L94.1 16.9 L94.7 16.8 L95.2 16.8 L95.8 17.1 L96.3 17.5 L96.9 17.5 L97.4 18.1 L98.0 18.1 L98.5 18.1 L99.1 18.1 L99.6 18.0 L100.2 18.1 L100.7 18.2 L101.3 18.3 L101.8 18.5 L102.4 18.4 L102.9 18.6 L103.5 18.6 L104.0 18.6 L104.6 18.6 L105.1 18.6 L105.7 18.6 L106.2 18.6 L106.8 18.6 L106.8 19.4 L106.2 19.4 L105.7 19.4 L105.1 19.4 L104.6 19.4 L104.0 19.4 L103.5 19.4 L102.9 19.4 L102.4 19.4 L101.8 19.5 L101.3 19.7 L100.7 19.9 L100.2 19.8 L99.6 19.7 L99.1 20.2 L98.5 19.9 L98.0 19.9 L97.4 19.9 L96.9 20.5 L96.3 20.6 L95.8 20.8 L95.2 21.5 L94.7 21.3 L94.1 21.2 L93.6 20.8 L93.0 20.8 L92.5 19.8Z" fill="#fbe3bd" opacity="1"/><path d="M111.5 18.0 L112.0 16.5 L112.6 17.1 L113.1 17.3 L113.7 17.0 L114.2 17.4 L114.8 17.5 L115.3 17.9 L115.9 18.0 L116.4 17.9 L117.0 18.2 L117.5 18.1 L118.1 18.1 L118.6 18.3 L119.2 18.3 L119.7 18.4 L120.3 18.5 L120.8 18.4 L121.4 18.6 L121.9 18.6 L122.5 18.6 L123.0 18.6 L123.6 18.6 L124.1 18.6 L124.7 18.6 L124.7 19.4 L124.1 19.4 L123.6 19.4 L123.0 19.4 L122.5 19.4 L121.9 19.4 L121.4 19.5 L120.8 19.6 L120.3 19.6 L119.7 19.5 L119.2 19.8 L118.6 19.6 L118.1 19.7 L117.5 20.0 L117.0 20.0 L116.4 20.3 L115.9 19.9 L115.3 20.1 L114.8 20.4 L114.2 20.5 L113.7 20.8 L113.1 21.2 L112.6 20.8 L112.0 21.7 L111.5 20.1Z" fill="#fbe3bd" opacity="1"/><path d="M130.5 18.1 L131.1 18.0 L131.6 16.7 L132.2 17.5 L132.7 17.8 L133.3 17.0 L133.8 16.8 L134.4 17.7 L134.9 17.4 L135.5 17.7 L136.0 17.5 L136.6 17.7 L137.1 18.1 L137.7 17.9 L138.2 18.0 L138.8 18.1 L139.3 18.3 L139.9 18.1 L140.4 18.0 L141.0 18.2 L141.5 18.5 L142.1 18.4 L142.6 18.5 L143.2 18.5 L143.7 18.5 L144.3 18.6 L144.8 18.6 L145.4 18.6 L145.9 18.6 L146.5 18.6 L147.0 18.6 L147.6 18.6 L148.1 18.6 L148.7 18.6 L149.2 18.6 L149.8 18.6 L149.8 19.4 L149.2 19.4 L148.7 19.4 L148.1 19.4 L147.6 19.4 L147.0 19.4 L146.5 19.4 L145.9 19.4 L145.4 19.4 L144.8 19.4 L144.3 19.4 L143.7 19.4 L143.2 19.5 L142.6 19.7 L142.1 19.6 L141.5 19.5 L141.0 19.8 L140.4 19.9 L139.9 19.8 L139.3 19.7 L138.8 19.8 L138.2 20.0 L137.7 20.0 L137.1 20.2 L136.6 20.2 L136.0 20.4 L135.5 20.3 L134.9 20.3 L134.4 20.4 L133.8 20.8 L133.3 20.6 L132.7 20.2 L132.2 20.8 L131.6 20.9 L131.1 19.8 L130.5 19.7Z" fill="#fbe3bd" opacity="1"/><path d="M204.5 18.0 L205.1 16.5 L205.6 16.9 L206.2 17.6 L206.7 17.7 L207.3 17.7 L207.8 17.9 L208.4 17.9 L208.9 18.2 L209.5 18.4 L210.0 18.3 L210.6 18.5 L211.1 18.6 L211.7 18.6 L212.2 18.6 L212.8 18.6 L213.3 18.6 L213.3 19.4 L212.8 19.4 L212.2 19.4 L211.7 19.4 L211.1 19.4 L210.6 19.4 L210.0 19.5 L209.5 19.7 L208.9 20.0 L208.4 20.1 L207.8 19.9 L207.3 20.3 L206.7 20.2 L206.2 20.7 L205.6 20.7 L205.1 21.3 L204.5 19.9Z" fill="#fbe3bd" opacity="1"/><path d="M242.0 18.4 L242.6 18.3 L243.1 16.9 L243.7 17.2 L244.2 17.4 L244.8 17.6 L245.3 17.5 L245.9 17.9 L246.4 17.9 L247.0 17.7 L247.5 17.7 L248.1 18.0 L248.6 17.7 L249.2 17.8 L249.7 18.0 L250.3 17.7 L250.8 18.2 L251.4 18.1 L251.9 17.9 L252.5 18.1 L253.0 18.3 L253.6 18.4 L254.1 18.4 L254.7 18.6 L255.2 18.5 L255.8 18.5 L256.3 18.6 L256.9 18.6 L257.4 18.6 L258.0 18.6 L258.5 18.6 L259.1 18.6 L259.6 18.6 L260.2 18.6 L260.7 18.6 L261.3 18.6 L261.8 18.6 L261.8 19.4 L261.3 19.4 L260.7 19.4 L260.2 19.4 L259.6 19.4 L259.1 19.4 L258.5 19.4 L258.0 19.4 L257.4 19.4 L256.9 19.4 L256.3 19.4 L255.8 19.4 L255.2 19.5 L254.7 19.4 L254.1 19.7 L253.6 19.6 L253.0 19.5 L252.5 19.7 L251.9 19.8 L251.4 19.9 L250.8 19.8 L250.3 20.0 L249.7 20.5 L249.2 20.1 L248.6 20.5 L248.1 20.5 L247.5 20.2 L247.0 19.9 L246.4 20.1 L245.9 20.3 L245.3 20.6 L244.8 20.8 L244.2 20.2 L243.7 21.1 L243.1 20.7 L242.6 19.9 L242.0 19.7Z" fill="#fbe3bd" opacity="1"/></svg></div>
<div style="left:1044.4px;top:696.8px;width:262.5999999999999px;height:24.2px;background:#484848;border-radius:3.5px;overflow:hidden;box-shadow:0 0 0 .8px #1e1e1e"><div class="t" style="left:4.3px;top:1.6px;font-size:9.4px;line-height:12px;color:#f0a366;-webkit-text-stroke:.22px #f0a366;letter-spacing:-0.38px">Free Fall Chord Swells</div><svg style="left:96.09999999999991px;top:3.4px;" width="13" height="8" viewBox="0 0 13 8"><g fill="none" stroke="#f0a366" stroke-width=".9"><ellipse cx="3.6" cy="3.2" rx="2.4" ry="2.3"/><ellipse cx="9.2" cy="3.2" rx="2.4" ry="2.3"/><path d="M.4 6.5 H12.6"/></g></svg><div style="left:36.9px;top:0;width:1px;height:24.2px;background:rgba(255,255,255,.045)"></div><div style="left:74.2px;top:0;width:1px;height:24.2px;background:rgba(255,255,255,.045)"></div><div style="left:111.6px;top:0;width:1px;height:24.2px;background:rgba(255,255,255,.045)"></div><div style="left:148.9px;top:0;width:1px;height:24.2px;background:rgba(255,255,255,.045)"></div><div style="left:186.2px;top:0;width:1px;height:24.2px;background:rgba(255,255,255,.045)"></div><div style="left:223.6px;top:0;width:1px;height:24.2px;background:rgba(255,255,255,.045)"></div><div style="left:260.9px;top:0;width:1px;height:24.2px;background:rgba(255,255,255,.045)"></div><svg style="left:0;top:0" width="260" height="25"><path d="M0 18.8 H262" stroke="#9c9c9c" stroke-width=".9"/><path d="M86.0 18.4 L86.5 18.4 L87.1 18.1 L87.6 18.2 L88.2 18.1 L88.7 18.0 L89.3 18.0 L89.8 18.2 L90.4 18.0 L90.9 18.1 L91.5 17.8 L92.0 17.9 L92.6 17.8 L93.1 17.9 L93.7 18.1 L94.2 18.0 L94.8 17.9 L95.3 18.2 L95.9 18.0 L96.4 17.9 L97.0 18.1 L97.5 18.0 L98.1 18.1 L98.6 17.9 L99.2 17.8 L99.7 18.0 L100.3 17.8 L100.8 18.2 L101.4 18.0 L101.9 18.1 L102.5 18.2 L103.0 18.4 L103.6 18.4 L103.6 19.2 L103.0 19.2 L102.5 19.3 L101.9 19.6 L101.4 19.7 L100.8 19.5 L100.3 19.8 L99.7 19.6 L99.2 19.6 L98.6 19.8 L98.1 19.8 L97.5 19.6 L97.0 19.4 L96.4 19.6 L95.9 19.6 L95.3 19.5 L94.8 19.7 L94.2 19.5 L93.7 19.5 L93.1 19.6 L92.6 19.7 L92.0 19.8 L91.5 19.8 L90.9 19.5 L90.4 19.6 L89.8 19.6 L89.3 19.4 L88.7 19.7 L88.2 19.6 L87.6 19.6 L87.1 19.4 L86.5 19.2 L86.0 19.2Z" fill="#9c9c9c" opacity="1"/><path d="M104.0 18.4 L104.5 18.4 L105.1 18.2 L105.6 17.8 L106.2 17.5 L106.7 16.7 L107.3 16.6 L107.8 17.1 L108.4 16.8 L108.9 17.2 L109.5 16.4 L110.0 16.8 L110.6 16.7 L111.1 17.0 L111.7 16.8 L112.2 17.2 L112.8 17.0 L113.3 17.0 L113.9 17.1 L114.4 16.9 L115.0 17.0 L115.5 17.2 L116.1 16.9 L116.6 17.0 L117.2 16.5 L117.7 17.2 L118.3 16.4 L118.8 16.7 L119.4 16.5 L119.9 16.4 L120.5 16.3 L121.0 17.0 L121.6 16.6 L122.1 16.9 L122.7 17.2 L123.2 16.6 L123.8 17.0 L124.3 16.8 L124.9 16.0 L125.4 16.9 L126.0 16.4 L126.5 16.6 L127.1 16.6 L127.6 17.0 L128.2 16.4 L128.7 17.5 L129.3 16.8 L129.8 16.8 L130.4 17.0 L130.9 17.0 L131.5 17.0 L132.0 16.1 L132.6 16.2 L133.1 17.1 L133.7 16.4 L134.2 16.1 L134.8 16.9 L135.4 17.5 L135.9 17.9 L136.5 18.2 L137.0 18.3 L137.6 18.4 L137.6 19.2 L137.0 19.3 L136.5 19.4 L135.9 19.8 L135.4 19.9 L134.8 20.9 L134.2 20.8 L133.7 21.0 L133.1 20.7 L132.6 20.7 L132.0 20.7 L131.5 21.0 L130.9 20.4 L130.4 20.6 L129.8 20.7 L129.3 20.9 L128.7 20.4 L128.2 20.5 L127.6 20.3 L127.1 20.9 L126.5 20.5 L126.0 21.0 L125.4 20.4 L124.9 20.9 L124.3 20.6 L123.8 21.1 L123.2 20.3 L122.7 20.4 L122.1 21.1 L121.6 20.8 L121.0 20.7 L120.5 21.2 L119.9 21.2 L119.4 20.5 L118.8 21.0 L118.3 21.0 L117.7 20.6 L117.2 20.4 L116.6 20.7 L116.1 20.4 L115.5 20.4 L115.0 20.7 L114.4 20.6 L113.9 20.5 L113.3 21.0 L112.8 20.5 L112.2 20.5 L111.7 20.3 L111.1 20.9 L110.6 20.2 L110.0 21.0 L109.5 20.7 L108.9 20.6 L108.4 20.6 L107.8 20.8 L107.3 20.8 L106.7 20.4 L106.2 20.0 L105.6 20.0 L105.1 19.4 L104.5 19.2 L104.0 19.2Z" fill="#9c9c9c" opacity="1"/><path d="M138.0 18.4 L138.6 18.4 L139.1 18.2 L139.7 18.1 L140.2 18.1 L140.8 18.0 L141.3 18.1 L141.9 17.7 L142.4 17.9 L143.0 17.7 L143.5 18.1 L144.1 17.9 L144.6 17.8 L145.2 18.1 L145.7 18.2 L146.3 18.0 L146.8 17.9 L147.4 18.0 L147.9 17.8 L148.5 17.6 L149.0 17.6 L149.6 17.7 L150.1 17.9 L150.7 18.0 L151.2 17.8 L151.8 18.0 L152.3 18.0 L152.9 18.2 L153.4 18.0 L154.0 18.0 L154.5 18.1 L155.1 18.0 L155.6 18.2 L156.2 18.0 L156.7 18.3 L157.3 18.4 L157.8 18.4 L157.8 19.2 L157.3 19.2 L156.7 19.3 L156.2 19.6 L155.6 19.4 L155.1 19.6 L154.5 19.5 L154.0 19.6 L153.4 19.6 L152.9 19.3 L152.3 19.5 L151.8 19.6 L151.2 19.5 L150.7 19.8 L150.1 19.7 L149.6 19.6 L149.0 19.7 L148.5 19.8 L147.9 19.7 L147.4 19.6 L146.8 19.5 L146.3 19.7 L145.7 19.4 L145.2 19.6 L144.6 19.8 L144.1 19.5 L143.5 19.6 L143.0 19.7 L142.4 19.9 L141.9 19.9 L141.3 19.8 L140.8 19.6 L140.2 19.6 L139.7 19.8 L139.1 19.4 L138.6 19.2 L138.0 19.2Z" fill="#9c9c9c" opacity="1"/><path d="M234.0 18.4 L234.6 18.4 L235.1 18.2 L235.7 17.5 L236.2 17.4 L236.8 17.6 L237.3 17.5 L237.9 17.4 L238.4 17.3 L239.0 17.4 L239.5 17.0 L240.1 17.2 L240.6 17.6 L241.2 17.2 L241.7 17.2 L242.3 17.4 L242.8 17.0 L243.4 17.4 L243.9 17.6 L244.5 17.8 L245.0 17.5 L245.6 17.2 L246.1 17.3 L246.7 17.5 L247.2 17.3 L247.8 17.6 L248.3 17.7 L248.9 17.5 L249.4 17.6 L250.0 17.2 L250.5 17.2 L251.1 17.3 L251.6 17.3 L252.2 17.1 L252.7 16.8 L253.3 17.6 L253.8 17.6 L254.4 17.6 L254.9 17.5 L255.5 17.2 L256.0 17.2 L256.6 17.7 L257.1 17.7 L257.7 17.3 L258.2 16.9 L258.8 17.7 L259.3 17.6 L259.9 18.0 L260.4 18.2 L261.0 18.4 L261.5 18.4 L261.5 19.2 L261.0 19.2 L260.4 19.4 L259.9 19.6 L259.3 19.6 L258.8 20.1 L258.2 20.5 L257.7 20.2 L257.1 20.1 L256.6 20.1 L256.0 20.1 L255.5 20.0 L254.9 19.9 L254.4 19.8 L253.8 20.4 L253.3 20.1 L252.7 20.4 L252.2 20.2 L251.6 20.2 L251.1 20.5 L250.5 20.2 L250.0 20.2 L249.4 20.0 L248.9 20.1 L248.3 20.1 L247.8 19.9 L247.2 20.4 L246.7 20.1 L246.1 20.3 L245.6 20.1 L245.0 20.2 L244.5 19.9 L243.9 20.0 L243.4 20.2 L242.8 20.2 L242.3 20.3 L241.7 20.1 L241.2 19.9 L240.6 20.1 L240.1 20.0 L239.5 20.3 L239.0 20.5 L238.4 20.2 L237.9 20.6 L237.3 20.1 L236.8 20.3 L236.2 19.8 L235.7 19.7 L235.1 19.3 L234.6 19.2 L234.0 19.2Z" fill="#9c9c9c" opacity="1"/></svg></div>
<div style="left:1044.4px;top:724.1px;width:262.5999999999999px;height:26.6px;background:#c93c14;border-radius:3.5px;overflow:hidden;box-shadow:0 0 0 .8px #1e1e1e"><div class="t" style="left:4.3px;top:1.6px;font-size:9.4px;line-height:12px;color:#fdece6;-webkit-text-stroke:.22px #fdece6;letter-spacing:-0.31px">Free Fall Atmosphere 02</div><svg style="left:105.19999999999982px;top:3.4px;" width="13" height="8" viewBox="0 0 13 8"><g fill="none" stroke="#fdece6" stroke-width=".9"><ellipse cx="3.6" cy="3.2" rx="2.4" ry="2.3"/><ellipse cx="9.2" cy="3.2" rx="2.4" ry="2.3"/><path d="M.4 6.5 H12.6"/></g></svg><svg style="left:0;top:0" width="260" height="27"><path d="M0 19.6 H262" stroke="#f9c5b6" stroke-width=".9"/><path d="M13.0 19.2 L13.6 19.2 L14.1 19.2 L14.7 19.1 L15.2 19.0 L15.8 19.1 L16.3 19.0 L16.9 18.9 L17.4 18.8 L18.0 19.0 L18.5 18.8 L19.1 18.9 L19.6 19.0 L20.2 19.0 L20.7 18.7 L21.3 18.8 L21.8 18.8 L22.4 18.8 L22.9 18.7 L23.5 18.9 L24.0 18.7 L24.6 18.8 L25.1 18.9 L25.7 18.9 L26.2 19.1 L26.8 19.1 L27.3 18.9 L27.9 19.1 L28.4 19.0 L29.0 19.0 L29.5 18.9 L30.1 18.9 L30.6 19.0 L31.2 18.9 L31.7 19.0 L32.3 19.0 L32.8 18.8 L33.4 18.9 L33.9 18.9 L34.5 19.1 L35.0 18.8 L35.6 19.0 L36.1 18.8 L36.6 19.1 L37.2 18.8 L37.7 19.2 L38.3 19.2 L38.8 19.2 L39.4 19.2 L39.9 19.2 L39.9 20.0 L39.4 20.0 L38.8 20.0 L38.3 20.0 L37.7 20.0 L37.2 20.3 L36.6 20.2 L36.1 20.2 L35.6 20.4 L35.0 20.5 L34.5 20.2 L33.9 20.2 L33.4 20.3 L32.8 20.4 L32.3 20.2 L31.7 20.2 L31.2 20.3 L30.6 20.4 L30.1 20.3 L29.5 20.2 L29.0 20.3 L28.4 20.3 L27.9 20.1 L27.3 20.3 L26.8 20.2 L26.2 20.2 L25.7 20.2 L25.1 20.4 L24.6 20.4 L24.0 20.6 L23.5 20.5 L22.9 20.6 L22.4 20.4 L21.8 20.3 L21.3 20.4 L20.7 20.5 L20.2 20.4 L19.6 20.2 L19.1 20.3 L18.5 20.3 L18.0 20.2 L17.4 20.2 L16.9 20.2 L16.3 20.3 L15.8 20.1 L15.2 20.3 L14.7 20.1 L14.1 20.0 L13.6 20.0 L13.0 20.0Z" fill="#f9c5b6" opacity="1"/><path d="M40.0 19.2 L40.5 19.0 L41.1 17.9 L41.6 17.9 L42.2 17.8 L42.7 18.0 L43.3 18.1 L43.8 18.4 L44.4 18.2 L44.9 17.8 L45.5 18.4 L46.0 18.5 L46.6 18.3 L47.1 17.7 L47.7 17.7 L48.2 17.3 L48.8 17.8 L49.3 17.8 L49.9 17.1 L50.4 17.3 L51.0 18.3 L51.5 18.1 L52.1 18.1 L52.6 18.4 L53.2 17.7 L53.7 17.4 L54.3 18.2 L54.8 18.4 L55.4 19.0 L55.9 19.2 L55.9 20.0 L55.4 20.0 L54.8 20.4 L54.3 21.3 L53.7 21.6 L53.2 21.1 L52.6 21.3 L52.1 21.1 L51.5 21.4 L51.0 21.2 L50.4 21.6 L49.9 21.5 L49.3 22.1 L48.8 22.1 L48.2 21.6 L47.7 21.2 L47.1 20.9 L46.6 20.7 L46.0 20.7 L45.5 21.0 L44.9 21.5 L44.4 21.1 L43.8 21.2 L43.3 21.1 L42.7 21.2 L42.2 21.2 L41.6 21.2 L41.1 21.0 L40.5 20.5 L40.0 20.0Z" fill="#f9c5b6" opacity="1"/><path d="M86.0 19.2 L86.5 19.2 L87.1 19.1 L87.6 19.0 L88.2 18.8 L88.7 18.8 L89.3 18.7 L89.8 18.6 L90.4 18.8 L90.9 19.0 L91.5 19.0 L92.0 18.8 L92.6 18.7 L93.1 18.9 L93.7 18.9 L94.2 18.8 L94.8 18.8 L95.3 18.7 L95.9 18.7 L96.4 18.8 L97.0 18.9 L97.5 18.6 L98.1 18.6 L98.6 18.9 L99.2 19.0 L99.7 18.6 L100.3 18.7 L100.8 18.7 L101.4 18.6 L101.9 18.5 L102.5 18.6 L103.0 18.4 L103.6 18.5 L104.1 18.6 L104.7 18.8 L105.2 18.6 L105.8 18.6 L106.3 18.9 L106.9 18.8 L107.4 18.6 L108.0 18.7 L108.5 18.7 L109.1 18.7 L109.6 19.0 L110.2 19.1 L110.7 19.2 L111.3 19.2 L111.8 19.2 L111.8 20.0 L111.3 20.0 L110.7 20.0 L110.2 20.1 L109.6 20.3 L109.1 20.4 L108.5 20.5 L108.0 20.3 L107.4 20.5 L106.9 20.3 L106.3 20.4 L105.8 20.4 L105.2 20.3 L104.7 20.6 L104.1 20.8 L103.6 20.4 L103.0 20.6 L102.5 20.4 L101.9 20.5 L101.4 20.6 L100.8 20.6 L100.3 20.6 L99.7 20.3 L99.2 20.3 L98.6 20.3 L98.1 20.4 L97.5 20.4 L97.0 20.3 L96.4 20.5 L95.9 20.2 L95.3 20.4 L94.8 20.1 L94.2 20.4 L93.7 20.3 L93.1 20.4 L92.6 20.3 L92.0 20.3 L91.5 20.4 L90.9 20.2 L90.4 20.4 L89.8 20.2 L89.3 20.2 L88.7 20.2 L88.2 20.5 L87.6 20.2 L87.1 20.0 L86.5 20.0 L86.0 20.0Z" fill="#f9c5b6" opacity="1"/><path d="M112.0 19.2 L112.5 18.9 L113.1 18.3 L113.6 18.1 L114.2 18.0 L114.7 17.8 L115.3 18.1 L115.8 18.1 L116.4 18.1 L116.9 18.1 L117.5 18.2 L118.0 17.4 L118.6 17.5 L119.1 17.2 L119.7 17.8 L120.2 17.4 L120.8 17.8 L121.3 17.6 L121.9 18.1 L122.4 18.2 L123.0 18.0 L123.5 17.5 L124.1 17.2 L124.6 17.1 L125.2 16.9 L125.7 17.1 L126.3 17.1 L126.8 17.2 L127.4 18.0 L127.9 18.0 L128.5 18.0 L129.0 18.4 L129.6 18.6 L130.1 18.9 L130.7 19.2 L130.7 20.0 L130.1 20.2 L129.6 20.9 L129.0 21.1 L128.5 21.0 L127.9 21.2 L127.4 21.3 L126.8 21.5 L126.3 21.5 L125.7 22.0 L125.2 22.2 L124.6 21.6 L124.1 22.0 L123.5 21.6 L123.0 21.1 L122.4 21.0 L121.9 21.1 L121.3 21.3 L120.8 21.8 L120.2 21.7 L119.7 21.5 L119.1 21.5 L118.6 21.6 L118.0 21.5 L117.5 21.3 L116.9 20.9 L116.4 20.8 L115.8 20.7 L115.3 21.3 L114.7 21.4 L114.2 21.1 L113.6 21.0 L113.1 20.9 L112.5 20.4 L112.0 20.0Z" fill="#f9c5b6" opacity="1"/><path d="M159.0 19.2 L159.6 19.2 L160.1 19.1 L160.7 18.8 L161.2 18.7 L161.8 18.7 L162.3 18.9 L162.9 18.9 L163.4 18.9 L164.0 18.9 L164.5 18.8 L165.1 19.0 L165.6 18.9 L166.2 18.6 L166.7 18.9 L167.3 18.9 L167.8 18.7 L168.4 18.8 L168.9 18.8 L169.5 18.9 L170.0 18.7 L170.6 18.7 L171.1 19.0 L171.7 18.8 L172.2 18.9 L172.8 18.8 L173.3 19.0 L173.9 18.9 L174.4 18.8 L175.0 18.9 L175.5 18.5 L176.1 18.7 L176.6 18.8 L177.2 18.6 L177.7 18.9 L178.3 18.7 L178.8 18.8 L179.4 18.7 L179.9 18.6 L180.5 18.8 L181.0 18.6 L181.6 18.6 L182.1 18.7 L182.7 19.0 L183.2 19.2 L183.8 19.2 L184.3 19.2 L184.9 19.2 L184.9 20.0 L184.3 20.0 L183.8 20.0 L183.2 20.0 L182.7 20.1 L182.1 20.4 L181.6 20.6 L181.0 20.5 L180.5 20.4 L179.9 20.5 L179.4 20.3 L178.8 20.6 L178.3 20.5 L177.7 20.2 L177.2 20.5 L176.6 20.7 L176.1 20.6 L175.5 20.6 L175.0 20.4 L174.4 20.3 L173.9 20.6 L173.3 20.1 L172.8 20.2 L172.2 20.2 L171.7 20.5 L171.1 20.5 L170.6 20.5 L170.0 20.4 L169.5 20.1 L168.9 20.2 L168.4 20.5 L167.8 20.5 L167.3 20.1 L166.7 20.3 L166.2 20.3 L165.6 20.6 L165.1 20.5 L164.5 20.4 L164.0 20.4 L163.4 20.2 L162.9 20.2 L162.3 20.2 L161.8 20.3 L161.2 20.4 L160.7 20.2 L160.1 20.1 L159.6 20.0 L159.0 20.0Z" fill="#f9c5b6" opacity="1"/><path d="M185.0 19.2 L185.6 19.0 L186.1 18.4 L186.7 18.0 L187.2 17.5 L187.8 17.7 L188.3 17.7 L188.9 17.2 L189.4 17.2 L190.0 17.4 L190.5 17.9 L191.1 17.5 L191.6 17.6 L192.2 18.1 L192.7 17.8 L193.3 17.2 L193.8 17.0 L194.4 16.9 L194.9 17.7 L195.5 17.2 L196.0 17.5 L196.6 17.7 L197.1 17.5 L197.7 17.2 L198.2 17.6 L198.8 17.5 L199.3 17.2 L199.9 17.6 L200.4 17.9 L201.0 17.5 L201.5 17.6 L202.1 17.5 L202.6 17.8 L203.2 18.3 L203.7 18.7 L204.3 19.1 L204.8 19.2 L204.8 20.0 L204.3 20.1 L203.7 20.7 L203.2 21.1 L202.6 21.5 L202.1 22.1 L201.5 21.8 L201.0 21.6 L200.4 21.2 L199.9 21.7 L199.3 22.2 L198.8 21.8 L198.2 21.7 L197.7 21.7 L197.1 21.8 L196.6 21.9 L196.0 22.0 L195.5 21.9 L194.9 22.2 L194.4 21.5 L193.8 22.2 L193.3 21.8 L192.7 21.4 L192.2 21.7 L191.6 21.8 L191.1 21.4 L190.5 21.2 L190.0 21.1 L189.4 21.4 L188.9 21.7 L188.3 21.4 L187.8 21.9 L187.2 21.4 L186.7 21.5 L186.1 20.9 L185.6 20.2 L185.0 20.0Z" fill="#f9c5b6" opacity="1"/><path d="M218.0 19.2 L218.6 19.2 L219.1 19.2 L219.7 19.2 L220.2 19.2 L220.8 19.0 L221.3 18.8 L221.9 18.7 L222.4 18.6 L223.0 18.7 L223.5 18.8 L224.1 19.0 L224.6 18.9 L225.2 18.7 L225.7 18.9 L226.3 19.0 L226.8 19.0 L227.4 18.6 L227.9 18.8 L228.5 18.7 L229.0 18.7 L229.6 18.9 L230.1 18.8 L230.7 19.1 L231.2 19.0 L231.8 18.8 L232.3 18.9 L232.9 18.9 L233.4 18.7 L234.0 18.9 L234.5 18.7 L235.1 18.6 L235.6 18.6 L236.2 18.8 L236.7 18.6 L237.3 18.7 L237.8 18.9 L238.4 19.0 L238.9 18.6 L239.5 18.6 L240.0 18.6 L240.6 18.7 L241.1 18.9 L241.7 18.9 L242.2 18.8 L242.8 18.6 L243.3 18.7 L243.9 18.7 L244.4 18.8 L245.0 18.7 L245.5 19.0 L246.1 18.9 L246.6 18.9 L247.2 19.0 L247.7 18.8 L248.3 19.0 L248.8 19.0 L249.4 19.0 L249.9 19.0 L250.5 18.7 L251.0 19.0 L251.6 18.8 L252.1 19.0 L252.7 18.7 L253.2 18.6 L253.8 18.7 L254.3 18.7 L254.9 18.9 L255.4 18.9 L256.0 18.9 L256.5 18.9 L257.1 19.0 L257.6 18.8 L258.2 19.2 L258.7 19.2 L259.3 19.2 L259.8 19.2 L260.4 19.2 L260.9 19.2 L261.5 19.2 L261.5 20.0 L260.9 20.0 L260.4 20.0 L259.8 20.0 L259.3 20.0 L258.7 20.1 L258.2 20.2 L257.6 20.3 L257.1 20.2 L256.5 20.3 L256.0 20.3 L255.4 20.5 L254.9 20.4 L254.3 20.2 L253.8 20.7 L253.2 20.4 L252.7 20.4 L252.1 20.4 L251.6 20.2 L251.0 20.3 L250.5 20.3 L249.9 20.3 L249.4 20.2 L248.8 20.4 L248.3 20.3 L247.7 20.3 L247.2 20.3 L246.6 20.4 L246.1 20.6 L245.5 20.2 L245.0 20.4 L244.4 20.5 L243.9 20.3 L243.3 20.7 L242.8 20.7 L242.2 20.4 L241.7 20.3 L241.1 20.3 L240.6 20.5 L240.0 20.5 L239.5 20.4 L238.9 20.5 L238.4 20.3 L237.8 20.2 L237.3 20.4 L236.7 20.5 L236.2 20.5 L235.6 20.6 L235.1 20.3 L234.5 20.3 L234.0 20.2 L233.4 20.4 L232.9 20.3 L232.3 20.3 L231.8 20.4 L231.2 20.3 L230.7 20.3 L230.1 20.2 L229.6 20.3 L229.0 20.2 L228.5 20.4 L227.9 20.3 L227.4 20.5 L226.8 20.1 L226.3 20.3 L225.7 20.2 L225.2 20.4 L224.6 20.3 L224.1 20.3 L223.5 20.5 L223.0 20.5 L222.4 20.4 L221.9 20.5 L221.3 20.5 L220.8 20.2 L220.2 20.1 L219.7 20.0 L219.1 20.0 L218.6 20.0 L218.0 20.0Z" fill="#f9c5b6" opacity="1"/></svg></div>
<div style="left:1042.2px;top:782px;width:260.79999999999995px;height:32px;background:#2d2d2d"></div>
</div></body></html>
